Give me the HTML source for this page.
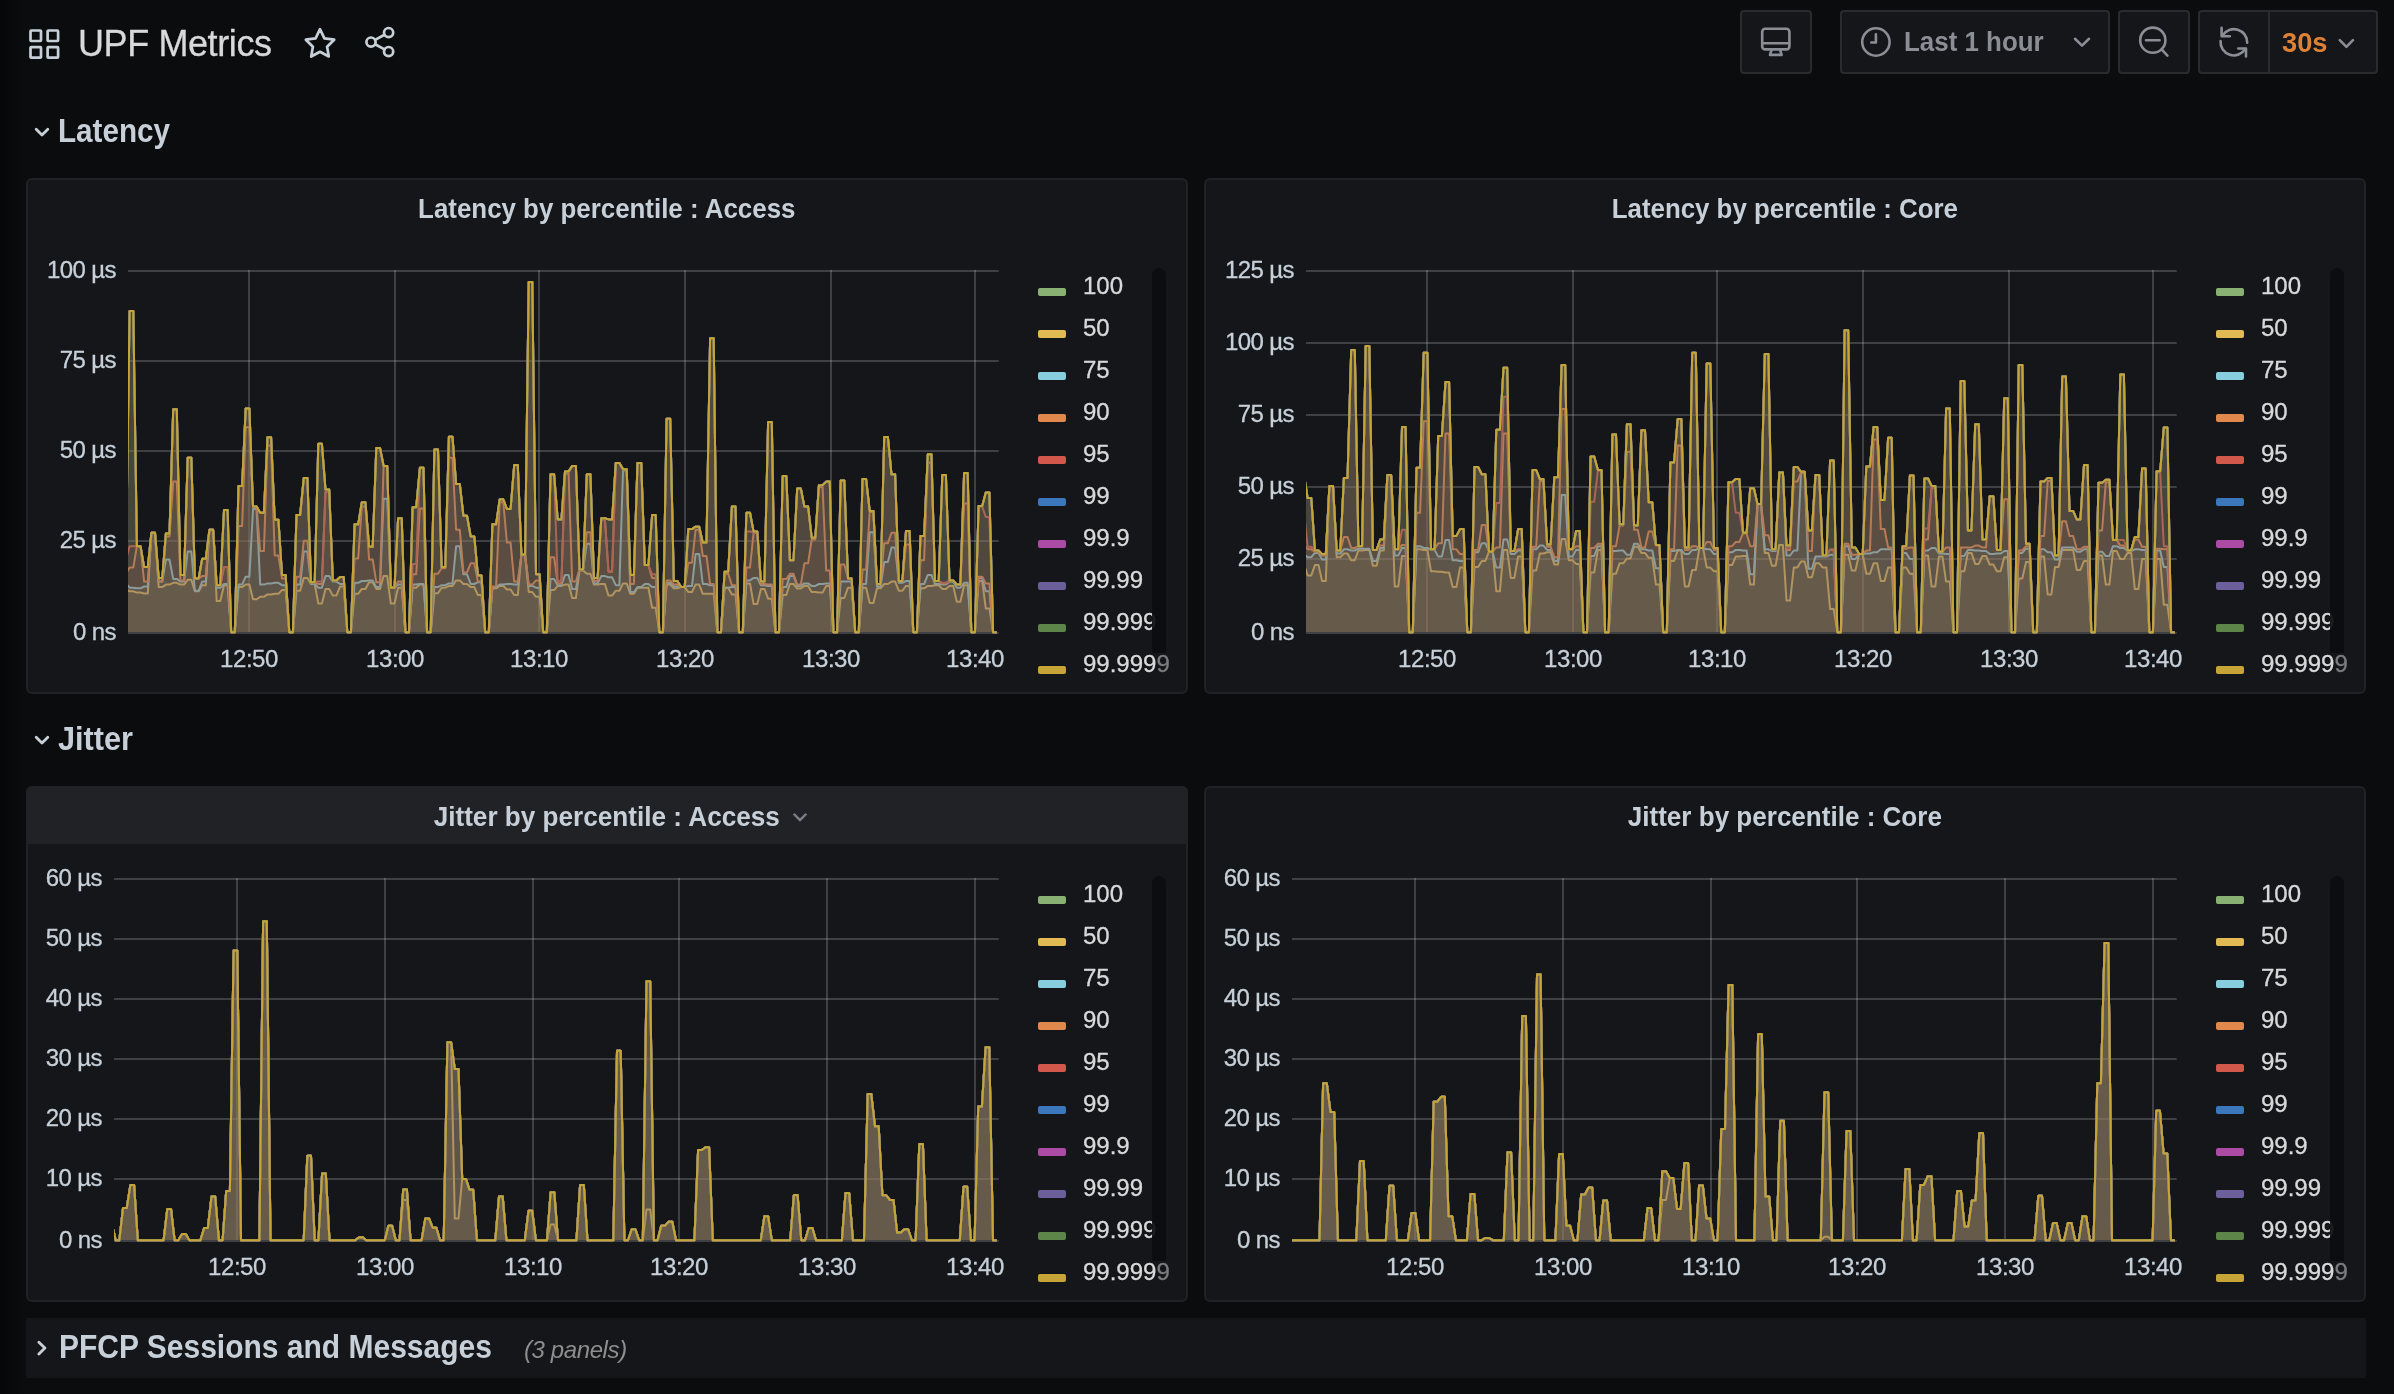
<!DOCTYPE html>
<html><head><meta charset="utf-8"><title>UPF Metrics</title><style>
*{box-sizing:border-box;margin:0;padding:0}
html,body{width:2394px;height:1394px;overflow:hidden;background:#0b0c0e}
body{font-family:"Liberation Sans",sans-serif;color:#c7d0d9;position:relative}
.txt{position:absolute;left:0;top:0;width:2394px;height:1394px;will-change:transform}
.shade{position:absolute;left:0;top:0;width:26px;height:1394px;background:linear-gradient(90deg,rgba(0,0,0,.45),rgba(0,0,0,0))}
.panel{position:absolute;width:1162px;height:516px;background:#141619;border:2px solid #202226;border-radius:6px}
.phead{position:absolute;width:1162px;height:58px;background:#202226;border-radius:6px 6px 0 0}
.ptitle{position:absolute;width:1162px;text-align:center;font-size:28.5px;font-weight:bold;line-height:40px;color:#c7d0d9;white-space:nowrap}
.ptitle .w{display:inline-block;position:relative}
.ptitle .s{display:inline-block;transform-origin:50% 50%}
.caret{position:absolute;left:100%;margin-left:-2.5px;top:17px}
.yl,.xl,.lt{-webkit-text-stroke:.3px currentColor}
.yl{position:absolute;width:100px;text-align:right;font-size:24px;line-height:30px;color:#c7d0d9;letter-spacing:-.6px;white-space:nowrap}
.xl{position:absolute;width:100px;text-align:center;font-size:24px;line-height:30px;color:#c7d0d9;letter-spacing:-.45px;white-space:nowrap}
.sw{position:absolute;width:28px;height:8px;border-radius:2px}
.lt{position:absolute;font-size:24px;line-height:30px;color:#d8d9da;white-space:nowrap}
.dim{color:#7b7c7e}
.sbar{position:absolute;width:14px;height:385px;background:#0c0d0f;border-radius:7px 7px 0 0;opacity:.92}
.row{position:absolute;left:26px;font-size:33px;font-weight:bold;line-height:40px;color:#c7d0d9;white-space:nowrap;transform-origin:0 50%}
.row svg{position:absolute;left:9px}
.row span.t{position:absolute;left:32px;top:0}
svg.main{position:absolute;left:0;top:0}
.title{position:absolute;left:78px;top:22px;font-size:36px;line-height:44px;color:#d8d9da;letter-spacing:-.4px;white-space:nowrap;-webkit-text-stroke:.3px #d8d9da}
.btn{position:absolute;top:10px;height:64px;background:#141619;border:2px solid #2a2b2f;border-radius:4px}
.btxt{position:absolute;font-size:28.5px;font-weight:bold;line-height:36px;white-space:nowrap;transform-origin:0 50%}
.crow{position:absolute;left:26px;top:1318px;width:2340px;height:60px;background:#141619;border-radius:0}
</style></head><body>
<div class="shade"></div>
<div class="txt">
<div class="title">UPF Metrics</div>
<div class="btn" style="left:1740px;width:72px"></div>
<div class="btn" style="left:1840px;width:270px"></div>
<div class="btn" style="left:2118px;width:72px"></div>
<div class="btn" style="left:2198px;width:180px"></div>
<div style="position:absolute;left:2268px;top:12px;width:2px;height:60px;background:#2a2b2f"></div>
<div class="btxt" style="left:1903.5px;top:23px;color:#8b8e95;transform:scaleX(.909)">Last 1 hour</div>
<div class="btxt" style="left:2282px;top:24px;color:#dc8136;transform:scaleX(.957)">30s</div>
<svg style="position:absolute;left:0;top:0" width="2394" height="90" viewBox="0 0 2394 90">
<g fill="none" stroke="#c7d0d9" stroke-width="2.7" stroke-linejoin="round" stroke-linecap="round">
<rect x="30.5" y="30.5" width="10.5" height="10.5" rx="0.8"/><rect x="47.6" y="30.5" width="10.5" height="10.5" rx="0.8"/>
<rect x="30.5" y="47.2" width="10.5" height="10.5" rx="0.8"/><rect x="47.6" y="47.2" width="10.5" height="10.5" rx="0.8"/>
<path d="M320 29.2 L324.4 38.3 L334.2 39.7 L327.1 46.7 L328.8 56.5 L320 51.8 L311.2 56.5 L312.9 46.7 L305.8 39.7 L315.6 38.3 Z"/>
<circle cx="388.6" cy="32.6" r="4.6"/><circle cx="371" cy="42.1" r="4.6"/><circle cx="388.6" cy="51.6" r="4.6"/>
<path d="M375.1 39.9 L384.5 34.8 M375.1 44.3 L384.5 49.4"/>
</g>
<g fill="none" stroke="#8b8e95" stroke-width="2.6" stroke-linejoin="round" stroke-linecap="round">
<!-- monitor -->
<rect x="1762.2" y="28.8" width="27.2" height="20.6" rx="3"/><path d="M1762.5 43.2 H1789.2"/><path d="M1771.5 50 L1770 54.9 H1781.6 L1780.1 50"/>
<!-- clock -->
<circle cx="1875.9" cy="42" r="13.7"/><path d="M1875.9 34.2 V42.5 H1871.3"/>
<!-- chevron -->
<path d="M2075 38.8 L2082 45.6 L2089 38.8"/>
<!-- zoom out -->
<circle cx="2152.8" cy="40.2" r="12.6"/><path d="M2146 40.2 H2159.6 M2161.6 49.4 L2167.4 55.6"/>
<!-- refresh -->
<path d="M2222.6 35.4 A13.3 13.3 0 0 1 2247.2 42.8"/><path d="M2220.6 41 A13.3 13.3 0 0 0 2245.3 48.9"/>
<path d="M2221.6 27.9 V36.2 H2229.8"/><path d="M2238.3 48.5 H2246 V56.4"/>
<!-- chevron 2 -->
<path d="M2339.8 40.2 L2346.4 46.8 L2353 40.2"/>
</g>
</svg>

<svg style="position:absolute;left:34px;top:127px" width="16" height="10" viewBox="0 0 16 10"><path d="M2.2 2.2 L8 8 L13.8 2.2" fill="none" stroke="#c7d0d9" stroke-width="2.8" stroke-linecap="round" stroke-linejoin="round"/></svg><div class="row" style="left:58px;top:111px;transform:scaleX(.898)">Latency</div>
<svg style="position:absolute;left:34px;top:735px" width="16" height="10" viewBox="0 0 16 10"><path d="M2.2 2.2 L8 8 L13.8 2.2" fill="none" stroke="#c7d0d9" stroke-width="2.8" stroke-linecap="round" stroke-linejoin="round"/></svg><div class="row" style="left:58px;top:719px;transform:scaleX(.93)">Jitter</div>
<div class="crow"></div>
<svg style="position:absolute;left:37px;top:1340px" width="10" height="16" viewBox="0 0 10 16"><path d="M1.9 2.2 L7.9 8.1 L1.9 14" fill="none" stroke="#c7d0d9" stroke-width="2.8" stroke-linecap="round" stroke-linejoin="round"/></svg><div class="row" style="left:59px;top:1327px;transform:scaleX(.909)">PFCP Sessions and Messages</div>
<div style="position:absolute;left:524px;top:1335px;font-size:24px;line-height:30px;font-style:italic;color:#8e8e8e;letter-spacing:-.4px">(3 panels)</div>
<div class="panel" style="left:26px;top:178px"></div>
<div class="panel" style="left:1204px;top:178px"></div>
<div class="panel" style="left:26px;top:786px"></div>
<div class="phead" style="left:26px;top:786px"></div>
<div class="panel" style="left:1204px;top:786px"></div>
<svg class="main" width="2394" height="1394" viewBox="0 0 2394 1394">
<rect x="128" y="270" width="870.7" height="2" fill="rgba(255,255,255,0.18)"/>
<rect x="128" y="360" width="870.7" height="2" fill="rgba(255,255,255,0.18)"/>
<rect x="128" y="450" width="870.7" height="2" fill="rgba(255,255,255,0.18)"/>
<rect x="128" y="540" width="870.7" height="2" fill="rgba(255,255,255,0.18)"/>
<rect x="128" y="632" width="870.7" height="2" fill="rgba(255,255,255,0.18)"/>
<rect x="248" y="270" width="2" height="362" fill="rgba(255,255,255,0.18)"/>
<rect x="394" y="270" width="2" height="362" fill="rgba(255,255,255,0.18)"/>
<rect x="538" y="270" width="2" height="362" fill="rgba(255,255,255,0.18)"/>
<rect x="684" y="270" width="2" height="362" fill="rgba(255,255,255,0.18)"/>
<rect x="830" y="270" width="2" height="362" fill="rgba(255,255,255,0.18)"/>
<rect x="974" y="270" width="2" height="362" fill="rgba(255,255,255,0.18)"/>
<clipPath id="c0"><rect x="128" y="265" width="870.7" height="369"/></clipPath>
<g clip-path="url(#c0)">
<path d="M126.0,560.0 L129.6,311.1 L133.3,311.1 L136.9,546.2 L140.5,546.2 L144.1,567.0 L147.8,567.0 L151.4,532.8 L155.0,532.8 L158.7,577.9 L162.3,577.9 L165.9,533.4 L169.5,533.4 L173.2,409.2 L176.8,409.2 L180.4,575.1 L184.1,575.1 L187.7,457.7 L191.3,457.7 L194.9,578.5 L198.6,578.5 L202.2,558.8 L205.8,558.8 L209.4,529.8 L213.1,529.8 L216.7,585.2 L220.3,585.2 L224.0,510.0 L227.6,510.0 L231.2,632.2 L234.8,632.2 L238.5,485.9 L242.1,485.9 L245.7,408.4 L249.4,408.4 L253.0,506.6 L256.6,506.6 L260.2,512.7 L263.9,512.7 L267.5,437.3 L271.1,437.3 L274.7,519.8 L278.4,519.8 L282.0,574.9 L285.6,574.9 L289.3,632.2 L292.9,632.2 L296.5,515.1 L300.1,515.1 L303.8,477.9 L307.4,477.9 L311.0,582.2 L314.7,582.2 L318.3,443.8 L321.9,443.8 L325.5,489.5 L329.2,489.5 L332.8,580.4 L336.4,580.4 L340.1,577.1 L343.7,577.1 L347.3,632.2 L350.9,632.2 L354.6,524.3 L358.2,524.3 L361.8,502.3 L365.4,502.3 L369.1,546.8 L372.7,546.8 L376.3,447.9 L380.0,447.9 L383.6,465.9 L387.2,465.9 L390.8,587.7 L394.5,587.7 L398.1,518.2 L401.7,518.2 L405.4,632.2 L409.0,632.2 L412.6,507.2 L416.2,507.2 L419.9,467.8 L423.5,467.8 L427.1,632.2 L430.7,632.2 L434.4,449.6 L438.0,449.6 L441.6,567.0 L445.3,567.0 L448.9,436.8 L452.5,436.8 L456.1,484.0 L459.8,484.0 L463.4,515.7 L467.0,515.7 L470.7,536.5 L474.3,536.5 L477.9,575.5 L481.5,575.5 L485.2,632.2 L488.8,632.2 L492.4,524.3 L496.1,524.3 L499.7,499.3 L503.3,499.3 L506.9,509.0 L510.6,509.0 L514.2,465.1 L517.8,465.1 L521.4,554.8 L525.1,554.8 L528.7,281.9 L532.3,281.9 L536.0,574.3 L539.6,574.3 L543.2,632.2 L546.8,632.2 L550.5,474.3 L554.1,474.3 L557.7,519.4 L561.4,519.4 L565.0,471.4 L568.6,471.4 L572.2,465.9 L575.9,465.9 L579.5,569.4 L583.1,569.4 L586.8,474.3 L590.4,474.3 L594.0,577.9 L597.6,577.9 L601.3,518.2 L604.9,518.2 L608.5,519.4 L612.1,519.4 L615.8,462.9 L619.4,462.9 L623.0,469.2 L626.7,469.2 L630.3,574.9 L633.9,574.9 L637.5,462.9 L641.2,462.9 L644.8,565.1 L648.4,565.1 L652.1,515.1 L655.7,515.1 L659.3,632.2 L662.9,632.2 L666.6,418.8 L670.2,418.8 L673.8,581.0 L677.4,581.0 L681.1,587.1 L684.7,587.1 L688.3,529.1 L692.0,529.1 L695.6,526.7 L699.2,526.7 L702.8,542.6 L706.5,542.6 L710.1,338.3 L713.7,338.3 L717.4,632.2 L721.0,632.2 L724.6,571.8 L728.2,571.8 L731.9,506.6 L735.5,506.6 L739.1,632.2 L742.8,632.2 L746.4,512.7 L750.0,512.7 L753.6,531.6 L757.3,531.6 L760.9,581.6 L764.5,581.6 L768.1,422.0 L771.8,422.0 L775.4,632.2 L779.0,632.2 L782.7,476.1 L786.3,476.1 L789.9,560.2 L793.5,560.2 L797.2,488.5 L800.8,488.5 L804.4,506.6 L808.1,506.6 L811.7,537.7 L815.3,537.7 L818.9,485.2 L822.6,485.2 L826.2,481.6 L829.8,481.6 L833.4,632.2 L837.1,632.2 L840.7,480.4 L844.3,480.4 L848.0,578.5 L851.6,578.5 L855.2,632.2 L858.8,632.2 L862.5,479.1 L866.1,479.1 L869.7,510.9 L873.4,510.9 L877.0,584.0 L880.6,584.0 L884.2,437.0 L887.9,437.0 L891.5,474.3 L895.1,474.3 L898.8,581.0 L902.4,581.0 L906.0,531.0 L909.6,531.0 L913.3,632.2 L916.9,632.2 L920.5,535.9 L924.1,535.9 L927.8,454.2 L931.4,454.2 L935.0,581.0 L938.7,581.0 L942.3,474.9 L945.9,474.9 L949.5,580.4 L953.2,580.4 L956.8,584.6 L960.4,584.6 L964.1,473.0 L967.7,473.0 L971.3,632.2 L974.9,632.2 L978.6,506.0 L982.2,506.0 L985.8,492.6 L989.4,492.6 L993.1,632.2 L996.7,632.2 L996.7,632 L126.0,632 Z" fill="#7EB26D" fill-opacity="0.1" stroke="none"/>
<path d="M126.0,560.0 L129.6,311.1 L133.3,311.1 L136.9,546.2 L140.5,546.2 L144.1,567.0 L147.8,567.0 L151.4,532.8 L155.0,532.8 L158.7,577.9 L162.3,577.9 L165.9,533.4 L169.5,533.4 L173.2,409.2 L176.8,409.2 L180.4,575.1 L184.1,575.1 L187.7,457.7 L191.3,457.7 L194.9,578.5 L198.6,578.5 L202.2,558.8 L205.8,558.8 L209.4,529.8 L213.1,529.8 L216.7,585.2 L220.3,585.2 L224.0,510.0 L227.6,510.0 L231.2,632.2 L234.8,632.2 L238.5,485.9 L242.1,485.9 L245.7,408.4 L249.4,408.4 L253.0,506.6 L256.6,506.6 L260.2,512.7 L263.9,512.7 L267.5,437.3 L271.1,437.3 L274.7,519.8 L278.4,519.8 L282.0,574.9 L285.6,574.9 L289.3,632.2 L292.9,632.2 L296.5,515.1 L300.1,515.1 L303.8,477.9 L307.4,477.9 L311.0,582.2 L314.7,582.2 L318.3,443.8 L321.9,443.8 L325.5,489.5 L329.2,489.5 L332.8,580.4 L336.4,580.4 L340.1,577.1 L343.7,577.1 L347.3,632.2 L350.9,632.2 L354.6,524.3 L358.2,524.3 L361.8,502.3 L365.4,502.3 L369.1,546.8 L372.7,546.8 L376.3,447.9 L380.0,447.9 L383.6,465.9 L387.2,465.9 L390.8,587.7 L394.5,587.7 L398.1,518.2 L401.7,518.2 L405.4,632.2 L409.0,632.2 L412.6,507.2 L416.2,507.2 L419.9,467.8 L423.5,467.8 L427.1,632.2 L430.7,632.2 L434.4,449.6 L438.0,449.6 L441.6,567.0 L445.3,567.0 L448.9,436.8 L452.5,436.8 L456.1,484.0 L459.8,484.0 L463.4,515.7 L467.0,515.7 L470.7,536.5 L474.3,536.5 L477.9,575.5 L481.5,575.5 L485.2,632.2 L488.8,632.2 L492.4,524.3 L496.1,524.3 L499.7,499.3 L503.3,499.3 L506.9,509.0 L510.6,509.0 L514.2,465.1 L517.8,465.1 L521.4,554.8 L525.1,554.8 L528.7,281.9 L532.3,281.9 L536.0,574.3 L539.6,574.3 L543.2,632.2 L546.8,632.2 L550.5,474.3 L554.1,474.3 L557.7,519.4 L561.4,519.4 L565.0,471.4 L568.6,471.4 L572.2,465.9 L575.9,465.9 L579.5,569.4 L583.1,569.4 L586.8,474.3 L590.4,474.3 L594.0,577.9 L597.6,577.9 L601.3,518.2 L604.9,518.2 L608.5,519.4 L612.1,519.4 L615.8,462.9 L619.4,462.9 L623.0,469.2 L626.7,469.2 L630.3,574.9 L633.9,574.9 L637.5,462.9 L641.2,462.9 L644.8,565.1 L648.4,565.1 L652.1,515.1 L655.7,515.1 L659.3,632.2 L662.9,632.2 L666.6,418.8 L670.2,418.8 L673.8,581.0 L677.4,581.0 L681.1,587.1 L684.7,587.1 L688.3,529.1 L692.0,529.1 L695.6,526.7 L699.2,526.7 L702.8,542.6 L706.5,542.6 L710.1,338.3 L713.7,338.3 L717.4,632.2 L721.0,632.2 L724.6,571.8 L728.2,571.8 L731.9,506.6 L735.5,506.6 L739.1,632.2 L742.8,632.2 L746.4,512.7 L750.0,512.7 L753.6,531.6 L757.3,531.6 L760.9,581.6 L764.5,581.6 L768.1,422.0 L771.8,422.0 L775.4,632.2 L779.0,632.2 L782.7,476.1 L786.3,476.1 L789.9,560.2 L793.5,560.2 L797.2,488.5 L800.8,488.5 L804.4,506.6 L808.1,506.6 L811.7,537.7 L815.3,537.7 L818.9,485.2 L822.6,485.2 L826.2,481.6 L829.8,481.6 L833.4,632.2 L837.1,632.2 L840.7,480.4 L844.3,480.4 L848.0,578.5 L851.6,578.5 L855.2,632.2 L858.8,632.2 L862.5,479.1 L866.1,479.1 L869.7,510.9 L873.4,510.9 L877.0,584.0 L880.6,584.0 L884.2,437.0 L887.9,437.0 L891.5,474.3 L895.1,474.3 L898.8,581.0 L902.4,581.0 L906.0,531.0 L909.6,531.0 L913.3,632.2 L916.9,632.2 L920.5,535.9 L924.1,535.9 L927.8,454.2 L931.4,454.2 L935.0,581.0 L938.7,581.0 L942.3,474.9 L945.9,474.9 L949.5,580.4 L953.2,580.4 L956.8,584.6 L960.4,584.6 L964.1,473.0 L967.7,473.0 L971.3,632.2 L974.9,632.2 L978.6,506.0 L982.2,506.0 L985.8,492.6 L989.4,492.6 L993.1,632.2 L996.7,632.2" fill="none" stroke="#89b174" stroke-width="2" stroke-linejoin="round"/>
<path d="M126.0,588.9 L129.6,591.3 L133.3,591.3 L136.9,592.6 L140.5,592.6 L144.1,593.4 L147.8,593.4 L151.4,532.8 L155.0,532.8 L158.7,587.1 L162.3,587.1 L165.9,584.6 L169.5,584.6 L173.2,582.8 L176.8,582.8 L180.4,584.6 L184.1,584.6 L187.7,579.8 L191.3,579.8 L194.9,591.3 L198.6,591.3 L202.2,585.2 L205.8,585.2 L209.4,529.8 L213.1,529.8 L216.7,601.1 L220.3,601.1 L224.0,585.2 L227.6,585.2 L231.2,632.2 L234.8,632.2 L238.5,587.1 L242.1,587.1 L245.7,584.6 L249.4,584.6 L253.0,599.3 L256.6,599.3 L260.2,596.8 L263.9,596.8 L267.5,594.4 L271.1,594.4 L274.7,593.8 L278.4,593.8 L282.0,590.1 L285.6,590.1 L289.3,632.2 L292.9,632.2 L296.5,590.7 L300.1,590.7 L303.8,577.9 L307.4,577.9 L311.0,584.0 L314.7,584.0 L318.3,603.5 L321.9,603.5 L325.5,588.9 L329.2,588.9 L332.8,595.6 L336.4,595.6 L340.1,586.5 L343.7,586.5 L347.3,632.2 L350.9,632.2 L354.6,593.8 L358.2,593.8 L361.8,588.9 L365.4,588.9 L369.1,582.2 L372.7,582.2 L376.3,588.9 L380.0,588.9 L383.6,576.1 L387.2,576.1 L390.8,603.5 L394.5,603.5 L398.1,587.7 L401.7,587.7 L405.4,632.2 L409.0,632.2 L412.6,587.7 L416.2,587.7 L419.9,584.6 L423.5,584.6 L427.1,632.2 L430.7,632.2 L434.4,593.2 L438.0,593.2 L441.6,587.7 L445.3,587.7 L448.9,585.9 L452.5,585.9 L456.1,580.4 L459.8,580.4 L463.4,584.0 L467.0,584.0 L470.7,587.1 L474.3,587.1 L477.9,595.0 L481.5,595.0 L485.2,632.2 L488.8,632.2 L492.4,588.3 L496.1,588.3 L499.7,585.9 L503.3,585.9 L506.9,589.5 L510.6,589.5 L514.2,595.0 L517.8,595.0 L521.4,554.8 L525.1,554.8 L528.7,592.0 L532.3,592.0 L536.0,596.8 L539.6,596.8 L543.2,632.2 L546.8,632.2 L550.5,590.1 L554.1,590.1 L557.7,585.9 L561.4,585.9 L565.0,584.6 L568.6,584.6 L572.2,598.0 L575.9,598.0 L579.5,570.6 L583.1,570.6 L586.8,573.7 L590.4,573.7 L594.0,584.6 L597.6,584.6 L601.3,584.0 L604.9,584.0 L608.5,595.6 L612.1,595.6 L615.8,590.7 L619.4,590.7 L623.0,583.4 L626.7,583.4 L630.3,593.8 L633.9,593.8 L637.5,587.7 L641.2,587.7 L644.8,587.7 L648.4,587.7 L652.1,607.8 L655.7,607.8 L659.3,632.2 L662.9,632.2 L666.6,584.6 L670.2,584.6 L673.8,588.3 L677.4,588.3 L681.1,587.1 L684.7,587.1 L688.3,592.0 L692.0,592.0 L695.6,584.6 L699.2,584.6 L702.8,593.8 L706.5,593.8 L710.1,593.8 L713.7,593.8 L717.4,632.2 L721.0,632.2 L724.6,587.7 L728.2,587.7 L731.9,594.4 L735.5,594.4 L739.1,632.2 L742.8,632.2 L746.4,583.4 L750.0,583.4 L753.6,604.1 L757.3,604.1 L760.9,588.9 L764.5,588.9 L768.1,598.7 L771.8,598.7 L775.4,632.2 L779.0,632.2 L782.7,595.0 L786.3,595.0 L789.9,584.0 L793.5,584.0 L797.2,588.5 L800.8,588.5 L804.4,585.9 L808.1,585.9 L811.7,592.0 L815.3,592.0 L818.9,592.6 L822.6,592.6 L826.2,585.9 L829.8,585.9 L833.4,632.2 L837.1,632.2 L840.7,598.0 L844.3,598.0 L848.0,587.7 L851.6,587.7 L855.2,632.2 L858.8,632.2 L862.5,587.7 L866.1,587.7 L869.7,602.9 L873.4,602.9 L877.0,588.3 L880.6,588.3 L884.2,584.0 L887.9,584.0 L891.5,581.6 L895.1,581.6 L898.8,590.7 L902.4,590.7 L906.0,585.9 L909.6,585.9 L913.3,632.2 L916.9,632.2 L920.5,588.3 L924.1,588.3 L927.8,585.9 L931.4,585.9 L935.0,585.2 L938.7,585.2 L942.3,588.9 L945.9,588.9 L949.5,585.9 L953.2,585.9 L956.8,601.7 L960.4,601.7 L964.1,585.2 L967.7,585.2 L971.3,632.2 L974.9,632.2 L978.6,581.0 L982.2,581.0 L985.8,608.4 L989.4,608.4 L993.1,632.2 L996.7,632.2 L996.7,632 L126.0,632 Z" fill="#EAB839" fill-opacity="0.1" stroke="none"/>
<path d="M126.0,588.9 L129.6,591.3 L133.3,591.3 L136.9,592.6 L140.5,592.6 L144.1,593.4 L147.8,593.4 L151.4,532.8 L155.0,532.8 L158.7,587.1 L162.3,587.1 L165.9,584.6 L169.5,584.6 L173.2,582.8 L176.8,582.8 L180.4,584.6 L184.1,584.6 L187.7,579.8 L191.3,579.8 L194.9,591.3 L198.6,591.3 L202.2,585.2 L205.8,585.2 L209.4,529.8 L213.1,529.8 L216.7,601.1 L220.3,601.1 L224.0,585.2 L227.6,585.2 L231.2,632.2 L234.8,632.2 L238.5,587.1 L242.1,587.1 L245.7,584.6 L249.4,584.6 L253.0,599.3 L256.6,599.3 L260.2,596.8 L263.9,596.8 L267.5,594.4 L271.1,594.4 L274.7,593.8 L278.4,593.8 L282.0,590.1 L285.6,590.1 L289.3,632.2 L292.9,632.2 L296.5,590.7 L300.1,590.7 L303.8,577.9 L307.4,577.9 L311.0,584.0 L314.7,584.0 L318.3,603.5 L321.9,603.5 L325.5,588.9 L329.2,588.9 L332.8,595.6 L336.4,595.6 L340.1,586.5 L343.7,586.5 L347.3,632.2 L350.9,632.2 L354.6,593.8 L358.2,593.8 L361.8,588.9 L365.4,588.9 L369.1,582.2 L372.7,582.2 L376.3,588.9 L380.0,588.9 L383.6,576.1 L387.2,576.1 L390.8,603.5 L394.5,603.5 L398.1,587.7 L401.7,587.7 L405.4,632.2 L409.0,632.2 L412.6,587.7 L416.2,587.7 L419.9,584.6 L423.5,584.6 L427.1,632.2 L430.7,632.2 L434.4,593.2 L438.0,593.2 L441.6,587.7 L445.3,587.7 L448.9,585.9 L452.5,585.9 L456.1,580.4 L459.8,580.4 L463.4,584.0 L467.0,584.0 L470.7,587.1 L474.3,587.1 L477.9,595.0 L481.5,595.0 L485.2,632.2 L488.8,632.2 L492.4,588.3 L496.1,588.3 L499.7,585.9 L503.3,585.9 L506.9,589.5 L510.6,589.5 L514.2,595.0 L517.8,595.0 L521.4,554.8 L525.1,554.8 L528.7,592.0 L532.3,592.0 L536.0,596.8 L539.6,596.8 L543.2,632.2 L546.8,632.2 L550.5,590.1 L554.1,590.1 L557.7,585.9 L561.4,585.9 L565.0,584.6 L568.6,584.6 L572.2,598.0 L575.9,598.0 L579.5,570.6 L583.1,570.6 L586.8,573.7 L590.4,573.7 L594.0,584.6 L597.6,584.6 L601.3,584.0 L604.9,584.0 L608.5,595.6 L612.1,595.6 L615.8,590.7 L619.4,590.7 L623.0,583.4 L626.7,583.4 L630.3,593.8 L633.9,593.8 L637.5,587.7 L641.2,587.7 L644.8,587.7 L648.4,587.7 L652.1,607.8 L655.7,607.8 L659.3,632.2 L662.9,632.2 L666.6,584.6 L670.2,584.6 L673.8,588.3 L677.4,588.3 L681.1,587.1 L684.7,587.1 L688.3,592.0 L692.0,592.0 L695.6,584.6 L699.2,584.6 L702.8,593.8 L706.5,593.8 L710.1,593.8 L713.7,593.8 L717.4,632.2 L721.0,632.2 L724.6,587.7 L728.2,587.7 L731.9,594.4 L735.5,594.4 L739.1,632.2 L742.8,632.2 L746.4,583.4 L750.0,583.4 L753.6,604.1 L757.3,604.1 L760.9,588.9 L764.5,588.9 L768.1,598.7 L771.8,598.7 L775.4,632.2 L779.0,632.2 L782.7,595.0 L786.3,595.0 L789.9,584.0 L793.5,584.0 L797.2,588.5 L800.8,588.5 L804.4,585.9 L808.1,585.9 L811.7,592.0 L815.3,592.0 L818.9,592.6 L822.6,592.6 L826.2,585.9 L829.8,585.9 L833.4,632.2 L837.1,632.2 L840.7,598.0 L844.3,598.0 L848.0,587.7 L851.6,587.7 L855.2,632.2 L858.8,632.2 L862.5,587.7 L866.1,587.7 L869.7,602.9 L873.4,602.9 L877.0,588.3 L880.6,588.3 L884.2,584.0 L887.9,584.0 L891.5,581.6 L895.1,581.6 L898.8,590.7 L902.4,590.7 L906.0,585.9 L909.6,585.9 L913.3,632.2 L916.9,632.2 L920.5,588.3 L924.1,588.3 L927.8,585.9 L931.4,585.9 L935.0,585.2 L938.7,585.2 L942.3,588.9 L945.9,588.9 L949.5,585.9 L953.2,585.9 L956.8,601.7 L960.4,601.7 L964.1,585.2 L967.7,585.2 L971.3,632.2 L974.9,632.2 L978.6,581.0 L982.2,581.0 L985.8,608.4 L989.4,608.4 L993.1,632.2 L996.7,632.2" fill="none" stroke="#e2ba53" stroke-width="2" stroke-linejoin="round"/>
<path d="M126.0,583.4 L129.6,587.7 L133.3,587.7 L136.9,588.3 L140.5,588.3 L144.1,586.5 L147.8,586.5 L151.4,532.8 L155.0,532.8 L158.7,581.6 L162.3,581.6 L165.9,559.6 L169.5,559.6 L173.2,578.9 L176.8,578.9 L180.4,581.6 L184.1,581.6 L187.7,551.5 L191.3,551.5 L194.9,590.7 L198.6,590.7 L202.2,581.6 L205.8,581.6 L209.4,529.8 L213.1,529.8 L216.7,587.7 L220.3,587.7 L224.0,584.0 L227.6,584.0 L231.2,632.2 L234.8,632.2 L238.5,584.6 L242.1,584.6 L245.7,576.7 L249.4,576.7 L253.0,509.0 L256.6,509.0 L260.2,584.6 L263.9,584.6 L267.5,583.4 L271.1,583.4 L274.7,582.8 L278.4,582.8 L282.0,585.2 L285.6,585.2 L289.3,632.2 L292.9,632.2 L296.5,584.6 L300.1,584.6 L303.8,551.5 L307.4,551.5 L311.0,584.0 L314.7,584.0 L318.3,587.7 L321.9,587.7 L325.5,576.1 L329.2,576.1 L332.8,581.6 L336.4,581.6 L340.1,584.0 L343.7,584.0 L347.3,632.2 L350.9,632.2 L354.6,582.8 L358.2,582.8 L361.8,581.0 L365.4,581.0 L369.1,580.4 L372.7,580.4 L376.3,587.1 L380.0,587.1 L383.6,498.7 L387.2,498.7 L390.8,587.7 L394.5,587.7 L398.1,584.6 L401.7,584.6 L405.4,632.2 L409.0,632.2 L412.6,584.6 L416.2,584.6 L419.9,584.0 L423.5,584.0 L427.1,632.2 L430.7,632.2 L434.4,587.1 L438.0,587.1 L441.6,585.2 L445.3,585.2 L448.9,583.4 L452.5,583.4 L456.1,546.2 L459.8,546.2 L463.4,574.3 L467.0,574.3 L470.7,584.0 L474.3,584.0 L477.9,582.2 L481.5,582.2 L485.2,632.2 L488.8,632.2 L492.4,587.1 L496.1,587.1 L499.7,584.6 L503.3,584.6 L506.9,584.0 L510.6,584.0 L514.2,584.6 L517.8,584.6 L521.4,554.8 L525.1,554.8 L528.7,585.9 L532.3,585.9 L536.0,587.7 L539.6,587.7 L543.2,632.2 L546.8,632.2 L550.5,579.1 L554.1,579.1 L557.7,585.2 L561.4,585.2 L565.0,574.9 L568.6,574.9 L572.2,588.9 L575.9,588.9 L579.5,569.4 L583.1,569.4 L586.8,543.8 L590.4,543.8 L594.0,583.4 L597.6,583.4 L601.3,576.1 L604.9,576.1 L608.5,577.3 L612.1,577.3 L615.8,585.2 L619.4,585.2 L623.0,470.6 L626.7,470.6 L630.3,592.0 L633.9,592.0 L637.5,587.1 L641.2,587.1 L644.8,584.0 L648.4,584.0 L652.1,587.1 L655.7,587.1 L659.3,632.2 L662.9,632.2 L666.6,582.8 L670.2,582.8 L673.8,586.5 L677.4,586.5 L681.1,587.1 L684.7,587.1 L688.3,585.9 L692.0,585.9 L695.6,554.1 L699.2,554.1 L702.8,584.0 L706.5,584.0 L710.1,585.2 L713.7,585.2 L717.4,632.2 L721.0,632.2 L724.6,587.7 L728.2,587.7 L731.9,587.1 L735.5,587.1 L739.1,632.2 L742.8,632.2 L746.4,580.4 L750.0,580.4 L753.6,577.9 L757.3,577.9 L760.9,585.2 L764.5,585.2 L768.1,585.9 L771.8,585.9 L775.4,632.2 L779.0,632.2 L782.7,587.1 L786.3,587.1 L789.9,575.9 L793.5,575.9 L797.2,585.9 L800.8,585.9 L804.4,583.4 L808.1,583.4 L811.7,585.9 L815.3,585.9 L818.9,584.0 L822.6,584.0 L826.2,583.4 L829.8,583.4 L833.4,632.2 L837.1,632.2 L840.7,581.6 L844.3,581.6 L848.0,581.6 L851.6,581.6 L855.2,632.2 L858.8,632.2 L862.5,584.0 L866.1,584.0 L869.7,532.2 L873.4,532.2 L877.0,586.5 L880.6,586.5 L884.2,562.1 L887.9,562.1 L891.5,547.4 L895.1,547.4 L898.8,582.8 L902.4,582.8 L906.0,581.0 L909.6,581.0 L913.3,632.2 L916.9,632.2 L920.5,584.0 L924.1,584.0 L927.8,574.9 L931.4,574.9 L935.0,584.0 L938.7,584.0 L942.3,584.6 L945.9,584.6 L949.5,581.6 L953.2,581.6 L956.8,587.7 L960.4,587.7 L964.1,582.8 L967.7,582.8 L971.3,632.2 L974.9,632.2 L978.6,577.9 L982.2,577.9 L985.8,591.3 L989.4,591.3 L993.1,632.2 L996.7,632.2 L996.7,632 L126.0,632 Z" fill="#6ED0E0" fill-opacity="0.1" stroke="none"/>
<path d="M126.0,583.4 L129.6,587.7 L133.3,587.7 L136.9,588.3 L140.5,588.3 L144.1,586.5 L147.8,586.5 L151.4,532.8 L155.0,532.8 L158.7,581.6 L162.3,581.6 L165.9,559.6 L169.5,559.6 L173.2,578.9 L176.8,578.9 L180.4,581.6 L184.1,581.6 L187.7,551.5 L191.3,551.5 L194.9,590.7 L198.6,590.7 L202.2,581.6 L205.8,581.6 L209.4,529.8 L213.1,529.8 L216.7,587.7 L220.3,587.7 L224.0,584.0 L227.6,584.0 L231.2,632.2 L234.8,632.2 L238.5,584.6 L242.1,584.6 L245.7,576.7 L249.4,576.7 L253.0,509.0 L256.6,509.0 L260.2,584.6 L263.9,584.6 L267.5,583.4 L271.1,583.4 L274.7,582.8 L278.4,582.8 L282.0,585.2 L285.6,585.2 L289.3,632.2 L292.9,632.2 L296.5,584.6 L300.1,584.6 L303.8,551.5 L307.4,551.5 L311.0,584.0 L314.7,584.0 L318.3,587.7 L321.9,587.7 L325.5,576.1 L329.2,576.1 L332.8,581.6 L336.4,581.6 L340.1,584.0 L343.7,584.0 L347.3,632.2 L350.9,632.2 L354.6,582.8 L358.2,582.8 L361.8,581.0 L365.4,581.0 L369.1,580.4 L372.7,580.4 L376.3,587.1 L380.0,587.1 L383.6,498.7 L387.2,498.7 L390.8,587.7 L394.5,587.7 L398.1,584.6 L401.7,584.6 L405.4,632.2 L409.0,632.2 L412.6,584.6 L416.2,584.6 L419.9,584.0 L423.5,584.0 L427.1,632.2 L430.7,632.2 L434.4,587.1 L438.0,587.1 L441.6,585.2 L445.3,585.2 L448.9,583.4 L452.5,583.4 L456.1,546.2 L459.8,546.2 L463.4,574.3 L467.0,574.3 L470.7,584.0 L474.3,584.0 L477.9,582.2 L481.5,582.2 L485.2,632.2 L488.8,632.2 L492.4,587.1 L496.1,587.1 L499.7,584.6 L503.3,584.6 L506.9,584.0 L510.6,584.0 L514.2,584.6 L517.8,584.6 L521.4,554.8 L525.1,554.8 L528.7,585.9 L532.3,585.9 L536.0,587.7 L539.6,587.7 L543.2,632.2 L546.8,632.2 L550.5,579.1 L554.1,579.1 L557.7,585.2 L561.4,585.2 L565.0,574.9 L568.6,574.9 L572.2,588.9 L575.9,588.9 L579.5,569.4 L583.1,569.4 L586.8,543.8 L590.4,543.8 L594.0,583.4 L597.6,583.4 L601.3,576.1 L604.9,576.1 L608.5,577.3 L612.1,577.3 L615.8,585.2 L619.4,585.2 L623.0,470.6 L626.7,470.6 L630.3,592.0 L633.9,592.0 L637.5,587.1 L641.2,587.1 L644.8,584.0 L648.4,584.0 L652.1,587.1 L655.7,587.1 L659.3,632.2 L662.9,632.2 L666.6,582.8 L670.2,582.8 L673.8,586.5 L677.4,586.5 L681.1,587.1 L684.7,587.1 L688.3,585.9 L692.0,585.9 L695.6,554.1 L699.2,554.1 L702.8,584.0 L706.5,584.0 L710.1,585.2 L713.7,585.2 L717.4,632.2 L721.0,632.2 L724.6,587.7 L728.2,587.7 L731.9,587.1 L735.5,587.1 L739.1,632.2 L742.8,632.2 L746.4,580.4 L750.0,580.4 L753.6,577.9 L757.3,577.9 L760.9,585.2 L764.5,585.2 L768.1,585.9 L771.8,585.9 L775.4,632.2 L779.0,632.2 L782.7,587.1 L786.3,587.1 L789.9,575.9 L793.5,575.9 L797.2,585.9 L800.8,585.9 L804.4,583.4 L808.1,583.4 L811.7,585.9 L815.3,585.9 L818.9,584.0 L822.6,584.0 L826.2,583.4 L829.8,583.4 L833.4,632.2 L837.1,632.2 L840.7,581.6 L844.3,581.6 L848.0,581.6 L851.6,581.6 L855.2,632.2 L858.8,632.2 L862.5,584.0 L866.1,584.0 L869.7,532.2 L873.4,532.2 L877.0,586.5 L880.6,586.5 L884.2,562.1 L887.9,562.1 L891.5,547.4 L895.1,547.4 L898.8,582.8 L902.4,582.8 L906.0,581.0 L909.6,581.0 L913.3,632.2 L916.9,632.2 L920.5,584.0 L924.1,584.0 L927.8,574.9 L931.4,574.9 L935.0,584.0 L938.7,584.0 L942.3,584.6 L945.9,584.6 L949.5,581.6 L953.2,581.6 L956.8,587.7 L960.4,587.7 L964.1,582.8 L967.7,582.8 L971.3,632.2 L974.9,632.2 L978.6,577.9 L982.2,577.9 L985.8,591.3 L989.4,591.3 L993.1,632.2 L996.7,632.2" fill="none" stroke="#86cede" stroke-width="2" stroke-linejoin="round"/>
<path d="M126.0,573.7 L129.6,567.6 L133.3,567.6 L136.9,546.2 L140.5,546.2 L144.1,581.6 L147.8,581.6 L151.4,532.8 L155.0,532.8 L158.7,581.6 L162.3,581.6 L165.9,536.5 L169.5,536.5 L173.2,481.6 L176.8,481.6 L180.4,580.4 L184.1,580.4 L187.7,457.7 L191.3,457.7 L194.9,578.5 L198.6,578.5 L202.2,576.1 L205.8,576.1 L209.4,529.8 L213.1,529.8 L216.7,585.2 L220.3,585.2 L224.0,567.0 L227.6,567.0 L231.2,632.2 L234.8,632.2 L238.5,526.1 L242.1,526.1 L245.7,427.3 L249.4,427.3 L253.0,506.6 L256.6,506.6 L260.2,551.1 L263.9,551.1 L267.5,445.6 L271.1,445.6 L274.7,555.4 L278.4,555.4 L282.0,578.5 L285.6,578.5 L289.3,632.2 L292.9,632.2 L296.5,576.7 L300.1,576.7 L303.8,540.7 L307.4,540.7 L311.0,582.2 L314.7,582.2 L318.3,584.0 L321.9,584.0 L325.5,492.0 L329.2,492.0 L332.8,580.4 L336.4,580.4 L340.1,577.1 L343.7,577.1 L347.3,632.2 L350.9,632.2 L354.6,558.4 L358.2,558.4 L361.8,506.6 L365.4,506.6 L369.1,559.6 L372.7,559.6 L376.3,582.2 L380.0,582.2 L383.6,465.9 L387.2,465.9 L390.8,587.7 L394.5,587.7 L398.1,581.6 L401.7,581.6 L405.4,632.2 L409.0,632.2 L412.6,574.3 L416.2,574.3 L419.9,508.4 L423.5,508.4 L427.1,632.2 L430.7,632.2 L434.4,573.7 L438.0,573.7 L441.6,568.2 L445.3,568.2 L448.9,457.8 L452.5,457.8 L456.1,529.8 L459.8,529.8 L463.4,572.4 L467.0,572.4 L470.7,563.3 L474.3,563.3 L477.9,581.6 L481.5,581.6 L485.2,632.2 L488.8,632.2 L492.4,586.5 L496.1,586.5 L499.7,502.3 L503.3,502.3 L506.9,542.6 L510.6,542.6 L514.2,581.6 L517.8,581.6 L521.4,554.8 L525.1,554.8 L528.7,584.6 L532.3,584.6 L536.0,580.4 L539.6,580.4 L543.2,632.2 L546.8,632.2 L550.5,557.2 L554.1,557.2 L557.7,583.4 L561.4,583.4 L565.0,473.7 L568.6,473.7 L572.2,581.6 L575.9,581.6 L579.5,569.4 L583.1,569.4 L586.8,532.2 L590.4,532.2 L594.0,581.0 L597.6,581.0 L601.3,519.4 L604.9,519.4 L608.5,571.8 L612.1,571.8 L615.8,462.9 L619.4,462.9 L623.0,469.2 L626.7,469.2 L630.3,584.0 L633.9,584.0 L637.5,462.9 L641.2,462.9 L644.8,565.1 L648.4,565.1 L652.1,577.9 L655.7,577.9 L659.3,632.2 L662.9,632.2 L666.6,580.4 L670.2,580.4 L673.8,584.6 L677.4,584.6 L681.1,587.1 L684.7,587.1 L688.3,562.7 L692.0,562.7 L695.6,529.8 L699.2,529.8 L702.8,556.0 L706.5,556.0 L710.1,584.0 L713.7,584.0 L717.4,632.2 L721.0,632.2 L724.6,573.7 L728.2,573.7 L731.9,585.2 L735.5,585.2 L739.1,632.2 L742.8,632.2 L746.4,567.6 L750.0,567.6 L753.6,532.8 L757.3,532.8 L760.9,584.0 L764.5,584.0 L768.1,584.6 L771.8,584.6 L775.4,632.2 L779.0,632.2 L782.7,579.1 L786.3,579.1 L789.9,573.7 L793.5,573.7 L797.2,584.6 L800.8,584.6 L804.4,563.3 L808.1,563.3 L811.7,539.5 L815.3,539.5 L818.9,487.1 L822.6,487.1 L826.2,570.6 L829.8,570.6 L833.4,632.2 L837.1,632.2 L840.7,564.5 L844.3,564.5 L848.0,578.5 L851.6,578.5 L855.2,632.2 L858.8,632.2 L862.5,569.4 L866.1,569.4 L869.7,512.1 L873.4,512.1 L877.0,584.0 L880.6,584.0 L884.2,543.2 L887.9,543.2 L891.5,532.8 L895.1,532.8 L898.8,581.0 L902.4,581.0 L906.0,544.4 L909.6,544.4 L913.3,632.2 L916.9,632.2 L920.5,560.2 L924.1,560.2 L927.8,462.7 L931.4,462.7 L935.0,581.0 L938.7,581.0 L942.3,583.4 L945.9,583.4 L949.5,580.4 L953.2,580.4 L956.8,584.6 L960.4,584.6 L964.1,503.5 L967.7,503.5 L971.3,632.2 L974.9,632.2 L978.6,576.7 L982.2,576.7 L985.8,583.4 L989.4,583.4 L993.1,632.2 L996.7,632.2 L996.7,632 L126.0,632 Z" fill="#EF843C" fill-opacity="0.1" stroke="none"/>
<path d="M126.0,573.7 L129.6,567.6 L133.3,567.6 L136.9,546.2 L140.5,546.2 L144.1,581.6 L147.8,581.6 L151.4,532.8 L155.0,532.8 L158.7,581.6 L162.3,581.6 L165.9,536.5 L169.5,536.5 L173.2,481.6 L176.8,481.6 L180.4,580.4 L184.1,580.4 L187.7,457.7 L191.3,457.7 L194.9,578.5 L198.6,578.5 L202.2,576.1 L205.8,576.1 L209.4,529.8 L213.1,529.8 L216.7,585.2 L220.3,585.2 L224.0,567.0 L227.6,567.0 L231.2,632.2 L234.8,632.2 L238.5,526.1 L242.1,526.1 L245.7,427.3 L249.4,427.3 L253.0,506.6 L256.6,506.6 L260.2,551.1 L263.9,551.1 L267.5,445.6 L271.1,445.6 L274.7,555.4 L278.4,555.4 L282.0,578.5 L285.6,578.5 L289.3,632.2 L292.9,632.2 L296.5,576.7 L300.1,576.7 L303.8,540.7 L307.4,540.7 L311.0,582.2 L314.7,582.2 L318.3,584.0 L321.9,584.0 L325.5,492.0 L329.2,492.0 L332.8,580.4 L336.4,580.4 L340.1,577.1 L343.7,577.1 L347.3,632.2 L350.9,632.2 L354.6,558.4 L358.2,558.4 L361.8,506.6 L365.4,506.6 L369.1,559.6 L372.7,559.6 L376.3,582.2 L380.0,582.2 L383.6,465.9 L387.2,465.9 L390.8,587.7 L394.5,587.7 L398.1,581.6 L401.7,581.6 L405.4,632.2 L409.0,632.2 L412.6,574.3 L416.2,574.3 L419.9,508.4 L423.5,508.4 L427.1,632.2 L430.7,632.2 L434.4,573.7 L438.0,573.7 L441.6,568.2 L445.3,568.2 L448.9,457.8 L452.5,457.8 L456.1,529.8 L459.8,529.8 L463.4,572.4 L467.0,572.4 L470.7,563.3 L474.3,563.3 L477.9,581.6 L481.5,581.6 L485.2,632.2 L488.8,632.2 L492.4,586.5 L496.1,586.5 L499.7,502.3 L503.3,502.3 L506.9,542.6 L510.6,542.6 L514.2,581.6 L517.8,581.6 L521.4,554.8 L525.1,554.8 L528.7,584.6 L532.3,584.6 L536.0,580.4 L539.6,580.4 L543.2,632.2 L546.8,632.2 L550.5,557.2 L554.1,557.2 L557.7,583.4 L561.4,583.4 L565.0,473.7 L568.6,473.7 L572.2,581.6 L575.9,581.6 L579.5,569.4 L583.1,569.4 L586.8,532.2 L590.4,532.2 L594.0,581.0 L597.6,581.0 L601.3,519.4 L604.9,519.4 L608.5,571.8 L612.1,571.8 L615.8,462.9 L619.4,462.9 L623.0,469.2 L626.7,469.2 L630.3,584.0 L633.9,584.0 L637.5,462.9 L641.2,462.9 L644.8,565.1 L648.4,565.1 L652.1,577.9 L655.7,577.9 L659.3,632.2 L662.9,632.2 L666.6,580.4 L670.2,580.4 L673.8,584.6 L677.4,584.6 L681.1,587.1 L684.7,587.1 L688.3,562.7 L692.0,562.7 L695.6,529.8 L699.2,529.8 L702.8,556.0 L706.5,556.0 L710.1,584.0 L713.7,584.0 L717.4,632.2 L721.0,632.2 L724.6,573.7 L728.2,573.7 L731.9,585.2 L735.5,585.2 L739.1,632.2 L742.8,632.2 L746.4,567.6 L750.0,567.6 L753.6,532.8 L757.3,532.8 L760.9,584.0 L764.5,584.0 L768.1,584.6 L771.8,584.6 L775.4,632.2 L779.0,632.2 L782.7,579.1 L786.3,579.1 L789.9,573.7 L793.5,573.7 L797.2,584.6 L800.8,584.6 L804.4,563.3 L808.1,563.3 L811.7,539.5 L815.3,539.5 L818.9,487.1 L822.6,487.1 L826.2,570.6 L829.8,570.6 L833.4,632.2 L837.1,632.2 L840.7,564.5 L844.3,564.5 L848.0,578.5 L851.6,578.5 L855.2,632.2 L858.8,632.2 L862.5,569.4 L866.1,569.4 L869.7,512.1 L873.4,512.1 L877.0,584.0 L880.6,584.0 L884.2,543.2 L887.9,543.2 L891.5,532.8 L895.1,532.8 L898.8,581.0 L902.4,581.0 L906.0,544.4 L909.6,544.4 L913.3,632.2 L916.9,632.2 L920.5,560.2 L924.1,560.2 L927.8,462.7 L931.4,462.7 L935.0,581.0 L938.7,581.0 L942.3,583.4 L945.9,583.4 L949.5,580.4 L953.2,580.4 L956.8,584.6 L960.4,584.6 L964.1,503.5 L967.7,503.5 L971.3,632.2 L974.9,632.2 L978.6,576.7 L982.2,576.7 L985.8,583.4 L989.4,583.4 L993.1,632.2 L996.7,632.2" fill="none" stroke="#e1894c" stroke-width="2" stroke-linejoin="round"/>
<path d="M126.0,560.0 L129.6,546.2 L133.3,546.2 L136.9,546.2 L140.5,546.2 L144.1,567.0 L147.8,567.0 L151.4,532.8 L155.0,532.8 L158.7,577.9 L162.3,577.9 L165.9,533.4 L169.5,533.4 L173.2,409.2 L176.8,409.2 L180.4,575.1 L184.1,575.1 L187.7,457.7 L191.3,457.7 L194.9,578.5 L198.6,578.5 L202.2,558.8 L205.8,558.8 L209.4,529.8 L213.1,529.8 L216.7,585.2 L220.3,585.2 L224.0,567.0 L227.6,567.0 L231.2,632.2 L234.8,632.2 L238.5,485.9 L242.1,485.9 L245.7,408.4 L249.4,408.4 L253.0,506.6 L256.6,506.6 L260.2,512.7 L263.9,512.7 L267.5,437.3 L271.1,437.3 L274.7,519.8 L278.4,519.8 L282.0,574.9 L285.6,574.9 L289.3,632.2 L292.9,632.2 L296.5,515.1 L300.1,515.1 L303.8,477.9 L307.4,477.9 L311.0,582.2 L314.7,582.2 L318.3,581.6 L321.9,581.6 L325.5,492.0 L329.2,492.0 L332.8,580.4 L336.4,580.4 L340.1,577.1 L343.7,577.1 L347.3,632.2 L350.9,632.2 L354.6,524.3 L358.2,524.3 L361.8,502.3 L365.4,502.3 L369.1,546.8 L372.7,546.8 L376.3,447.9 L380.0,447.9 L383.6,465.9 L387.2,465.9 L390.8,587.7 L394.5,587.7 L398.1,518.2 L401.7,518.2 L405.4,632.2 L409.0,632.2 L412.6,563.9 L416.2,563.9 L419.9,467.8 L423.5,467.8 L427.1,632.2 L430.7,632.2 L434.4,449.6 L438.0,449.6 L441.6,567.0 L445.3,567.0 L448.9,436.8 L452.5,436.8 L456.1,484.0 L459.8,484.0 L463.4,515.7 L467.0,515.7 L470.7,536.5 L474.3,536.5 L477.9,575.5 L481.5,575.5 L485.2,632.2 L488.8,632.2 L492.4,524.3 L496.1,524.3 L499.7,499.3 L503.3,499.3 L506.9,509.0 L510.6,509.0 L514.2,465.1 L517.8,465.1 L521.4,554.8 L525.1,554.8 L528.7,281.9 L532.3,281.9 L536.0,574.3 L539.6,574.3 L543.2,632.2 L546.8,632.2 L550.5,474.9 L554.1,474.9 L557.7,581.0 L561.4,581.0 L565.0,472.4 L568.6,472.4 L572.2,465.9 L575.9,465.9 L579.5,569.4 L583.1,569.4 L586.8,474.3 L590.4,474.3 L594.0,577.9 L597.6,577.9 L601.3,519.4 L604.9,519.4 L608.5,571.2 L612.1,571.2 L615.8,462.9 L619.4,462.9 L623.0,469.2 L626.7,469.2 L630.3,574.9 L633.9,574.9 L637.5,462.9 L641.2,462.9 L644.8,565.1 L648.4,565.1 L652.1,574.3 L655.7,574.3 L659.3,632.2 L662.9,632.2 L666.6,418.8 L670.2,418.8 L673.8,581.0 L677.4,581.0 L681.1,587.1 L684.7,587.1 L688.3,529.1 L692.0,529.1 L695.6,526.7 L699.2,526.7 L702.8,542.6 L706.5,542.6 L710.1,338.3 L713.7,338.3 L717.4,632.2 L721.0,632.2 L724.6,571.8 L728.2,571.8 L731.9,506.6 L735.5,506.6 L739.1,632.2 L742.8,632.2 L746.4,531.6 L750.0,531.6 L753.6,532.2 L757.3,532.2 L760.9,581.6 L764.5,581.6 L768.1,422.0 L771.8,422.0 L775.4,632.2 L779.0,632.2 L782.7,476.1 L786.3,476.1 L789.9,560.2 L793.5,560.2 L797.2,488.5 L800.8,488.5 L804.4,506.6 L808.1,506.6 L811.7,537.7 L815.3,537.7 L818.9,485.2 L822.6,485.2 L826.2,481.6 L829.8,481.6 L833.4,632.2 L837.1,632.2 L840.7,480.4 L844.3,480.4 L848.0,578.5 L851.6,578.5 L855.2,632.2 L858.8,632.2 L862.5,479.1 L866.1,479.1 L869.7,510.9 L873.4,510.9 L877.0,584.0 L880.6,584.0 L884.2,437.0 L887.9,437.0 L891.5,474.3 L895.1,474.3 L898.8,581.0 L902.4,581.0 L906.0,531.0 L909.6,531.0 L913.3,632.2 L916.9,632.2 L920.5,535.9 L924.1,535.9 L927.8,454.2 L931.4,454.2 L935.0,581.0 L938.7,581.0 L942.3,582.8 L945.9,582.8 L949.5,580.4 L953.2,580.4 L956.8,584.6 L960.4,584.6 L964.1,473.0 L967.7,473.0 L971.3,632.2 L974.9,632.2 L978.6,506.6 L982.2,506.6 L985.8,517.0 L989.4,517.0 L993.1,632.2 L996.7,632.2 L996.7,632 L126.0,632 Z" fill="#E24D42" fill-opacity="0.1" stroke="none"/>
<path d="M126.0,560.0 L129.6,546.2 L133.3,546.2 L136.9,546.2 L140.5,546.2 L144.1,567.0 L147.8,567.0 L151.4,532.8 L155.0,532.8 L158.7,577.9 L162.3,577.9 L165.9,533.4 L169.5,533.4 L173.2,409.2 L176.8,409.2 L180.4,575.1 L184.1,575.1 L187.7,457.7 L191.3,457.7 L194.9,578.5 L198.6,578.5 L202.2,558.8 L205.8,558.8 L209.4,529.8 L213.1,529.8 L216.7,585.2 L220.3,585.2 L224.0,567.0 L227.6,567.0 L231.2,632.2 L234.8,632.2 L238.5,485.9 L242.1,485.9 L245.7,408.4 L249.4,408.4 L253.0,506.6 L256.6,506.6 L260.2,512.7 L263.9,512.7 L267.5,437.3 L271.1,437.3 L274.7,519.8 L278.4,519.8 L282.0,574.9 L285.6,574.9 L289.3,632.2 L292.9,632.2 L296.5,515.1 L300.1,515.1 L303.8,477.9 L307.4,477.9 L311.0,582.2 L314.7,582.2 L318.3,581.6 L321.9,581.6 L325.5,492.0 L329.2,492.0 L332.8,580.4 L336.4,580.4 L340.1,577.1 L343.7,577.1 L347.3,632.2 L350.9,632.2 L354.6,524.3 L358.2,524.3 L361.8,502.3 L365.4,502.3 L369.1,546.8 L372.7,546.8 L376.3,447.9 L380.0,447.9 L383.6,465.9 L387.2,465.9 L390.8,587.7 L394.5,587.7 L398.1,518.2 L401.7,518.2 L405.4,632.2 L409.0,632.2 L412.6,563.9 L416.2,563.9 L419.9,467.8 L423.5,467.8 L427.1,632.2 L430.7,632.2 L434.4,449.6 L438.0,449.6 L441.6,567.0 L445.3,567.0 L448.9,436.8 L452.5,436.8 L456.1,484.0 L459.8,484.0 L463.4,515.7 L467.0,515.7 L470.7,536.5 L474.3,536.5 L477.9,575.5 L481.5,575.5 L485.2,632.2 L488.8,632.2 L492.4,524.3 L496.1,524.3 L499.7,499.3 L503.3,499.3 L506.9,509.0 L510.6,509.0 L514.2,465.1 L517.8,465.1 L521.4,554.8 L525.1,554.8 L528.7,281.9 L532.3,281.9 L536.0,574.3 L539.6,574.3 L543.2,632.2 L546.8,632.2 L550.5,474.9 L554.1,474.9 L557.7,581.0 L561.4,581.0 L565.0,472.4 L568.6,472.4 L572.2,465.9 L575.9,465.9 L579.5,569.4 L583.1,569.4 L586.8,474.3 L590.4,474.3 L594.0,577.9 L597.6,577.9 L601.3,519.4 L604.9,519.4 L608.5,571.2 L612.1,571.2 L615.8,462.9 L619.4,462.9 L623.0,469.2 L626.7,469.2 L630.3,574.9 L633.9,574.9 L637.5,462.9 L641.2,462.9 L644.8,565.1 L648.4,565.1 L652.1,574.3 L655.7,574.3 L659.3,632.2 L662.9,632.2 L666.6,418.8 L670.2,418.8 L673.8,581.0 L677.4,581.0 L681.1,587.1 L684.7,587.1 L688.3,529.1 L692.0,529.1 L695.6,526.7 L699.2,526.7 L702.8,542.6 L706.5,542.6 L710.1,338.3 L713.7,338.3 L717.4,632.2 L721.0,632.2 L724.6,571.8 L728.2,571.8 L731.9,506.6 L735.5,506.6 L739.1,632.2 L742.8,632.2 L746.4,531.6 L750.0,531.6 L753.6,532.2 L757.3,532.2 L760.9,581.6 L764.5,581.6 L768.1,422.0 L771.8,422.0 L775.4,632.2 L779.0,632.2 L782.7,476.1 L786.3,476.1 L789.9,560.2 L793.5,560.2 L797.2,488.5 L800.8,488.5 L804.4,506.6 L808.1,506.6 L811.7,537.7 L815.3,537.7 L818.9,485.2 L822.6,485.2 L826.2,481.6 L829.8,481.6 L833.4,632.2 L837.1,632.2 L840.7,480.4 L844.3,480.4 L848.0,578.5 L851.6,578.5 L855.2,632.2 L858.8,632.2 L862.5,479.1 L866.1,479.1 L869.7,510.9 L873.4,510.9 L877.0,584.0 L880.6,584.0 L884.2,437.0 L887.9,437.0 L891.5,474.3 L895.1,474.3 L898.8,581.0 L902.4,581.0 L906.0,531.0 L909.6,531.0 L913.3,632.2 L916.9,632.2 L920.5,535.9 L924.1,535.9 L927.8,454.2 L931.4,454.2 L935.0,581.0 L938.7,581.0 L942.3,582.8 L945.9,582.8 L949.5,580.4 L953.2,580.4 L956.8,584.6 L960.4,584.6 L964.1,473.0 L967.7,473.0 L971.3,632.2 L974.9,632.2 L978.6,506.6 L982.2,506.6 L985.8,517.0 L989.4,517.0 L993.1,632.2 L996.7,632.2" fill="none" stroke="#d1584a" stroke-width="2" stroke-linejoin="round"/>
<path d="M126.0,560.0 L129.6,311.1 L133.3,311.1 L136.9,546.2 L140.5,546.2 L144.1,567.0 L147.8,567.0 L151.4,532.8 L155.0,532.8 L158.7,577.9 L162.3,577.9 L165.9,533.4 L169.5,533.4 L173.2,409.2 L176.8,409.2 L180.4,575.1 L184.1,575.1 L187.7,457.7 L191.3,457.7 L194.9,578.5 L198.6,578.5 L202.2,558.8 L205.8,558.8 L209.4,529.8 L213.1,529.8 L216.7,585.2 L220.3,585.2 L224.0,510.0 L227.6,510.0 L231.2,632.2 L234.8,632.2 L238.5,485.9 L242.1,485.9 L245.7,408.4 L249.4,408.4 L253.0,506.6 L256.6,506.6 L260.2,512.7 L263.9,512.7 L267.5,437.3 L271.1,437.3 L274.7,519.8 L278.4,519.8 L282.0,574.9 L285.6,574.9 L289.3,632.2 L292.9,632.2 L296.5,515.1 L300.1,515.1 L303.8,477.9 L307.4,477.9 L311.0,582.2 L314.7,582.2 L318.3,443.8 L321.9,443.8 L325.5,489.5 L329.2,489.5 L332.8,580.4 L336.4,580.4 L340.1,577.1 L343.7,577.1 L347.3,632.2 L350.9,632.2 L354.6,524.3 L358.2,524.3 L361.8,502.3 L365.4,502.3 L369.1,546.8 L372.7,546.8 L376.3,447.9 L380.0,447.9 L383.6,465.9 L387.2,465.9 L390.8,587.7 L394.5,587.7 L398.1,518.2 L401.7,518.2 L405.4,632.2 L409.0,632.2 L412.6,507.2 L416.2,507.2 L419.9,467.8 L423.5,467.8 L427.1,632.2 L430.7,632.2 L434.4,449.6 L438.0,449.6 L441.6,567.0 L445.3,567.0 L448.9,436.8 L452.5,436.8 L456.1,484.0 L459.8,484.0 L463.4,515.7 L467.0,515.7 L470.7,536.5 L474.3,536.5 L477.9,575.5 L481.5,575.5 L485.2,632.2 L488.8,632.2 L492.4,524.3 L496.1,524.3 L499.7,499.3 L503.3,499.3 L506.9,509.0 L510.6,509.0 L514.2,465.1 L517.8,465.1 L521.4,554.8 L525.1,554.8 L528.7,281.9 L532.3,281.9 L536.0,574.3 L539.6,574.3 L543.2,632.2 L546.8,632.2 L550.5,474.3 L554.1,474.3 L557.7,519.4 L561.4,519.4 L565.0,471.4 L568.6,471.4 L572.2,465.9 L575.9,465.9 L579.5,569.4 L583.1,569.4 L586.8,474.3 L590.4,474.3 L594.0,577.9 L597.6,577.9 L601.3,518.2 L604.9,518.2 L608.5,519.4 L612.1,519.4 L615.8,462.9 L619.4,462.9 L623.0,469.2 L626.7,469.2 L630.3,574.9 L633.9,574.9 L637.5,462.9 L641.2,462.9 L644.8,565.1 L648.4,565.1 L652.1,515.1 L655.7,515.1 L659.3,632.2 L662.9,632.2 L666.6,418.8 L670.2,418.8 L673.8,581.0 L677.4,581.0 L681.1,587.1 L684.7,587.1 L688.3,529.1 L692.0,529.1 L695.6,526.7 L699.2,526.7 L702.8,542.6 L706.5,542.6 L710.1,338.3 L713.7,338.3 L717.4,632.2 L721.0,632.2 L724.6,571.8 L728.2,571.8 L731.9,506.6 L735.5,506.6 L739.1,632.2 L742.8,632.2 L746.4,512.7 L750.0,512.7 L753.6,531.6 L757.3,531.6 L760.9,581.6 L764.5,581.6 L768.1,422.0 L771.8,422.0 L775.4,632.2 L779.0,632.2 L782.7,476.1 L786.3,476.1 L789.9,560.2 L793.5,560.2 L797.2,488.5 L800.8,488.5 L804.4,506.6 L808.1,506.6 L811.7,537.7 L815.3,537.7 L818.9,485.2 L822.6,485.2 L826.2,481.6 L829.8,481.6 L833.4,632.2 L837.1,632.2 L840.7,480.4 L844.3,480.4 L848.0,578.5 L851.6,578.5 L855.2,632.2 L858.8,632.2 L862.5,479.1 L866.1,479.1 L869.7,510.9 L873.4,510.9 L877.0,584.0 L880.6,584.0 L884.2,437.0 L887.9,437.0 L891.5,474.3 L895.1,474.3 L898.8,581.0 L902.4,581.0 L906.0,531.0 L909.6,531.0 L913.3,632.2 L916.9,632.2 L920.5,535.9 L924.1,535.9 L927.8,454.2 L931.4,454.2 L935.0,581.0 L938.7,581.0 L942.3,474.9 L945.9,474.9 L949.5,580.4 L953.2,580.4 L956.8,584.6 L960.4,584.6 L964.1,473.0 L967.7,473.0 L971.3,632.2 L974.9,632.2 L978.6,506.0 L982.2,506.0 L985.8,492.6 L989.4,492.6 L993.1,632.2 L996.7,632.2 L996.7,632 L126.0,632 Z" fill="#1F78C1" fill-opacity="0.1" stroke="none"/>
<path d="M126.0,560.0 L129.6,311.1 L133.3,311.1 L136.9,546.2 L140.5,546.2 L144.1,567.0 L147.8,567.0 L151.4,532.8 L155.0,532.8 L158.7,577.9 L162.3,577.9 L165.9,533.4 L169.5,533.4 L173.2,409.2 L176.8,409.2 L180.4,575.1 L184.1,575.1 L187.7,457.7 L191.3,457.7 L194.9,578.5 L198.6,578.5 L202.2,558.8 L205.8,558.8 L209.4,529.8 L213.1,529.8 L216.7,585.2 L220.3,585.2 L224.0,510.0 L227.6,510.0 L231.2,632.2 L234.8,632.2 L238.5,485.9 L242.1,485.9 L245.7,408.4 L249.4,408.4 L253.0,506.6 L256.6,506.6 L260.2,512.7 L263.9,512.7 L267.5,437.3 L271.1,437.3 L274.7,519.8 L278.4,519.8 L282.0,574.9 L285.6,574.9 L289.3,632.2 L292.9,632.2 L296.5,515.1 L300.1,515.1 L303.8,477.9 L307.4,477.9 L311.0,582.2 L314.7,582.2 L318.3,443.8 L321.9,443.8 L325.5,489.5 L329.2,489.5 L332.8,580.4 L336.4,580.4 L340.1,577.1 L343.7,577.1 L347.3,632.2 L350.9,632.2 L354.6,524.3 L358.2,524.3 L361.8,502.3 L365.4,502.3 L369.1,546.8 L372.7,546.8 L376.3,447.9 L380.0,447.9 L383.6,465.9 L387.2,465.9 L390.8,587.7 L394.5,587.7 L398.1,518.2 L401.7,518.2 L405.4,632.2 L409.0,632.2 L412.6,507.2 L416.2,507.2 L419.9,467.8 L423.5,467.8 L427.1,632.2 L430.7,632.2 L434.4,449.6 L438.0,449.6 L441.6,567.0 L445.3,567.0 L448.9,436.8 L452.5,436.8 L456.1,484.0 L459.8,484.0 L463.4,515.7 L467.0,515.7 L470.7,536.5 L474.3,536.5 L477.9,575.5 L481.5,575.5 L485.2,632.2 L488.8,632.2 L492.4,524.3 L496.1,524.3 L499.7,499.3 L503.3,499.3 L506.9,509.0 L510.6,509.0 L514.2,465.1 L517.8,465.1 L521.4,554.8 L525.1,554.8 L528.7,281.9 L532.3,281.9 L536.0,574.3 L539.6,574.3 L543.2,632.2 L546.8,632.2 L550.5,474.3 L554.1,474.3 L557.7,519.4 L561.4,519.4 L565.0,471.4 L568.6,471.4 L572.2,465.9 L575.9,465.9 L579.5,569.4 L583.1,569.4 L586.8,474.3 L590.4,474.3 L594.0,577.9 L597.6,577.9 L601.3,518.2 L604.9,518.2 L608.5,519.4 L612.1,519.4 L615.8,462.9 L619.4,462.9 L623.0,469.2 L626.7,469.2 L630.3,574.9 L633.9,574.9 L637.5,462.9 L641.2,462.9 L644.8,565.1 L648.4,565.1 L652.1,515.1 L655.7,515.1 L659.3,632.2 L662.9,632.2 L666.6,418.8 L670.2,418.8 L673.8,581.0 L677.4,581.0 L681.1,587.1 L684.7,587.1 L688.3,529.1 L692.0,529.1 L695.6,526.7 L699.2,526.7 L702.8,542.6 L706.5,542.6 L710.1,338.3 L713.7,338.3 L717.4,632.2 L721.0,632.2 L724.6,571.8 L728.2,571.8 L731.9,506.6 L735.5,506.6 L739.1,632.2 L742.8,632.2 L746.4,512.7 L750.0,512.7 L753.6,531.6 L757.3,531.6 L760.9,581.6 L764.5,581.6 L768.1,422.0 L771.8,422.0 L775.4,632.2 L779.0,632.2 L782.7,476.1 L786.3,476.1 L789.9,560.2 L793.5,560.2 L797.2,488.5 L800.8,488.5 L804.4,506.6 L808.1,506.6 L811.7,537.7 L815.3,537.7 L818.9,485.2 L822.6,485.2 L826.2,481.6 L829.8,481.6 L833.4,632.2 L837.1,632.2 L840.7,480.4 L844.3,480.4 L848.0,578.5 L851.6,578.5 L855.2,632.2 L858.8,632.2 L862.5,479.1 L866.1,479.1 L869.7,510.9 L873.4,510.9 L877.0,584.0 L880.6,584.0 L884.2,437.0 L887.9,437.0 L891.5,474.3 L895.1,474.3 L898.8,581.0 L902.4,581.0 L906.0,531.0 L909.6,531.0 L913.3,632.2 L916.9,632.2 L920.5,535.9 L924.1,535.9 L927.8,454.2 L931.4,454.2 L935.0,581.0 L938.7,581.0 L942.3,474.9 L945.9,474.9 L949.5,580.4 L953.2,580.4 L956.8,584.6 L960.4,584.6 L964.1,473.0 L967.7,473.0 L971.3,632.2 L974.9,632.2 L978.6,506.0 L982.2,506.0 L985.8,492.6 L989.4,492.6 L993.1,632.2 L996.7,632.2" fill="none" stroke="#3c76bb" stroke-width="2" stroke-linejoin="round"/>
<path d="M126.0,560.0 L129.6,311.1 L133.3,311.1 L136.9,546.2 L140.5,546.2 L144.1,567.0 L147.8,567.0 L151.4,532.8 L155.0,532.8 L158.7,577.9 L162.3,577.9 L165.9,533.4 L169.5,533.4 L173.2,409.2 L176.8,409.2 L180.4,575.1 L184.1,575.1 L187.7,457.7 L191.3,457.7 L194.9,578.5 L198.6,578.5 L202.2,558.8 L205.8,558.8 L209.4,529.8 L213.1,529.8 L216.7,585.2 L220.3,585.2 L224.0,510.0 L227.6,510.0 L231.2,632.2 L234.8,632.2 L238.5,485.9 L242.1,485.9 L245.7,408.4 L249.4,408.4 L253.0,506.6 L256.6,506.6 L260.2,512.7 L263.9,512.7 L267.5,437.3 L271.1,437.3 L274.7,519.8 L278.4,519.8 L282.0,574.9 L285.6,574.9 L289.3,632.2 L292.9,632.2 L296.5,515.1 L300.1,515.1 L303.8,477.9 L307.4,477.9 L311.0,582.2 L314.7,582.2 L318.3,443.8 L321.9,443.8 L325.5,489.5 L329.2,489.5 L332.8,580.4 L336.4,580.4 L340.1,577.1 L343.7,577.1 L347.3,632.2 L350.9,632.2 L354.6,524.3 L358.2,524.3 L361.8,502.3 L365.4,502.3 L369.1,546.8 L372.7,546.8 L376.3,447.9 L380.0,447.9 L383.6,465.9 L387.2,465.9 L390.8,587.7 L394.5,587.7 L398.1,518.2 L401.7,518.2 L405.4,632.2 L409.0,632.2 L412.6,507.2 L416.2,507.2 L419.9,467.8 L423.5,467.8 L427.1,632.2 L430.7,632.2 L434.4,449.6 L438.0,449.6 L441.6,567.0 L445.3,567.0 L448.9,436.8 L452.5,436.8 L456.1,484.0 L459.8,484.0 L463.4,515.7 L467.0,515.7 L470.7,536.5 L474.3,536.5 L477.9,575.5 L481.5,575.5 L485.2,632.2 L488.8,632.2 L492.4,524.3 L496.1,524.3 L499.7,499.3 L503.3,499.3 L506.9,509.0 L510.6,509.0 L514.2,465.1 L517.8,465.1 L521.4,554.8 L525.1,554.8 L528.7,281.9 L532.3,281.9 L536.0,574.3 L539.6,574.3 L543.2,632.2 L546.8,632.2 L550.5,474.3 L554.1,474.3 L557.7,519.4 L561.4,519.4 L565.0,471.4 L568.6,471.4 L572.2,465.9 L575.9,465.9 L579.5,569.4 L583.1,569.4 L586.8,474.3 L590.4,474.3 L594.0,577.9 L597.6,577.9 L601.3,518.2 L604.9,518.2 L608.5,519.4 L612.1,519.4 L615.8,462.9 L619.4,462.9 L623.0,469.2 L626.7,469.2 L630.3,574.9 L633.9,574.9 L637.5,462.9 L641.2,462.9 L644.8,565.1 L648.4,565.1 L652.1,515.1 L655.7,515.1 L659.3,632.2 L662.9,632.2 L666.6,418.8 L670.2,418.8 L673.8,581.0 L677.4,581.0 L681.1,587.1 L684.7,587.1 L688.3,529.1 L692.0,529.1 L695.6,526.7 L699.2,526.7 L702.8,542.6 L706.5,542.6 L710.1,338.3 L713.7,338.3 L717.4,632.2 L721.0,632.2 L724.6,571.8 L728.2,571.8 L731.9,506.6 L735.5,506.6 L739.1,632.2 L742.8,632.2 L746.4,512.7 L750.0,512.7 L753.6,531.6 L757.3,531.6 L760.9,581.6 L764.5,581.6 L768.1,422.0 L771.8,422.0 L775.4,632.2 L779.0,632.2 L782.7,476.1 L786.3,476.1 L789.9,560.2 L793.5,560.2 L797.2,488.5 L800.8,488.5 L804.4,506.6 L808.1,506.6 L811.7,537.7 L815.3,537.7 L818.9,485.2 L822.6,485.2 L826.2,481.6 L829.8,481.6 L833.4,632.2 L837.1,632.2 L840.7,480.4 L844.3,480.4 L848.0,578.5 L851.6,578.5 L855.2,632.2 L858.8,632.2 L862.5,479.1 L866.1,479.1 L869.7,510.9 L873.4,510.9 L877.0,584.0 L880.6,584.0 L884.2,437.0 L887.9,437.0 L891.5,474.3 L895.1,474.3 L898.8,581.0 L902.4,581.0 L906.0,531.0 L909.6,531.0 L913.3,632.2 L916.9,632.2 L920.5,535.9 L924.1,535.9 L927.8,454.2 L931.4,454.2 L935.0,581.0 L938.7,581.0 L942.3,474.9 L945.9,474.9 L949.5,580.4 L953.2,580.4 L956.8,584.6 L960.4,584.6 L964.1,473.0 L967.7,473.0 L971.3,632.2 L974.9,632.2 L978.6,506.0 L982.2,506.0 L985.8,492.6 L989.4,492.6 L993.1,632.2 L996.7,632.2 L996.7,632 L126.0,632 Z" fill="#BA43A9" fill-opacity="0.1" stroke="none"/>
<path d="M126.0,560.0 L129.6,311.1 L133.3,311.1 L136.9,546.2 L140.5,546.2 L144.1,567.0 L147.8,567.0 L151.4,532.8 L155.0,532.8 L158.7,577.9 L162.3,577.9 L165.9,533.4 L169.5,533.4 L173.2,409.2 L176.8,409.2 L180.4,575.1 L184.1,575.1 L187.7,457.7 L191.3,457.7 L194.9,578.5 L198.6,578.5 L202.2,558.8 L205.8,558.8 L209.4,529.8 L213.1,529.8 L216.7,585.2 L220.3,585.2 L224.0,510.0 L227.6,510.0 L231.2,632.2 L234.8,632.2 L238.5,485.9 L242.1,485.9 L245.7,408.4 L249.4,408.4 L253.0,506.6 L256.6,506.6 L260.2,512.7 L263.9,512.7 L267.5,437.3 L271.1,437.3 L274.7,519.8 L278.4,519.8 L282.0,574.9 L285.6,574.9 L289.3,632.2 L292.9,632.2 L296.5,515.1 L300.1,515.1 L303.8,477.9 L307.4,477.9 L311.0,582.2 L314.7,582.2 L318.3,443.8 L321.9,443.8 L325.5,489.5 L329.2,489.5 L332.8,580.4 L336.4,580.4 L340.1,577.1 L343.7,577.1 L347.3,632.2 L350.9,632.2 L354.6,524.3 L358.2,524.3 L361.8,502.3 L365.4,502.3 L369.1,546.8 L372.7,546.8 L376.3,447.9 L380.0,447.9 L383.6,465.9 L387.2,465.9 L390.8,587.7 L394.5,587.7 L398.1,518.2 L401.7,518.2 L405.4,632.2 L409.0,632.2 L412.6,507.2 L416.2,507.2 L419.9,467.8 L423.5,467.8 L427.1,632.2 L430.7,632.2 L434.4,449.6 L438.0,449.6 L441.6,567.0 L445.3,567.0 L448.9,436.8 L452.5,436.8 L456.1,484.0 L459.8,484.0 L463.4,515.7 L467.0,515.7 L470.7,536.5 L474.3,536.5 L477.9,575.5 L481.5,575.5 L485.2,632.2 L488.8,632.2 L492.4,524.3 L496.1,524.3 L499.7,499.3 L503.3,499.3 L506.9,509.0 L510.6,509.0 L514.2,465.1 L517.8,465.1 L521.4,554.8 L525.1,554.8 L528.7,281.9 L532.3,281.9 L536.0,574.3 L539.6,574.3 L543.2,632.2 L546.8,632.2 L550.5,474.3 L554.1,474.3 L557.7,519.4 L561.4,519.4 L565.0,471.4 L568.6,471.4 L572.2,465.9 L575.9,465.9 L579.5,569.4 L583.1,569.4 L586.8,474.3 L590.4,474.3 L594.0,577.9 L597.6,577.9 L601.3,518.2 L604.9,518.2 L608.5,519.4 L612.1,519.4 L615.8,462.9 L619.4,462.9 L623.0,469.2 L626.7,469.2 L630.3,574.9 L633.9,574.9 L637.5,462.9 L641.2,462.9 L644.8,565.1 L648.4,565.1 L652.1,515.1 L655.7,515.1 L659.3,632.2 L662.9,632.2 L666.6,418.8 L670.2,418.8 L673.8,581.0 L677.4,581.0 L681.1,587.1 L684.7,587.1 L688.3,529.1 L692.0,529.1 L695.6,526.7 L699.2,526.7 L702.8,542.6 L706.5,542.6 L710.1,338.3 L713.7,338.3 L717.4,632.2 L721.0,632.2 L724.6,571.8 L728.2,571.8 L731.9,506.6 L735.5,506.6 L739.1,632.2 L742.8,632.2 L746.4,512.7 L750.0,512.7 L753.6,531.6 L757.3,531.6 L760.9,581.6 L764.5,581.6 L768.1,422.0 L771.8,422.0 L775.4,632.2 L779.0,632.2 L782.7,476.1 L786.3,476.1 L789.9,560.2 L793.5,560.2 L797.2,488.5 L800.8,488.5 L804.4,506.6 L808.1,506.6 L811.7,537.7 L815.3,537.7 L818.9,485.2 L822.6,485.2 L826.2,481.6 L829.8,481.6 L833.4,632.2 L837.1,632.2 L840.7,480.4 L844.3,480.4 L848.0,578.5 L851.6,578.5 L855.2,632.2 L858.8,632.2 L862.5,479.1 L866.1,479.1 L869.7,510.9 L873.4,510.9 L877.0,584.0 L880.6,584.0 L884.2,437.0 L887.9,437.0 L891.5,474.3 L895.1,474.3 L898.8,581.0 L902.4,581.0 L906.0,531.0 L909.6,531.0 L913.3,632.2 L916.9,632.2 L920.5,535.9 L924.1,535.9 L927.8,454.2 L931.4,454.2 L935.0,581.0 L938.7,581.0 L942.3,474.9 L945.9,474.9 L949.5,580.4 L953.2,580.4 L956.8,584.6 L960.4,584.6 L964.1,473.0 L967.7,473.0 L971.3,632.2 L974.9,632.2 L978.6,506.0 L982.2,506.0 L985.8,492.6 L989.4,492.6 L993.1,632.2 L996.7,632.2" fill="none" stroke="#ac4ba4" stroke-width="2" stroke-linejoin="round"/>
<path d="M126.0,560.0 L129.6,311.1 L133.3,311.1 L136.9,546.2 L140.5,546.2 L144.1,567.0 L147.8,567.0 L151.4,532.8 L155.0,532.8 L158.7,577.9 L162.3,577.9 L165.9,533.4 L169.5,533.4 L173.2,409.2 L176.8,409.2 L180.4,575.1 L184.1,575.1 L187.7,457.7 L191.3,457.7 L194.9,578.5 L198.6,578.5 L202.2,558.8 L205.8,558.8 L209.4,529.8 L213.1,529.8 L216.7,585.2 L220.3,585.2 L224.0,510.0 L227.6,510.0 L231.2,632.2 L234.8,632.2 L238.5,485.9 L242.1,485.9 L245.7,408.4 L249.4,408.4 L253.0,506.6 L256.6,506.6 L260.2,512.7 L263.9,512.7 L267.5,437.3 L271.1,437.3 L274.7,519.8 L278.4,519.8 L282.0,574.9 L285.6,574.9 L289.3,632.2 L292.9,632.2 L296.5,515.1 L300.1,515.1 L303.8,477.9 L307.4,477.9 L311.0,582.2 L314.7,582.2 L318.3,443.8 L321.9,443.8 L325.5,489.5 L329.2,489.5 L332.8,580.4 L336.4,580.4 L340.1,577.1 L343.7,577.1 L347.3,632.2 L350.9,632.2 L354.6,524.3 L358.2,524.3 L361.8,502.3 L365.4,502.3 L369.1,546.8 L372.7,546.8 L376.3,447.9 L380.0,447.9 L383.6,465.9 L387.2,465.9 L390.8,587.7 L394.5,587.7 L398.1,518.2 L401.7,518.2 L405.4,632.2 L409.0,632.2 L412.6,507.2 L416.2,507.2 L419.9,467.8 L423.5,467.8 L427.1,632.2 L430.7,632.2 L434.4,449.6 L438.0,449.6 L441.6,567.0 L445.3,567.0 L448.9,436.8 L452.5,436.8 L456.1,484.0 L459.8,484.0 L463.4,515.7 L467.0,515.7 L470.7,536.5 L474.3,536.5 L477.9,575.5 L481.5,575.5 L485.2,632.2 L488.8,632.2 L492.4,524.3 L496.1,524.3 L499.7,499.3 L503.3,499.3 L506.9,509.0 L510.6,509.0 L514.2,465.1 L517.8,465.1 L521.4,554.8 L525.1,554.8 L528.7,281.9 L532.3,281.9 L536.0,574.3 L539.6,574.3 L543.2,632.2 L546.8,632.2 L550.5,474.3 L554.1,474.3 L557.7,519.4 L561.4,519.4 L565.0,471.4 L568.6,471.4 L572.2,465.9 L575.9,465.9 L579.5,569.4 L583.1,569.4 L586.8,474.3 L590.4,474.3 L594.0,577.9 L597.6,577.9 L601.3,518.2 L604.9,518.2 L608.5,519.4 L612.1,519.4 L615.8,462.9 L619.4,462.9 L623.0,469.2 L626.7,469.2 L630.3,574.9 L633.9,574.9 L637.5,462.9 L641.2,462.9 L644.8,565.1 L648.4,565.1 L652.1,515.1 L655.7,515.1 L659.3,632.2 L662.9,632.2 L666.6,418.8 L670.2,418.8 L673.8,581.0 L677.4,581.0 L681.1,587.1 L684.7,587.1 L688.3,529.1 L692.0,529.1 L695.6,526.7 L699.2,526.7 L702.8,542.6 L706.5,542.6 L710.1,338.3 L713.7,338.3 L717.4,632.2 L721.0,632.2 L724.6,571.8 L728.2,571.8 L731.9,506.6 L735.5,506.6 L739.1,632.2 L742.8,632.2 L746.4,512.7 L750.0,512.7 L753.6,531.6 L757.3,531.6 L760.9,581.6 L764.5,581.6 L768.1,422.0 L771.8,422.0 L775.4,632.2 L779.0,632.2 L782.7,476.1 L786.3,476.1 L789.9,560.2 L793.5,560.2 L797.2,488.5 L800.8,488.5 L804.4,506.6 L808.1,506.6 L811.7,537.7 L815.3,537.7 L818.9,485.2 L822.6,485.2 L826.2,481.6 L829.8,481.6 L833.4,632.2 L837.1,632.2 L840.7,480.4 L844.3,480.4 L848.0,578.5 L851.6,578.5 L855.2,632.2 L858.8,632.2 L862.5,479.1 L866.1,479.1 L869.7,510.9 L873.4,510.9 L877.0,584.0 L880.6,584.0 L884.2,437.0 L887.9,437.0 L891.5,474.3 L895.1,474.3 L898.8,581.0 L902.4,581.0 L906.0,531.0 L909.6,531.0 L913.3,632.2 L916.9,632.2 L920.5,535.9 L924.1,535.9 L927.8,454.2 L931.4,454.2 L935.0,581.0 L938.7,581.0 L942.3,474.9 L945.9,474.9 L949.5,580.4 L953.2,580.4 L956.8,584.6 L960.4,584.6 L964.1,473.0 L967.7,473.0 L971.3,632.2 L974.9,632.2 L978.6,506.0 L982.2,506.0 L985.8,492.6 L989.4,492.6 L993.1,632.2 L996.7,632.2 L996.7,632 L126.0,632 Z" fill="#705DA0" fill-opacity="0.1" stroke="none"/>
<path d="M126.0,560.0 L129.6,311.1 L133.3,311.1 L136.9,546.2 L140.5,546.2 L144.1,567.0 L147.8,567.0 L151.4,532.8 L155.0,532.8 L158.7,577.9 L162.3,577.9 L165.9,533.4 L169.5,533.4 L173.2,409.2 L176.8,409.2 L180.4,575.1 L184.1,575.1 L187.7,457.7 L191.3,457.7 L194.9,578.5 L198.6,578.5 L202.2,558.8 L205.8,558.8 L209.4,529.8 L213.1,529.8 L216.7,585.2 L220.3,585.2 L224.0,510.0 L227.6,510.0 L231.2,632.2 L234.8,632.2 L238.5,485.9 L242.1,485.9 L245.7,408.4 L249.4,408.4 L253.0,506.6 L256.6,506.6 L260.2,512.7 L263.9,512.7 L267.5,437.3 L271.1,437.3 L274.7,519.8 L278.4,519.8 L282.0,574.9 L285.6,574.9 L289.3,632.2 L292.9,632.2 L296.5,515.1 L300.1,515.1 L303.8,477.9 L307.4,477.9 L311.0,582.2 L314.7,582.2 L318.3,443.8 L321.9,443.8 L325.5,489.5 L329.2,489.5 L332.8,580.4 L336.4,580.4 L340.1,577.1 L343.7,577.1 L347.3,632.2 L350.9,632.2 L354.6,524.3 L358.2,524.3 L361.8,502.3 L365.4,502.3 L369.1,546.8 L372.7,546.8 L376.3,447.9 L380.0,447.9 L383.6,465.9 L387.2,465.9 L390.8,587.7 L394.5,587.7 L398.1,518.2 L401.7,518.2 L405.4,632.2 L409.0,632.2 L412.6,507.2 L416.2,507.2 L419.9,467.8 L423.5,467.8 L427.1,632.2 L430.7,632.2 L434.4,449.6 L438.0,449.6 L441.6,567.0 L445.3,567.0 L448.9,436.8 L452.5,436.8 L456.1,484.0 L459.8,484.0 L463.4,515.7 L467.0,515.7 L470.7,536.5 L474.3,536.5 L477.9,575.5 L481.5,575.5 L485.2,632.2 L488.8,632.2 L492.4,524.3 L496.1,524.3 L499.7,499.3 L503.3,499.3 L506.9,509.0 L510.6,509.0 L514.2,465.1 L517.8,465.1 L521.4,554.8 L525.1,554.8 L528.7,281.9 L532.3,281.9 L536.0,574.3 L539.6,574.3 L543.2,632.2 L546.8,632.2 L550.5,474.3 L554.1,474.3 L557.7,519.4 L561.4,519.4 L565.0,471.4 L568.6,471.4 L572.2,465.9 L575.9,465.9 L579.5,569.4 L583.1,569.4 L586.8,474.3 L590.4,474.3 L594.0,577.9 L597.6,577.9 L601.3,518.2 L604.9,518.2 L608.5,519.4 L612.1,519.4 L615.8,462.9 L619.4,462.9 L623.0,469.2 L626.7,469.2 L630.3,574.9 L633.9,574.9 L637.5,462.9 L641.2,462.9 L644.8,565.1 L648.4,565.1 L652.1,515.1 L655.7,515.1 L659.3,632.2 L662.9,632.2 L666.6,418.8 L670.2,418.8 L673.8,581.0 L677.4,581.0 L681.1,587.1 L684.7,587.1 L688.3,529.1 L692.0,529.1 L695.6,526.7 L699.2,526.7 L702.8,542.6 L706.5,542.6 L710.1,338.3 L713.7,338.3 L717.4,632.2 L721.0,632.2 L724.6,571.8 L728.2,571.8 L731.9,506.6 L735.5,506.6 L739.1,632.2 L742.8,632.2 L746.4,512.7 L750.0,512.7 L753.6,531.6 L757.3,531.6 L760.9,581.6 L764.5,581.6 L768.1,422.0 L771.8,422.0 L775.4,632.2 L779.0,632.2 L782.7,476.1 L786.3,476.1 L789.9,560.2 L793.5,560.2 L797.2,488.5 L800.8,488.5 L804.4,506.6 L808.1,506.6 L811.7,537.7 L815.3,537.7 L818.9,485.2 L822.6,485.2 L826.2,481.6 L829.8,481.6 L833.4,632.2 L837.1,632.2 L840.7,480.4 L844.3,480.4 L848.0,578.5 L851.6,578.5 L855.2,632.2 L858.8,632.2 L862.5,479.1 L866.1,479.1 L869.7,510.9 L873.4,510.9 L877.0,584.0 L880.6,584.0 L884.2,437.0 L887.9,437.0 L891.5,474.3 L895.1,474.3 L898.8,581.0 L902.4,581.0 L906.0,531.0 L909.6,531.0 L913.3,632.2 L916.9,632.2 L920.5,535.9 L924.1,535.9 L927.8,454.2 L931.4,454.2 L935.0,581.0 L938.7,581.0 L942.3,474.9 L945.9,474.9 L949.5,580.4 L953.2,580.4 L956.8,584.6 L960.4,584.6 L964.1,473.0 L967.7,473.0 L971.3,632.2 L974.9,632.2 L978.6,506.0 L982.2,506.0 L985.8,492.6 L989.4,492.6 L993.1,632.2 L996.7,632.2" fill="none" stroke="#6d5e9c" stroke-width="2" stroke-linejoin="round"/>
<path d="M126.0,560.0 L129.6,311.1 L133.3,311.1 L136.9,546.2 L140.5,546.2 L144.1,567.0 L147.8,567.0 L151.4,532.8 L155.0,532.8 L158.7,577.9 L162.3,577.9 L165.9,533.4 L169.5,533.4 L173.2,409.2 L176.8,409.2 L180.4,575.1 L184.1,575.1 L187.7,457.7 L191.3,457.7 L194.9,578.5 L198.6,578.5 L202.2,558.8 L205.8,558.8 L209.4,529.8 L213.1,529.8 L216.7,585.2 L220.3,585.2 L224.0,510.0 L227.6,510.0 L231.2,632.2 L234.8,632.2 L238.5,485.9 L242.1,485.9 L245.7,408.4 L249.4,408.4 L253.0,506.6 L256.6,506.6 L260.2,512.7 L263.9,512.7 L267.5,437.3 L271.1,437.3 L274.7,519.8 L278.4,519.8 L282.0,574.9 L285.6,574.9 L289.3,632.2 L292.9,632.2 L296.5,515.1 L300.1,515.1 L303.8,477.9 L307.4,477.9 L311.0,582.2 L314.7,582.2 L318.3,443.8 L321.9,443.8 L325.5,489.5 L329.2,489.5 L332.8,580.4 L336.4,580.4 L340.1,577.1 L343.7,577.1 L347.3,632.2 L350.9,632.2 L354.6,524.3 L358.2,524.3 L361.8,502.3 L365.4,502.3 L369.1,546.8 L372.7,546.8 L376.3,447.9 L380.0,447.9 L383.6,465.9 L387.2,465.9 L390.8,587.7 L394.5,587.7 L398.1,518.2 L401.7,518.2 L405.4,632.2 L409.0,632.2 L412.6,507.2 L416.2,507.2 L419.9,467.8 L423.5,467.8 L427.1,632.2 L430.7,632.2 L434.4,449.6 L438.0,449.6 L441.6,567.0 L445.3,567.0 L448.9,436.8 L452.5,436.8 L456.1,484.0 L459.8,484.0 L463.4,515.7 L467.0,515.7 L470.7,536.5 L474.3,536.5 L477.9,575.5 L481.5,575.5 L485.2,632.2 L488.8,632.2 L492.4,524.3 L496.1,524.3 L499.7,499.3 L503.3,499.3 L506.9,509.0 L510.6,509.0 L514.2,465.1 L517.8,465.1 L521.4,554.8 L525.1,554.8 L528.7,281.9 L532.3,281.9 L536.0,574.3 L539.6,574.3 L543.2,632.2 L546.8,632.2 L550.5,474.3 L554.1,474.3 L557.7,519.4 L561.4,519.4 L565.0,471.4 L568.6,471.4 L572.2,465.9 L575.9,465.9 L579.5,569.4 L583.1,569.4 L586.8,474.3 L590.4,474.3 L594.0,577.9 L597.6,577.9 L601.3,518.2 L604.9,518.2 L608.5,519.4 L612.1,519.4 L615.8,462.9 L619.4,462.9 L623.0,469.2 L626.7,469.2 L630.3,574.9 L633.9,574.9 L637.5,462.9 L641.2,462.9 L644.8,565.1 L648.4,565.1 L652.1,515.1 L655.7,515.1 L659.3,632.2 L662.9,632.2 L666.6,418.8 L670.2,418.8 L673.8,581.0 L677.4,581.0 L681.1,587.1 L684.7,587.1 L688.3,529.1 L692.0,529.1 L695.6,526.7 L699.2,526.7 L702.8,542.6 L706.5,542.6 L710.1,338.3 L713.7,338.3 L717.4,632.2 L721.0,632.2 L724.6,571.8 L728.2,571.8 L731.9,506.6 L735.5,506.6 L739.1,632.2 L742.8,632.2 L746.4,512.7 L750.0,512.7 L753.6,531.6 L757.3,531.6 L760.9,581.6 L764.5,581.6 L768.1,422.0 L771.8,422.0 L775.4,632.2 L779.0,632.2 L782.7,476.1 L786.3,476.1 L789.9,560.2 L793.5,560.2 L797.2,488.5 L800.8,488.5 L804.4,506.6 L808.1,506.6 L811.7,537.7 L815.3,537.7 L818.9,485.2 L822.6,485.2 L826.2,481.6 L829.8,481.6 L833.4,632.2 L837.1,632.2 L840.7,480.4 L844.3,480.4 L848.0,578.5 L851.6,578.5 L855.2,632.2 L858.8,632.2 L862.5,479.1 L866.1,479.1 L869.7,510.9 L873.4,510.9 L877.0,584.0 L880.6,584.0 L884.2,437.0 L887.9,437.0 L891.5,474.3 L895.1,474.3 L898.8,581.0 L902.4,581.0 L906.0,531.0 L909.6,531.0 L913.3,632.2 L916.9,632.2 L920.5,535.9 L924.1,535.9 L927.8,454.2 L931.4,454.2 L935.0,581.0 L938.7,581.0 L942.3,474.9 L945.9,474.9 L949.5,580.4 L953.2,580.4 L956.8,584.6 L960.4,584.6 L964.1,473.0 L967.7,473.0 L971.3,632.2 L974.9,632.2 L978.6,506.0 L982.2,506.0 L985.8,492.6 L989.4,492.6 L993.1,632.2 L996.7,632.2 L996.7,632 L126.0,632 Z" fill="#508642" fill-opacity="0.1" stroke="none"/>
<path d="M126.0,560.0 L129.6,311.1 L133.3,311.1 L136.9,546.2 L140.5,546.2 L144.1,567.0 L147.8,567.0 L151.4,532.8 L155.0,532.8 L158.7,577.9 L162.3,577.9 L165.9,533.4 L169.5,533.4 L173.2,409.2 L176.8,409.2 L180.4,575.1 L184.1,575.1 L187.7,457.7 L191.3,457.7 L194.9,578.5 L198.6,578.5 L202.2,558.8 L205.8,558.8 L209.4,529.8 L213.1,529.8 L216.7,585.2 L220.3,585.2 L224.0,510.0 L227.6,510.0 L231.2,632.2 L234.8,632.2 L238.5,485.9 L242.1,485.9 L245.7,408.4 L249.4,408.4 L253.0,506.6 L256.6,506.6 L260.2,512.7 L263.9,512.7 L267.5,437.3 L271.1,437.3 L274.7,519.8 L278.4,519.8 L282.0,574.9 L285.6,574.9 L289.3,632.2 L292.9,632.2 L296.5,515.1 L300.1,515.1 L303.8,477.9 L307.4,477.9 L311.0,582.2 L314.7,582.2 L318.3,443.8 L321.9,443.8 L325.5,489.5 L329.2,489.5 L332.8,580.4 L336.4,580.4 L340.1,577.1 L343.7,577.1 L347.3,632.2 L350.9,632.2 L354.6,524.3 L358.2,524.3 L361.8,502.3 L365.4,502.3 L369.1,546.8 L372.7,546.8 L376.3,447.9 L380.0,447.9 L383.6,465.9 L387.2,465.9 L390.8,587.7 L394.5,587.7 L398.1,518.2 L401.7,518.2 L405.4,632.2 L409.0,632.2 L412.6,507.2 L416.2,507.2 L419.9,467.8 L423.5,467.8 L427.1,632.2 L430.7,632.2 L434.4,449.6 L438.0,449.6 L441.6,567.0 L445.3,567.0 L448.9,436.8 L452.5,436.8 L456.1,484.0 L459.8,484.0 L463.4,515.7 L467.0,515.7 L470.7,536.5 L474.3,536.5 L477.9,575.5 L481.5,575.5 L485.2,632.2 L488.8,632.2 L492.4,524.3 L496.1,524.3 L499.7,499.3 L503.3,499.3 L506.9,509.0 L510.6,509.0 L514.2,465.1 L517.8,465.1 L521.4,554.8 L525.1,554.8 L528.7,281.9 L532.3,281.9 L536.0,574.3 L539.6,574.3 L543.2,632.2 L546.8,632.2 L550.5,474.3 L554.1,474.3 L557.7,519.4 L561.4,519.4 L565.0,471.4 L568.6,471.4 L572.2,465.9 L575.9,465.9 L579.5,569.4 L583.1,569.4 L586.8,474.3 L590.4,474.3 L594.0,577.9 L597.6,577.9 L601.3,518.2 L604.9,518.2 L608.5,519.4 L612.1,519.4 L615.8,462.9 L619.4,462.9 L623.0,469.2 L626.7,469.2 L630.3,574.9 L633.9,574.9 L637.5,462.9 L641.2,462.9 L644.8,565.1 L648.4,565.1 L652.1,515.1 L655.7,515.1 L659.3,632.2 L662.9,632.2 L666.6,418.8 L670.2,418.8 L673.8,581.0 L677.4,581.0 L681.1,587.1 L684.7,587.1 L688.3,529.1 L692.0,529.1 L695.6,526.7 L699.2,526.7 L702.8,542.6 L706.5,542.6 L710.1,338.3 L713.7,338.3 L717.4,632.2 L721.0,632.2 L724.6,571.8 L728.2,571.8 L731.9,506.6 L735.5,506.6 L739.1,632.2 L742.8,632.2 L746.4,512.7 L750.0,512.7 L753.6,531.6 L757.3,531.6 L760.9,581.6 L764.5,581.6 L768.1,422.0 L771.8,422.0 L775.4,632.2 L779.0,632.2 L782.7,476.1 L786.3,476.1 L789.9,560.2 L793.5,560.2 L797.2,488.5 L800.8,488.5 L804.4,506.6 L808.1,506.6 L811.7,537.7 L815.3,537.7 L818.9,485.2 L822.6,485.2 L826.2,481.6 L829.8,481.6 L833.4,632.2 L837.1,632.2 L840.7,480.4 L844.3,480.4 L848.0,578.5 L851.6,578.5 L855.2,632.2 L858.8,632.2 L862.5,479.1 L866.1,479.1 L869.7,510.9 L873.4,510.9 L877.0,584.0 L880.6,584.0 L884.2,437.0 L887.9,437.0 L891.5,474.3 L895.1,474.3 L898.8,581.0 L902.4,581.0 L906.0,531.0 L909.6,531.0 L913.3,632.2 L916.9,632.2 L920.5,535.9 L924.1,535.9 L927.8,454.2 L931.4,454.2 L935.0,581.0 L938.7,581.0 L942.3,474.9 L945.9,474.9 L949.5,580.4 L953.2,580.4 L956.8,584.6 L960.4,584.6 L964.1,473.0 L967.7,473.0 L971.3,632.2 L974.9,632.2 L978.6,506.0 L982.2,506.0 L985.8,492.6 L989.4,492.6 L993.1,632.2 L996.7,632.2" fill="none" stroke="#5d854a" stroke-width="2" stroke-linejoin="round"/>
<path d="M126.0,560.0 L129.6,311.1 L133.3,311.1 L136.9,546.2 L140.5,546.2 L144.1,567.0 L147.8,567.0 L151.4,532.8 L155.0,532.8 L158.7,577.9 L162.3,577.9 L165.9,533.4 L169.5,533.4 L173.2,409.2 L176.8,409.2 L180.4,575.1 L184.1,575.1 L187.7,457.7 L191.3,457.7 L194.9,578.5 L198.6,578.5 L202.2,558.8 L205.8,558.8 L209.4,529.8 L213.1,529.8 L216.7,585.2 L220.3,585.2 L224.0,510.0 L227.6,510.0 L231.2,632.2 L234.8,632.2 L238.5,485.9 L242.1,485.9 L245.7,408.4 L249.4,408.4 L253.0,506.6 L256.6,506.6 L260.2,512.7 L263.9,512.7 L267.5,437.3 L271.1,437.3 L274.7,519.8 L278.4,519.8 L282.0,574.9 L285.6,574.9 L289.3,632.2 L292.9,632.2 L296.5,515.1 L300.1,515.1 L303.8,477.9 L307.4,477.9 L311.0,582.2 L314.7,582.2 L318.3,443.8 L321.9,443.8 L325.5,489.5 L329.2,489.5 L332.8,580.4 L336.4,580.4 L340.1,577.1 L343.7,577.1 L347.3,632.2 L350.9,632.2 L354.6,524.3 L358.2,524.3 L361.8,502.3 L365.4,502.3 L369.1,546.8 L372.7,546.8 L376.3,447.9 L380.0,447.9 L383.6,465.9 L387.2,465.9 L390.8,587.7 L394.5,587.7 L398.1,518.2 L401.7,518.2 L405.4,632.2 L409.0,632.2 L412.6,507.2 L416.2,507.2 L419.9,467.8 L423.5,467.8 L427.1,632.2 L430.7,632.2 L434.4,449.6 L438.0,449.6 L441.6,567.0 L445.3,567.0 L448.9,436.8 L452.5,436.8 L456.1,484.0 L459.8,484.0 L463.4,515.7 L467.0,515.7 L470.7,536.5 L474.3,536.5 L477.9,575.5 L481.5,575.5 L485.2,632.2 L488.8,632.2 L492.4,524.3 L496.1,524.3 L499.7,499.3 L503.3,499.3 L506.9,509.0 L510.6,509.0 L514.2,465.1 L517.8,465.1 L521.4,554.8 L525.1,554.8 L528.7,281.9 L532.3,281.9 L536.0,574.3 L539.6,574.3 L543.2,632.2 L546.8,632.2 L550.5,474.3 L554.1,474.3 L557.7,519.4 L561.4,519.4 L565.0,471.4 L568.6,471.4 L572.2,465.9 L575.9,465.9 L579.5,569.4 L583.1,569.4 L586.8,474.3 L590.4,474.3 L594.0,577.9 L597.6,577.9 L601.3,518.2 L604.9,518.2 L608.5,519.4 L612.1,519.4 L615.8,462.9 L619.4,462.9 L623.0,469.2 L626.7,469.2 L630.3,574.9 L633.9,574.9 L637.5,462.9 L641.2,462.9 L644.8,565.1 L648.4,565.1 L652.1,515.1 L655.7,515.1 L659.3,632.2 L662.9,632.2 L666.6,418.8 L670.2,418.8 L673.8,581.0 L677.4,581.0 L681.1,587.1 L684.7,587.1 L688.3,529.1 L692.0,529.1 L695.6,526.7 L699.2,526.7 L702.8,542.6 L706.5,542.6 L710.1,338.3 L713.7,338.3 L717.4,632.2 L721.0,632.2 L724.6,571.8 L728.2,571.8 L731.9,506.6 L735.5,506.6 L739.1,632.2 L742.8,632.2 L746.4,512.7 L750.0,512.7 L753.6,531.6 L757.3,531.6 L760.9,581.6 L764.5,581.6 L768.1,422.0 L771.8,422.0 L775.4,632.2 L779.0,632.2 L782.7,476.1 L786.3,476.1 L789.9,560.2 L793.5,560.2 L797.2,488.5 L800.8,488.5 L804.4,506.6 L808.1,506.6 L811.7,537.7 L815.3,537.7 L818.9,485.2 L822.6,485.2 L826.2,481.6 L829.8,481.6 L833.4,632.2 L837.1,632.2 L840.7,480.4 L844.3,480.4 L848.0,578.5 L851.6,578.5 L855.2,632.2 L858.8,632.2 L862.5,479.1 L866.1,479.1 L869.7,510.9 L873.4,510.9 L877.0,584.0 L880.6,584.0 L884.2,437.0 L887.9,437.0 L891.5,474.3 L895.1,474.3 L898.8,581.0 L902.4,581.0 L906.0,531.0 L909.6,531.0 L913.3,632.2 L916.9,632.2 L920.5,535.9 L924.1,535.9 L927.8,454.2 L931.4,454.2 L935.0,581.0 L938.7,581.0 L942.3,474.9 L945.9,474.9 L949.5,580.4 L953.2,580.4 L956.8,584.6 L960.4,584.6 L964.1,473.0 L967.7,473.0 L971.3,632.2 L974.9,632.2 L978.6,506.0 L982.2,506.0 L985.8,492.6 L989.4,492.6 L993.1,632.2 L996.7,632.2 L996.7,632 L126.0,632 Z" fill="#CCA300" fill-opacity="0.1" stroke="none"/>
<path d="M126.0,560.0 L129.6,311.1 L133.3,311.1 L136.9,546.2 L140.5,546.2 L144.1,567.0 L147.8,567.0 L151.4,532.8 L155.0,532.8 L158.7,577.9 L162.3,577.9 L165.9,533.4 L169.5,533.4 L173.2,409.2 L176.8,409.2 L180.4,575.1 L184.1,575.1 L187.7,457.7 L191.3,457.7 L194.9,578.5 L198.6,578.5 L202.2,558.8 L205.8,558.8 L209.4,529.8 L213.1,529.8 L216.7,585.2 L220.3,585.2 L224.0,510.0 L227.6,510.0 L231.2,632.2 L234.8,632.2 L238.5,485.9 L242.1,485.9 L245.7,408.4 L249.4,408.4 L253.0,506.6 L256.6,506.6 L260.2,512.7 L263.9,512.7 L267.5,437.3 L271.1,437.3 L274.7,519.8 L278.4,519.8 L282.0,574.9 L285.6,574.9 L289.3,632.2 L292.9,632.2 L296.5,515.1 L300.1,515.1 L303.8,477.9 L307.4,477.9 L311.0,582.2 L314.7,582.2 L318.3,443.8 L321.9,443.8 L325.5,489.5 L329.2,489.5 L332.8,580.4 L336.4,580.4 L340.1,577.1 L343.7,577.1 L347.3,632.2 L350.9,632.2 L354.6,524.3 L358.2,524.3 L361.8,502.3 L365.4,502.3 L369.1,546.8 L372.7,546.8 L376.3,447.9 L380.0,447.9 L383.6,465.9 L387.2,465.9 L390.8,587.7 L394.5,587.7 L398.1,518.2 L401.7,518.2 L405.4,632.2 L409.0,632.2 L412.6,507.2 L416.2,507.2 L419.9,467.8 L423.5,467.8 L427.1,632.2 L430.7,632.2 L434.4,449.6 L438.0,449.6 L441.6,567.0 L445.3,567.0 L448.9,436.8 L452.5,436.8 L456.1,484.0 L459.8,484.0 L463.4,515.7 L467.0,515.7 L470.7,536.5 L474.3,536.5 L477.9,575.5 L481.5,575.5 L485.2,632.2 L488.8,632.2 L492.4,524.3 L496.1,524.3 L499.7,499.3 L503.3,499.3 L506.9,509.0 L510.6,509.0 L514.2,465.1 L517.8,465.1 L521.4,554.8 L525.1,554.8 L528.7,281.9 L532.3,281.9 L536.0,574.3 L539.6,574.3 L543.2,632.2 L546.8,632.2 L550.5,474.3 L554.1,474.3 L557.7,519.4 L561.4,519.4 L565.0,471.4 L568.6,471.4 L572.2,465.9 L575.9,465.9 L579.5,569.4 L583.1,569.4 L586.8,474.3 L590.4,474.3 L594.0,577.9 L597.6,577.9 L601.3,518.2 L604.9,518.2 L608.5,519.4 L612.1,519.4 L615.8,462.9 L619.4,462.9 L623.0,469.2 L626.7,469.2 L630.3,574.9 L633.9,574.9 L637.5,462.9 L641.2,462.9 L644.8,565.1 L648.4,565.1 L652.1,515.1 L655.7,515.1 L659.3,632.2 L662.9,632.2 L666.6,418.8 L670.2,418.8 L673.8,581.0 L677.4,581.0 L681.1,587.1 L684.7,587.1 L688.3,529.1 L692.0,529.1 L695.6,526.7 L699.2,526.7 L702.8,542.6 L706.5,542.6 L710.1,338.3 L713.7,338.3 L717.4,632.2 L721.0,632.2 L724.6,571.8 L728.2,571.8 L731.9,506.6 L735.5,506.6 L739.1,632.2 L742.8,632.2 L746.4,512.7 L750.0,512.7 L753.6,531.6 L757.3,531.6 L760.9,581.6 L764.5,581.6 L768.1,422.0 L771.8,422.0 L775.4,632.2 L779.0,632.2 L782.7,476.1 L786.3,476.1 L789.9,560.2 L793.5,560.2 L797.2,488.5 L800.8,488.5 L804.4,506.6 L808.1,506.6 L811.7,537.7 L815.3,537.7 L818.9,485.2 L822.6,485.2 L826.2,481.6 L829.8,481.6 L833.4,632.2 L837.1,632.2 L840.7,480.4 L844.3,480.4 L848.0,578.5 L851.6,578.5 L855.2,632.2 L858.8,632.2 L862.5,479.1 L866.1,479.1 L869.7,510.9 L873.4,510.9 L877.0,584.0 L880.6,584.0 L884.2,437.0 L887.9,437.0 L891.5,474.3 L895.1,474.3 L898.8,581.0 L902.4,581.0 L906.0,531.0 L909.6,531.0 L913.3,632.2 L916.9,632.2 L920.5,535.9 L924.1,535.9 L927.8,454.2 L931.4,454.2 L935.0,581.0 L938.7,581.0 L942.3,474.9 L945.9,474.9 L949.5,580.4 L953.2,580.4 L956.8,584.6 L960.4,584.6 L964.1,473.0 L967.7,473.0 L971.3,632.2 L974.9,632.2 L978.6,506.0 L982.2,506.0 L985.8,492.6 L989.4,492.6 L993.1,632.2 L996.7,632.2" fill="none" stroke="#c6a536" stroke-width="2" stroke-linejoin="round"/>
</g>
<rect x="1306" y="270" width="870.6999999999998" height="2" fill="rgba(255,255,255,0.18)"/>
<rect x="1306" y="342" width="870.6999999999998" height="2" fill="rgba(255,255,255,0.18)"/>
<rect x="1306" y="414" width="870.6999999999998" height="2" fill="rgba(255,255,255,0.18)"/>
<rect x="1306" y="486" width="870.6999999999998" height="2" fill="rgba(255,255,255,0.18)"/>
<rect x="1306" y="558" width="870.6999999999998" height="2" fill="rgba(255,255,255,0.18)"/>
<rect x="1306" y="632" width="870.6999999999998" height="2" fill="rgba(255,255,255,0.18)"/>
<rect x="1426" y="270" width="2" height="362" fill="rgba(255,255,255,0.18)"/>
<rect x="1572" y="270" width="2" height="362" fill="rgba(255,255,255,0.18)"/>
<rect x="1716" y="270" width="2" height="362" fill="rgba(255,255,255,0.18)"/>
<rect x="1862" y="270" width="2" height="362" fill="rgba(255,255,255,0.18)"/>
<rect x="2008" y="270" width="2" height="362" fill="rgba(255,255,255,0.18)"/>
<rect x="2152" y="270" width="2" height="362" fill="rgba(255,255,255,0.18)"/>
<clipPath id="c1"><rect x="1306" y="265" width="870.6999999999998" height="369"/></clipPath>
<g clip-path="url(#c1)">
<path d="M1304.0,474.6 L1307.6,498.0 L1311.3,498.0 L1314.9,550.5 L1318.5,550.5 L1322.1,554.1 L1325.8,554.1 L1329.4,485.9 L1333.0,485.9 L1336.7,550.5 L1340.3,550.5 L1343.9,477.9 L1347.5,477.9 L1351.2,350.1 L1354.8,350.1 L1358.4,546.2 L1362.1,546.2 L1365.7,346.0 L1369.3,346.0 L1372.9,549.9 L1376.6,549.9 L1380.2,539.5 L1383.8,539.5 L1387.4,474.9 L1391.1,474.9 L1394.7,549.3 L1398.3,549.3 L1402.0,426.9 L1405.6,426.9 L1409.2,632.2 L1412.8,632.2 L1416.5,467.8 L1420.1,467.8 L1423.7,352.8 L1427.4,352.8 L1431.0,549.3 L1434.6,549.3 L1438.2,435.9 L1441.9,435.9 L1445.5,382.0 L1449.1,382.0 L1452.7,535.9 L1456.4,535.9 L1460.0,529.1 L1463.6,529.1 L1467.3,632.2 L1470.9,632.2 L1474.5,467.0 L1478.1,467.0 L1481.8,474.3 L1485.4,474.3 L1489.0,551.7 L1492.7,551.7 L1496.3,429.7 L1499.9,429.7 L1503.5,367.8 L1507.2,367.8 L1510.8,551.1 L1514.4,551.1 L1518.1,529.1 L1521.7,529.1 L1525.3,632.2 L1528.9,632.2 L1532.6,470.0 L1536.2,470.0 L1539.8,479.1 L1543.4,479.1 L1547.1,544.4 L1550.7,544.4 L1554.3,477.3 L1558.0,477.3 L1561.6,365.1 L1565.2,365.1 L1568.8,549.3 L1572.5,549.3 L1576.1,531.0 L1579.7,531.0 L1583.4,632.2 L1587.0,632.2 L1590.6,456.4 L1594.2,456.4 L1597.9,470.0 L1601.5,470.0 L1605.1,632.2 L1608.7,632.2 L1612.4,434.6 L1616.0,434.6 L1619.6,524.3 L1623.3,524.3 L1626.9,424.2 L1630.5,424.2 L1634.1,525.5 L1637.8,525.5 L1641.4,430.2 L1645.0,430.2 L1648.7,502.3 L1652.3,502.3 L1655.9,545.0 L1659.5,545.0 L1663.2,632.2 L1666.8,632.2 L1670.4,462.4 L1674.1,462.4 L1677.7,419.0 L1681.3,419.0 L1684.9,547.4 L1688.6,547.4 L1692.2,352.8 L1695.8,352.8 L1699.4,548.0 L1703.1,548.0 L1706.7,363.4 L1710.3,363.4 L1714.0,548.0 L1717.6,548.0 L1721.2,632.2 L1724.8,632.2 L1728.5,482.2 L1732.1,482.2 L1735.7,479.1 L1739.4,479.1 L1743.0,532.8 L1746.6,532.8 L1750.2,488.3 L1753.9,488.3 L1757.5,504.1 L1761.1,504.1 L1764.8,354.1 L1768.4,354.1 L1772.0,549.3 L1775.6,549.3 L1779.3,472.4 L1782.9,472.4 L1786.5,545.6 L1790.1,545.6 L1793.8,467.0 L1797.4,467.0 L1801.0,471.8 L1804.7,471.8 L1808.3,530.4 L1811.9,530.4 L1815.5,474.9 L1819.2,474.9 L1822.8,555.4 L1826.4,555.4 L1830.1,460.5 L1833.7,460.5 L1837.3,632.2 L1840.9,632.2 L1844.6,330.2 L1848.2,330.2 L1851.8,547.4 L1855.4,547.4 L1859.1,554.1 L1862.7,554.1 L1866.3,466.5 L1870.0,466.5 L1873.6,426.9 L1877.2,426.9 L1880.8,499.9 L1884.5,499.9 L1888.1,437.8 L1891.7,437.8 L1895.4,632.2 L1899.0,632.2 L1902.6,546.2 L1906.2,546.2 L1909.9,475.5 L1913.5,475.5 L1917.1,632.2 L1920.8,632.2 L1924.4,478.5 L1928.0,478.5 L1931.6,485.9 L1935.3,485.9 L1938.9,551.7 L1942.5,551.7 L1946.1,408.4 L1949.8,408.4 L1953.4,632.2 L1957.0,632.2 L1960.7,381.1 L1964.3,381.1 L1967.9,530.4 L1971.5,530.4 L1975.2,424.2 L1978.8,424.2 L1982.4,539.5 L1986.1,539.5 L1989.7,496.2 L1993.3,496.2 L1996.9,549.9 L2000.6,549.9 L2004.2,398.3 L2007.8,398.3 L2011.4,632.2 L2015.1,632.2 L2018.7,365.1 L2022.3,365.1 L2026.0,543.8 L2029.6,543.8 L2033.2,632.2 L2036.8,632.2 L2040.5,481.6 L2044.1,481.6 L2047.7,477.9 L2051.4,477.9 L2055.0,555.4 L2058.6,555.4 L2062.2,376.5 L2065.9,376.5 L2069.5,510.9 L2073.1,510.9 L2076.8,519.4 L2080.4,519.4 L2084.0,465.1 L2087.6,465.1 L2091.3,632.2 L2094.9,632.2 L2098.5,482.8 L2102.1,482.8 L2105.8,479.8 L2109.4,479.8 L2113.0,540.1 L2116.7,540.1 L2120.3,374.6 L2123.9,374.6 L2127.5,550.5 L2131.2,550.5 L2134.8,537.1 L2138.4,537.1 L2142.1,468.4 L2145.7,468.4 L2149.3,632.2 L2152.9,632.2 L2156.6,471.2 L2160.2,471.2 L2163.8,427.5 L2167.4,427.5 L2171.1,632.2 L2174.7,632.2 L2174.7,632 L1304.0,632 Z" fill="#7EB26D" fill-opacity="0.1" stroke="none"/>
<path d="M1304.0,474.6 L1307.6,498.0 L1311.3,498.0 L1314.9,550.5 L1318.5,550.5 L1322.1,554.1 L1325.8,554.1 L1329.4,485.9 L1333.0,485.9 L1336.7,550.5 L1340.3,550.5 L1343.9,477.9 L1347.5,477.9 L1351.2,350.1 L1354.8,350.1 L1358.4,546.2 L1362.1,546.2 L1365.7,346.0 L1369.3,346.0 L1372.9,549.9 L1376.6,549.9 L1380.2,539.5 L1383.8,539.5 L1387.4,474.9 L1391.1,474.9 L1394.7,549.3 L1398.3,549.3 L1402.0,426.9 L1405.6,426.9 L1409.2,632.2 L1412.8,632.2 L1416.5,467.8 L1420.1,467.8 L1423.7,352.8 L1427.4,352.8 L1431.0,549.3 L1434.6,549.3 L1438.2,435.9 L1441.9,435.9 L1445.5,382.0 L1449.1,382.0 L1452.7,535.9 L1456.4,535.9 L1460.0,529.1 L1463.6,529.1 L1467.3,632.2 L1470.9,632.2 L1474.5,467.0 L1478.1,467.0 L1481.8,474.3 L1485.4,474.3 L1489.0,551.7 L1492.7,551.7 L1496.3,429.7 L1499.9,429.7 L1503.5,367.8 L1507.2,367.8 L1510.8,551.1 L1514.4,551.1 L1518.1,529.1 L1521.7,529.1 L1525.3,632.2 L1528.9,632.2 L1532.6,470.0 L1536.2,470.0 L1539.8,479.1 L1543.4,479.1 L1547.1,544.4 L1550.7,544.4 L1554.3,477.3 L1558.0,477.3 L1561.6,365.1 L1565.2,365.1 L1568.8,549.3 L1572.5,549.3 L1576.1,531.0 L1579.7,531.0 L1583.4,632.2 L1587.0,632.2 L1590.6,456.4 L1594.2,456.4 L1597.9,470.0 L1601.5,470.0 L1605.1,632.2 L1608.7,632.2 L1612.4,434.6 L1616.0,434.6 L1619.6,524.3 L1623.3,524.3 L1626.9,424.2 L1630.5,424.2 L1634.1,525.5 L1637.8,525.5 L1641.4,430.2 L1645.0,430.2 L1648.7,502.3 L1652.3,502.3 L1655.9,545.0 L1659.5,545.0 L1663.2,632.2 L1666.8,632.2 L1670.4,462.4 L1674.1,462.4 L1677.7,419.0 L1681.3,419.0 L1684.9,547.4 L1688.6,547.4 L1692.2,352.8 L1695.8,352.8 L1699.4,548.0 L1703.1,548.0 L1706.7,363.4 L1710.3,363.4 L1714.0,548.0 L1717.6,548.0 L1721.2,632.2 L1724.8,632.2 L1728.5,482.2 L1732.1,482.2 L1735.7,479.1 L1739.4,479.1 L1743.0,532.8 L1746.6,532.8 L1750.2,488.3 L1753.9,488.3 L1757.5,504.1 L1761.1,504.1 L1764.8,354.1 L1768.4,354.1 L1772.0,549.3 L1775.6,549.3 L1779.3,472.4 L1782.9,472.4 L1786.5,545.6 L1790.1,545.6 L1793.8,467.0 L1797.4,467.0 L1801.0,471.8 L1804.7,471.8 L1808.3,530.4 L1811.9,530.4 L1815.5,474.9 L1819.2,474.9 L1822.8,555.4 L1826.4,555.4 L1830.1,460.5 L1833.7,460.5 L1837.3,632.2 L1840.9,632.2 L1844.6,330.2 L1848.2,330.2 L1851.8,547.4 L1855.4,547.4 L1859.1,554.1 L1862.7,554.1 L1866.3,466.5 L1870.0,466.5 L1873.6,426.9 L1877.2,426.9 L1880.8,499.9 L1884.5,499.9 L1888.1,437.8 L1891.7,437.8 L1895.4,632.2 L1899.0,632.2 L1902.6,546.2 L1906.2,546.2 L1909.9,475.5 L1913.5,475.5 L1917.1,632.2 L1920.8,632.2 L1924.4,478.5 L1928.0,478.5 L1931.6,485.9 L1935.3,485.9 L1938.9,551.7 L1942.5,551.7 L1946.1,408.4 L1949.8,408.4 L1953.4,632.2 L1957.0,632.2 L1960.7,381.1 L1964.3,381.1 L1967.9,530.4 L1971.5,530.4 L1975.2,424.2 L1978.8,424.2 L1982.4,539.5 L1986.1,539.5 L1989.7,496.2 L1993.3,496.2 L1996.9,549.9 L2000.6,549.9 L2004.2,398.3 L2007.8,398.3 L2011.4,632.2 L2015.1,632.2 L2018.7,365.1 L2022.3,365.1 L2026.0,543.8 L2029.6,543.8 L2033.2,632.2 L2036.8,632.2 L2040.5,481.6 L2044.1,481.6 L2047.7,477.9 L2051.4,477.9 L2055.0,555.4 L2058.6,555.4 L2062.2,376.5 L2065.9,376.5 L2069.5,510.9 L2073.1,510.9 L2076.8,519.4 L2080.4,519.4 L2084.0,465.1 L2087.6,465.1 L2091.3,632.2 L2094.9,632.2 L2098.5,482.8 L2102.1,482.8 L2105.8,479.8 L2109.4,479.8 L2113.0,540.1 L2116.7,540.1 L2120.3,374.6 L2123.9,374.6 L2127.5,550.5 L2131.2,550.5 L2134.8,537.1 L2138.4,537.1 L2142.1,468.4 L2145.7,468.4 L2149.3,632.2 L2152.9,632.2 L2156.6,471.2 L2160.2,471.2 L2163.8,427.5 L2167.4,427.5 L2171.1,632.2 L2174.7,632.2" fill="none" stroke="#89b174" stroke-width="2" stroke-linejoin="round"/>
<path d="M1304.0,563.9 L1307.6,575.5 L1311.3,575.5 L1314.9,565.1 L1318.5,565.1 L1322.1,581.0 L1325.8,581.0 L1329.4,485.9 L1333.0,485.9 L1336.7,557.2 L1340.3,557.2 L1343.9,553.5 L1347.5,553.5 L1351.2,560.2 L1354.8,560.2 L1358.4,550.5 L1362.1,550.5 L1365.7,549.9 L1369.3,549.9 L1372.9,565.7 L1376.6,565.7 L1380.2,550.5 L1383.8,550.5 L1387.4,474.9 L1391.1,474.9 L1394.7,586.5 L1398.3,586.5 L1402.0,556.0 L1405.6,556.0 L1409.2,632.2 L1412.8,632.2 L1416.5,549.3 L1420.1,549.3 L1423.7,549.9 L1427.4,549.9 L1431.0,571.2 L1434.6,571.2 L1438.2,571.8 L1441.9,571.8 L1445.5,572.4 L1449.1,572.4 L1452.7,587.1 L1456.4,587.1 L1460.0,567.6 L1463.6,567.6 L1467.3,632.2 L1470.9,632.2 L1474.5,567.0 L1478.1,567.0 L1481.8,560.9 L1485.4,560.9 L1489.0,551.7 L1492.7,551.7 L1496.3,591.3 L1499.9,591.3 L1503.5,549.9 L1507.2,549.9 L1510.8,577.9 L1514.4,577.9 L1518.1,556.6 L1521.7,556.6 L1525.3,632.2 L1528.9,632.2 L1532.6,570.6 L1536.2,570.6 L1539.8,553.5 L1543.4,553.5 L1547.1,552.3 L1550.7,552.3 L1554.3,564.5 L1558.0,564.5 L1561.6,538.9 L1565.2,538.9 L1568.8,560.2 L1572.5,560.2 L1576.1,563.9 L1579.7,563.9 L1583.4,632.2 L1587.0,632.2 L1590.6,572.4 L1594.2,572.4 L1597.9,549.9 L1601.5,549.9 L1605.1,632.2 L1608.7,632.2 L1612.4,573.7 L1616.0,573.7 L1619.6,563.3 L1623.3,563.3 L1626.9,558.4 L1630.5,558.4 L1634.1,546.8 L1637.8,546.8 L1641.4,552.9 L1645.0,552.9 L1648.7,557.8 L1652.3,557.8 L1655.9,584.6 L1659.5,584.6 L1663.2,632.2 L1666.8,632.2 L1670.4,560.9 L1674.1,560.9 L1677.7,550.5 L1681.3,550.5 L1684.9,586.5 L1688.6,586.5 L1692.2,570.0 L1695.8,570.0 L1699.4,548.0 L1703.1,548.0 L1706.7,567.6 L1710.3,567.6 L1714.0,571.2 L1717.6,571.2 L1721.2,632.2 L1724.8,632.2 L1728.5,565.1 L1732.1,565.1 L1735.7,556.6 L1739.4,556.6 L1743.0,556.0 L1746.6,556.0 L1750.2,584.6 L1753.9,584.6 L1757.5,504.1 L1761.1,504.1 L1764.8,552.9 L1768.4,552.9 L1772.0,565.7 L1775.6,565.7 L1779.3,545.0 L1782.9,545.0 L1786.5,600.5 L1790.1,600.5 L1793.8,567.6 L1797.4,567.6 L1801.0,561.5 L1804.7,561.5 L1808.3,577.3 L1811.9,577.3 L1815.5,563.3 L1819.2,563.3 L1822.8,567.6 L1826.4,567.6 L1830.1,609.0 L1833.7,609.0 L1837.3,632.2 L1840.9,632.2 L1844.6,554.8 L1848.2,554.8 L1851.8,570.6 L1855.4,570.6 L1859.1,554.1 L1862.7,554.1 L1866.3,573.7 L1870.0,573.7 L1873.6,563.3 L1877.2,563.3 L1880.8,581.0 L1884.5,581.0 L1888.1,567.6 L1891.7,567.6 L1895.4,632.2 L1899.0,632.2 L1902.6,567.6 L1906.2,567.6 L1909.9,573.7 L1913.5,573.7 L1917.1,632.2 L1920.8,632.2 L1924.4,555.4 L1928.0,555.4 L1931.6,586.5 L1935.3,586.5 L1938.9,556.6 L1942.5,556.6 L1946.1,581.6 L1949.8,581.6 L1953.4,632.2 L1957.0,632.2 L1960.7,571.2 L1964.3,571.2 L1967.9,552.9 L1971.5,552.9 L1975.2,563.9 L1978.8,563.9 L1982.4,556.0 L1986.1,556.0 L1989.7,564.5 L1993.3,564.5 L1996.9,571.2 L2000.6,571.2 L2004.2,557.2 L2007.8,557.2 L2011.4,632.2 L2015.1,632.2 L2018.7,578.5 L2022.3,578.5 L2026.0,562.1 L2029.6,562.1 L2033.2,632.2 L2036.8,632.2 L2040.5,556.6 L2044.1,556.6 L2047.7,594.4 L2051.4,594.4 L2055.0,567.0 L2058.6,567.0 L2062.2,549.9 L2065.9,549.9 L2069.5,549.9 L2073.1,549.9 L2076.8,570.0 L2080.4,570.0 L2084.0,560.9 L2087.6,560.9 L2091.3,632.2 L2094.9,632.2 L2098.5,555.4 L2102.1,555.4 L2105.8,584.6 L2109.4,584.6 L2113.0,551.1 L2116.7,551.1 L2120.3,559.0 L2123.9,559.0 L2127.5,552.9 L2131.2,552.9 L2134.8,588.9 L2138.4,588.9 L2142.1,559.0 L2145.7,559.0 L2149.3,632.2 L2152.9,632.2 L2156.6,559.0 L2160.2,559.0 L2163.8,604.8 L2167.4,604.8 L2171.1,632.2 L2174.7,632.2 L2174.7,632 L1304.0,632 Z" fill="#EAB839" fill-opacity="0.1" stroke="none"/>
<path d="M1304.0,563.9 L1307.6,575.5 L1311.3,575.5 L1314.9,565.1 L1318.5,565.1 L1322.1,581.0 L1325.8,581.0 L1329.4,485.9 L1333.0,485.9 L1336.7,557.2 L1340.3,557.2 L1343.9,553.5 L1347.5,553.5 L1351.2,560.2 L1354.8,560.2 L1358.4,550.5 L1362.1,550.5 L1365.7,549.9 L1369.3,549.9 L1372.9,565.7 L1376.6,565.7 L1380.2,550.5 L1383.8,550.5 L1387.4,474.9 L1391.1,474.9 L1394.7,586.5 L1398.3,586.5 L1402.0,556.0 L1405.6,556.0 L1409.2,632.2 L1412.8,632.2 L1416.5,549.3 L1420.1,549.3 L1423.7,549.9 L1427.4,549.9 L1431.0,571.2 L1434.6,571.2 L1438.2,571.8 L1441.9,571.8 L1445.5,572.4 L1449.1,572.4 L1452.7,587.1 L1456.4,587.1 L1460.0,567.6 L1463.6,567.6 L1467.3,632.2 L1470.9,632.2 L1474.5,567.0 L1478.1,567.0 L1481.8,560.9 L1485.4,560.9 L1489.0,551.7 L1492.7,551.7 L1496.3,591.3 L1499.9,591.3 L1503.5,549.9 L1507.2,549.9 L1510.8,577.9 L1514.4,577.9 L1518.1,556.6 L1521.7,556.6 L1525.3,632.2 L1528.9,632.2 L1532.6,570.6 L1536.2,570.6 L1539.8,553.5 L1543.4,553.5 L1547.1,552.3 L1550.7,552.3 L1554.3,564.5 L1558.0,564.5 L1561.6,538.9 L1565.2,538.9 L1568.8,560.2 L1572.5,560.2 L1576.1,563.9 L1579.7,563.9 L1583.4,632.2 L1587.0,632.2 L1590.6,572.4 L1594.2,572.4 L1597.9,549.9 L1601.5,549.9 L1605.1,632.2 L1608.7,632.2 L1612.4,573.7 L1616.0,573.7 L1619.6,563.3 L1623.3,563.3 L1626.9,558.4 L1630.5,558.4 L1634.1,546.8 L1637.8,546.8 L1641.4,552.9 L1645.0,552.9 L1648.7,557.8 L1652.3,557.8 L1655.9,584.6 L1659.5,584.6 L1663.2,632.2 L1666.8,632.2 L1670.4,560.9 L1674.1,560.9 L1677.7,550.5 L1681.3,550.5 L1684.9,586.5 L1688.6,586.5 L1692.2,570.0 L1695.8,570.0 L1699.4,548.0 L1703.1,548.0 L1706.7,567.6 L1710.3,567.6 L1714.0,571.2 L1717.6,571.2 L1721.2,632.2 L1724.8,632.2 L1728.5,565.1 L1732.1,565.1 L1735.7,556.6 L1739.4,556.6 L1743.0,556.0 L1746.6,556.0 L1750.2,584.6 L1753.9,584.6 L1757.5,504.1 L1761.1,504.1 L1764.8,552.9 L1768.4,552.9 L1772.0,565.7 L1775.6,565.7 L1779.3,545.0 L1782.9,545.0 L1786.5,600.5 L1790.1,600.5 L1793.8,567.6 L1797.4,567.6 L1801.0,561.5 L1804.7,561.5 L1808.3,577.3 L1811.9,577.3 L1815.5,563.3 L1819.2,563.3 L1822.8,567.6 L1826.4,567.6 L1830.1,609.0 L1833.7,609.0 L1837.3,632.2 L1840.9,632.2 L1844.6,554.8 L1848.2,554.8 L1851.8,570.6 L1855.4,570.6 L1859.1,554.1 L1862.7,554.1 L1866.3,573.7 L1870.0,573.7 L1873.6,563.3 L1877.2,563.3 L1880.8,581.0 L1884.5,581.0 L1888.1,567.6 L1891.7,567.6 L1895.4,632.2 L1899.0,632.2 L1902.6,567.6 L1906.2,567.6 L1909.9,573.7 L1913.5,573.7 L1917.1,632.2 L1920.8,632.2 L1924.4,555.4 L1928.0,555.4 L1931.6,586.5 L1935.3,586.5 L1938.9,556.6 L1942.5,556.6 L1946.1,581.6 L1949.8,581.6 L1953.4,632.2 L1957.0,632.2 L1960.7,571.2 L1964.3,571.2 L1967.9,552.9 L1971.5,552.9 L1975.2,563.9 L1978.8,563.9 L1982.4,556.0 L1986.1,556.0 L1989.7,564.5 L1993.3,564.5 L1996.9,571.2 L2000.6,571.2 L2004.2,557.2 L2007.8,557.2 L2011.4,632.2 L2015.1,632.2 L2018.7,578.5 L2022.3,578.5 L2026.0,562.1 L2029.6,562.1 L2033.2,632.2 L2036.8,632.2 L2040.5,556.6 L2044.1,556.6 L2047.7,594.4 L2051.4,594.4 L2055.0,567.0 L2058.6,567.0 L2062.2,549.9 L2065.9,549.9 L2069.5,549.9 L2073.1,549.9 L2076.8,570.0 L2080.4,570.0 L2084.0,560.9 L2087.6,560.9 L2091.3,632.2 L2094.9,632.2 L2098.5,555.4 L2102.1,555.4 L2105.8,584.6 L2109.4,584.6 L2113.0,551.1 L2116.7,551.1 L2120.3,559.0 L2123.9,559.0 L2127.5,552.9 L2131.2,552.9 L2134.8,588.9 L2138.4,588.9 L2142.1,559.0 L2145.7,559.0 L2149.3,632.2 L2152.9,632.2 L2156.6,559.0 L2160.2,559.0 L2163.8,604.8 L2167.4,604.8 L2171.1,632.2 L2174.7,632.2" fill="none" stroke="#e2ba53" stroke-width="2" stroke-linejoin="round"/>
<path d="M1304.0,554.1 L1307.6,557.2 L1311.3,557.2 L1314.9,552.9 L1318.5,552.9 L1322.1,559.6 L1325.8,559.6 L1329.4,485.9 L1333.0,485.9 L1336.7,553.5 L1340.3,553.5 L1343.9,549.3 L1347.5,549.3 L1351.2,550.5 L1354.8,550.5 L1358.4,548.7 L1362.1,548.7 L1365.7,548.7 L1369.3,548.7 L1372.9,560.9 L1376.6,560.9 L1380.2,548.0 L1383.8,548.0 L1387.4,474.9 L1391.1,474.9 L1394.7,555.4 L1398.3,555.4 L1402.0,548.0 L1405.6,548.0 L1409.2,632.2 L1412.8,632.2 L1416.5,546.2 L1420.1,546.2 L1423.7,548.0 L1427.4,548.0 L1431.0,549.9 L1434.6,549.9 L1438.2,556.6 L1441.9,556.6 L1445.5,540.1 L1449.1,540.1 L1452.7,560.2 L1456.4,560.2 L1460.0,560.9 L1463.6,560.9 L1467.3,632.2 L1470.9,632.2 L1474.5,552.3 L1478.1,552.3 L1481.8,543.2 L1485.4,543.2 L1489.0,551.7 L1492.7,551.7 L1496.3,567.6 L1499.9,567.6 L1503.5,539.5 L1507.2,539.5 L1510.8,554.1 L1514.4,554.1 L1518.1,550.5 L1521.7,550.5 L1525.3,632.2 L1528.9,632.2 L1532.6,549.3 L1536.2,549.3 L1539.8,545.6 L1543.4,545.6 L1547.1,549.9 L1550.7,549.9 L1554.3,560.9 L1558.0,560.9 L1561.6,495.0 L1565.2,495.0 L1568.8,556.6 L1572.5,556.6 L1576.1,549.9 L1579.7,549.9 L1583.4,632.2 L1587.0,632.2 L1590.6,556.0 L1594.2,556.0 L1597.9,546.2 L1601.5,546.2 L1605.1,632.2 L1608.7,632.2 L1612.4,551.1 L1616.0,551.1 L1619.6,550.5 L1623.3,550.5 L1626.9,554.8 L1630.5,554.8 L1634.1,543.8 L1637.8,543.8 L1641.4,549.3 L1645.0,549.3 L1648.7,550.5 L1652.3,550.5 L1655.9,568.2 L1659.5,568.2 L1663.2,632.2 L1666.8,632.2 L1670.4,551.1 L1674.1,551.1 L1677.7,549.9 L1681.3,549.9 L1684.9,554.1 L1688.6,554.1 L1692.2,549.9 L1695.8,549.9 L1699.4,548.0 L1703.1,548.0 L1706.7,549.3 L1710.3,549.3 L1714.0,554.1 L1717.6,554.1 L1721.2,632.2 L1724.8,632.2 L1728.5,552.3 L1732.1,552.3 L1735.7,549.9 L1739.4,549.9 L1743.0,550.5 L1746.6,550.5 L1750.2,574.3 L1753.9,574.3 L1757.5,504.1 L1761.1,504.1 L1764.8,549.3 L1768.4,549.3 L1772.0,551.1 L1775.6,551.1 L1779.3,472.4 L1782.9,472.4 L1786.5,555.4 L1790.1,555.4 L1793.8,550.5 L1797.4,550.5 L1801.0,473.0 L1804.7,473.0 L1808.3,568.8 L1811.9,568.8 L1815.5,556.6 L1819.2,556.6 L1822.8,556.6 L1826.4,556.6 L1830.1,554.8 L1833.7,554.8 L1837.3,632.2 L1840.9,632.2 L1844.6,546.2 L1848.2,546.2 L1851.8,559.0 L1855.4,559.0 L1859.1,554.1 L1862.7,554.1 L1866.3,553.5 L1870.0,553.5 L1873.6,552.3 L1877.2,552.3 L1880.8,549.3 L1884.5,549.3 L1888.1,549.3 L1891.7,549.3 L1895.4,632.2 L1899.0,632.2 L1902.6,552.9 L1906.2,552.9 L1909.9,559.0 L1913.5,559.0 L1917.1,632.2 L1920.8,632.2 L1924.4,550.5 L1928.0,550.5 L1931.6,548.0 L1935.3,548.0 L1938.9,553.5 L1942.5,553.5 L1946.1,554.1 L1949.8,554.1 L1953.4,632.2 L1957.0,632.2 L1960.7,556.0 L1964.3,556.0 L1967.9,549.9 L1971.5,549.9 L1975.2,550.5 L1978.8,550.5 L1982.4,551.1 L1986.1,551.1 L1989.7,554.1 L1993.3,554.1 L1996.9,553.5 L2000.6,553.5 L2004.2,551.1 L2007.8,551.1 L2011.4,632.2 L2015.1,632.2 L2018.7,552.9 L2022.3,552.9 L2026.0,548.7 L2029.6,548.7 L2033.2,632.2 L2036.8,632.2 L2040.5,549.3 L2044.1,549.3 L2047.7,552.3 L2051.4,552.3 L2055.0,559.6 L2058.6,559.6 L2062.2,547.4 L2065.9,547.4 L2069.5,547.4 L2073.1,547.4 L2076.8,551.7 L2080.4,551.7 L2084.0,549.3 L2087.6,549.3 L2091.3,632.2 L2094.9,632.2 L2098.5,551.7 L2102.1,551.7 L2105.8,556.0 L2109.4,556.0 L2113.0,546.2 L2116.7,546.2 L2120.3,548.0 L2123.9,548.0 L2127.5,551.1 L2131.2,551.1 L2134.8,549.3 L2138.4,549.3 L2142.1,549.9 L2145.7,549.9 L2149.3,632.2 L2152.9,632.2 L2156.6,550.5 L2160.2,550.5 L2163.8,567.0 L2167.4,567.0 L2171.1,632.2 L2174.7,632.2 L2174.7,632 L1304.0,632 Z" fill="#6ED0E0" fill-opacity="0.1" stroke="none"/>
<path d="M1304.0,554.1 L1307.6,557.2 L1311.3,557.2 L1314.9,552.9 L1318.5,552.9 L1322.1,559.6 L1325.8,559.6 L1329.4,485.9 L1333.0,485.9 L1336.7,553.5 L1340.3,553.5 L1343.9,549.3 L1347.5,549.3 L1351.2,550.5 L1354.8,550.5 L1358.4,548.7 L1362.1,548.7 L1365.7,548.7 L1369.3,548.7 L1372.9,560.9 L1376.6,560.9 L1380.2,548.0 L1383.8,548.0 L1387.4,474.9 L1391.1,474.9 L1394.7,555.4 L1398.3,555.4 L1402.0,548.0 L1405.6,548.0 L1409.2,632.2 L1412.8,632.2 L1416.5,546.2 L1420.1,546.2 L1423.7,548.0 L1427.4,548.0 L1431.0,549.9 L1434.6,549.9 L1438.2,556.6 L1441.9,556.6 L1445.5,540.1 L1449.1,540.1 L1452.7,560.2 L1456.4,560.2 L1460.0,560.9 L1463.6,560.9 L1467.3,632.2 L1470.9,632.2 L1474.5,552.3 L1478.1,552.3 L1481.8,543.2 L1485.4,543.2 L1489.0,551.7 L1492.7,551.7 L1496.3,567.6 L1499.9,567.6 L1503.5,539.5 L1507.2,539.5 L1510.8,554.1 L1514.4,554.1 L1518.1,550.5 L1521.7,550.5 L1525.3,632.2 L1528.9,632.2 L1532.6,549.3 L1536.2,549.3 L1539.8,545.6 L1543.4,545.6 L1547.1,549.9 L1550.7,549.9 L1554.3,560.9 L1558.0,560.9 L1561.6,495.0 L1565.2,495.0 L1568.8,556.6 L1572.5,556.6 L1576.1,549.9 L1579.7,549.9 L1583.4,632.2 L1587.0,632.2 L1590.6,556.0 L1594.2,556.0 L1597.9,546.2 L1601.5,546.2 L1605.1,632.2 L1608.7,632.2 L1612.4,551.1 L1616.0,551.1 L1619.6,550.5 L1623.3,550.5 L1626.9,554.8 L1630.5,554.8 L1634.1,543.8 L1637.8,543.8 L1641.4,549.3 L1645.0,549.3 L1648.7,550.5 L1652.3,550.5 L1655.9,568.2 L1659.5,568.2 L1663.2,632.2 L1666.8,632.2 L1670.4,551.1 L1674.1,551.1 L1677.7,549.9 L1681.3,549.9 L1684.9,554.1 L1688.6,554.1 L1692.2,549.9 L1695.8,549.9 L1699.4,548.0 L1703.1,548.0 L1706.7,549.3 L1710.3,549.3 L1714.0,554.1 L1717.6,554.1 L1721.2,632.2 L1724.8,632.2 L1728.5,552.3 L1732.1,552.3 L1735.7,549.9 L1739.4,549.9 L1743.0,550.5 L1746.6,550.5 L1750.2,574.3 L1753.9,574.3 L1757.5,504.1 L1761.1,504.1 L1764.8,549.3 L1768.4,549.3 L1772.0,551.1 L1775.6,551.1 L1779.3,472.4 L1782.9,472.4 L1786.5,555.4 L1790.1,555.4 L1793.8,550.5 L1797.4,550.5 L1801.0,473.0 L1804.7,473.0 L1808.3,568.8 L1811.9,568.8 L1815.5,556.6 L1819.2,556.6 L1822.8,556.6 L1826.4,556.6 L1830.1,554.8 L1833.7,554.8 L1837.3,632.2 L1840.9,632.2 L1844.6,546.2 L1848.2,546.2 L1851.8,559.0 L1855.4,559.0 L1859.1,554.1 L1862.7,554.1 L1866.3,553.5 L1870.0,553.5 L1873.6,552.3 L1877.2,552.3 L1880.8,549.3 L1884.5,549.3 L1888.1,549.3 L1891.7,549.3 L1895.4,632.2 L1899.0,632.2 L1902.6,552.9 L1906.2,552.9 L1909.9,559.0 L1913.5,559.0 L1917.1,632.2 L1920.8,632.2 L1924.4,550.5 L1928.0,550.5 L1931.6,548.0 L1935.3,548.0 L1938.9,553.5 L1942.5,553.5 L1946.1,554.1 L1949.8,554.1 L1953.4,632.2 L1957.0,632.2 L1960.7,556.0 L1964.3,556.0 L1967.9,549.9 L1971.5,549.9 L1975.2,550.5 L1978.8,550.5 L1982.4,551.1 L1986.1,551.1 L1989.7,554.1 L1993.3,554.1 L1996.9,553.5 L2000.6,553.5 L2004.2,551.1 L2007.8,551.1 L2011.4,632.2 L2015.1,632.2 L2018.7,552.9 L2022.3,552.9 L2026.0,548.7 L2029.6,548.7 L2033.2,632.2 L2036.8,632.2 L2040.5,549.3 L2044.1,549.3 L2047.7,552.3 L2051.4,552.3 L2055.0,559.6 L2058.6,559.6 L2062.2,547.4 L2065.9,547.4 L2069.5,547.4 L2073.1,547.4 L2076.8,551.7 L2080.4,551.7 L2084.0,549.3 L2087.6,549.3 L2091.3,632.2 L2094.9,632.2 L2098.5,551.7 L2102.1,551.7 L2105.8,556.0 L2109.4,556.0 L2113.0,546.2 L2116.7,546.2 L2120.3,548.0 L2123.9,548.0 L2127.5,551.1 L2131.2,551.1 L2134.8,549.3 L2138.4,549.3 L2142.1,549.9 L2145.7,549.9 L2149.3,632.2 L2152.9,632.2 L2156.6,550.5 L2160.2,550.5 L2163.8,567.0 L2167.4,567.0 L2171.1,632.2 L2174.7,632.2" fill="none" stroke="#86cede" stroke-width="2" stroke-linejoin="round"/>
<path d="M1304.0,543.8 L1307.6,549.3 L1311.3,549.3 L1314.9,551.7 L1318.5,551.7 L1322.1,555.4 L1325.8,555.4 L1329.4,485.9 L1333.0,485.9 L1336.7,550.5 L1340.3,550.5 L1343.9,537.1 L1347.5,537.1 L1351.2,548.0 L1354.8,548.0 L1358.4,546.2 L1362.1,546.2 L1365.7,346.0 L1369.3,346.0 L1372.9,549.9 L1376.6,549.9 L1380.2,545.6 L1383.8,545.6 L1387.4,474.9 L1391.1,474.9 L1394.7,549.3 L1398.3,549.3 L1402.0,545.0 L1405.6,545.0 L1409.2,632.2 L1412.8,632.2 L1416.5,512.7 L1420.1,512.7 L1423.7,421.2 L1427.4,421.2 L1431.0,549.3 L1434.6,549.3 L1438.2,543.2 L1441.9,543.2 L1445.5,433.4 L1449.1,433.4 L1452.7,549.3 L1456.4,549.3 L1460.0,554.1 L1463.6,554.1 L1467.3,632.2 L1470.9,632.2 L1474.5,549.9 L1478.1,549.9 L1481.8,524.9 L1485.4,524.9 L1489.0,551.7 L1492.7,551.7 L1496.3,547.4 L1499.9,547.4 L1503.5,433.4 L1507.2,433.4 L1510.8,551.1 L1514.4,551.1 L1518.1,549.3 L1521.7,549.3 L1525.3,632.2 L1528.9,632.2 L1532.6,546.8 L1536.2,546.8 L1539.8,481.0 L1543.4,481.0 L1547.1,546.8 L1550.7,546.8 L1554.3,557.2 L1558.0,557.2 L1561.6,409.0 L1565.2,409.0 L1568.8,549.3 L1572.5,549.3 L1576.1,546.2 L1579.7,546.2 L1583.4,632.2 L1587.0,632.2 L1590.6,548.0 L1594.2,548.0 L1597.9,543.8 L1601.5,543.8 L1605.1,632.2 L1608.7,632.2 L1612.4,546.2 L1616.0,546.2 L1619.6,525.5 L1623.3,525.5 L1626.9,451.7 L1630.5,451.7 L1634.1,529.8 L1637.8,529.8 L1641.4,547.4 L1645.0,547.4 L1648.7,531.6 L1652.3,531.6 L1655.9,545.6 L1659.5,545.6 L1663.2,632.2 L1666.8,632.2 L1670.4,549.3 L1674.1,549.3 L1677.7,445.6 L1681.3,445.6 L1684.9,549.9 L1688.6,549.9 L1692.2,546.2 L1695.8,546.2 L1699.4,548.0 L1703.1,548.0 L1706.7,542.0 L1710.3,542.0 L1714.0,549.9 L1717.6,549.9 L1721.2,632.2 L1724.8,632.2 L1728.5,546.2 L1732.1,546.2 L1735.7,542.0 L1739.4,542.0 L1743.0,533.4 L1746.6,533.4 L1750.2,546.2 L1753.9,546.2 L1757.5,504.1 L1761.1,504.1 L1764.8,535.2 L1768.4,535.2 L1772.0,549.3 L1775.6,549.3 L1779.3,472.4 L1782.9,472.4 L1786.5,549.9 L1790.1,549.9 L1793.8,481.6 L1797.4,481.6 L1801.0,472.4 L1804.7,472.4 L1808.3,551.1 L1811.9,551.1 L1815.5,474.9 L1819.2,474.9 L1822.8,555.4 L1826.4,555.4 L1830.1,549.9 L1833.7,549.9 L1837.3,632.2 L1840.9,632.2 L1844.6,543.8 L1848.2,543.8 L1851.8,554.8 L1855.4,554.8 L1859.1,554.1 L1862.7,554.1 L1866.3,550.5 L1870.0,550.5 L1873.6,439.5 L1877.2,439.5 L1880.8,529.1 L1884.5,529.1 L1888.1,547.4 L1891.7,547.4 L1895.4,632.2 L1899.0,632.2 L1902.6,548.7 L1906.2,548.7 L1909.9,547.4 L1913.5,547.4 L1917.1,632.2 L1920.8,632.2 L1924.4,539.5 L1928.0,539.5 L1931.6,487.7 L1935.3,487.7 L1938.9,551.7 L1942.5,551.7 L1946.1,547.4 L1949.8,547.4 L1953.4,632.2 L1957.0,632.2 L1960.7,547.4 L1964.3,547.4 L1967.9,547.4 L1971.5,547.4 L1975.2,545.6 L1978.8,545.6 L1982.4,547.4 L1986.1,547.4 L1989.7,496.2 L1993.3,496.2 L1996.9,549.9 L2000.6,549.9 L2004.2,499.3 L2007.8,499.3 L2011.4,632.2 L2015.1,632.2 L2018.7,550.5 L2022.3,550.5 L2026.0,546.2 L2029.6,546.2 L2033.2,632.2 L2036.8,632.2 L2040.5,535.9 L2044.1,535.9 L2047.7,481.0 L2051.4,481.0 L2055.0,555.4 L2058.6,555.4 L2062.2,521.2 L2065.9,521.2 L2069.5,535.9 L2073.1,535.9 L2076.8,549.3 L2080.4,549.3 L2084.0,546.8 L2087.6,546.8 L2091.3,632.2 L2094.9,632.2 L2098.5,530.4 L2102.1,530.4 L2105.8,482.2 L2109.4,482.2 L2113.0,540.1 L2116.7,540.1 L2120.3,545.6 L2123.9,545.6 L2127.5,550.5 L2131.2,550.5 L2134.8,539.5 L2138.4,539.5 L2142.1,546.8 L2145.7,546.8 L2149.3,632.2 L2152.9,632.2 L2156.6,548.7 L2160.2,548.7 L2163.8,549.3 L2167.4,549.3 L2171.1,632.2 L2174.7,632.2 L2174.7,632 L1304.0,632 Z" fill="#EF843C" fill-opacity="0.1" stroke="none"/>
<path d="M1304.0,543.8 L1307.6,549.3 L1311.3,549.3 L1314.9,551.7 L1318.5,551.7 L1322.1,555.4 L1325.8,555.4 L1329.4,485.9 L1333.0,485.9 L1336.7,550.5 L1340.3,550.5 L1343.9,537.1 L1347.5,537.1 L1351.2,548.0 L1354.8,548.0 L1358.4,546.2 L1362.1,546.2 L1365.7,346.0 L1369.3,346.0 L1372.9,549.9 L1376.6,549.9 L1380.2,545.6 L1383.8,545.6 L1387.4,474.9 L1391.1,474.9 L1394.7,549.3 L1398.3,549.3 L1402.0,545.0 L1405.6,545.0 L1409.2,632.2 L1412.8,632.2 L1416.5,512.7 L1420.1,512.7 L1423.7,421.2 L1427.4,421.2 L1431.0,549.3 L1434.6,549.3 L1438.2,543.2 L1441.9,543.2 L1445.5,433.4 L1449.1,433.4 L1452.7,549.3 L1456.4,549.3 L1460.0,554.1 L1463.6,554.1 L1467.3,632.2 L1470.9,632.2 L1474.5,549.9 L1478.1,549.9 L1481.8,524.9 L1485.4,524.9 L1489.0,551.7 L1492.7,551.7 L1496.3,547.4 L1499.9,547.4 L1503.5,433.4 L1507.2,433.4 L1510.8,551.1 L1514.4,551.1 L1518.1,549.3 L1521.7,549.3 L1525.3,632.2 L1528.9,632.2 L1532.6,546.8 L1536.2,546.8 L1539.8,481.0 L1543.4,481.0 L1547.1,546.8 L1550.7,546.8 L1554.3,557.2 L1558.0,557.2 L1561.6,409.0 L1565.2,409.0 L1568.8,549.3 L1572.5,549.3 L1576.1,546.2 L1579.7,546.2 L1583.4,632.2 L1587.0,632.2 L1590.6,548.0 L1594.2,548.0 L1597.9,543.8 L1601.5,543.8 L1605.1,632.2 L1608.7,632.2 L1612.4,546.2 L1616.0,546.2 L1619.6,525.5 L1623.3,525.5 L1626.9,451.7 L1630.5,451.7 L1634.1,529.8 L1637.8,529.8 L1641.4,547.4 L1645.0,547.4 L1648.7,531.6 L1652.3,531.6 L1655.9,545.6 L1659.5,545.6 L1663.2,632.2 L1666.8,632.2 L1670.4,549.3 L1674.1,549.3 L1677.7,445.6 L1681.3,445.6 L1684.9,549.9 L1688.6,549.9 L1692.2,546.2 L1695.8,546.2 L1699.4,548.0 L1703.1,548.0 L1706.7,542.0 L1710.3,542.0 L1714.0,549.9 L1717.6,549.9 L1721.2,632.2 L1724.8,632.2 L1728.5,546.2 L1732.1,546.2 L1735.7,542.0 L1739.4,542.0 L1743.0,533.4 L1746.6,533.4 L1750.2,546.2 L1753.9,546.2 L1757.5,504.1 L1761.1,504.1 L1764.8,535.2 L1768.4,535.2 L1772.0,549.3 L1775.6,549.3 L1779.3,472.4 L1782.9,472.4 L1786.5,549.9 L1790.1,549.9 L1793.8,481.6 L1797.4,481.6 L1801.0,472.4 L1804.7,472.4 L1808.3,551.1 L1811.9,551.1 L1815.5,474.9 L1819.2,474.9 L1822.8,555.4 L1826.4,555.4 L1830.1,549.9 L1833.7,549.9 L1837.3,632.2 L1840.9,632.2 L1844.6,543.8 L1848.2,543.8 L1851.8,554.8 L1855.4,554.8 L1859.1,554.1 L1862.7,554.1 L1866.3,550.5 L1870.0,550.5 L1873.6,439.5 L1877.2,439.5 L1880.8,529.1 L1884.5,529.1 L1888.1,547.4 L1891.7,547.4 L1895.4,632.2 L1899.0,632.2 L1902.6,548.7 L1906.2,548.7 L1909.9,547.4 L1913.5,547.4 L1917.1,632.2 L1920.8,632.2 L1924.4,539.5 L1928.0,539.5 L1931.6,487.7 L1935.3,487.7 L1938.9,551.7 L1942.5,551.7 L1946.1,547.4 L1949.8,547.4 L1953.4,632.2 L1957.0,632.2 L1960.7,547.4 L1964.3,547.4 L1967.9,547.4 L1971.5,547.4 L1975.2,545.6 L1978.8,545.6 L1982.4,547.4 L1986.1,547.4 L1989.7,496.2 L1993.3,496.2 L1996.9,549.9 L2000.6,549.9 L2004.2,499.3 L2007.8,499.3 L2011.4,632.2 L2015.1,632.2 L2018.7,550.5 L2022.3,550.5 L2026.0,546.2 L2029.6,546.2 L2033.2,632.2 L2036.8,632.2 L2040.5,535.9 L2044.1,535.9 L2047.7,481.0 L2051.4,481.0 L2055.0,555.4 L2058.6,555.4 L2062.2,521.2 L2065.9,521.2 L2069.5,535.9 L2073.1,535.9 L2076.8,549.3 L2080.4,549.3 L2084.0,546.8 L2087.6,546.8 L2091.3,632.2 L2094.9,632.2 L2098.5,530.4 L2102.1,530.4 L2105.8,482.2 L2109.4,482.2 L2113.0,540.1 L2116.7,540.1 L2120.3,545.6 L2123.9,545.6 L2127.5,550.5 L2131.2,550.5 L2134.8,539.5 L2138.4,539.5 L2142.1,546.8 L2145.7,546.8 L2149.3,632.2 L2152.9,632.2 L2156.6,548.7 L2160.2,548.7 L2163.8,549.3 L2167.4,549.3 L2171.1,632.2 L2174.7,632.2" fill="none" stroke="#e1894c" stroke-width="2" stroke-linejoin="round"/>
<path d="M1304.0,512.1 L1307.6,546.8 L1311.3,546.8 L1314.9,550.5 L1318.5,550.5 L1322.1,554.1 L1325.8,554.1 L1329.4,485.9 L1333.0,485.9 L1336.7,550.5 L1340.3,550.5 L1343.9,477.9 L1347.5,477.9 L1351.2,350.1 L1354.8,350.1 L1358.4,546.2 L1362.1,546.2 L1365.7,346.0 L1369.3,346.0 L1372.9,549.9 L1376.6,549.9 L1380.2,539.5 L1383.8,539.5 L1387.4,474.9 L1391.1,474.9 L1394.7,549.3 L1398.3,549.3 L1402.0,529.8 L1405.6,529.8 L1409.2,632.2 L1412.8,632.2 L1416.5,467.8 L1420.1,467.8 L1423.7,352.8 L1427.4,352.8 L1431.0,549.3 L1434.6,549.3 L1438.2,435.9 L1441.9,435.9 L1445.5,382.0 L1449.1,382.0 L1452.7,535.9 L1456.4,535.9 L1460.0,529.1 L1463.6,529.1 L1467.3,632.2 L1470.9,632.2 L1474.5,467.0 L1478.1,467.0 L1481.8,474.3 L1485.4,474.3 L1489.0,551.7 L1492.7,551.7 L1496.3,502.9 L1499.9,502.9 L1503.5,396.8 L1507.2,396.8 L1510.8,551.1 L1514.4,551.1 L1518.1,529.1 L1521.7,529.1 L1525.3,632.2 L1528.9,632.2 L1532.6,470.0 L1536.2,470.0 L1539.8,479.1 L1543.4,479.1 L1547.1,544.4 L1550.7,544.4 L1554.3,477.3 L1558.0,477.3 L1561.6,365.1 L1565.2,365.1 L1568.8,549.3 L1572.5,549.3 L1576.1,531.0 L1579.7,531.0 L1583.4,632.2 L1587.0,632.2 L1590.6,501.7 L1594.2,501.7 L1597.9,470.6 L1601.5,470.6 L1605.1,632.2 L1608.7,632.2 L1612.4,434.6 L1616.0,434.6 L1619.6,524.3 L1623.3,524.3 L1626.9,424.2 L1630.5,424.2 L1634.1,525.5 L1637.8,525.5 L1641.4,430.2 L1645.0,430.2 L1648.7,502.3 L1652.3,502.3 L1655.9,545.0 L1659.5,545.0 L1663.2,632.2 L1666.8,632.2 L1670.4,462.4 L1674.1,462.4 L1677.7,419.0 L1681.3,419.0 L1684.9,547.4 L1688.6,547.4 L1692.2,352.8 L1695.8,352.8 L1699.4,548.0 L1703.1,548.0 L1706.7,363.4 L1710.3,363.4 L1714.0,548.0 L1717.6,548.0 L1721.2,632.2 L1724.8,632.2 L1728.5,482.8 L1732.1,482.8 L1735.7,512.7 L1739.4,512.7 L1743.0,532.8 L1746.6,532.8 L1750.2,488.3 L1753.9,488.3 L1757.5,504.1 L1761.1,504.1 L1764.8,354.1 L1768.4,354.1 L1772.0,549.3 L1775.6,549.3 L1779.3,472.4 L1782.9,472.4 L1786.5,547.4 L1790.1,547.4 L1793.8,467.0 L1797.4,467.0 L1801.0,471.8 L1804.7,471.8 L1808.3,530.4 L1811.9,530.4 L1815.5,474.9 L1819.2,474.9 L1822.8,555.4 L1826.4,555.4 L1830.1,549.3 L1833.7,549.3 L1837.3,632.2 L1840.9,632.2 L1844.6,330.2 L1848.2,330.2 L1851.8,547.4 L1855.4,547.4 L1859.1,554.1 L1862.7,554.1 L1866.3,466.5 L1870.0,466.5 L1873.6,426.9 L1877.2,426.9 L1880.8,499.9 L1884.5,499.9 L1888.1,437.8 L1891.7,437.8 L1895.4,632.2 L1899.0,632.2 L1902.6,546.2 L1906.2,546.2 L1909.9,475.5 L1913.5,475.5 L1917.1,632.2 L1920.8,632.2 L1924.4,528.5 L1928.0,528.5 L1931.6,487.7 L1935.3,487.7 L1938.9,551.7 L1942.5,551.7 L1946.1,408.4 L1949.8,408.4 L1953.4,632.2 L1957.0,632.2 L1960.7,381.1 L1964.3,381.1 L1967.9,530.4 L1971.5,530.4 L1975.2,424.2 L1978.8,424.2 L1982.4,539.5 L1986.1,539.5 L1989.7,496.2 L1993.3,496.2 L1996.9,549.9 L2000.6,549.9 L2004.2,398.3 L2007.8,398.3 L2011.4,632.2 L2015.1,632.2 L2018.7,365.1 L2022.3,365.1 L2026.0,543.8 L2029.6,543.8 L2033.2,632.2 L2036.8,632.2 L2040.5,481.6 L2044.1,481.6 L2047.7,477.9 L2051.4,477.9 L2055.0,555.4 L2058.6,555.4 L2062.2,376.5 L2065.9,376.5 L2069.5,510.9 L2073.1,510.9 L2076.8,519.4 L2080.4,519.4 L2084.0,465.1 L2087.6,465.1 L2091.3,632.2 L2094.9,632.2 L2098.5,482.8 L2102.1,482.8 L2105.8,479.8 L2109.4,479.8 L2113.0,540.1 L2116.7,540.1 L2120.3,540.1 L2123.9,540.1 L2127.5,550.5 L2131.2,550.5 L2134.8,537.1 L2138.4,537.1 L2142.1,468.4 L2145.7,468.4 L2149.3,632.2 L2152.9,632.2 L2156.6,472.4 L2160.2,472.4 L2163.8,546.2 L2167.4,546.2 L2171.1,632.2 L2174.7,632.2 L2174.7,632 L1304.0,632 Z" fill="#E24D42" fill-opacity="0.1" stroke="none"/>
<path d="M1304.0,512.1 L1307.6,546.8 L1311.3,546.8 L1314.9,550.5 L1318.5,550.5 L1322.1,554.1 L1325.8,554.1 L1329.4,485.9 L1333.0,485.9 L1336.7,550.5 L1340.3,550.5 L1343.9,477.9 L1347.5,477.9 L1351.2,350.1 L1354.8,350.1 L1358.4,546.2 L1362.1,546.2 L1365.7,346.0 L1369.3,346.0 L1372.9,549.9 L1376.6,549.9 L1380.2,539.5 L1383.8,539.5 L1387.4,474.9 L1391.1,474.9 L1394.7,549.3 L1398.3,549.3 L1402.0,529.8 L1405.6,529.8 L1409.2,632.2 L1412.8,632.2 L1416.5,467.8 L1420.1,467.8 L1423.7,352.8 L1427.4,352.8 L1431.0,549.3 L1434.6,549.3 L1438.2,435.9 L1441.9,435.9 L1445.5,382.0 L1449.1,382.0 L1452.7,535.9 L1456.4,535.9 L1460.0,529.1 L1463.6,529.1 L1467.3,632.2 L1470.9,632.2 L1474.5,467.0 L1478.1,467.0 L1481.8,474.3 L1485.4,474.3 L1489.0,551.7 L1492.7,551.7 L1496.3,502.9 L1499.9,502.9 L1503.5,396.8 L1507.2,396.8 L1510.8,551.1 L1514.4,551.1 L1518.1,529.1 L1521.7,529.1 L1525.3,632.2 L1528.9,632.2 L1532.6,470.0 L1536.2,470.0 L1539.8,479.1 L1543.4,479.1 L1547.1,544.4 L1550.7,544.4 L1554.3,477.3 L1558.0,477.3 L1561.6,365.1 L1565.2,365.1 L1568.8,549.3 L1572.5,549.3 L1576.1,531.0 L1579.7,531.0 L1583.4,632.2 L1587.0,632.2 L1590.6,501.7 L1594.2,501.7 L1597.9,470.6 L1601.5,470.6 L1605.1,632.2 L1608.7,632.2 L1612.4,434.6 L1616.0,434.6 L1619.6,524.3 L1623.3,524.3 L1626.9,424.2 L1630.5,424.2 L1634.1,525.5 L1637.8,525.5 L1641.4,430.2 L1645.0,430.2 L1648.7,502.3 L1652.3,502.3 L1655.9,545.0 L1659.5,545.0 L1663.2,632.2 L1666.8,632.2 L1670.4,462.4 L1674.1,462.4 L1677.7,419.0 L1681.3,419.0 L1684.9,547.4 L1688.6,547.4 L1692.2,352.8 L1695.8,352.8 L1699.4,548.0 L1703.1,548.0 L1706.7,363.4 L1710.3,363.4 L1714.0,548.0 L1717.6,548.0 L1721.2,632.2 L1724.8,632.2 L1728.5,482.8 L1732.1,482.8 L1735.7,512.7 L1739.4,512.7 L1743.0,532.8 L1746.6,532.8 L1750.2,488.3 L1753.9,488.3 L1757.5,504.1 L1761.1,504.1 L1764.8,354.1 L1768.4,354.1 L1772.0,549.3 L1775.6,549.3 L1779.3,472.4 L1782.9,472.4 L1786.5,547.4 L1790.1,547.4 L1793.8,467.0 L1797.4,467.0 L1801.0,471.8 L1804.7,471.8 L1808.3,530.4 L1811.9,530.4 L1815.5,474.9 L1819.2,474.9 L1822.8,555.4 L1826.4,555.4 L1830.1,549.3 L1833.7,549.3 L1837.3,632.2 L1840.9,632.2 L1844.6,330.2 L1848.2,330.2 L1851.8,547.4 L1855.4,547.4 L1859.1,554.1 L1862.7,554.1 L1866.3,466.5 L1870.0,466.5 L1873.6,426.9 L1877.2,426.9 L1880.8,499.9 L1884.5,499.9 L1888.1,437.8 L1891.7,437.8 L1895.4,632.2 L1899.0,632.2 L1902.6,546.2 L1906.2,546.2 L1909.9,475.5 L1913.5,475.5 L1917.1,632.2 L1920.8,632.2 L1924.4,528.5 L1928.0,528.5 L1931.6,487.7 L1935.3,487.7 L1938.9,551.7 L1942.5,551.7 L1946.1,408.4 L1949.8,408.4 L1953.4,632.2 L1957.0,632.2 L1960.7,381.1 L1964.3,381.1 L1967.9,530.4 L1971.5,530.4 L1975.2,424.2 L1978.8,424.2 L1982.4,539.5 L1986.1,539.5 L1989.7,496.2 L1993.3,496.2 L1996.9,549.9 L2000.6,549.9 L2004.2,398.3 L2007.8,398.3 L2011.4,632.2 L2015.1,632.2 L2018.7,365.1 L2022.3,365.1 L2026.0,543.8 L2029.6,543.8 L2033.2,632.2 L2036.8,632.2 L2040.5,481.6 L2044.1,481.6 L2047.7,477.9 L2051.4,477.9 L2055.0,555.4 L2058.6,555.4 L2062.2,376.5 L2065.9,376.5 L2069.5,510.9 L2073.1,510.9 L2076.8,519.4 L2080.4,519.4 L2084.0,465.1 L2087.6,465.1 L2091.3,632.2 L2094.9,632.2 L2098.5,482.8 L2102.1,482.8 L2105.8,479.8 L2109.4,479.8 L2113.0,540.1 L2116.7,540.1 L2120.3,540.1 L2123.9,540.1 L2127.5,550.5 L2131.2,550.5 L2134.8,537.1 L2138.4,537.1 L2142.1,468.4 L2145.7,468.4 L2149.3,632.2 L2152.9,632.2 L2156.6,472.4 L2160.2,472.4 L2163.8,546.2 L2167.4,546.2 L2171.1,632.2 L2174.7,632.2" fill="none" stroke="#d1584a" stroke-width="2" stroke-linejoin="round"/>
<path d="M1304.0,474.6 L1307.6,498.0 L1311.3,498.0 L1314.9,550.5 L1318.5,550.5 L1322.1,554.1 L1325.8,554.1 L1329.4,485.9 L1333.0,485.9 L1336.7,550.5 L1340.3,550.5 L1343.9,477.9 L1347.5,477.9 L1351.2,350.1 L1354.8,350.1 L1358.4,546.2 L1362.1,546.2 L1365.7,346.0 L1369.3,346.0 L1372.9,549.9 L1376.6,549.9 L1380.2,539.5 L1383.8,539.5 L1387.4,474.9 L1391.1,474.9 L1394.7,549.3 L1398.3,549.3 L1402.0,426.9 L1405.6,426.9 L1409.2,632.2 L1412.8,632.2 L1416.5,467.8 L1420.1,467.8 L1423.7,352.8 L1427.4,352.8 L1431.0,549.3 L1434.6,549.3 L1438.2,435.9 L1441.9,435.9 L1445.5,382.0 L1449.1,382.0 L1452.7,535.9 L1456.4,535.9 L1460.0,529.1 L1463.6,529.1 L1467.3,632.2 L1470.9,632.2 L1474.5,467.0 L1478.1,467.0 L1481.8,474.3 L1485.4,474.3 L1489.0,551.7 L1492.7,551.7 L1496.3,429.7 L1499.9,429.7 L1503.5,367.8 L1507.2,367.8 L1510.8,551.1 L1514.4,551.1 L1518.1,529.1 L1521.7,529.1 L1525.3,632.2 L1528.9,632.2 L1532.6,470.0 L1536.2,470.0 L1539.8,479.1 L1543.4,479.1 L1547.1,544.4 L1550.7,544.4 L1554.3,477.3 L1558.0,477.3 L1561.6,365.1 L1565.2,365.1 L1568.8,549.3 L1572.5,549.3 L1576.1,531.0 L1579.7,531.0 L1583.4,632.2 L1587.0,632.2 L1590.6,456.4 L1594.2,456.4 L1597.9,470.0 L1601.5,470.0 L1605.1,632.2 L1608.7,632.2 L1612.4,434.6 L1616.0,434.6 L1619.6,524.3 L1623.3,524.3 L1626.9,424.2 L1630.5,424.2 L1634.1,525.5 L1637.8,525.5 L1641.4,430.2 L1645.0,430.2 L1648.7,502.3 L1652.3,502.3 L1655.9,545.0 L1659.5,545.0 L1663.2,632.2 L1666.8,632.2 L1670.4,462.4 L1674.1,462.4 L1677.7,419.0 L1681.3,419.0 L1684.9,547.4 L1688.6,547.4 L1692.2,352.8 L1695.8,352.8 L1699.4,548.0 L1703.1,548.0 L1706.7,363.4 L1710.3,363.4 L1714.0,548.0 L1717.6,548.0 L1721.2,632.2 L1724.8,632.2 L1728.5,482.2 L1732.1,482.2 L1735.7,479.1 L1739.4,479.1 L1743.0,532.8 L1746.6,532.8 L1750.2,488.3 L1753.9,488.3 L1757.5,504.1 L1761.1,504.1 L1764.8,354.1 L1768.4,354.1 L1772.0,549.3 L1775.6,549.3 L1779.3,472.4 L1782.9,472.4 L1786.5,545.6 L1790.1,545.6 L1793.8,467.0 L1797.4,467.0 L1801.0,471.8 L1804.7,471.8 L1808.3,530.4 L1811.9,530.4 L1815.5,474.9 L1819.2,474.9 L1822.8,555.4 L1826.4,555.4 L1830.1,460.5 L1833.7,460.5 L1837.3,632.2 L1840.9,632.2 L1844.6,330.2 L1848.2,330.2 L1851.8,547.4 L1855.4,547.4 L1859.1,554.1 L1862.7,554.1 L1866.3,466.5 L1870.0,466.5 L1873.6,426.9 L1877.2,426.9 L1880.8,499.9 L1884.5,499.9 L1888.1,437.8 L1891.7,437.8 L1895.4,632.2 L1899.0,632.2 L1902.6,546.2 L1906.2,546.2 L1909.9,475.5 L1913.5,475.5 L1917.1,632.2 L1920.8,632.2 L1924.4,478.5 L1928.0,478.5 L1931.6,485.9 L1935.3,485.9 L1938.9,551.7 L1942.5,551.7 L1946.1,408.4 L1949.8,408.4 L1953.4,632.2 L1957.0,632.2 L1960.7,381.1 L1964.3,381.1 L1967.9,530.4 L1971.5,530.4 L1975.2,424.2 L1978.8,424.2 L1982.4,539.5 L1986.1,539.5 L1989.7,496.2 L1993.3,496.2 L1996.9,549.9 L2000.6,549.9 L2004.2,398.3 L2007.8,398.3 L2011.4,632.2 L2015.1,632.2 L2018.7,365.1 L2022.3,365.1 L2026.0,543.8 L2029.6,543.8 L2033.2,632.2 L2036.8,632.2 L2040.5,481.6 L2044.1,481.6 L2047.7,477.9 L2051.4,477.9 L2055.0,555.4 L2058.6,555.4 L2062.2,376.5 L2065.9,376.5 L2069.5,510.9 L2073.1,510.9 L2076.8,519.4 L2080.4,519.4 L2084.0,465.1 L2087.6,465.1 L2091.3,632.2 L2094.9,632.2 L2098.5,482.8 L2102.1,482.8 L2105.8,479.8 L2109.4,479.8 L2113.0,540.1 L2116.7,540.1 L2120.3,374.6 L2123.9,374.6 L2127.5,550.5 L2131.2,550.5 L2134.8,537.1 L2138.4,537.1 L2142.1,468.4 L2145.7,468.4 L2149.3,632.2 L2152.9,632.2 L2156.6,471.2 L2160.2,471.2 L2163.8,427.5 L2167.4,427.5 L2171.1,632.2 L2174.7,632.2 L2174.7,632 L1304.0,632 Z" fill="#1F78C1" fill-opacity="0.1" stroke="none"/>
<path d="M1304.0,474.6 L1307.6,498.0 L1311.3,498.0 L1314.9,550.5 L1318.5,550.5 L1322.1,554.1 L1325.8,554.1 L1329.4,485.9 L1333.0,485.9 L1336.7,550.5 L1340.3,550.5 L1343.9,477.9 L1347.5,477.9 L1351.2,350.1 L1354.8,350.1 L1358.4,546.2 L1362.1,546.2 L1365.7,346.0 L1369.3,346.0 L1372.9,549.9 L1376.6,549.9 L1380.2,539.5 L1383.8,539.5 L1387.4,474.9 L1391.1,474.9 L1394.7,549.3 L1398.3,549.3 L1402.0,426.9 L1405.6,426.9 L1409.2,632.2 L1412.8,632.2 L1416.5,467.8 L1420.1,467.8 L1423.7,352.8 L1427.4,352.8 L1431.0,549.3 L1434.6,549.3 L1438.2,435.9 L1441.9,435.9 L1445.5,382.0 L1449.1,382.0 L1452.7,535.9 L1456.4,535.9 L1460.0,529.1 L1463.6,529.1 L1467.3,632.2 L1470.9,632.2 L1474.5,467.0 L1478.1,467.0 L1481.8,474.3 L1485.4,474.3 L1489.0,551.7 L1492.7,551.7 L1496.3,429.7 L1499.9,429.7 L1503.5,367.8 L1507.2,367.8 L1510.8,551.1 L1514.4,551.1 L1518.1,529.1 L1521.7,529.1 L1525.3,632.2 L1528.9,632.2 L1532.6,470.0 L1536.2,470.0 L1539.8,479.1 L1543.4,479.1 L1547.1,544.4 L1550.7,544.4 L1554.3,477.3 L1558.0,477.3 L1561.6,365.1 L1565.2,365.1 L1568.8,549.3 L1572.5,549.3 L1576.1,531.0 L1579.7,531.0 L1583.4,632.2 L1587.0,632.2 L1590.6,456.4 L1594.2,456.4 L1597.9,470.0 L1601.5,470.0 L1605.1,632.2 L1608.7,632.2 L1612.4,434.6 L1616.0,434.6 L1619.6,524.3 L1623.3,524.3 L1626.9,424.2 L1630.5,424.2 L1634.1,525.5 L1637.8,525.5 L1641.4,430.2 L1645.0,430.2 L1648.7,502.3 L1652.3,502.3 L1655.9,545.0 L1659.5,545.0 L1663.2,632.2 L1666.8,632.2 L1670.4,462.4 L1674.1,462.4 L1677.7,419.0 L1681.3,419.0 L1684.9,547.4 L1688.6,547.4 L1692.2,352.8 L1695.8,352.8 L1699.4,548.0 L1703.1,548.0 L1706.7,363.4 L1710.3,363.4 L1714.0,548.0 L1717.6,548.0 L1721.2,632.2 L1724.8,632.2 L1728.5,482.2 L1732.1,482.2 L1735.7,479.1 L1739.4,479.1 L1743.0,532.8 L1746.6,532.8 L1750.2,488.3 L1753.9,488.3 L1757.5,504.1 L1761.1,504.1 L1764.8,354.1 L1768.4,354.1 L1772.0,549.3 L1775.6,549.3 L1779.3,472.4 L1782.9,472.4 L1786.5,545.6 L1790.1,545.6 L1793.8,467.0 L1797.4,467.0 L1801.0,471.8 L1804.7,471.8 L1808.3,530.4 L1811.9,530.4 L1815.5,474.9 L1819.2,474.9 L1822.8,555.4 L1826.4,555.4 L1830.1,460.5 L1833.7,460.5 L1837.3,632.2 L1840.9,632.2 L1844.6,330.2 L1848.2,330.2 L1851.8,547.4 L1855.4,547.4 L1859.1,554.1 L1862.7,554.1 L1866.3,466.5 L1870.0,466.5 L1873.6,426.9 L1877.2,426.9 L1880.8,499.9 L1884.5,499.9 L1888.1,437.8 L1891.7,437.8 L1895.4,632.2 L1899.0,632.2 L1902.6,546.2 L1906.2,546.2 L1909.9,475.5 L1913.5,475.5 L1917.1,632.2 L1920.8,632.2 L1924.4,478.5 L1928.0,478.5 L1931.6,485.9 L1935.3,485.9 L1938.9,551.7 L1942.5,551.7 L1946.1,408.4 L1949.8,408.4 L1953.4,632.2 L1957.0,632.2 L1960.7,381.1 L1964.3,381.1 L1967.9,530.4 L1971.5,530.4 L1975.2,424.2 L1978.8,424.2 L1982.4,539.5 L1986.1,539.5 L1989.7,496.2 L1993.3,496.2 L1996.9,549.9 L2000.6,549.9 L2004.2,398.3 L2007.8,398.3 L2011.4,632.2 L2015.1,632.2 L2018.7,365.1 L2022.3,365.1 L2026.0,543.8 L2029.6,543.8 L2033.2,632.2 L2036.8,632.2 L2040.5,481.6 L2044.1,481.6 L2047.7,477.9 L2051.4,477.9 L2055.0,555.4 L2058.6,555.4 L2062.2,376.5 L2065.9,376.5 L2069.5,510.9 L2073.1,510.9 L2076.8,519.4 L2080.4,519.4 L2084.0,465.1 L2087.6,465.1 L2091.3,632.2 L2094.9,632.2 L2098.5,482.8 L2102.1,482.8 L2105.8,479.8 L2109.4,479.8 L2113.0,540.1 L2116.7,540.1 L2120.3,374.6 L2123.9,374.6 L2127.5,550.5 L2131.2,550.5 L2134.8,537.1 L2138.4,537.1 L2142.1,468.4 L2145.7,468.4 L2149.3,632.2 L2152.9,632.2 L2156.6,471.2 L2160.2,471.2 L2163.8,427.5 L2167.4,427.5 L2171.1,632.2 L2174.7,632.2" fill="none" stroke="#3c76bb" stroke-width="2" stroke-linejoin="round"/>
<path d="M1304.0,474.6 L1307.6,498.0 L1311.3,498.0 L1314.9,550.5 L1318.5,550.5 L1322.1,554.1 L1325.8,554.1 L1329.4,485.9 L1333.0,485.9 L1336.7,550.5 L1340.3,550.5 L1343.9,477.9 L1347.5,477.9 L1351.2,350.1 L1354.8,350.1 L1358.4,546.2 L1362.1,546.2 L1365.7,346.0 L1369.3,346.0 L1372.9,549.9 L1376.6,549.9 L1380.2,539.5 L1383.8,539.5 L1387.4,474.9 L1391.1,474.9 L1394.7,549.3 L1398.3,549.3 L1402.0,426.9 L1405.6,426.9 L1409.2,632.2 L1412.8,632.2 L1416.5,467.8 L1420.1,467.8 L1423.7,352.8 L1427.4,352.8 L1431.0,549.3 L1434.6,549.3 L1438.2,435.9 L1441.9,435.9 L1445.5,382.0 L1449.1,382.0 L1452.7,535.9 L1456.4,535.9 L1460.0,529.1 L1463.6,529.1 L1467.3,632.2 L1470.9,632.2 L1474.5,467.0 L1478.1,467.0 L1481.8,474.3 L1485.4,474.3 L1489.0,551.7 L1492.7,551.7 L1496.3,429.7 L1499.9,429.7 L1503.5,367.8 L1507.2,367.8 L1510.8,551.1 L1514.4,551.1 L1518.1,529.1 L1521.7,529.1 L1525.3,632.2 L1528.9,632.2 L1532.6,470.0 L1536.2,470.0 L1539.8,479.1 L1543.4,479.1 L1547.1,544.4 L1550.7,544.4 L1554.3,477.3 L1558.0,477.3 L1561.6,365.1 L1565.2,365.1 L1568.8,549.3 L1572.5,549.3 L1576.1,531.0 L1579.7,531.0 L1583.4,632.2 L1587.0,632.2 L1590.6,456.4 L1594.2,456.4 L1597.9,470.0 L1601.5,470.0 L1605.1,632.2 L1608.7,632.2 L1612.4,434.6 L1616.0,434.6 L1619.6,524.3 L1623.3,524.3 L1626.9,424.2 L1630.5,424.2 L1634.1,525.5 L1637.8,525.5 L1641.4,430.2 L1645.0,430.2 L1648.7,502.3 L1652.3,502.3 L1655.9,545.0 L1659.5,545.0 L1663.2,632.2 L1666.8,632.2 L1670.4,462.4 L1674.1,462.4 L1677.7,419.0 L1681.3,419.0 L1684.9,547.4 L1688.6,547.4 L1692.2,352.8 L1695.8,352.8 L1699.4,548.0 L1703.1,548.0 L1706.7,363.4 L1710.3,363.4 L1714.0,548.0 L1717.6,548.0 L1721.2,632.2 L1724.8,632.2 L1728.5,482.2 L1732.1,482.2 L1735.7,479.1 L1739.4,479.1 L1743.0,532.8 L1746.6,532.8 L1750.2,488.3 L1753.9,488.3 L1757.5,504.1 L1761.1,504.1 L1764.8,354.1 L1768.4,354.1 L1772.0,549.3 L1775.6,549.3 L1779.3,472.4 L1782.9,472.4 L1786.5,545.6 L1790.1,545.6 L1793.8,467.0 L1797.4,467.0 L1801.0,471.8 L1804.7,471.8 L1808.3,530.4 L1811.9,530.4 L1815.5,474.9 L1819.2,474.9 L1822.8,555.4 L1826.4,555.4 L1830.1,460.5 L1833.7,460.5 L1837.3,632.2 L1840.9,632.2 L1844.6,330.2 L1848.2,330.2 L1851.8,547.4 L1855.4,547.4 L1859.1,554.1 L1862.7,554.1 L1866.3,466.5 L1870.0,466.5 L1873.6,426.9 L1877.2,426.9 L1880.8,499.9 L1884.5,499.9 L1888.1,437.8 L1891.7,437.8 L1895.4,632.2 L1899.0,632.2 L1902.6,546.2 L1906.2,546.2 L1909.9,475.5 L1913.5,475.5 L1917.1,632.2 L1920.8,632.2 L1924.4,478.5 L1928.0,478.5 L1931.6,485.9 L1935.3,485.9 L1938.9,551.7 L1942.5,551.7 L1946.1,408.4 L1949.8,408.4 L1953.4,632.2 L1957.0,632.2 L1960.7,381.1 L1964.3,381.1 L1967.9,530.4 L1971.5,530.4 L1975.2,424.2 L1978.8,424.2 L1982.4,539.5 L1986.1,539.5 L1989.7,496.2 L1993.3,496.2 L1996.9,549.9 L2000.6,549.9 L2004.2,398.3 L2007.8,398.3 L2011.4,632.2 L2015.1,632.2 L2018.7,365.1 L2022.3,365.1 L2026.0,543.8 L2029.6,543.8 L2033.2,632.2 L2036.8,632.2 L2040.5,481.6 L2044.1,481.6 L2047.7,477.9 L2051.4,477.9 L2055.0,555.4 L2058.6,555.4 L2062.2,376.5 L2065.9,376.5 L2069.5,510.9 L2073.1,510.9 L2076.8,519.4 L2080.4,519.4 L2084.0,465.1 L2087.6,465.1 L2091.3,632.2 L2094.9,632.2 L2098.5,482.8 L2102.1,482.8 L2105.8,479.8 L2109.4,479.8 L2113.0,540.1 L2116.7,540.1 L2120.3,374.6 L2123.9,374.6 L2127.5,550.5 L2131.2,550.5 L2134.8,537.1 L2138.4,537.1 L2142.1,468.4 L2145.7,468.4 L2149.3,632.2 L2152.9,632.2 L2156.6,471.2 L2160.2,471.2 L2163.8,427.5 L2167.4,427.5 L2171.1,632.2 L2174.7,632.2 L2174.7,632 L1304.0,632 Z" fill="#BA43A9" fill-opacity="0.1" stroke="none"/>
<path d="M1304.0,474.6 L1307.6,498.0 L1311.3,498.0 L1314.9,550.5 L1318.5,550.5 L1322.1,554.1 L1325.8,554.1 L1329.4,485.9 L1333.0,485.9 L1336.7,550.5 L1340.3,550.5 L1343.9,477.9 L1347.5,477.9 L1351.2,350.1 L1354.8,350.1 L1358.4,546.2 L1362.1,546.2 L1365.7,346.0 L1369.3,346.0 L1372.9,549.9 L1376.6,549.9 L1380.2,539.5 L1383.8,539.5 L1387.4,474.9 L1391.1,474.9 L1394.7,549.3 L1398.3,549.3 L1402.0,426.9 L1405.6,426.9 L1409.2,632.2 L1412.8,632.2 L1416.5,467.8 L1420.1,467.8 L1423.7,352.8 L1427.4,352.8 L1431.0,549.3 L1434.6,549.3 L1438.2,435.9 L1441.9,435.9 L1445.5,382.0 L1449.1,382.0 L1452.7,535.9 L1456.4,535.9 L1460.0,529.1 L1463.6,529.1 L1467.3,632.2 L1470.9,632.2 L1474.5,467.0 L1478.1,467.0 L1481.8,474.3 L1485.4,474.3 L1489.0,551.7 L1492.7,551.7 L1496.3,429.7 L1499.9,429.7 L1503.5,367.8 L1507.2,367.8 L1510.8,551.1 L1514.4,551.1 L1518.1,529.1 L1521.7,529.1 L1525.3,632.2 L1528.9,632.2 L1532.6,470.0 L1536.2,470.0 L1539.8,479.1 L1543.4,479.1 L1547.1,544.4 L1550.7,544.4 L1554.3,477.3 L1558.0,477.3 L1561.6,365.1 L1565.2,365.1 L1568.8,549.3 L1572.5,549.3 L1576.1,531.0 L1579.7,531.0 L1583.4,632.2 L1587.0,632.2 L1590.6,456.4 L1594.2,456.4 L1597.9,470.0 L1601.5,470.0 L1605.1,632.2 L1608.7,632.2 L1612.4,434.6 L1616.0,434.6 L1619.6,524.3 L1623.3,524.3 L1626.9,424.2 L1630.5,424.2 L1634.1,525.5 L1637.8,525.5 L1641.4,430.2 L1645.0,430.2 L1648.7,502.3 L1652.3,502.3 L1655.9,545.0 L1659.5,545.0 L1663.2,632.2 L1666.8,632.2 L1670.4,462.4 L1674.1,462.4 L1677.7,419.0 L1681.3,419.0 L1684.9,547.4 L1688.6,547.4 L1692.2,352.8 L1695.8,352.8 L1699.4,548.0 L1703.1,548.0 L1706.7,363.4 L1710.3,363.4 L1714.0,548.0 L1717.6,548.0 L1721.2,632.2 L1724.8,632.2 L1728.5,482.2 L1732.1,482.2 L1735.7,479.1 L1739.4,479.1 L1743.0,532.8 L1746.6,532.8 L1750.2,488.3 L1753.9,488.3 L1757.5,504.1 L1761.1,504.1 L1764.8,354.1 L1768.4,354.1 L1772.0,549.3 L1775.6,549.3 L1779.3,472.4 L1782.9,472.4 L1786.5,545.6 L1790.1,545.6 L1793.8,467.0 L1797.4,467.0 L1801.0,471.8 L1804.7,471.8 L1808.3,530.4 L1811.9,530.4 L1815.5,474.9 L1819.2,474.9 L1822.8,555.4 L1826.4,555.4 L1830.1,460.5 L1833.7,460.5 L1837.3,632.2 L1840.9,632.2 L1844.6,330.2 L1848.2,330.2 L1851.8,547.4 L1855.4,547.4 L1859.1,554.1 L1862.7,554.1 L1866.3,466.5 L1870.0,466.5 L1873.6,426.9 L1877.2,426.9 L1880.8,499.9 L1884.5,499.9 L1888.1,437.8 L1891.7,437.8 L1895.4,632.2 L1899.0,632.2 L1902.6,546.2 L1906.2,546.2 L1909.9,475.5 L1913.5,475.5 L1917.1,632.2 L1920.8,632.2 L1924.4,478.5 L1928.0,478.5 L1931.6,485.9 L1935.3,485.9 L1938.9,551.7 L1942.5,551.7 L1946.1,408.4 L1949.8,408.4 L1953.4,632.2 L1957.0,632.2 L1960.7,381.1 L1964.3,381.1 L1967.9,530.4 L1971.5,530.4 L1975.2,424.2 L1978.8,424.2 L1982.4,539.5 L1986.1,539.5 L1989.7,496.2 L1993.3,496.2 L1996.9,549.9 L2000.6,549.9 L2004.2,398.3 L2007.8,398.3 L2011.4,632.2 L2015.1,632.2 L2018.7,365.1 L2022.3,365.1 L2026.0,543.8 L2029.6,543.8 L2033.2,632.2 L2036.8,632.2 L2040.5,481.6 L2044.1,481.6 L2047.7,477.9 L2051.4,477.9 L2055.0,555.4 L2058.6,555.4 L2062.2,376.5 L2065.9,376.5 L2069.5,510.9 L2073.1,510.9 L2076.8,519.4 L2080.4,519.4 L2084.0,465.1 L2087.6,465.1 L2091.3,632.2 L2094.9,632.2 L2098.5,482.8 L2102.1,482.8 L2105.8,479.8 L2109.4,479.8 L2113.0,540.1 L2116.7,540.1 L2120.3,374.6 L2123.9,374.6 L2127.5,550.5 L2131.2,550.5 L2134.8,537.1 L2138.4,537.1 L2142.1,468.4 L2145.7,468.4 L2149.3,632.2 L2152.9,632.2 L2156.6,471.2 L2160.2,471.2 L2163.8,427.5 L2167.4,427.5 L2171.1,632.2 L2174.7,632.2" fill="none" stroke="#ac4ba4" stroke-width="2" stroke-linejoin="round"/>
<path d="M1304.0,474.6 L1307.6,498.0 L1311.3,498.0 L1314.9,550.5 L1318.5,550.5 L1322.1,554.1 L1325.8,554.1 L1329.4,485.9 L1333.0,485.9 L1336.7,550.5 L1340.3,550.5 L1343.9,477.9 L1347.5,477.9 L1351.2,350.1 L1354.8,350.1 L1358.4,546.2 L1362.1,546.2 L1365.7,346.0 L1369.3,346.0 L1372.9,549.9 L1376.6,549.9 L1380.2,539.5 L1383.8,539.5 L1387.4,474.9 L1391.1,474.9 L1394.7,549.3 L1398.3,549.3 L1402.0,426.9 L1405.6,426.9 L1409.2,632.2 L1412.8,632.2 L1416.5,467.8 L1420.1,467.8 L1423.7,352.8 L1427.4,352.8 L1431.0,549.3 L1434.6,549.3 L1438.2,435.9 L1441.9,435.9 L1445.5,382.0 L1449.1,382.0 L1452.7,535.9 L1456.4,535.9 L1460.0,529.1 L1463.6,529.1 L1467.3,632.2 L1470.9,632.2 L1474.5,467.0 L1478.1,467.0 L1481.8,474.3 L1485.4,474.3 L1489.0,551.7 L1492.7,551.7 L1496.3,429.7 L1499.9,429.7 L1503.5,367.8 L1507.2,367.8 L1510.8,551.1 L1514.4,551.1 L1518.1,529.1 L1521.7,529.1 L1525.3,632.2 L1528.9,632.2 L1532.6,470.0 L1536.2,470.0 L1539.8,479.1 L1543.4,479.1 L1547.1,544.4 L1550.7,544.4 L1554.3,477.3 L1558.0,477.3 L1561.6,365.1 L1565.2,365.1 L1568.8,549.3 L1572.5,549.3 L1576.1,531.0 L1579.7,531.0 L1583.4,632.2 L1587.0,632.2 L1590.6,456.4 L1594.2,456.4 L1597.9,470.0 L1601.5,470.0 L1605.1,632.2 L1608.7,632.2 L1612.4,434.6 L1616.0,434.6 L1619.6,524.3 L1623.3,524.3 L1626.9,424.2 L1630.5,424.2 L1634.1,525.5 L1637.8,525.5 L1641.4,430.2 L1645.0,430.2 L1648.7,502.3 L1652.3,502.3 L1655.9,545.0 L1659.5,545.0 L1663.2,632.2 L1666.8,632.2 L1670.4,462.4 L1674.1,462.4 L1677.7,419.0 L1681.3,419.0 L1684.9,547.4 L1688.6,547.4 L1692.2,352.8 L1695.8,352.8 L1699.4,548.0 L1703.1,548.0 L1706.7,363.4 L1710.3,363.4 L1714.0,548.0 L1717.6,548.0 L1721.2,632.2 L1724.8,632.2 L1728.5,482.2 L1732.1,482.2 L1735.7,479.1 L1739.4,479.1 L1743.0,532.8 L1746.6,532.8 L1750.2,488.3 L1753.9,488.3 L1757.5,504.1 L1761.1,504.1 L1764.8,354.1 L1768.4,354.1 L1772.0,549.3 L1775.6,549.3 L1779.3,472.4 L1782.9,472.4 L1786.5,545.6 L1790.1,545.6 L1793.8,467.0 L1797.4,467.0 L1801.0,471.8 L1804.7,471.8 L1808.3,530.4 L1811.9,530.4 L1815.5,474.9 L1819.2,474.9 L1822.8,555.4 L1826.4,555.4 L1830.1,460.5 L1833.7,460.5 L1837.3,632.2 L1840.9,632.2 L1844.6,330.2 L1848.2,330.2 L1851.8,547.4 L1855.4,547.4 L1859.1,554.1 L1862.7,554.1 L1866.3,466.5 L1870.0,466.5 L1873.6,426.9 L1877.2,426.9 L1880.8,499.9 L1884.5,499.9 L1888.1,437.8 L1891.7,437.8 L1895.4,632.2 L1899.0,632.2 L1902.6,546.2 L1906.2,546.2 L1909.9,475.5 L1913.5,475.5 L1917.1,632.2 L1920.8,632.2 L1924.4,478.5 L1928.0,478.5 L1931.6,485.9 L1935.3,485.9 L1938.9,551.7 L1942.5,551.7 L1946.1,408.4 L1949.8,408.4 L1953.4,632.2 L1957.0,632.2 L1960.7,381.1 L1964.3,381.1 L1967.9,530.4 L1971.5,530.4 L1975.2,424.2 L1978.8,424.2 L1982.4,539.5 L1986.1,539.5 L1989.7,496.2 L1993.3,496.2 L1996.9,549.9 L2000.6,549.9 L2004.2,398.3 L2007.8,398.3 L2011.4,632.2 L2015.1,632.2 L2018.7,365.1 L2022.3,365.1 L2026.0,543.8 L2029.6,543.8 L2033.2,632.2 L2036.8,632.2 L2040.5,481.6 L2044.1,481.6 L2047.7,477.9 L2051.4,477.9 L2055.0,555.4 L2058.6,555.4 L2062.2,376.5 L2065.9,376.5 L2069.5,510.9 L2073.1,510.9 L2076.8,519.4 L2080.4,519.4 L2084.0,465.1 L2087.6,465.1 L2091.3,632.2 L2094.9,632.2 L2098.5,482.8 L2102.1,482.8 L2105.8,479.8 L2109.4,479.8 L2113.0,540.1 L2116.7,540.1 L2120.3,374.6 L2123.9,374.6 L2127.5,550.5 L2131.2,550.5 L2134.8,537.1 L2138.4,537.1 L2142.1,468.4 L2145.7,468.4 L2149.3,632.2 L2152.9,632.2 L2156.6,471.2 L2160.2,471.2 L2163.8,427.5 L2167.4,427.5 L2171.1,632.2 L2174.7,632.2 L2174.7,632 L1304.0,632 Z" fill="#705DA0" fill-opacity="0.1" stroke="none"/>
<path d="M1304.0,474.6 L1307.6,498.0 L1311.3,498.0 L1314.9,550.5 L1318.5,550.5 L1322.1,554.1 L1325.8,554.1 L1329.4,485.9 L1333.0,485.9 L1336.7,550.5 L1340.3,550.5 L1343.9,477.9 L1347.5,477.9 L1351.2,350.1 L1354.8,350.1 L1358.4,546.2 L1362.1,546.2 L1365.7,346.0 L1369.3,346.0 L1372.9,549.9 L1376.6,549.9 L1380.2,539.5 L1383.8,539.5 L1387.4,474.9 L1391.1,474.9 L1394.7,549.3 L1398.3,549.3 L1402.0,426.9 L1405.6,426.9 L1409.2,632.2 L1412.8,632.2 L1416.5,467.8 L1420.1,467.8 L1423.7,352.8 L1427.4,352.8 L1431.0,549.3 L1434.6,549.3 L1438.2,435.9 L1441.9,435.9 L1445.5,382.0 L1449.1,382.0 L1452.7,535.9 L1456.4,535.9 L1460.0,529.1 L1463.6,529.1 L1467.3,632.2 L1470.9,632.2 L1474.5,467.0 L1478.1,467.0 L1481.8,474.3 L1485.4,474.3 L1489.0,551.7 L1492.7,551.7 L1496.3,429.7 L1499.9,429.7 L1503.5,367.8 L1507.2,367.8 L1510.8,551.1 L1514.4,551.1 L1518.1,529.1 L1521.7,529.1 L1525.3,632.2 L1528.9,632.2 L1532.6,470.0 L1536.2,470.0 L1539.8,479.1 L1543.4,479.1 L1547.1,544.4 L1550.7,544.4 L1554.3,477.3 L1558.0,477.3 L1561.6,365.1 L1565.2,365.1 L1568.8,549.3 L1572.5,549.3 L1576.1,531.0 L1579.7,531.0 L1583.4,632.2 L1587.0,632.2 L1590.6,456.4 L1594.2,456.4 L1597.9,470.0 L1601.5,470.0 L1605.1,632.2 L1608.7,632.2 L1612.4,434.6 L1616.0,434.6 L1619.6,524.3 L1623.3,524.3 L1626.9,424.2 L1630.5,424.2 L1634.1,525.5 L1637.8,525.5 L1641.4,430.2 L1645.0,430.2 L1648.7,502.3 L1652.3,502.3 L1655.9,545.0 L1659.5,545.0 L1663.2,632.2 L1666.8,632.2 L1670.4,462.4 L1674.1,462.4 L1677.7,419.0 L1681.3,419.0 L1684.9,547.4 L1688.6,547.4 L1692.2,352.8 L1695.8,352.8 L1699.4,548.0 L1703.1,548.0 L1706.7,363.4 L1710.3,363.4 L1714.0,548.0 L1717.6,548.0 L1721.2,632.2 L1724.8,632.2 L1728.5,482.2 L1732.1,482.2 L1735.7,479.1 L1739.4,479.1 L1743.0,532.8 L1746.6,532.8 L1750.2,488.3 L1753.9,488.3 L1757.5,504.1 L1761.1,504.1 L1764.8,354.1 L1768.4,354.1 L1772.0,549.3 L1775.6,549.3 L1779.3,472.4 L1782.9,472.4 L1786.5,545.6 L1790.1,545.6 L1793.8,467.0 L1797.4,467.0 L1801.0,471.8 L1804.7,471.8 L1808.3,530.4 L1811.9,530.4 L1815.5,474.9 L1819.2,474.9 L1822.8,555.4 L1826.4,555.4 L1830.1,460.5 L1833.7,460.5 L1837.3,632.2 L1840.9,632.2 L1844.6,330.2 L1848.2,330.2 L1851.8,547.4 L1855.4,547.4 L1859.1,554.1 L1862.7,554.1 L1866.3,466.5 L1870.0,466.5 L1873.6,426.9 L1877.2,426.9 L1880.8,499.9 L1884.5,499.9 L1888.1,437.8 L1891.7,437.8 L1895.4,632.2 L1899.0,632.2 L1902.6,546.2 L1906.2,546.2 L1909.9,475.5 L1913.5,475.5 L1917.1,632.2 L1920.8,632.2 L1924.4,478.5 L1928.0,478.5 L1931.6,485.9 L1935.3,485.9 L1938.9,551.7 L1942.5,551.7 L1946.1,408.4 L1949.8,408.4 L1953.4,632.2 L1957.0,632.2 L1960.7,381.1 L1964.3,381.1 L1967.9,530.4 L1971.5,530.4 L1975.2,424.2 L1978.8,424.2 L1982.4,539.5 L1986.1,539.5 L1989.7,496.2 L1993.3,496.2 L1996.9,549.9 L2000.6,549.9 L2004.2,398.3 L2007.8,398.3 L2011.4,632.2 L2015.1,632.2 L2018.7,365.1 L2022.3,365.1 L2026.0,543.8 L2029.6,543.8 L2033.2,632.2 L2036.8,632.2 L2040.5,481.6 L2044.1,481.6 L2047.7,477.9 L2051.4,477.9 L2055.0,555.4 L2058.6,555.4 L2062.2,376.5 L2065.9,376.5 L2069.5,510.9 L2073.1,510.9 L2076.8,519.4 L2080.4,519.4 L2084.0,465.1 L2087.6,465.1 L2091.3,632.2 L2094.9,632.2 L2098.5,482.8 L2102.1,482.8 L2105.8,479.8 L2109.4,479.8 L2113.0,540.1 L2116.7,540.1 L2120.3,374.6 L2123.9,374.6 L2127.5,550.5 L2131.2,550.5 L2134.8,537.1 L2138.4,537.1 L2142.1,468.4 L2145.7,468.4 L2149.3,632.2 L2152.9,632.2 L2156.6,471.2 L2160.2,471.2 L2163.8,427.5 L2167.4,427.5 L2171.1,632.2 L2174.7,632.2" fill="none" stroke="#6d5e9c" stroke-width="2" stroke-linejoin="round"/>
<path d="M1304.0,474.6 L1307.6,498.0 L1311.3,498.0 L1314.9,550.5 L1318.5,550.5 L1322.1,554.1 L1325.8,554.1 L1329.4,485.9 L1333.0,485.9 L1336.7,550.5 L1340.3,550.5 L1343.9,477.9 L1347.5,477.9 L1351.2,350.1 L1354.8,350.1 L1358.4,546.2 L1362.1,546.2 L1365.7,346.0 L1369.3,346.0 L1372.9,549.9 L1376.6,549.9 L1380.2,539.5 L1383.8,539.5 L1387.4,474.9 L1391.1,474.9 L1394.7,549.3 L1398.3,549.3 L1402.0,426.9 L1405.6,426.9 L1409.2,632.2 L1412.8,632.2 L1416.5,467.8 L1420.1,467.8 L1423.7,352.8 L1427.4,352.8 L1431.0,549.3 L1434.6,549.3 L1438.2,435.9 L1441.9,435.9 L1445.5,382.0 L1449.1,382.0 L1452.7,535.9 L1456.4,535.9 L1460.0,529.1 L1463.6,529.1 L1467.3,632.2 L1470.9,632.2 L1474.5,467.0 L1478.1,467.0 L1481.8,474.3 L1485.4,474.3 L1489.0,551.7 L1492.7,551.7 L1496.3,429.7 L1499.9,429.7 L1503.5,367.8 L1507.2,367.8 L1510.8,551.1 L1514.4,551.1 L1518.1,529.1 L1521.7,529.1 L1525.3,632.2 L1528.9,632.2 L1532.6,470.0 L1536.2,470.0 L1539.8,479.1 L1543.4,479.1 L1547.1,544.4 L1550.7,544.4 L1554.3,477.3 L1558.0,477.3 L1561.6,365.1 L1565.2,365.1 L1568.8,549.3 L1572.5,549.3 L1576.1,531.0 L1579.7,531.0 L1583.4,632.2 L1587.0,632.2 L1590.6,456.4 L1594.2,456.4 L1597.9,470.0 L1601.5,470.0 L1605.1,632.2 L1608.7,632.2 L1612.4,434.6 L1616.0,434.6 L1619.6,524.3 L1623.3,524.3 L1626.9,424.2 L1630.5,424.2 L1634.1,525.5 L1637.8,525.5 L1641.4,430.2 L1645.0,430.2 L1648.7,502.3 L1652.3,502.3 L1655.9,545.0 L1659.5,545.0 L1663.2,632.2 L1666.8,632.2 L1670.4,462.4 L1674.1,462.4 L1677.7,419.0 L1681.3,419.0 L1684.9,547.4 L1688.6,547.4 L1692.2,352.8 L1695.8,352.8 L1699.4,548.0 L1703.1,548.0 L1706.7,363.4 L1710.3,363.4 L1714.0,548.0 L1717.6,548.0 L1721.2,632.2 L1724.8,632.2 L1728.5,482.2 L1732.1,482.2 L1735.7,479.1 L1739.4,479.1 L1743.0,532.8 L1746.6,532.8 L1750.2,488.3 L1753.9,488.3 L1757.5,504.1 L1761.1,504.1 L1764.8,354.1 L1768.4,354.1 L1772.0,549.3 L1775.6,549.3 L1779.3,472.4 L1782.9,472.4 L1786.5,545.6 L1790.1,545.6 L1793.8,467.0 L1797.4,467.0 L1801.0,471.8 L1804.7,471.8 L1808.3,530.4 L1811.9,530.4 L1815.5,474.9 L1819.2,474.9 L1822.8,555.4 L1826.4,555.4 L1830.1,460.5 L1833.7,460.5 L1837.3,632.2 L1840.9,632.2 L1844.6,330.2 L1848.2,330.2 L1851.8,547.4 L1855.4,547.4 L1859.1,554.1 L1862.7,554.1 L1866.3,466.5 L1870.0,466.5 L1873.6,426.9 L1877.2,426.9 L1880.8,499.9 L1884.5,499.9 L1888.1,437.8 L1891.7,437.8 L1895.4,632.2 L1899.0,632.2 L1902.6,546.2 L1906.2,546.2 L1909.9,475.5 L1913.5,475.5 L1917.1,632.2 L1920.8,632.2 L1924.4,478.5 L1928.0,478.5 L1931.6,485.9 L1935.3,485.9 L1938.9,551.7 L1942.5,551.7 L1946.1,408.4 L1949.8,408.4 L1953.4,632.2 L1957.0,632.2 L1960.7,381.1 L1964.3,381.1 L1967.9,530.4 L1971.5,530.4 L1975.2,424.2 L1978.8,424.2 L1982.4,539.5 L1986.1,539.5 L1989.7,496.2 L1993.3,496.2 L1996.9,549.9 L2000.6,549.9 L2004.2,398.3 L2007.8,398.3 L2011.4,632.2 L2015.1,632.2 L2018.7,365.1 L2022.3,365.1 L2026.0,543.8 L2029.6,543.8 L2033.2,632.2 L2036.8,632.2 L2040.5,481.6 L2044.1,481.6 L2047.7,477.9 L2051.4,477.9 L2055.0,555.4 L2058.6,555.4 L2062.2,376.5 L2065.9,376.5 L2069.5,510.9 L2073.1,510.9 L2076.8,519.4 L2080.4,519.4 L2084.0,465.1 L2087.6,465.1 L2091.3,632.2 L2094.9,632.2 L2098.5,482.8 L2102.1,482.8 L2105.8,479.8 L2109.4,479.8 L2113.0,540.1 L2116.7,540.1 L2120.3,374.6 L2123.9,374.6 L2127.5,550.5 L2131.2,550.5 L2134.8,537.1 L2138.4,537.1 L2142.1,468.4 L2145.7,468.4 L2149.3,632.2 L2152.9,632.2 L2156.6,471.2 L2160.2,471.2 L2163.8,427.5 L2167.4,427.5 L2171.1,632.2 L2174.7,632.2 L2174.7,632 L1304.0,632 Z" fill="#508642" fill-opacity="0.1" stroke="none"/>
<path d="M1304.0,474.6 L1307.6,498.0 L1311.3,498.0 L1314.9,550.5 L1318.5,550.5 L1322.1,554.1 L1325.8,554.1 L1329.4,485.9 L1333.0,485.9 L1336.7,550.5 L1340.3,550.5 L1343.9,477.9 L1347.5,477.9 L1351.2,350.1 L1354.8,350.1 L1358.4,546.2 L1362.1,546.2 L1365.7,346.0 L1369.3,346.0 L1372.9,549.9 L1376.6,549.9 L1380.2,539.5 L1383.8,539.5 L1387.4,474.9 L1391.1,474.9 L1394.7,549.3 L1398.3,549.3 L1402.0,426.9 L1405.6,426.9 L1409.2,632.2 L1412.8,632.2 L1416.5,467.8 L1420.1,467.8 L1423.7,352.8 L1427.4,352.8 L1431.0,549.3 L1434.6,549.3 L1438.2,435.9 L1441.9,435.9 L1445.5,382.0 L1449.1,382.0 L1452.7,535.9 L1456.4,535.9 L1460.0,529.1 L1463.6,529.1 L1467.3,632.2 L1470.9,632.2 L1474.5,467.0 L1478.1,467.0 L1481.8,474.3 L1485.4,474.3 L1489.0,551.7 L1492.7,551.7 L1496.3,429.7 L1499.9,429.7 L1503.5,367.8 L1507.2,367.8 L1510.8,551.1 L1514.4,551.1 L1518.1,529.1 L1521.7,529.1 L1525.3,632.2 L1528.9,632.2 L1532.6,470.0 L1536.2,470.0 L1539.8,479.1 L1543.4,479.1 L1547.1,544.4 L1550.7,544.4 L1554.3,477.3 L1558.0,477.3 L1561.6,365.1 L1565.2,365.1 L1568.8,549.3 L1572.5,549.3 L1576.1,531.0 L1579.7,531.0 L1583.4,632.2 L1587.0,632.2 L1590.6,456.4 L1594.2,456.4 L1597.9,470.0 L1601.5,470.0 L1605.1,632.2 L1608.7,632.2 L1612.4,434.6 L1616.0,434.6 L1619.6,524.3 L1623.3,524.3 L1626.9,424.2 L1630.5,424.2 L1634.1,525.5 L1637.8,525.5 L1641.4,430.2 L1645.0,430.2 L1648.7,502.3 L1652.3,502.3 L1655.9,545.0 L1659.5,545.0 L1663.2,632.2 L1666.8,632.2 L1670.4,462.4 L1674.1,462.4 L1677.7,419.0 L1681.3,419.0 L1684.9,547.4 L1688.6,547.4 L1692.2,352.8 L1695.8,352.8 L1699.4,548.0 L1703.1,548.0 L1706.7,363.4 L1710.3,363.4 L1714.0,548.0 L1717.6,548.0 L1721.2,632.2 L1724.8,632.2 L1728.5,482.2 L1732.1,482.2 L1735.7,479.1 L1739.4,479.1 L1743.0,532.8 L1746.6,532.8 L1750.2,488.3 L1753.9,488.3 L1757.5,504.1 L1761.1,504.1 L1764.8,354.1 L1768.4,354.1 L1772.0,549.3 L1775.6,549.3 L1779.3,472.4 L1782.9,472.4 L1786.5,545.6 L1790.1,545.6 L1793.8,467.0 L1797.4,467.0 L1801.0,471.8 L1804.7,471.8 L1808.3,530.4 L1811.9,530.4 L1815.5,474.9 L1819.2,474.9 L1822.8,555.4 L1826.4,555.4 L1830.1,460.5 L1833.7,460.5 L1837.3,632.2 L1840.9,632.2 L1844.6,330.2 L1848.2,330.2 L1851.8,547.4 L1855.4,547.4 L1859.1,554.1 L1862.7,554.1 L1866.3,466.5 L1870.0,466.5 L1873.6,426.9 L1877.2,426.9 L1880.8,499.9 L1884.5,499.9 L1888.1,437.8 L1891.7,437.8 L1895.4,632.2 L1899.0,632.2 L1902.6,546.2 L1906.2,546.2 L1909.9,475.5 L1913.5,475.5 L1917.1,632.2 L1920.8,632.2 L1924.4,478.5 L1928.0,478.5 L1931.6,485.9 L1935.3,485.9 L1938.9,551.7 L1942.5,551.7 L1946.1,408.4 L1949.8,408.4 L1953.4,632.2 L1957.0,632.2 L1960.7,381.1 L1964.3,381.1 L1967.9,530.4 L1971.5,530.4 L1975.2,424.2 L1978.8,424.2 L1982.4,539.5 L1986.1,539.5 L1989.7,496.2 L1993.3,496.2 L1996.9,549.9 L2000.6,549.9 L2004.2,398.3 L2007.8,398.3 L2011.4,632.2 L2015.1,632.2 L2018.7,365.1 L2022.3,365.1 L2026.0,543.8 L2029.6,543.8 L2033.2,632.2 L2036.8,632.2 L2040.5,481.6 L2044.1,481.6 L2047.7,477.9 L2051.4,477.9 L2055.0,555.4 L2058.6,555.4 L2062.2,376.5 L2065.9,376.5 L2069.5,510.9 L2073.1,510.9 L2076.8,519.4 L2080.4,519.4 L2084.0,465.1 L2087.6,465.1 L2091.3,632.2 L2094.9,632.2 L2098.5,482.8 L2102.1,482.8 L2105.8,479.8 L2109.4,479.8 L2113.0,540.1 L2116.7,540.1 L2120.3,374.6 L2123.9,374.6 L2127.5,550.5 L2131.2,550.5 L2134.8,537.1 L2138.4,537.1 L2142.1,468.4 L2145.7,468.4 L2149.3,632.2 L2152.9,632.2 L2156.6,471.2 L2160.2,471.2 L2163.8,427.5 L2167.4,427.5 L2171.1,632.2 L2174.7,632.2" fill="none" stroke="#5d854a" stroke-width="2" stroke-linejoin="round"/>
<path d="M1304.0,474.6 L1307.6,498.0 L1311.3,498.0 L1314.9,550.5 L1318.5,550.5 L1322.1,554.1 L1325.8,554.1 L1329.4,485.9 L1333.0,485.9 L1336.7,550.5 L1340.3,550.5 L1343.9,477.9 L1347.5,477.9 L1351.2,350.1 L1354.8,350.1 L1358.4,546.2 L1362.1,546.2 L1365.7,346.0 L1369.3,346.0 L1372.9,549.9 L1376.6,549.9 L1380.2,539.5 L1383.8,539.5 L1387.4,474.9 L1391.1,474.9 L1394.7,549.3 L1398.3,549.3 L1402.0,426.9 L1405.6,426.9 L1409.2,632.2 L1412.8,632.2 L1416.5,467.8 L1420.1,467.8 L1423.7,352.8 L1427.4,352.8 L1431.0,549.3 L1434.6,549.3 L1438.2,435.9 L1441.9,435.9 L1445.5,382.0 L1449.1,382.0 L1452.7,535.9 L1456.4,535.9 L1460.0,529.1 L1463.6,529.1 L1467.3,632.2 L1470.9,632.2 L1474.5,467.0 L1478.1,467.0 L1481.8,474.3 L1485.4,474.3 L1489.0,551.7 L1492.7,551.7 L1496.3,429.7 L1499.9,429.7 L1503.5,367.8 L1507.2,367.8 L1510.8,551.1 L1514.4,551.1 L1518.1,529.1 L1521.7,529.1 L1525.3,632.2 L1528.9,632.2 L1532.6,470.0 L1536.2,470.0 L1539.8,479.1 L1543.4,479.1 L1547.1,544.4 L1550.7,544.4 L1554.3,477.3 L1558.0,477.3 L1561.6,365.1 L1565.2,365.1 L1568.8,549.3 L1572.5,549.3 L1576.1,531.0 L1579.7,531.0 L1583.4,632.2 L1587.0,632.2 L1590.6,456.4 L1594.2,456.4 L1597.9,470.0 L1601.5,470.0 L1605.1,632.2 L1608.7,632.2 L1612.4,434.6 L1616.0,434.6 L1619.6,524.3 L1623.3,524.3 L1626.9,424.2 L1630.5,424.2 L1634.1,525.5 L1637.8,525.5 L1641.4,430.2 L1645.0,430.2 L1648.7,502.3 L1652.3,502.3 L1655.9,545.0 L1659.5,545.0 L1663.2,632.2 L1666.8,632.2 L1670.4,462.4 L1674.1,462.4 L1677.7,419.0 L1681.3,419.0 L1684.9,547.4 L1688.6,547.4 L1692.2,352.8 L1695.8,352.8 L1699.4,548.0 L1703.1,548.0 L1706.7,363.4 L1710.3,363.4 L1714.0,548.0 L1717.6,548.0 L1721.2,632.2 L1724.8,632.2 L1728.5,482.2 L1732.1,482.2 L1735.7,479.1 L1739.4,479.1 L1743.0,532.8 L1746.6,532.8 L1750.2,488.3 L1753.9,488.3 L1757.5,504.1 L1761.1,504.1 L1764.8,354.1 L1768.4,354.1 L1772.0,549.3 L1775.6,549.3 L1779.3,472.4 L1782.9,472.4 L1786.5,545.6 L1790.1,545.6 L1793.8,467.0 L1797.4,467.0 L1801.0,471.8 L1804.7,471.8 L1808.3,530.4 L1811.9,530.4 L1815.5,474.9 L1819.2,474.9 L1822.8,555.4 L1826.4,555.4 L1830.1,460.5 L1833.7,460.5 L1837.3,632.2 L1840.9,632.2 L1844.6,330.2 L1848.2,330.2 L1851.8,547.4 L1855.4,547.4 L1859.1,554.1 L1862.7,554.1 L1866.3,466.5 L1870.0,466.5 L1873.6,426.9 L1877.2,426.9 L1880.8,499.9 L1884.5,499.9 L1888.1,437.8 L1891.7,437.8 L1895.4,632.2 L1899.0,632.2 L1902.6,546.2 L1906.2,546.2 L1909.9,475.5 L1913.5,475.5 L1917.1,632.2 L1920.8,632.2 L1924.4,478.5 L1928.0,478.5 L1931.6,485.9 L1935.3,485.9 L1938.9,551.7 L1942.5,551.7 L1946.1,408.4 L1949.8,408.4 L1953.4,632.2 L1957.0,632.2 L1960.7,381.1 L1964.3,381.1 L1967.9,530.4 L1971.5,530.4 L1975.2,424.2 L1978.8,424.2 L1982.4,539.5 L1986.1,539.5 L1989.7,496.2 L1993.3,496.2 L1996.9,549.9 L2000.6,549.9 L2004.2,398.3 L2007.8,398.3 L2011.4,632.2 L2015.1,632.2 L2018.7,365.1 L2022.3,365.1 L2026.0,543.8 L2029.6,543.8 L2033.2,632.2 L2036.8,632.2 L2040.5,481.6 L2044.1,481.6 L2047.7,477.9 L2051.4,477.9 L2055.0,555.4 L2058.6,555.4 L2062.2,376.5 L2065.9,376.5 L2069.5,510.9 L2073.1,510.9 L2076.8,519.4 L2080.4,519.4 L2084.0,465.1 L2087.6,465.1 L2091.3,632.2 L2094.9,632.2 L2098.5,482.8 L2102.1,482.8 L2105.8,479.8 L2109.4,479.8 L2113.0,540.1 L2116.7,540.1 L2120.3,374.6 L2123.9,374.6 L2127.5,550.5 L2131.2,550.5 L2134.8,537.1 L2138.4,537.1 L2142.1,468.4 L2145.7,468.4 L2149.3,632.2 L2152.9,632.2 L2156.6,471.2 L2160.2,471.2 L2163.8,427.5 L2167.4,427.5 L2171.1,632.2 L2174.7,632.2 L2174.7,632 L1304.0,632 Z" fill="#CCA300" fill-opacity="0.1" stroke="none"/>
<path d="M1304.0,474.6 L1307.6,498.0 L1311.3,498.0 L1314.9,550.5 L1318.5,550.5 L1322.1,554.1 L1325.8,554.1 L1329.4,485.9 L1333.0,485.9 L1336.7,550.5 L1340.3,550.5 L1343.9,477.9 L1347.5,477.9 L1351.2,350.1 L1354.8,350.1 L1358.4,546.2 L1362.1,546.2 L1365.7,346.0 L1369.3,346.0 L1372.9,549.9 L1376.6,549.9 L1380.2,539.5 L1383.8,539.5 L1387.4,474.9 L1391.1,474.9 L1394.7,549.3 L1398.3,549.3 L1402.0,426.9 L1405.6,426.9 L1409.2,632.2 L1412.8,632.2 L1416.5,467.8 L1420.1,467.8 L1423.7,352.8 L1427.4,352.8 L1431.0,549.3 L1434.6,549.3 L1438.2,435.9 L1441.9,435.9 L1445.5,382.0 L1449.1,382.0 L1452.7,535.9 L1456.4,535.9 L1460.0,529.1 L1463.6,529.1 L1467.3,632.2 L1470.9,632.2 L1474.5,467.0 L1478.1,467.0 L1481.8,474.3 L1485.4,474.3 L1489.0,551.7 L1492.7,551.7 L1496.3,429.7 L1499.9,429.7 L1503.5,367.8 L1507.2,367.8 L1510.8,551.1 L1514.4,551.1 L1518.1,529.1 L1521.7,529.1 L1525.3,632.2 L1528.9,632.2 L1532.6,470.0 L1536.2,470.0 L1539.8,479.1 L1543.4,479.1 L1547.1,544.4 L1550.7,544.4 L1554.3,477.3 L1558.0,477.3 L1561.6,365.1 L1565.2,365.1 L1568.8,549.3 L1572.5,549.3 L1576.1,531.0 L1579.7,531.0 L1583.4,632.2 L1587.0,632.2 L1590.6,456.4 L1594.2,456.4 L1597.9,470.0 L1601.5,470.0 L1605.1,632.2 L1608.7,632.2 L1612.4,434.6 L1616.0,434.6 L1619.6,524.3 L1623.3,524.3 L1626.9,424.2 L1630.5,424.2 L1634.1,525.5 L1637.8,525.5 L1641.4,430.2 L1645.0,430.2 L1648.7,502.3 L1652.3,502.3 L1655.9,545.0 L1659.5,545.0 L1663.2,632.2 L1666.8,632.2 L1670.4,462.4 L1674.1,462.4 L1677.7,419.0 L1681.3,419.0 L1684.9,547.4 L1688.6,547.4 L1692.2,352.8 L1695.8,352.8 L1699.4,548.0 L1703.1,548.0 L1706.7,363.4 L1710.3,363.4 L1714.0,548.0 L1717.6,548.0 L1721.2,632.2 L1724.8,632.2 L1728.5,482.2 L1732.1,482.2 L1735.7,479.1 L1739.4,479.1 L1743.0,532.8 L1746.6,532.8 L1750.2,488.3 L1753.9,488.3 L1757.5,504.1 L1761.1,504.1 L1764.8,354.1 L1768.4,354.1 L1772.0,549.3 L1775.6,549.3 L1779.3,472.4 L1782.9,472.4 L1786.5,545.6 L1790.1,545.6 L1793.8,467.0 L1797.4,467.0 L1801.0,471.8 L1804.7,471.8 L1808.3,530.4 L1811.9,530.4 L1815.5,474.9 L1819.2,474.9 L1822.8,555.4 L1826.4,555.4 L1830.1,460.5 L1833.7,460.5 L1837.3,632.2 L1840.9,632.2 L1844.6,330.2 L1848.2,330.2 L1851.8,547.4 L1855.4,547.4 L1859.1,554.1 L1862.7,554.1 L1866.3,466.5 L1870.0,466.5 L1873.6,426.9 L1877.2,426.9 L1880.8,499.9 L1884.5,499.9 L1888.1,437.8 L1891.7,437.8 L1895.4,632.2 L1899.0,632.2 L1902.6,546.2 L1906.2,546.2 L1909.9,475.5 L1913.5,475.5 L1917.1,632.2 L1920.8,632.2 L1924.4,478.5 L1928.0,478.5 L1931.6,485.9 L1935.3,485.9 L1938.9,551.7 L1942.5,551.7 L1946.1,408.4 L1949.8,408.4 L1953.4,632.2 L1957.0,632.2 L1960.7,381.1 L1964.3,381.1 L1967.9,530.4 L1971.5,530.4 L1975.2,424.2 L1978.8,424.2 L1982.4,539.5 L1986.1,539.5 L1989.7,496.2 L1993.3,496.2 L1996.9,549.9 L2000.6,549.9 L2004.2,398.3 L2007.8,398.3 L2011.4,632.2 L2015.1,632.2 L2018.7,365.1 L2022.3,365.1 L2026.0,543.8 L2029.6,543.8 L2033.2,632.2 L2036.8,632.2 L2040.5,481.6 L2044.1,481.6 L2047.7,477.9 L2051.4,477.9 L2055.0,555.4 L2058.6,555.4 L2062.2,376.5 L2065.9,376.5 L2069.5,510.9 L2073.1,510.9 L2076.8,519.4 L2080.4,519.4 L2084.0,465.1 L2087.6,465.1 L2091.3,632.2 L2094.9,632.2 L2098.5,482.8 L2102.1,482.8 L2105.8,479.8 L2109.4,479.8 L2113.0,540.1 L2116.7,540.1 L2120.3,374.6 L2123.9,374.6 L2127.5,550.5 L2131.2,550.5 L2134.8,537.1 L2138.4,537.1 L2142.1,468.4 L2145.7,468.4 L2149.3,632.2 L2152.9,632.2 L2156.6,471.2 L2160.2,471.2 L2163.8,427.5 L2167.4,427.5 L2171.1,632.2 L2174.7,632.2" fill="none" stroke="#c6a536" stroke-width="2" stroke-linejoin="round"/>
</g>
<rect x="114" y="878" width="884.7" height="2" fill="rgba(255,255,255,0.18)"/>
<rect x="114" y="938" width="884.7" height="2" fill="rgba(255,255,255,0.18)"/>
<rect x="114" y="998" width="884.7" height="2" fill="rgba(255,255,255,0.18)"/>
<rect x="114" y="1058" width="884.7" height="2" fill="rgba(255,255,255,0.18)"/>
<rect x="114" y="1118" width="884.7" height="2" fill="rgba(255,255,255,0.18)"/>
<rect x="114" y="1178" width="884.7" height="2" fill="rgba(255,255,255,0.18)"/>
<rect x="114" y="1240" width="884.7" height="2" fill="rgba(255,255,255,0.18)"/>
<rect x="236" y="878" width="2" height="362" fill="rgba(255,255,255,0.18)"/>
<rect x="384" y="878" width="2" height="362" fill="rgba(255,255,255,0.18)"/>
<rect x="532" y="878" width="2" height="362" fill="rgba(255,255,255,0.18)"/>
<rect x="678" y="878" width="2" height="362" fill="rgba(255,255,255,0.18)"/>
<rect x="826" y="878" width="2" height="362" fill="rgba(255,255,255,0.18)"/>
<rect x="974" y="878" width="2" height="362" fill="rgba(255,255,255,0.18)"/>
<clipPath id="c2"><rect x="114" y="873" width="884.7" height="369"/></clipPath>
<g clip-path="url(#c2)">
<path d="M112.0,1224.4 L115.7,1240.2 L119.3,1240.2 L123.0,1208.1 L126.7,1208.1 L130.4,1184.9 L134.1,1184.9 L137.8,1240.2 L141.5,1240.2 L145.1,1240.2 L148.8,1240.2 L152.5,1240.2 L156.2,1240.2 L159.9,1240.2 L163.6,1240.2 L167.3,1208.9 L171.0,1208.9 L174.6,1240.2 L178.3,1240.2 L182.0,1234.0 L185.7,1234.0 L189.4,1240.2 L193.1,1240.2 L196.8,1240.2 L200.4,1240.2 L204.1,1228.0 L207.8,1228.0 L211.5,1196.6 L215.2,1196.6 L218.9,1240.2 L222.6,1240.2 L226.2,1190.9 L229.9,1190.9 L233.6,950.4 L237.3,950.4 L241.0,1240.2 L244.7,1240.2 L248.4,1240.2 L252.1,1240.2 L255.7,1240.2 L259.4,1240.2 L263.1,921.3 L266.8,921.3 L270.5,1240.2 L274.2,1240.2 L277.9,1240.2 L281.5,1240.2 L285.2,1240.2 L288.9,1240.2 L292.6,1240.2 L296.3,1240.2 L300.0,1240.2 L303.7,1240.2 L307.3,1155.7 L311.0,1155.7 L314.7,1240.2 L318.4,1240.2 L322.1,1173.4 L325.8,1173.4 L329.5,1240.2 L333.1,1240.2 L336.8,1240.2 L340.5,1240.2 L344.2,1240.2 L347.9,1240.2 L351.6,1240.2 L355.3,1240.2 L359.0,1237.2 L362.6,1237.2 L366.3,1240.2 L370.0,1240.2 L373.7,1240.2 L377.4,1240.2 L381.1,1240.2 L384.8,1240.2 L388.4,1225.8 L392.1,1225.8 L395.8,1240.2 L399.5,1240.2 L403.2,1189.5 L406.9,1189.5 L410.6,1240.2 L414.2,1240.2 L417.9,1240.2 L421.6,1240.2 L425.3,1218.4 L429.0,1218.4 L432.7,1227.7 L436.4,1227.7 L440.0,1240.2 L443.7,1240.2 L447.4,1042.3 L451.1,1042.3 L454.8,1069.0 L458.5,1069.0 L462.2,1178.9 L465.9,1178.9 L469.5,1189.8 L473.2,1189.8 L476.9,1240.2 L480.6,1240.2 L484.3,1240.2 L488.0,1240.2 L491.7,1240.2 L495.3,1240.2 L499.0,1196.6 L502.7,1196.6 L506.4,1240.2 L510.1,1240.2 L513.8,1240.2 L517.5,1240.2 L521.1,1240.2 L524.8,1240.2 L528.5,1210.8 L532.2,1210.8 L535.9,1240.2 L539.6,1240.2 L543.3,1240.2 L547.0,1240.2 L550.6,1192.2 L554.3,1192.2 L558.0,1240.2 L561.7,1240.2 L565.4,1240.2 L569.1,1240.2 L572.8,1240.2 L576.4,1240.2 L580.1,1184.9 L583.8,1184.9 L587.5,1240.2 L591.2,1240.2 L594.9,1240.2 L598.6,1240.2 L602.2,1240.2 L605.9,1240.2 L609.6,1240.2 L613.3,1240.2 L617.0,1050.8 L620.7,1050.8 L624.4,1240.2 L628.0,1240.2 L631.7,1229.3 L635.4,1229.3 L639.1,1240.2 L642.8,1240.2 L646.5,981.2 L650.2,981.2 L653.9,1240.2 L657.5,1240.2 L661.2,1225.8 L664.9,1225.8 L668.6,1221.7 L672.3,1221.7 L676.0,1240.2 L679.7,1240.2 L683.3,1240.2 L687.0,1240.2 L690.7,1240.2 L694.4,1240.2 L698.1,1150.0 L701.8,1150.0 L705.5,1147.3 L709.1,1147.3 L712.8,1240.2 L716.5,1240.2 L720.2,1240.2 L723.9,1240.2 L727.6,1240.2 L731.3,1240.2 L734.9,1240.2 L738.6,1240.2 L742.3,1240.2 L746.0,1240.2 L749.7,1240.2 L753.4,1240.2 L757.1,1240.2 L760.8,1240.2 L764.4,1216.2 L768.1,1216.2 L771.8,1240.2 L775.5,1240.2 L779.2,1240.2 L782.9,1240.2 L786.6,1240.2 L790.2,1240.2 L793.9,1195.0 L797.6,1195.0 L801.3,1240.2 L805.0,1240.2 L808.7,1228.0 L812.4,1228.0 L816.0,1240.2 L819.7,1240.2 L823.4,1240.2 L827.1,1240.2 L830.8,1240.2 L834.5,1240.2 L838.2,1240.2 L841.9,1240.2 L845.5,1193.1 L849.2,1193.1 L852.9,1240.2 L856.6,1240.2 L860.3,1240.2 L864.0,1240.2 L867.7,1094.1 L871.3,1094.1 L875.0,1126.3 L878.7,1126.3 L882.4,1195.2 L886.1,1195.2 L889.8,1199.9 L893.5,1199.9 L897.1,1232.6 L900.8,1232.6 L904.5,1229.3 L908.2,1229.3 L911.9,1240.2 L915.6,1240.2 L919.3,1144.0 L922.9,1144.0 L926.6,1240.2 L930.3,1240.2 L934.0,1240.2 L937.7,1240.2 L941.4,1240.2 L945.1,1240.2 L948.8,1240.2 L952.4,1240.2 L956.1,1240.2 L959.8,1240.2 L963.5,1186.8 L967.2,1186.8 L970.9,1240.2 L974.6,1240.2 L978.2,1106.6 L981.9,1106.6 L985.6,1047.2 L989.3,1047.2 L993.0,1240.2 L996.7,1240.2 L996.7,1240 L112.0,1240 Z" fill="#7EB26D" fill-opacity="0.1" stroke="none"/>
<path d="M112.0,1224.4 L115.7,1240.2 L119.3,1240.2 L123.0,1208.1 L126.7,1208.1 L130.4,1184.9 L134.1,1184.9 L137.8,1240.2 L141.5,1240.2 L145.1,1240.2 L148.8,1240.2 L152.5,1240.2 L156.2,1240.2 L159.9,1240.2 L163.6,1240.2 L167.3,1208.9 L171.0,1208.9 L174.6,1240.2 L178.3,1240.2 L182.0,1234.0 L185.7,1234.0 L189.4,1240.2 L193.1,1240.2 L196.8,1240.2 L200.4,1240.2 L204.1,1228.0 L207.8,1228.0 L211.5,1196.6 L215.2,1196.6 L218.9,1240.2 L222.6,1240.2 L226.2,1190.9 L229.9,1190.9 L233.6,950.4 L237.3,950.4 L241.0,1240.2 L244.7,1240.2 L248.4,1240.2 L252.1,1240.2 L255.7,1240.2 L259.4,1240.2 L263.1,921.3 L266.8,921.3 L270.5,1240.2 L274.2,1240.2 L277.9,1240.2 L281.5,1240.2 L285.2,1240.2 L288.9,1240.2 L292.6,1240.2 L296.3,1240.2 L300.0,1240.2 L303.7,1240.2 L307.3,1155.7 L311.0,1155.7 L314.7,1240.2 L318.4,1240.2 L322.1,1173.4 L325.8,1173.4 L329.5,1240.2 L333.1,1240.2 L336.8,1240.2 L340.5,1240.2 L344.2,1240.2 L347.9,1240.2 L351.6,1240.2 L355.3,1240.2 L359.0,1237.2 L362.6,1237.2 L366.3,1240.2 L370.0,1240.2 L373.7,1240.2 L377.4,1240.2 L381.1,1240.2 L384.8,1240.2 L388.4,1225.8 L392.1,1225.8 L395.8,1240.2 L399.5,1240.2 L403.2,1189.5 L406.9,1189.5 L410.6,1240.2 L414.2,1240.2 L417.9,1240.2 L421.6,1240.2 L425.3,1218.4 L429.0,1218.4 L432.7,1227.7 L436.4,1227.7 L440.0,1240.2 L443.7,1240.2 L447.4,1042.3 L451.1,1042.3 L454.8,1069.0 L458.5,1069.0 L462.2,1178.9 L465.9,1178.9 L469.5,1189.8 L473.2,1189.8 L476.9,1240.2 L480.6,1240.2 L484.3,1240.2 L488.0,1240.2 L491.7,1240.2 L495.3,1240.2 L499.0,1196.6 L502.7,1196.6 L506.4,1240.2 L510.1,1240.2 L513.8,1240.2 L517.5,1240.2 L521.1,1240.2 L524.8,1240.2 L528.5,1210.8 L532.2,1210.8 L535.9,1240.2 L539.6,1240.2 L543.3,1240.2 L547.0,1240.2 L550.6,1192.2 L554.3,1192.2 L558.0,1240.2 L561.7,1240.2 L565.4,1240.2 L569.1,1240.2 L572.8,1240.2 L576.4,1240.2 L580.1,1184.9 L583.8,1184.9 L587.5,1240.2 L591.2,1240.2 L594.9,1240.2 L598.6,1240.2 L602.2,1240.2 L605.9,1240.2 L609.6,1240.2 L613.3,1240.2 L617.0,1050.8 L620.7,1050.8 L624.4,1240.2 L628.0,1240.2 L631.7,1229.3 L635.4,1229.3 L639.1,1240.2 L642.8,1240.2 L646.5,981.2 L650.2,981.2 L653.9,1240.2 L657.5,1240.2 L661.2,1225.8 L664.9,1225.8 L668.6,1221.7 L672.3,1221.7 L676.0,1240.2 L679.7,1240.2 L683.3,1240.2 L687.0,1240.2 L690.7,1240.2 L694.4,1240.2 L698.1,1150.0 L701.8,1150.0 L705.5,1147.3 L709.1,1147.3 L712.8,1240.2 L716.5,1240.2 L720.2,1240.2 L723.9,1240.2 L727.6,1240.2 L731.3,1240.2 L734.9,1240.2 L738.6,1240.2 L742.3,1240.2 L746.0,1240.2 L749.7,1240.2 L753.4,1240.2 L757.1,1240.2 L760.8,1240.2 L764.4,1216.2 L768.1,1216.2 L771.8,1240.2 L775.5,1240.2 L779.2,1240.2 L782.9,1240.2 L786.6,1240.2 L790.2,1240.2 L793.9,1195.0 L797.6,1195.0 L801.3,1240.2 L805.0,1240.2 L808.7,1228.0 L812.4,1228.0 L816.0,1240.2 L819.7,1240.2 L823.4,1240.2 L827.1,1240.2 L830.8,1240.2 L834.5,1240.2 L838.2,1240.2 L841.9,1240.2 L845.5,1193.1 L849.2,1193.1 L852.9,1240.2 L856.6,1240.2 L860.3,1240.2 L864.0,1240.2 L867.7,1094.1 L871.3,1094.1 L875.0,1126.3 L878.7,1126.3 L882.4,1195.2 L886.1,1195.2 L889.8,1199.9 L893.5,1199.9 L897.1,1232.6 L900.8,1232.6 L904.5,1229.3 L908.2,1229.3 L911.9,1240.2 L915.6,1240.2 L919.3,1144.0 L922.9,1144.0 L926.6,1240.2 L930.3,1240.2 L934.0,1240.2 L937.7,1240.2 L941.4,1240.2 L945.1,1240.2 L948.8,1240.2 L952.4,1240.2 L956.1,1240.2 L959.8,1240.2 L963.5,1186.8 L967.2,1186.8 L970.9,1240.2 L974.6,1240.2 L978.2,1106.6 L981.9,1106.6 L985.6,1047.2 L989.3,1047.2 L993.0,1240.2 L996.7,1240.2" fill="none" stroke="#89b174" stroke-width="2" stroke-linejoin="round"/>
<path d="M112.0,1224.4 L115.7,1240.2 L119.3,1240.2 L123.0,1208.1 L126.7,1208.1 L130.4,1184.9 L134.1,1184.9 L137.8,1240.2 L141.5,1240.2 L145.1,1240.2 L148.8,1240.2 L152.5,1240.2 L156.2,1240.2 L159.9,1240.2 L163.6,1240.2 L167.3,1208.9 L171.0,1208.9 L174.6,1240.2 L178.3,1240.2 L182.0,1234.0 L185.7,1234.0 L189.4,1240.2 L193.1,1240.2 L196.8,1240.2 L200.4,1240.2 L204.1,1228.0 L207.8,1228.0 L211.5,1196.6 L215.2,1196.6 L218.9,1240.2 L222.6,1240.2 L226.2,1190.9 L229.9,1190.9 L233.6,950.4 L237.3,950.4 L241.0,1240.2 L244.7,1240.2 L248.4,1240.2 L252.1,1240.2 L255.7,1240.2 L259.4,1240.2 L263.1,921.3 L266.8,921.3 L270.5,1240.2 L274.2,1240.2 L277.9,1240.2 L281.5,1240.2 L285.2,1240.2 L288.9,1240.2 L292.6,1240.2 L296.3,1240.2 L300.0,1240.2 L303.7,1240.2 L307.3,1155.7 L311.0,1155.7 L314.7,1240.2 L318.4,1240.2 L322.1,1173.4 L325.8,1173.4 L329.5,1240.2 L333.1,1240.2 L336.8,1240.2 L340.5,1240.2 L344.2,1240.2 L347.9,1240.2 L351.6,1240.2 L355.3,1240.2 L359.0,1237.2 L362.6,1237.2 L366.3,1240.2 L370.0,1240.2 L373.7,1240.2 L377.4,1240.2 L381.1,1240.2 L384.8,1240.2 L388.4,1225.8 L392.1,1225.8 L395.8,1240.2 L399.5,1240.2 L403.2,1199.9 L406.9,1199.9 L410.6,1240.2 L414.2,1240.2 L417.9,1240.2 L421.6,1240.2 L425.3,1218.4 L429.0,1218.4 L432.7,1227.7 L436.4,1227.7 L440.0,1240.2 L443.7,1240.2 L447.4,1042.3 L451.1,1042.3 L454.8,1218.4 L458.5,1218.4 L462.2,1178.9 L465.9,1178.9 L469.5,1189.8 L473.2,1189.8 L476.9,1240.2 L480.6,1240.2 L484.3,1240.2 L488.0,1240.2 L491.7,1240.2 L495.3,1240.2 L499.0,1196.6 L502.7,1196.6 L506.4,1240.2 L510.1,1240.2 L513.8,1240.2 L517.5,1240.2 L521.1,1240.2 L524.8,1240.2 L528.5,1210.8 L532.2,1210.8 L535.9,1240.2 L539.6,1240.2 L543.3,1240.2 L547.0,1240.2 L550.6,1224.4 L554.3,1224.4 L558.0,1240.2 L561.7,1240.2 L565.4,1240.2 L569.1,1240.2 L572.8,1240.2 L576.4,1240.2 L580.1,1184.9 L583.8,1184.9 L587.5,1240.2 L591.2,1240.2 L594.9,1240.2 L598.6,1240.2 L602.2,1240.2 L605.9,1240.2 L609.6,1240.2 L613.3,1240.2 L617.0,1050.8 L620.7,1050.8 L624.4,1240.2 L628.0,1240.2 L631.7,1229.3 L635.4,1229.3 L639.1,1240.2 L642.8,1240.2 L646.5,1209.4 L650.2,1209.4 L653.9,1240.2 L657.5,1240.2 L661.2,1225.8 L664.9,1225.8 L668.6,1221.7 L672.3,1221.7 L676.0,1240.2 L679.7,1240.2 L683.3,1240.2 L687.0,1240.2 L690.7,1240.2 L694.4,1240.2 L698.1,1150.0 L701.8,1150.0 L705.5,1147.3 L709.1,1147.3 L712.8,1240.2 L716.5,1240.2 L720.2,1240.2 L723.9,1240.2 L727.6,1240.2 L731.3,1240.2 L734.9,1240.2 L738.6,1240.2 L742.3,1240.2 L746.0,1240.2 L749.7,1240.2 L753.4,1240.2 L757.1,1240.2 L760.8,1240.2 L764.4,1216.2 L768.1,1216.2 L771.8,1240.2 L775.5,1240.2 L779.2,1240.2 L782.9,1240.2 L786.6,1240.2 L790.2,1240.2 L793.9,1195.0 L797.6,1195.0 L801.3,1240.2 L805.0,1240.2 L808.7,1228.0 L812.4,1228.0 L816.0,1240.2 L819.7,1240.2 L823.4,1240.2 L827.1,1240.2 L830.8,1240.2 L834.5,1240.2 L838.2,1240.2 L841.9,1240.2 L845.5,1193.1 L849.2,1193.1 L852.9,1240.2 L856.6,1240.2 L860.3,1240.2 L864.0,1240.2 L867.7,1094.1 L871.3,1094.1 L875.0,1126.3 L878.7,1126.3 L882.4,1195.2 L886.1,1195.2 L889.8,1199.9 L893.5,1199.9 L897.1,1232.6 L900.8,1232.6 L904.5,1229.3 L908.2,1229.3 L911.9,1240.2 L915.6,1240.2 L919.3,1144.0 L922.9,1144.0 L926.6,1240.2 L930.3,1240.2 L934.0,1240.2 L937.7,1240.2 L941.4,1240.2 L945.1,1240.2 L948.8,1240.2 L952.4,1240.2 L956.1,1240.2 L959.8,1240.2 L963.5,1186.8 L967.2,1186.8 L970.9,1240.2 L974.6,1240.2 L978.2,1106.6 L981.9,1106.6 L985.6,1047.2 L989.3,1047.2 L993.0,1240.2 L996.7,1240.2 L996.7,1240 L112.0,1240 Z" fill="#EAB839" fill-opacity="0.1" stroke="none"/>
<path d="M112.0,1224.4 L115.7,1240.2 L119.3,1240.2 L123.0,1208.1 L126.7,1208.1 L130.4,1184.9 L134.1,1184.9 L137.8,1240.2 L141.5,1240.2 L145.1,1240.2 L148.8,1240.2 L152.5,1240.2 L156.2,1240.2 L159.9,1240.2 L163.6,1240.2 L167.3,1208.9 L171.0,1208.9 L174.6,1240.2 L178.3,1240.2 L182.0,1234.0 L185.7,1234.0 L189.4,1240.2 L193.1,1240.2 L196.8,1240.2 L200.4,1240.2 L204.1,1228.0 L207.8,1228.0 L211.5,1196.6 L215.2,1196.6 L218.9,1240.2 L222.6,1240.2 L226.2,1190.9 L229.9,1190.9 L233.6,950.4 L237.3,950.4 L241.0,1240.2 L244.7,1240.2 L248.4,1240.2 L252.1,1240.2 L255.7,1240.2 L259.4,1240.2 L263.1,921.3 L266.8,921.3 L270.5,1240.2 L274.2,1240.2 L277.9,1240.2 L281.5,1240.2 L285.2,1240.2 L288.9,1240.2 L292.6,1240.2 L296.3,1240.2 L300.0,1240.2 L303.7,1240.2 L307.3,1155.7 L311.0,1155.7 L314.7,1240.2 L318.4,1240.2 L322.1,1173.4 L325.8,1173.4 L329.5,1240.2 L333.1,1240.2 L336.8,1240.2 L340.5,1240.2 L344.2,1240.2 L347.9,1240.2 L351.6,1240.2 L355.3,1240.2 L359.0,1237.2 L362.6,1237.2 L366.3,1240.2 L370.0,1240.2 L373.7,1240.2 L377.4,1240.2 L381.1,1240.2 L384.8,1240.2 L388.4,1225.8 L392.1,1225.8 L395.8,1240.2 L399.5,1240.2 L403.2,1199.9 L406.9,1199.9 L410.6,1240.2 L414.2,1240.2 L417.9,1240.2 L421.6,1240.2 L425.3,1218.4 L429.0,1218.4 L432.7,1227.7 L436.4,1227.7 L440.0,1240.2 L443.7,1240.2 L447.4,1042.3 L451.1,1042.3 L454.8,1218.4 L458.5,1218.4 L462.2,1178.9 L465.9,1178.9 L469.5,1189.8 L473.2,1189.8 L476.9,1240.2 L480.6,1240.2 L484.3,1240.2 L488.0,1240.2 L491.7,1240.2 L495.3,1240.2 L499.0,1196.6 L502.7,1196.6 L506.4,1240.2 L510.1,1240.2 L513.8,1240.2 L517.5,1240.2 L521.1,1240.2 L524.8,1240.2 L528.5,1210.8 L532.2,1210.8 L535.9,1240.2 L539.6,1240.2 L543.3,1240.2 L547.0,1240.2 L550.6,1224.4 L554.3,1224.4 L558.0,1240.2 L561.7,1240.2 L565.4,1240.2 L569.1,1240.2 L572.8,1240.2 L576.4,1240.2 L580.1,1184.9 L583.8,1184.9 L587.5,1240.2 L591.2,1240.2 L594.9,1240.2 L598.6,1240.2 L602.2,1240.2 L605.9,1240.2 L609.6,1240.2 L613.3,1240.2 L617.0,1050.8 L620.7,1050.8 L624.4,1240.2 L628.0,1240.2 L631.7,1229.3 L635.4,1229.3 L639.1,1240.2 L642.8,1240.2 L646.5,1209.4 L650.2,1209.4 L653.9,1240.2 L657.5,1240.2 L661.2,1225.8 L664.9,1225.8 L668.6,1221.7 L672.3,1221.7 L676.0,1240.2 L679.7,1240.2 L683.3,1240.2 L687.0,1240.2 L690.7,1240.2 L694.4,1240.2 L698.1,1150.0 L701.8,1150.0 L705.5,1147.3 L709.1,1147.3 L712.8,1240.2 L716.5,1240.2 L720.2,1240.2 L723.9,1240.2 L727.6,1240.2 L731.3,1240.2 L734.9,1240.2 L738.6,1240.2 L742.3,1240.2 L746.0,1240.2 L749.7,1240.2 L753.4,1240.2 L757.1,1240.2 L760.8,1240.2 L764.4,1216.2 L768.1,1216.2 L771.8,1240.2 L775.5,1240.2 L779.2,1240.2 L782.9,1240.2 L786.6,1240.2 L790.2,1240.2 L793.9,1195.0 L797.6,1195.0 L801.3,1240.2 L805.0,1240.2 L808.7,1228.0 L812.4,1228.0 L816.0,1240.2 L819.7,1240.2 L823.4,1240.2 L827.1,1240.2 L830.8,1240.2 L834.5,1240.2 L838.2,1240.2 L841.9,1240.2 L845.5,1193.1 L849.2,1193.1 L852.9,1240.2 L856.6,1240.2 L860.3,1240.2 L864.0,1240.2 L867.7,1094.1 L871.3,1094.1 L875.0,1126.3 L878.7,1126.3 L882.4,1195.2 L886.1,1195.2 L889.8,1199.9 L893.5,1199.9 L897.1,1232.6 L900.8,1232.6 L904.5,1229.3 L908.2,1229.3 L911.9,1240.2 L915.6,1240.2 L919.3,1144.0 L922.9,1144.0 L926.6,1240.2 L930.3,1240.2 L934.0,1240.2 L937.7,1240.2 L941.4,1240.2 L945.1,1240.2 L948.8,1240.2 L952.4,1240.2 L956.1,1240.2 L959.8,1240.2 L963.5,1186.8 L967.2,1186.8 L970.9,1240.2 L974.6,1240.2 L978.2,1106.6 L981.9,1106.6 L985.6,1047.2 L989.3,1047.2 L993.0,1240.2 L996.7,1240.2" fill="none" stroke="#e2ba53" stroke-width="2" stroke-linejoin="round"/>
<path d="M112.0,1224.4 L115.7,1240.2 L119.3,1240.2 L123.0,1208.1 L126.7,1208.1 L130.4,1184.9 L134.1,1184.9 L137.8,1240.2 L141.5,1240.2 L145.1,1240.2 L148.8,1240.2 L152.5,1240.2 L156.2,1240.2 L159.9,1240.2 L163.6,1240.2 L167.3,1208.9 L171.0,1208.9 L174.6,1240.2 L178.3,1240.2 L182.0,1234.0 L185.7,1234.0 L189.4,1240.2 L193.1,1240.2 L196.8,1240.2 L200.4,1240.2 L204.1,1228.0 L207.8,1228.0 L211.5,1196.6 L215.2,1196.6 L218.9,1240.2 L222.6,1240.2 L226.2,1190.9 L229.9,1190.9 L233.6,950.4 L237.3,950.4 L241.0,1240.2 L244.7,1240.2 L248.4,1240.2 L252.1,1240.2 L255.7,1240.2 L259.4,1240.2 L263.1,921.3 L266.8,921.3 L270.5,1240.2 L274.2,1240.2 L277.9,1240.2 L281.5,1240.2 L285.2,1240.2 L288.9,1240.2 L292.6,1240.2 L296.3,1240.2 L300.0,1240.2 L303.7,1240.2 L307.3,1155.7 L311.0,1155.7 L314.7,1240.2 L318.4,1240.2 L322.1,1173.4 L325.8,1173.4 L329.5,1240.2 L333.1,1240.2 L336.8,1240.2 L340.5,1240.2 L344.2,1240.2 L347.9,1240.2 L351.6,1240.2 L355.3,1240.2 L359.0,1237.2 L362.6,1237.2 L366.3,1240.2 L370.0,1240.2 L373.7,1240.2 L377.4,1240.2 L381.1,1240.2 L384.8,1240.2 L388.4,1225.8 L392.1,1225.8 L395.8,1240.2 L399.5,1240.2 L403.2,1189.5 L406.9,1189.5 L410.6,1240.2 L414.2,1240.2 L417.9,1240.2 L421.6,1240.2 L425.3,1218.4 L429.0,1218.4 L432.7,1227.7 L436.4,1227.7 L440.0,1240.2 L443.7,1240.2 L447.4,1042.3 L451.1,1042.3 L454.8,1069.0 L458.5,1069.0 L462.2,1178.9 L465.9,1178.9 L469.5,1189.8 L473.2,1189.8 L476.9,1240.2 L480.6,1240.2 L484.3,1240.2 L488.0,1240.2 L491.7,1240.2 L495.3,1240.2 L499.0,1196.6 L502.7,1196.6 L506.4,1240.2 L510.1,1240.2 L513.8,1240.2 L517.5,1240.2 L521.1,1240.2 L524.8,1240.2 L528.5,1210.8 L532.2,1210.8 L535.9,1240.2 L539.6,1240.2 L543.3,1240.2 L547.0,1240.2 L550.6,1192.2 L554.3,1192.2 L558.0,1240.2 L561.7,1240.2 L565.4,1240.2 L569.1,1240.2 L572.8,1240.2 L576.4,1240.2 L580.1,1184.9 L583.8,1184.9 L587.5,1240.2 L591.2,1240.2 L594.9,1240.2 L598.6,1240.2 L602.2,1240.2 L605.9,1240.2 L609.6,1240.2 L613.3,1240.2 L617.0,1050.8 L620.7,1050.8 L624.4,1240.2 L628.0,1240.2 L631.7,1229.3 L635.4,1229.3 L639.1,1240.2 L642.8,1240.2 L646.5,981.2 L650.2,981.2 L653.9,1240.2 L657.5,1240.2 L661.2,1225.8 L664.9,1225.8 L668.6,1221.7 L672.3,1221.7 L676.0,1240.2 L679.7,1240.2 L683.3,1240.2 L687.0,1240.2 L690.7,1240.2 L694.4,1240.2 L698.1,1150.0 L701.8,1150.0 L705.5,1147.3 L709.1,1147.3 L712.8,1240.2 L716.5,1240.2 L720.2,1240.2 L723.9,1240.2 L727.6,1240.2 L731.3,1240.2 L734.9,1240.2 L738.6,1240.2 L742.3,1240.2 L746.0,1240.2 L749.7,1240.2 L753.4,1240.2 L757.1,1240.2 L760.8,1240.2 L764.4,1216.2 L768.1,1216.2 L771.8,1240.2 L775.5,1240.2 L779.2,1240.2 L782.9,1240.2 L786.6,1240.2 L790.2,1240.2 L793.9,1195.0 L797.6,1195.0 L801.3,1240.2 L805.0,1240.2 L808.7,1228.0 L812.4,1228.0 L816.0,1240.2 L819.7,1240.2 L823.4,1240.2 L827.1,1240.2 L830.8,1240.2 L834.5,1240.2 L838.2,1240.2 L841.9,1240.2 L845.5,1193.1 L849.2,1193.1 L852.9,1240.2 L856.6,1240.2 L860.3,1240.2 L864.0,1240.2 L867.7,1094.1 L871.3,1094.1 L875.0,1126.3 L878.7,1126.3 L882.4,1195.2 L886.1,1195.2 L889.8,1199.9 L893.5,1199.9 L897.1,1232.6 L900.8,1232.6 L904.5,1229.3 L908.2,1229.3 L911.9,1240.2 L915.6,1240.2 L919.3,1144.0 L922.9,1144.0 L926.6,1240.2 L930.3,1240.2 L934.0,1240.2 L937.7,1240.2 L941.4,1240.2 L945.1,1240.2 L948.8,1240.2 L952.4,1240.2 L956.1,1240.2 L959.8,1240.2 L963.5,1186.8 L967.2,1186.8 L970.9,1240.2 L974.6,1240.2 L978.2,1106.6 L981.9,1106.6 L985.6,1047.2 L989.3,1047.2 L993.0,1240.2 L996.7,1240.2 L996.7,1240 L112.0,1240 Z" fill="#6ED0E0" fill-opacity="0.1" stroke="none"/>
<path d="M112.0,1224.4 L115.7,1240.2 L119.3,1240.2 L123.0,1208.1 L126.7,1208.1 L130.4,1184.9 L134.1,1184.9 L137.8,1240.2 L141.5,1240.2 L145.1,1240.2 L148.8,1240.2 L152.5,1240.2 L156.2,1240.2 L159.9,1240.2 L163.6,1240.2 L167.3,1208.9 L171.0,1208.9 L174.6,1240.2 L178.3,1240.2 L182.0,1234.0 L185.7,1234.0 L189.4,1240.2 L193.1,1240.2 L196.8,1240.2 L200.4,1240.2 L204.1,1228.0 L207.8,1228.0 L211.5,1196.6 L215.2,1196.6 L218.9,1240.2 L222.6,1240.2 L226.2,1190.9 L229.9,1190.9 L233.6,950.4 L237.3,950.4 L241.0,1240.2 L244.7,1240.2 L248.4,1240.2 L252.1,1240.2 L255.7,1240.2 L259.4,1240.2 L263.1,921.3 L266.8,921.3 L270.5,1240.2 L274.2,1240.2 L277.9,1240.2 L281.5,1240.2 L285.2,1240.2 L288.9,1240.2 L292.6,1240.2 L296.3,1240.2 L300.0,1240.2 L303.7,1240.2 L307.3,1155.7 L311.0,1155.7 L314.7,1240.2 L318.4,1240.2 L322.1,1173.4 L325.8,1173.4 L329.5,1240.2 L333.1,1240.2 L336.8,1240.2 L340.5,1240.2 L344.2,1240.2 L347.9,1240.2 L351.6,1240.2 L355.3,1240.2 L359.0,1237.2 L362.6,1237.2 L366.3,1240.2 L370.0,1240.2 L373.7,1240.2 L377.4,1240.2 L381.1,1240.2 L384.8,1240.2 L388.4,1225.8 L392.1,1225.8 L395.8,1240.2 L399.5,1240.2 L403.2,1189.5 L406.9,1189.5 L410.6,1240.2 L414.2,1240.2 L417.9,1240.2 L421.6,1240.2 L425.3,1218.4 L429.0,1218.4 L432.7,1227.7 L436.4,1227.7 L440.0,1240.2 L443.7,1240.2 L447.4,1042.3 L451.1,1042.3 L454.8,1069.0 L458.5,1069.0 L462.2,1178.9 L465.9,1178.9 L469.5,1189.8 L473.2,1189.8 L476.9,1240.2 L480.6,1240.2 L484.3,1240.2 L488.0,1240.2 L491.7,1240.2 L495.3,1240.2 L499.0,1196.6 L502.7,1196.6 L506.4,1240.2 L510.1,1240.2 L513.8,1240.2 L517.5,1240.2 L521.1,1240.2 L524.8,1240.2 L528.5,1210.8 L532.2,1210.8 L535.9,1240.2 L539.6,1240.2 L543.3,1240.2 L547.0,1240.2 L550.6,1192.2 L554.3,1192.2 L558.0,1240.2 L561.7,1240.2 L565.4,1240.2 L569.1,1240.2 L572.8,1240.2 L576.4,1240.2 L580.1,1184.9 L583.8,1184.9 L587.5,1240.2 L591.2,1240.2 L594.9,1240.2 L598.6,1240.2 L602.2,1240.2 L605.9,1240.2 L609.6,1240.2 L613.3,1240.2 L617.0,1050.8 L620.7,1050.8 L624.4,1240.2 L628.0,1240.2 L631.7,1229.3 L635.4,1229.3 L639.1,1240.2 L642.8,1240.2 L646.5,981.2 L650.2,981.2 L653.9,1240.2 L657.5,1240.2 L661.2,1225.8 L664.9,1225.8 L668.6,1221.7 L672.3,1221.7 L676.0,1240.2 L679.7,1240.2 L683.3,1240.2 L687.0,1240.2 L690.7,1240.2 L694.4,1240.2 L698.1,1150.0 L701.8,1150.0 L705.5,1147.3 L709.1,1147.3 L712.8,1240.2 L716.5,1240.2 L720.2,1240.2 L723.9,1240.2 L727.6,1240.2 L731.3,1240.2 L734.9,1240.2 L738.6,1240.2 L742.3,1240.2 L746.0,1240.2 L749.7,1240.2 L753.4,1240.2 L757.1,1240.2 L760.8,1240.2 L764.4,1216.2 L768.1,1216.2 L771.8,1240.2 L775.5,1240.2 L779.2,1240.2 L782.9,1240.2 L786.6,1240.2 L790.2,1240.2 L793.9,1195.0 L797.6,1195.0 L801.3,1240.2 L805.0,1240.2 L808.7,1228.0 L812.4,1228.0 L816.0,1240.2 L819.7,1240.2 L823.4,1240.2 L827.1,1240.2 L830.8,1240.2 L834.5,1240.2 L838.2,1240.2 L841.9,1240.2 L845.5,1193.1 L849.2,1193.1 L852.9,1240.2 L856.6,1240.2 L860.3,1240.2 L864.0,1240.2 L867.7,1094.1 L871.3,1094.1 L875.0,1126.3 L878.7,1126.3 L882.4,1195.2 L886.1,1195.2 L889.8,1199.9 L893.5,1199.9 L897.1,1232.6 L900.8,1232.6 L904.5,1229.3 L908.2,1229.3 L911.9,1240.2 L915.6,1240.2 L919.3,1144.0 L922.9,1144.0 L926.6,1240.2 L930.3,1240.2 L934.0,1240.2 L937.7,1240.2 L941.4,1240.2 L945.1,1240.2 L948.8,1240.2 L952.4,1240.2 L956.1,1240.2 L959.8,1240.2 L963.5,1186.8 L967.2,1186.8 L970.9,1240.2 L974.6,1240.2 L978.2,1106.6 L981.9,1106.6 L985.6,1047.2 L989.3,1047.2 L993.0,1240.2 L996.7,1240.2" fill="none" stroke="#86cede" stroke-width="2" stroke-linejoin="round"/>
<path d="M112.0,1224.4 L115.7,1240.2 L119.3,1240.2 L123.0,1208.1 L126.7,1208.1 L130.4,1184.9 L134.1,1184.9 L137.8,1240.2 L141.5,1240.2 L145.1,1240.2 L148.8,1240.2 L152.5,1240.2 L156.2,1240.2 L159.9,1240.2 L163.6,1240.2 L167.3,1208.9 L171.0,1208.9 L174.6,1240.2 L178.3,1240.2 L182.0,1234.0 L185.7,1234.0 L189.4,1240.2 L193.1,1240.2 L196.8,1240.2 L200.4,1240.2 L204.1,1228.0 L207.8,1228.0 L211.5,1196.6 L215.2,1196.6 L218.9,1240.2 L222.6,1240.2 L226.2,1190.9 L229.9,1190.9 L233.6,950.4 L237.3,950.4 L241.0,1240.2 L244.7,1240.2 L248.4,1240.2 L252.1,1240.2 L255.7,1240.2 L259.4,1240.2 L263.1,921.3 L266.8,921.3 L270.5,1240.2 L274.2,1240.2 L277.9,1240.2 L281.5,1240.2 L285.2,1240.2 L288.9,1240.2 L292.6,1240.2 L296.3,1240.2 L300.0,1240.2 L303.7,1240.2 L307.3,1155.7 L311.0,1155.7 L314.7,1240.2 L318.4,1240.2 L322.1,1173.4 L325.8,1173.4 L329.5,1240.2 L333.1,1240.2 L336.8,1240.2 L340.5,1240.2 L344.2,1240.2 L347.9,1240.2 L351.6,1240.2 L355.3,1240.2 L359.0,1237.2 L362.6,1237.2 L366.3,1240.2 L370.0,1240.2 L373.7,1240.2 L377.4,1240.2 L381.1,1240.2 L384.8,1240.2 L388.4,1225.8 L392.1,1225.8 L395.8,1240.2 L399.5,1240.2 L403.2,1189.5 L406.9,1189.5 L410.6,1240.2 L414.2,1240.2 L417.9,1240.2 L421.6,1240.2 L425.3,1218.4 L429.0,1218.4 L432.7,1227.7 L436.4,1227.7 L440.0,1240.2 L443.7,1240.2 L447.4,1042.3 L451.1,1042.3 L454.8,1069.0 L458.5,1069.0 L462.2,1178.9 L465.9,1178.9 L469.5,1189.8 L473.2,1189.8 L476.9,1240.2 L480.6,1240.2 L484.3,1240.2 L488.0,1240.2 L491.7,1240.2 L495.3,1240.2 L499.0,1196.6 L502.7,1196.6 L506.4,1240.2 L510.1,1240.2 L513.8,1240.2 L517.5,1240.2 L521.1,1240.2 L524.8,1240.2 L528.5,1210.8 L532.2,1210.8 L535.9,1240.2 L539.6,1240.2 L543.3,1240.2 L547.0,1240.2 L550.6,1192.2 L554.3,1192.2 L558.0,1240.2 L561.7,1240.2 L565.4,1240.2 L569.1,1240.2 L572.8,1240.2 L576.4,1240.2 L580.1,1184.9 L583.8,1184.9 L587.5,1240.2 L591.2,1240.2 L594.9,1240.2 L598.6,1240.2 L602.2,1240.2 L605.9,1240.2 L609.6,1240.2 L613.3,1240.2 L617.0,1050.8 L620.7,1050.8 L624.4,1240.2 L628.0,1240.2 L631.7,1229.3 L635.4,1229.3 L639.1,1240.2 L642.8,1240.2 L646.5,981.2 L650.2,981.2 L653.9,1240.2 L657.5,1240.2 L661.2,1225.8 L664.9,1225.8 L668.6,1221.7 L672.3,1221.7 L676.0,1240.2 L679.7,1240.2 L683.3,1240.2 L687.0,1240.2 L690.7,1240.2 L694.4,1240.2 L698.1,1150.0 L701.8,1150.0 L705.5,1147.3 L709.1,1147.3 L712.8,1240.2 L716.5,1240.2 L720.2,1240.2 L723.9,1240.2 L727.6,1240.2 L731.3,1240.2 L734.9,1240.2 L738.6,1240.2 L742.3,1240.2 L746.0,1240.2 L749.7,1240.2 L753.4,1240.2 L757.1,1240.2 L760.8,1240.2 L764.4,1216.2 L768.1,1216.2 L771.8,1240.2 L775.5,1240.2 L779.2,1240.2 L782.9,1240.2 L786.6,1240.2 L790.2,1240.2 L793.9,1195.0 L797.6,1195.0 L801.3,1240.2 L805.0,1240.2 L808.7,1228.0 L812.4,1228.0 L816.0,1240.2 L819.7,1240.2 L823.4,1240.2 L827.1,1240.2 L830.8,1240.2 L834.5,1240.2 L838.2,1240.2 L841.9,1240.2 L845.5,1193.1 L849.2,1193.1 L852.9,1240.2 L856.6,1240.2 L860.3,1240.2 L864.0,1240.2 L867.7,1094.1 L871.3,1094.1 L875.0,1126.3 L878.7,1126.3 L882.4,1195.2 L886.1,1195.2 L889.8,1199.9 L893.5,1199.9 L897.1,1232.6 L900.8,1232.6 L904.5,1229.3 L908.2,1229.3 L911.9,1240.2 L915.6,1240.2 L919.3,1144.0 L922.9,1144.0 L926.6,1240.2 L930.3,1240.2 L934.0,1240.2 L937.7,1240.2 L941.4,1240.2 L945.1,1240.2 L948.8,1240.2 L952.4,1240.2 L956.1,1240.2 L959.8,1240.2 L963.5,1186.8 L967.2,1186.8 L970.9,1240.2 L974.6,1240.2 L978.2,1106.6 L981.9,1106.6 L985.6,1047.2 L989.3,1047.2 L993.0,1240.2 L996.7,1240.2 L996.7,1240 L112.0,1240 Z" fill="#EF843C" fill-opacity="0.1" stroke="none"/>
<path d="M112.0,1224.4 L115.7,1240.2 L119.3,1240.2 L123.0,1208.1 L126.7,1208.1 L130.4,1184.9 L134.1,1184.9 L137.8,1240.2 L141.5,1240.2 L145.1,1240.2 L148.8,1240.2 L152.5,1240.2 L156.2,1240.2 L159.9,1240.2 L163.6,1240.2 L167.3,1208.9 L171.0,1208.9 L174.6,1240.2 L178.3,1240.2 L182.0,1234.0 L185.7,1234.0 L189.4,1240.2 L193.1,1240.2 L196.8,1240.2 L200.4,1240.2 L204.1,1228.0 L207.8,1228.0 L211.5,1196.6 L215.2,1196.6 L218.9,1240.2 L222.6,1240.2 L226.2,1190.9 L229.9,1190.9 L233.6,950.4 L237.3,950.4 L241.0,1240.2 L244.7,1240.2 L248.4,1240.2 L252.1,1240.2 L255.7,1240.2 L259.4,1240.2 L263.1,921.3 L266.8,921.3 L270.5,1240.2 L274.2,1240.2 L277.9,1240.2 L281.5,1240.2 L285.2,1240.2 L288.9,1240.2 L292.6,1240.2 L296.3,1240.2 L300.0,1240.2 L303.7,1240.2 L307.3,1155.7 L311.0,1155.7 L314.7,1240.2 L318.4,1240.2 L322.1,1173.4 L325.8,1173.4 L329.5,1240.2 L333.1,1240.2 L336.8,1240.2 L340.5,1240.2 L344.2,1240.2 L347.9,1240.2 L351.6,1240.2 L355.3,1240.2 L359.0,1237.2 L362.6,1237.2 L366.3,1240.2 L370.0,1240.2 L373.7,1240.2 L377.4,1240.2 L381.1,1240.2 L384.8,1240.2 L388.4,1225.8 L392.1,1225.8 L395.8,1240.2 L399.5,1240.2 L403.2,1189.5 L406.9,1189.5 L410.6,1240.2 L414.2,1240.2 L417.9,1240.2 L421.6,1240.2 L425.3,1218.4 L429.0,1218.4 L432.7,1227.7 L436.4,1227.7 L440.0,1240.2 L443.7,1240.2 L447.4,1042.3 L451.1,1042.3 L454.8,1069.0 L458.5,1069.0 L462.2,1178.9 L465.9,1178.9 L469.5,1189.8 L473.2,1189.8 L476.9,1240.2 L480.6,1240.2 L484.3,1240.2 L488.0,1240.2 L491.7,1240.2 L495.3,1240.2 L499.0,1196.6 L502.7,1196.6 L506.4,1240.2 L510.1,1240.2 L513.8,1240.2 L517.5,1240.2 L521.1,1240.2 L524.8,1240.2 L528.5,1210.8 L532.2,1210.8 L535.9,1240.2 L539.6,1240.2 L543.3,1240.2 L547.0,1240.2 L550.6,1192.2 L554.3,1192.2 L558.0,1240.2 L561.7,1240.2 L565.4,1240.2 L569.1,1240.2 L572.8,1240.2 L576.4,1240.2 L580.1,1184.9 L583.8,1184.9 L587.5,1240.2 L591.2,1240.2 L594.9,1240.2 L598.6,1240.2 L602.2,1240.2 L605.9,1240.2 L609.6,1240.2 L613.3,1240.2 L617.0,1050.8 L620.7,1050.8 L624.4,1240.2 L628.0,1240.2 L631.7,1229.3 L635.4,1229.3 L639.1,1240.2 L642.8,1240.2 L646.5,981.2 L650.2,981.2 L653.9,1240.2 L657.5,1240.2 L661.2,1225.8 L664.9,1225.8 L668.6,1221.7 L672.3,1221.7 L676.0,1240.2 L679.7,1240.2 L683.3,1240.2 L687.0,1240.2 L690.7,1240.2 L694.4,1240.2 L698.1,1150.0 L701.8,1150.0 L705.5,1147.3 L709.1,1147.3 L712.8,1240.2 L716.5,1240.2 L720.2,1240.2 L723.9,1240.2 L727.6,1240.2 L731.3,1240.2 L734.9,1240.2 L738.6,1240.2 L742.3,1240.2 L746.0,1240.2 L749.7,1240.2 L753.4,1240.2 L757.1,1240.2 L760.8,1240.2 L764.4,1216.2 L768.1,1216.2 L771.8,1240.2 L775.5,1240.2 L779.2,1240.2 L782.9,1240.2 L786.6,1240.2 L790.2,1240.2 L793.9,1195.0 L797.6,1195.0 L801.3,1240.2 L805.0,1240.2 L808.7,1228.0 L812.4,1228.0 L816.0,1240.2 L819.7,1240.2 L823.4,1240.2 L827.1,1240.2 L830.8,1240.2 L834.5,1240.2 L838.2,1240.2 L841.9,1240.2 L845.5,1193.1 L849.2,1193.1 L852.9,1240.2 L856.6,1240.2 L860.3,1240.2 L864.0,1240.2 L867.7,1094.1 L871.3,1094.1 L875.0,1126.3 L878.7,1126.3 L882.4,1195.2 L886.1,1195.2 L889.8,1199.9 L893.5,1199.9 L897.1,1232.6 L900.8,1232.6 L904.5,1229.3 L908.2,1229.3 L911.9,1240.2 L915.6,1240.2 L919.3,1144.0 L922.9,1144.0 L926.6,1240.2 L930.3,1240.2 L934.0,1240.2 L937.7,1240.2 L941.4,1240.2 L945.1,1240.2 L948.8,1240.2 L952.4,1240.2 L956.1,1240.2 L959.8,1240.2 L963.5,1186.8 L967.2,1186.8 L970.9,1240.2 L974.6,1240.2 L978.2,1106.6 L981.9,1106.6 L985.6,1047.2 L989.3,1047.2 L993.0,1240.2 L996.7,1240.2" fill="none" stroke="#e1894c" stroke-width="2" stroke-linejoin="round"/>
<path d="M112.0,1224.4 L115.7,1240.2 L119.3,1240.2 L123.0,1208.1 L126.7,1208.1 L130.4,1184.9 L134.1,1184.9 L137.8,1240.2 L141.5,1240.2 L145.1,1240.2 L148.8,1240.2 L152.5,1240.2 L156.2,1240.2 L159.9,1240.2 L163.6,1240.2 L167.3,1208.9 L171.0,1208.9 L174.6,1240.2 L178.3,1240.2 L182.0,1234.0 L185.7,1234.0 L189.4,1240.2 L193.1,1240.2 L196.8,1240.2 L200.4,1240.2 L204.1,1228.0 L207.8,1228.0 L211.5,1196.6 L215.2,1196.6 L218.9,1240.2 L222.6,1240.2 L226.2,1190.9 L229.9,1190.9 L233.6,950.4 L237.3,950.4 L241.0,1240.2 L244.7,1240.2 L248.4,1240.2 L252.1,1240.2 L255.7,1240.2 L259.4,1240.2 L263.1,921.3 L266.8,921.3 L270.5,1240.2 L274.2,1240.2 L277.9,1240.2 L281.5,1240.2 L285.2,1240.2 L288.9,1240.2 L292.6,1240.2 L296.3,1240.2 L300.0,1240.2 L303.7,1240.2 L307.3,1155.7 L311.0,1155.7 L314.7,1240.2 L318.4,1240.2 L322.1,1173.4 L325.8,1173.4 L329.5,1240.2 L333.1,1240.2 L336.8,1240.2 L340.5,1240.2 L344.2,1240.2 L347.9,1240.2 L351.6,1240.2 L355.3,1240.2 L359.0,1237.2 L362.6,1237.2 L366.3,1240.2 L370.0,1240.2 L373.7,1240.2 L377.4,1240.2 L381.1,1240.2 L384.8,1240.2 L388.4,1225.8 L392.1,1225.8 L395.8,1240.2 L399.5,1240.2 L403.2,1189.5 L406.9,1189.5 L410.6,1240.2 L414.2,1240.2 L417.9,1240.2 L421.6,1240.2 L425.3,1218.4 L429.0,1218.4 L432.7,1227.7 L436.4,1227.7 L440.0,1240.2 L443.7,1240.2 L447.4,1042.3 L451.1,1042.3 L454.8,1069.0 L458.5,1069.0 L462.2,1178.9 L465.9,1178.9 L469.5,1189.8 L473.2,1189.8 L476.9,1240.2 L480.6,1240.2 L484.3,1240.2 L488.0,1240.2 L491.7,1240.2 L495.3,1240.2 L499.0,1196.6 L502.7,1196.6 L506.4,1240.2 L510.1,1240.2 L513.8,1240.2 L517.5,1240.2 L521.1,1240.2 L524.8,1240.2 L528.5,1210.8 L532.2,1210.8 L535.9,1240.2 L539.6,1240.2 L543.3,1240.2 L547.0,1240.2 L550.6,1192.2 L554.3,1192.2 L558.0,1240.2 L561.7,1240.2 L565.4,1240.2 L569.1,1240.2 L572.8,1240.2 L576.4,1240.2 L580.1,1184.9 L583.8,1184.9 L587.5,1240.2 L591.2,1240.2 L594.9,1240.2 L598.6,1240.2 L602.2,1240.2 L605.9,1240.2 L609.6,1240.2 L613.3,1240.2 L617.0,1050.8 L620.7,1050.8 L624.4,1240.2 L628.0,1240.2 L631.7,1229.3 L635.4,1229.3 L639.1,1240.2 L642.8,1240.2 L646.5,981.2 L650.2,981.2 L653.9,1240.2 L657.5,1240.2 L661.2,1225.8 L664.9,1225.8 L668.6,1221.7 L672.3,1221.7 L676.0,1240.2 L679.7,1240.2 L683.3,1240.2 L687.0,1240.2 L690.7,1240.2 L694.4,1240.2 L698.1,1150.0 L701.8,1150.0 L705.5,1147.3 L709.1,1147.3 L712.8,1240.2 L716.5,1240.2 L720.2,1240.2 L723.9,1240.2 L727.6,1240.2 L731.3,1240.2 L734.9,1240.2 L738.6,1240.2 L742.3,1240.2 L746.0,1240.2 L749.7,1240.2 L753.4,1240.2 L757.1,1240.2 L760.8,1240.2 L764.4,1216.2 L768.1,1216.2 L771.8,1240.2 L775.5,1240.2 L779.2,1240.2 L782.9,1240.2 L786.6,1240.2 L790.2,1240.2 L793.9,1195.0 L797.6,1195.0 L801.3,1240.2 L805.0,1240.2 L808.7,1228.0 L812.4,1228.0 L816.0,1240.2 L819.7,1240.2 L823.4,1240.2 L827.1,1240.2 L830.8,1240.2 L834.5,1240.2 L838.2,1240.2 L841.9,1240.2 L845.5,1193.1 L849.2,1193.1 L852.9,1240.2 L856.6,1240.2 L860.3,1240.2 L864.0,1240.2 L867.7,1094.1 L871.3,1094.1 L875.0,1126.3 L878.7,1126.3 L882.4,1195.2 L886.1,1195.2 L889.8,1199.9 L893.5,1199.9 L897.1,1232.6 L900.8,1232.6 L904.5,1229.3 L908.2,1229.3 L911.9,1240.2 L915.6,1240.2 L919.3,1144.0 L922.9,1144.0 L926.6,1240.2 L930.3,1240.2 L934.0,1240.2 L937.7,1240.2 L941.4,1240.2 L945.1,1240.2 L948.8,1240.2 L952.4,1240.2 L956.1,1240.2 L959.8,1240.2 L963.5,1186.8 L967.2,1186.8 L970.9,1240.2 L974.6,1240.2 L978.2,1106.6 L981.9,1106.6 L985.6,1047.2 L989.3,1047.2 L993.0,1240.2 L996.7,1240.2 L996.7,1240 L112.0,1240 Z" fill="#E24D42" fill-opacity="0.1" stroke="none"/>
<path d="M112.0,1224.4 L115.7,1240.2 L119.3,1240.2 L123.0,1208.1 L126.7,1208.1 L130.4,1184.9 L134.1,1184.9 L137.8,1240.2 L141.5,1240.2 L145.1,1240.2 L148.8,1240.2 L152.5,1240.2 L156.2,1240.2 L159.9,1240.2 L163.6,1240.2 L167.3,1208.9 L171.0,1208.9 L174.6,1240.2 L178.3,1240.2 L182.0,1234.0 L185.7,1234.0 L189.4,1240.2 L193.1,1240.2 L196.8,1240.2 L200.4,1240.2 L204.1,1228.0 L207.8,1228.0 L211.5,1196.6 L215.2,1196.6 L218.9,1240.2 L222.6,1240.2 L226.2,1190.9 L229.9,1190.9 L233.6,950.4 L237.3,950.4 L241.0,1240.2 L244.7,1240.2 L248.4,1240.2 L252.1,1240.2 L255.7,1240.2 L259.4,1240.2 L263.1,921.3 L266.8,921.3 L270.5,1240.2 L274.2,1240.2 L277.9,1240.2 L281.5,1240.2 L285.2,1240.2 L288.9,1240.2 L292.6,1240.2 L296.3,1240.2 L300.0,1240.2 L303.7,1240.2 L307.3,1155.7 L311.0,1155.7 L314.7,1240.2 L318.4,1240.2 L322.1,1173.4 L325.8,1173.4 L329.5,1240.2 L333.1,1240.2 L336.8,1240.2 L340.5,1240.2 L344.2,1240.2 L347.9,1240.2 L351.6,1240.2 L355.3,1240.2 L359.0,1237.2 L362.6,1237.2 L366.3,1240.2 L370.0,1240.2 L373.7,1240.2 L377.4,1240.2 L381.1,1240.2 L384.8,1240.2 L388.4,1225.8 L392.1,1225.8 L395.8,1240.2 L399.5,1240.2 L403.2,1189.5 L406.9,1189.5 L410.6,1240.2 L414.2,1240.2 L417.9,1240.2 L421.6,1240.2 L425.3,1218.4 L429.0,1218.4 L432.7,1227.7 L436.4,1227.7 L440.0,1240.2 L443.7,1240.2 L447.4,1042.3 L451.1,1042.3 L454.8,1069.0 L458.5,1069.0 L462.2,1178.9 L465.9,1178.9 L469.5,1189.8 L473.2,1189.8 L476.9,1240.2 L480.6,1240.2 L484.3,1240.2 L488.0,1240.2 L491.7,1240.2 L495.3,1240.2 L499.0,1196.6 L502.7,1196.6 L506.4,1240.2 L510.1,1240.2 L513.8,1240.2 L517.5,1240.2 L521.1,1240.2 L524.8,1240.2 L528.5,1210.8 L532.2,1210.8 L535.9,1240.2 L539.6,1240.2 L543.3,1240.2 L547.0,1240.2 L550.6,1192.2 L554.3,1192.2 L558.0,1240.2 L561.7,1240.2 L565.4,1240.2 L569.1,1240.2 L572.8,1240.2 L576.4,1240.2 L580.1,1184.9 L583.8,1184.9 L587.5,1240.2 L591.2,1240.2 L594.9,1240.2 L598.6,1240.2 L602.2,1240.2 L605.9,1240.2 L609.6,1240.2 L613.3,1240.2 L617.0,1050.8 L620.7,1050.8 L624.4,1240.2 L628.0,1240.2 L631.7,1229.3 L635.4,1229.3 L639.1,1240.2 L642.8,1240.2 L646.5,981.2 L650.2,981.2 L653.9,1240.2 L657.5,1240.2 L661.2,1225.8 L664.9,1225.8 L668.6,1221.7 L672.3,1221.7 L676.0,1240.2 L679.7,1240.2 L683.3,1240.2 L687.0,1240.2 L690.7,1240.2 L694.4,1240.2 L698.1,1150.0 L701.8,1150.0 L705.5,1147.3 L709.1,1147.3 L712.8,1240.2 L716.5,1240.2 L720.2,1240.2 L723.9,1240.2 L727.6,1240.2 L731.3,1240.2 L734.9,1240.2 L738.6,1240.2 L742.3,1240.2 L746.0,1240.2 L749.7,1240.2 L753.4,1240.2 L757.1,1240.2 L760.8,1240.2 L764.4,1216.2 L768.1,1216.2 L771.8,1240.2 L775.5,1240.2 L779.2,1240.2 L782.9,1240.2 L786.6,1240.2 L790.2,1240.2 L793.9,1195.0 L797.6,1195.0 L801.3,1240.2 L805.0,1240.2 L808.7,1228.0 L812.4,1228.0 L816.0,1240.2 L819.7,1240.2 L823.4,1240.2 L827.1,1240.2 L830.8,1240.2 L834.5,1240.2 L838.2,1240.2 L841.9,1240.2 L845.5,1193.1 L849.2,1193.1 L852.9,1240.2 L856.6,1240.2 L860.3,1240.2 L864.0,1240.2 L867.7,1094.1 L871.3,1094.1 L875.0,1126.3 L878.7,1126.3 L882.4,1195.2 L886.1,1195.2 L889.8,1199.9 L893.5,1199.9 L897.1,1232.6 L900.8,1232.6 L904.5,1229.3 L908.2,1229.3 L911.9,1240.2 L915.6,1240.2 L919.3,1144.0 L922.9,1144.0 L926.6,1240.2 L930.3,1240.2 L934.0,1240.2 L937.7,1240.2 L941.4,1240.2 L945.1,1240.2 L948.8,1240.2 L952.4,1240.2 L956.1,1240.2 L959.8,1240.2 L963.5,1186.8 L967.2,1186.8 L970.9,1240.2 L974.6,1240.2 L978.2,1106.6 L981.9,1106.6 L985.6,1047.2 L989.3,1047.2 L993.0,1240.2 L996.7,1240.2" fill="none" stroke="#d1584a" stroke-width="2" stroke-linejoin="round"/>
<path d="M112.0,1224.4 L115.7,1240.2 L119.3,1240.2 L123.0,1208.1 L126.7,1208.1 L130.4,1184.9 L134.1,1184.9 L137.8,1240.2 L141.5,1240.2 L145.1,1240.2 L148.8,1240.2 L152.5,1240.2 L156.2,1240.2 L159.9,1240.2 L163.6,1240.2 L167.3,1208.9 L171.0,1208.9 L174.6,1240.2 L178.3,1240.2 L182.0,1234.0 L185.7,1234.0 L189.4,1240.2 L193.1,1240.2 L196.8,1240.2 L200.4,1240.2 L204.1,1228.0 L207.8,1228.0 L211.5,1196.6 L215.2,1196.6 L218.9,1240.2 L222.6,1240.2 L226.2,1190.9 L229.9,1190.9 L233.6,950.4 L237.3,950.4 L241.0,1240.2 L244.7,1240.2 L248.4,1240.2 L252.1,1240.2 L255.7,1240.2 L259.4,1240.2 L263.1,921.3 L266.8,921.3 L270.5,1240.2 L274.2,1240.2 L277.9,1240.2 L281.5,1240.2 L285.2,1240.2 L288.9,1240.2 L292.6,1240.2 L296.3,1240.2 L300.0,1240.2 L303.7,1240.2 L307.3,1155.7 L311.0,1155.7 L314.7,1240.2 L318.4,1240.2 L322.1,1173.4 L325.8,1173.4 L329.5,1240.2 L333.1,1240.2 L336.8,1240.2 L340.5,1240.2 L344.2,1240.2 L347.9,1240.2 L351.6,1240.2 L355.3,1240.2 L359.0,1237.2 L362.6,1237.2 L366.3,1240.2 L370.0,1240.2 L373.7,1240.2 L377.4,1240.2 L381.1,1240.2 L384.8,1240.2 L388.4,1225.8 L392.1,1225.8 L395.8,1240.2 L399.5,1240.2 L403.2,1189.5 L406.9,1189.5 L410.6,1240.2 L414.2,1240.2 L417.9,1240.2 L421.6,1240.2 L425.3,1218.4 L429.0,1218.4 L432.7,1227.7 L436.4,1227.7 L440.0,1240.2 L443.7,1240.2 L447.4,1042.3 L451.1,1042.3 L454.8,1069.0 L458.5,1069.0 L462.2,1178.9 L465.9,1178.9 L469.5,1189.8 L473.2,1189.8 L476.9,1240.2 L480.6,1240.2 L484.3,1240.2 L488.0,1240.2 L491.7,1240.2 L495.3,1240.2 L499.0,1196.6 L502.7,1196.6 L506.4,1240.2 L510.1,1240.2 L513.8,1240.2 L517.5,1240.2 L521.1,1240.2 L524.8,1240.2 L528.5,1210.8 L532.2,1210.8 L535.9,1240.2 L539.6,1240.2 L543.3,1240.2 L547.0,1240.2 L550.6,1192.2 L554.3,1192.2 L558.0,1240.2 L561.7,1240.2 L565.4,1240.2 L569.1,1240.2 L572.8,1240.2 L576.4,1240.2 L580.1,1184.9 L583.8,1184.9 L587.5,1240.2 L591.2,1240.2 L594.9,1240.2 L598.6,1240.2 L602.2,1240.2 L605.9,1240.2 L609.6,1240.2 L613.3,1240.2 L617.0,1050.8 L620.7,1050.8 L624.4,1240.2 L628.0,1240.2 L631.7,1229.3 L635.4,1229.3 L639.1,1240.2 L642.8,1240.2 L646.5,981.2 L650.2,981.2 L653.9,1240.2 L657.5,1240.2 L661.2,1225.8 L664.9,1225.8 L668.6,1221.7 L672.3,1221.7 L676.0,1240.2 L679.7,1240.2 L683.3,1240.2 L687.0,1240.2 L690.7,1240.2 L694.4,1240.2 L698.1,1150.0 L701.8,1150.0 L705.5,1147.3 L709.1,1147.3 L712.8,1240.2 L716.5,1240.2 L720.2,1240.2 L723.9,1240.2 L727.6,1240.2 L731.3,1240.2 L734.9,1240.2 L738.6,1240.2 L742.3,1240.2 L746.0,1240.2 L749.7,1240.2 L753.4,1240.2 L757.1,1240.2 L760.8,1240.2 L764.4,1216.2 L768.1,1216.2 L771.8,1240.2 L775.5,1240.2 L779.2,1240.2 L782.9,1240.2 L786.6,1240.2 L790.2,1240.2 L793.9,1195.0 L797.6,1195.0 L801.3,1240.2 L805.0,1240.2 L808.7,1228.0 L812.4,1228.0 L816.0,1240.2 L819.7,1240.2 L823.4,1240.2 L827.1,1240.2 L830.8,1240.2 L834.5,1240.2 L838.2,1240.2 L841.9,1240.2 L845.5,1193.1 L849.2,1193.1 L852.9,1240.2 L856.6,1240.2 L860.3,1240.2 L864.0,1240.2 L867.7,1094.1 L871.3,1094.1 L875.0,1126.3 L878.7,1126.3 L882.4,1195.2 L886.1,1195.2 L889.8,1199.9 L893.5,1199.9 L897.1,1232.6 L900.8,1232.6 L904.5,1229.3 L908.2,1229.3 L911.9,1240.2 L915.6,1240.2 L919.3,1144.0 L922.9,1144.0 L926.6,1240.2 L930.3,1240.2 L934.0,1240.2 L937.7,1240.2 L941.4,1240.2 L945.1,1240.2 L948.8,1240.2 L952.4,1240.2 L956.1,1240.2 L959.8,1240.2 L963.5,1186.8 L967.2,1186.8 L970.9,1240.2 L974.6,1240.2 L978.2,1106.6 L981.9,1106.6 L985.6,1047.2 L989.3,1047.2 L993.0,1240.2 L996.7,1240.2 L996.7,1240 L112.0,1240 Z" fill="#1F78C1" fill-opacity="0.1" stroke="none"/>
<path d="M112.0,1224.4 L115.7,1240.2 L119.3,1240.2 L123.0,1208.1 L126.7,1208.1 L130.4,1184.9 L134.1,1184.9 L137.8,1240.2 L141.5,1240.2 L145.1,1240.2 L148.8,1240.2 L152.5,1240.2 L156.2,1240.2 L159.9,1240.2 L163.6,1240.2 L167.3,1208.9 L171.0,1208.9 L174.6,1240.2 L178.3,1240.2 L182.0,1234.0 L185.7,1234.0 L189.4,1240.2 L193.1,1240.2 L196.8,1240.2 L200.4,1240.2 L204.1,1228.0 L207.8,1228.0 L211.5,1196.6 L215.2,1196.6 L218.9,1240.2 L222.6,1240.2 L226.2,1190.9 L229.9,1190.9 L233.6,950.4 L237.3,950.4 L241.0,1240.2 L244.7,1240.2 L248.4,1240.2 L252.1,1240.2 L255.7,1240.2 L259.4,1240.2 L263.1,921.3 L266.8,921.3 L270.5,1240.2 L274.2,1240.2 L277.9,1240.2 L281.5,1240.2 L285.2,1240.2 L288.9,1240.2 L292.6,1240.2 L296.3,1240.2 L300.0,1240.2 L303.7,1240.2 L307.3,1155.7 L311.0,1155.7 L314.7,1240.2 L318.4,1240.2 L322.1,1173.4 L325.8,1173.4 L329.5,1240.2 L333.1,1240.2 L336.8,1240.2 L340.5,1240.2 L344.2,1240.2 L347.9,1240.2 L351.6,1240.2 L355.3,1240.2 L359.0,1237.2 L362.6,1237.2 L366.3,1240.2 L370.0,1240.2 L373.7,1240.2 L377.4,1240.2 L381.1,1240.2 L384.8,1240.2 L388.4,1225.8 L392.1,1225.8 L395.8,1240.2 L399.5,1240.2 L403.2,1189.5 L406.9,1189.5 L410.6,1240.2 L414.2,1240.2 L417.9,1240.2 L421.6,1240.2 L425.3,1218.4 L429.0,1218.4 L432.7,1227.7 L436.4,1227.7 L440.0,1240.2 L443.7,1240.2 L447.4,1042.3 L451.1,1042.3 L454.8,1069.0 L458.5,1069.0 L462.2,1178.9 L465.9,1178.9 L469.5,1189.8 L473.2,1189.8 L476.9,1240.2 L480.6,1240.2 L484.3,1240.2 L488.0,1240.2 L491.7,1240.2 L495.3,1240.2 L499.0,1196.6 L502.7,1196.6 L506.4,1240.2 L510.1,1240.2 L513.8,1240.2 L517.5,1240.2 L521.1,1240.2 L524.8,1240.2 L528.5,1210.8 L532.2,1210.8 L535.9,1240.2 L539.6,1240.2 L543.3,1240.2 L547.0,1240.2 L550.6,1192.2 L554.3,1192.2 L558.0,1240.2 L561.7,1240.2 L565.4,1240.2 L569.1,1240.2 L572.8,1240.2 L576.4,1240.2 L580.1,1184.9 L583.8,1184.9 L587.5,1240.2 L591.2,1240.2 L594.9,1240.2 L598.6,1240.2 L602.2,1240.2 L605.9,1240.2 L609.6,1240.2 L613.3,1240.2 L617.0,1050.8 L620.7,1050.8 L624.4,1240.2 L628.0,1240.2 L631.7,1229.3 L635.4,1229.3 L639.1,1240.2 L642.8,1240.2 L646.5,981.2 L650.2,981.2 L653.9,1240.2 L657.5,1240.2 L661.2,1225.8 L664.9,1225.8 L668.6,1221.7 L672.3,1221.7 L676.0,1240.2 L679.7,1240.2 L683.3,1240.2 L687.0,1240.2 L690.7,1240.2 L694.4,1240.2 L698.1,1150.0 L701.8,1150.0 L705.5,1147.3 L709.1,1147.3 L712.8,1240.2 L716.5,1240.2 L720.2,1240.2 L723.9,1240.2 L727.6,1240.2 L731.3,1240.2 L734.9,1240.2 L738.6,1240.2 L742.3,1240.2 L746.0,1240.2 L749.7,1240.2 L753.4,1240.2 L757.1,1240.2 L760.8,1240.2 L764.4,1216.2 L768.1,1216.2 L771.8,1240.2 L775.5,1240.2 L779.2,1240.2 L782.9,1240.2 L786.6,1240.2 L790.2,1240.2 L793.9,1195.0 L797.6,1195.0 L801.3,1240.2 L805.0,1240.2 L808.7,1228.0 L812.4,1228.0 L816.0,1240.2 L819.7,1240.2 L823.4,1240.2 L827.1,1240.2 L830.8,1240.2 L834.5,1240.2 L838.2,1240.2 L841.9,1240.2 L845.5,1193.1 L849.2,1193.1 L852.9,1240.2 L856.6,1240.2 L860.3,1240.2 L864.0,1240.2 L867.7,1094.1 L871.3,1094.1 L875.0,1126.3 L878.7,1126.3 L882.4,1195.2 L886.1,1195.2 L889.8,1199.9 L893.5,1199.9 L897.1,1232.6 L900.8,1232.6 L904.5,1229.3 L908.2,1229.3 L911.9,1240.2 L915.6,1240.2 L919.3,1144.0 L922.9,1144.0 L926.6,1240.2 L930.3,1240.2 L934.0,1240.2 L937.7,1240.2 L941.4,1240.2 L945.1,1240.2 L948.8,1240.2 L952.4,1240.2 L956.1,1240.2 L959.8,1240.2 L963.5,1186.8 L967.2,1186.8 L970.9,1240.2 L974.6,1240.2 L978.2,1106.6 L981.9,1106.6 L985.6,1047.2 L989.3,1047.2 L993.0,1240.2 L996.7,1240.2" fill="none" stroke="#3c76bb" stroke-width="2" stroke-linejoin="round"/>
<path d="M112.0,1224.4 L115.7,1240.2 L119.3,1240.2 L123.0,1208.1 L126.7,1208.1 L130.4,1184.9 L134.1,1184.9 L137.8,1240.2 L141.5,1240.2 L145.1,1240.2 L148.8,1240.2 L152.5,1240.2 L156.2,1240.2 L159.9,1240.2 L163.6,1240.2 L167.3,1208.9 L171.0,1208.9 L174.6,1240.2 L178.3,1240.2 L182.0,1234.0 L185.7,1234.0 L189.4,1240.2 L193.1,1240.2 L196.8,1240.2 L200.4,1240.2 L204.1,1228.0 L207.8,1228.0 L211.5,1196.6 L215.2,1196.6 L218.9,1240.2 L222.6,1240.2 L226.2,1190.9 L229.9,1190.9 L233.6,950.4 L237.3,950.4 L241.0,1240.2 L244.7,1240.2 L248.4,1240.2 L252.1,1240.2 L255.7,1240.2 L259.4,1240.2 L263.1,921.3 L266.8,921.3 L270.5,1240.2 L274.2,1240.2 L277.9,1240.2 L281.5,1240.2 L285.2,1240.2 L288.9,1240.2 L292.6,1240.2 L296.3,1240.2 L300.0,1240.2 L303.7,1240.2 L307.3,1155.7 L311.0,1155.7 L314.7,1240.2 L318.4,1240.2 L322.1,1173.4 L325.8,1173.4 L329.5,1240.2 L333.1,1240.2 L336.8,1240.2 L340.5,1240.2 L344.2,1240.2 L347.9,1240.2 L351.6,1240.2 L355.3,1240.2 L359.0,1237.2 L362.6,1237.2 L366.3,1240.2 L370.0,1240.2 L373.7,1240.2 L377.4,1240.2 L381.1,1240.2 L384.8,1240.2 L388.4,1225.8 L392.1,1225.8 L395.8,1240.2 L399.5,1240.2 L403.2,1189.5 L406.9,1189.5 L410.6,1240.2 L414.2,1240.2 L417.9,1240.2 L421.6,1240.2 L425.3,1218.4 L429.0,1218.4 L432.7,1227.7 L436.4,1227.7 L440.0,1240.2 L443.7,1240.2 L447.4,1042.3 L451.1,1042.3 L454.8,1069.0 L458.5,1069.0 L462.2,1178.9 L465.9,1178.9 L469.5,1189.8 L473.2,1189.8 L476.9,1240.2 L480.6,1240.2 L484.3,1240.2 L488.0,1240.2 L491.7,1240.2 L495.3,1240.2 L499.0,1196.6 L502.7,1196.6 L506.4,1240.2 L510.1,1240.2 L513.8,1240.2 L517.5,1240.2 L521.1,1240.2 L524.8,1240.2 L528.5,1210.8 L532.2,1210.8 L535.9,1240.2 L539.6,1240.2 L543.3,1240.2 L547.0,1240.2 L550.6,1192.2 L554.3,1192.2 L558.0,1240.2 L561.7,1240.2 L565.4,1240.2 L569.1,1240.2 L572.8,1240.2 L576.4,1240.2 L580.1,1184.9 L583.8,1184.9 L587.5,1240.2 L591.2,1240.2 L594.9,1240.2 L598.6,1240.2 L602.2,1240.2 L605.9,1240.2 L609.6,1240.2 L613.3,1240.2 L617.0,1050.8 L620.7,1050.8 L624.4,1240.2 L628.0,1240.2 L631.7,1229.3 L635.4,1229.3 L639.1,1240.2 L642.8,1240.2 L646.5,981.2 L650.2,981.2 L653.9,1240.2 L657.5,1240.2 L661.2,1225.8 L664.9,1225.8 L668.6,1221.7 L672.3,1221.7 L676.0,1240.2 L679.7,1240.2 L683.3,1240.2 L687.0,1240.2 L690.7,1240.2 L694.4,1240.2 L698.1,1150.0 L701.8,1150.0 L705.5,1147.3 L709.1,1147.3 L712.8,1240.2 L716.5,1240.2 L720.2,1240.2 L723.9,1240.2 L727.6,1240.2 L731.3,1240.2 L734.9,1240.2 L738.6,1240.2 L742.3,1240.2 L746.0,1240.2 L749.7,1240.2 L753.4,1240.2 L757.1,1240.2 L760.8,1240.2 L764.4,1216.2 L768.1,1216.2 L771.8,1240.2 L775.5,1240.2 L779.2,1240.2 L782.9,1240.2 L786.6,1240.2 L790.2,1240.2 L793.9,1195.0 L797.6,1195.0 L801.3,1240.2 L805.0,1240.2 L808.7,1228.0 L812.4,1228.0 L816.0,1240.2 L819.7,1240.2 L823.4,1240.2 L827.1,1240.2 L830.8,1240.2 L834.5,1240.2 L838.2,1240.2 L841.9,1240.2 L845.5,1193.1 L849.2,1193.1 L852.9,1240.2 L856.6,1240.2 L860.3,1240.2 L864.0,1240.2 L867.7,1094.1 L871.3,1094.1 L875.0,1126.3 L878.7,1126.3 L882.4,1195.2 L886.1,1195.2 L889.8,1199.9 L893.5,1199.9 L897.1,1232.6 L900.8,1232.6 L904.5,1229.3 L908.2,1229.3 L911.9,1240.2 L915.6,1240.2 L919.3,1144.0 L922.9,1144.0 L926.6,1240.2 L930.3,1240.2 L934.0,1240.2 L937.7,1240.2 L941.4,1240.2 L945.1,1240.2 L948.8,1240.2 L952.4,1240.2 L956.1,1240.2 L959.8,1240.2 L963.5,1186.8 L967.2,1186.8 L970.9,1240.2 L974.6,1240.2 L978.2,1106.6 L981.9,1106.6 L985.6,1047.2 L989.3,1047.2 L993.0,1240.2 L996.7,1240.2 L996.7,1240 L112.0,1240 Z" fill="#BA43A9" fill-opacity="0.1" stroke="none"/>
<path d="M112.0,1224.4 L115.7,1240.2 L119.3,1240.2 L123.0,1208.1 L126.7,1208.1 L130.4,1184.9 L134.1,1184.9 L137.8,1240.2 L141.5,1240.2 L145.1,1240.2 L148.8,1240.2 L152.5,1240.2 L156.2,1240.2 L159.9,1240.2 L163.6,1240.2 L167.3,1208.9 L171.0,1208.9 L174.6,1240.2 L178.3,1240.2 L182.0,1234.0 L185.7,1234.0 L189.4,1240.2 L193.1,1240.2 L196.8,1240.2 L200.4,1240.2 L204.1,1228.0 L207.8,1228.0 L211.5,1196.6 L215.2,1196.6 L218.9,1240.2 L222.6,1240.2 L226.2,1190.9 L229.9,1190.9 L233.6,950.4 L237.3,950.4 L241.0,1240.2 L244.7,1240.2 L248.4,1240.2 L252.1,1240.2 L255.7,1240.2 L259.4,1240.2 L263.1,921.3 L266.8,921.3 L270.5,1240.2 L274.2,1240.2 L277.9,1240.2 L281.5,1240.2 L285.2,1240.2 L288.9,1240.2 L292.6,1240.2 L296.3,1240.2 L300.0,1240.2 L303.7,1240.2 L307.3,1155.7 L311.0,1155.7 L314.7,1240.2 L318.4,1240.2 L322.1,1173.4 L325.8,1173.4 L329.5,1240.2 L333.1,1240.2 L336.8,1240.2 L340.5,1240.2 L344.2,1240.2 L347.9,1240.2 L351.6,1240.2 L355.3,1240.2 L359.0,1237.2 L362.6,1237.2 L366.3,1240.2 L370.0,1240.2 L373.7,1240.2 L377.4,1240.2 L381.1,1240.2 L384.8,1240.2 L388.4,1225.8 L392.1,1225.8 L395.8,1240.2 L399.5,1240.2 L403.2,1189.5 L406.9,1189.5 L410.6,1240.2 L414.2,1240.2 L417.9,1240.2 L421.6,1240.2 L425.3,1218.4 L429.0,1218.4 L432.7,1227.7 L436.4,1227.7 L440.0,1240.2 L443.7,1240.2 L447.4,1042.3 L451.1,1042.3 L454.8,1069.0 L458.5,1069.0 L462.2,1178.9 L465.9,1178.9 L469.5,1189.8 L473.2,1189.8 L476.9,1240.2 L480.6,1240.2 L484.3,1240.2 L488.0,1240.2 L491.7,1240.2 L495.3,1240.2 L499.0,1196.6 L502.7,1196.6 L506.4,1240.2 L510.1,1240.2 L513.8,1240.2 L517.5,1240.2 L521.1,1240.2 L524.8,1240.2 L528.5,1210.8 L532.2,1210.8 L535.9,1240.2 L539.6,1240.2 L543.3,1240.2 L547.0,1240.2 L550.6,1192.2 L554.3,1192.2 L558.0,1240.2 L561.7,1240.2 L565.4,1240.2 L569.1,1240.2 L572.8,1240.2 L576.4,1240.2 L580.1,1184.9 L583.8,1184.9 L587.5,1240.2 L591.2,1240.2 L594.9,1240.2 L598.6,1240.2 L602.2,1240.2 L605.9,1240.2 L609.6,1240.2 L613.3,1240.2 L617.0,1050.8 L620.7,1050.8 L624.4,1240.2 L628.0,1240.2 L631.7,1229.3 L635.4,1229.3 L639.1,1240.2 L642.8,1240.2 L646.5,981.2 L650.2,981.2 L653.9,1240.2 L657.5,1240.2 L661.2,1225.8 L664.9,1225.8 L668.6,1221.7 L672.3,1221.7 L676.0,1240.2 L679.7,1240.2 L683.3,1240.2 L687.0,1240.2 L690.7,1240.2 L694.4,1240.2 L698.1,1150.0 L701.8,1150.0 L705.5,1147.3 L709.1,1147.3 L712.8,1240.2 L716.5,1240.2 L720.2,1240.2 L723.9,1240.2 L727.6,1240.2 L731.3,1240.2 L734.9,1240.2 L738.6,1240.2 L742.3,1240.2 L746.0,1240.2 L749.7,1240.2 L753.4,1240.2 L757.1,1240.2 L760.8,1240.2 L764.4,1216.2 L768.1,1216.2 L771.8,1240.2 L775.5,1240.2 L779.2,1240.2 L782.9,1240.2 L786.6,1240.2 L790.2,1240.2 L793.9,1195.0 L797.6,1195.0 L801.3,1240.2 L805.0,1240.2 L808.7,1228.0 L812.4,1228.0 L816.0,1240.2 L819.7,1240.2 L823.4,1240.2 L827.1,1240.2 L830.8,1240.2 L834.5,1240.2 L838.2,1240.2 L841.9,1240.2 L845.5,1193.1 L849.2,1193.1 L852.9,1240.2 L856.6,1240.2 L860.3,1240.2 L864.0,1240.2 L867.7,1094.1 L871.3,1094.1 L875.0,1126.3 L878.7,1126.3 L882.4,1195.2 L886.1,1195.2 L889.8,1199.9 L893.5,1199.9 L897.1,1232.6 L900.8,1232.6 L904.5,1229.3 L908.2,1229.3 L911.9,1240.2 L915.6,1240.2 L919.3,1144.0 L922.9,1144.0 L926.6,1240.2 L930.3,1240.2 L934.0,1240.2 L937.7,1240.2 L941.4,1240.2 L945.1,1240.2 L948.8,1240.2 L952.4,1240.2 L956.1,1240.2 L959.8,1240.2 L963.5,1186.8 L967.2,1186.8 L970.9,1240.2 L974.6,1240.2 L978.2,1106.6 L981.9,1106.6 L985.6,1047.2 L989.3,1047.2 L993.0,1240.2 L996.7,1240.2" fill="none" stroke="#ac4ba4" stroke-width="2" stroke-linejoin="round"/>
<path d="M112.0,1224.4 L115.7,1240.2 L119.3,1240.2 L123.0,1208.1 L126.7,1208.1 L130.4,1184.9 L134.1,1184.9 L137.8,1240.2 L141.5,1240.2 L145.1,1240.2 L148.8,1240.2 L152.5,1240.2 L156.2,1240.2 L159.9,1240.2 L163.6,1240.2 L167.3,1208.9 L171.0,1208.9 L174.6,1240.2 L178.3,1240.2 L182.0,1234.0 L185.7,1234.0 L189.4,1240.2 L193.1,1240.2 L196.8,1240.2 L200.4,1240.2 L204.1,1228.0 L207.8,1228.0 L211.5,1196.6 L215.2,1196.6 L218.9,1240.2 L222.6,1240.2 L226.2,1190.9 L229.9,1190.9 L233.6,950.4 L237.3,950.4 L241.0,1240.2 L244.7,1240.2 L248.4,1240.2 L252.1,1240.2 L255.7,1240.2 L259.4,1240.2 L263.1,921.3 L266.8,921.3 L270.5,1240.2 L274.2,1240.2 L277.9,1240.2 L281.5,1240.2 L285.2,1240.2 L288.9,1240.2 L292.6,1240.2 L296.3,1240.2 L300.0,1240.2 L303.7,1240.2 L307.3,1155.7 L311.0,1155.7 L314.7,1240.2 L318.4,1240.2 L322.1,1173.4 L325.8,1173.4 L329.5,1240.2 L333.1,1240.2 L336.8,1240.2 L340.5,1240.2 L344.2,1240.2 L347.9,1240.2 L351.6,1240.2 L355.3,1240.2 L359.0,1237.2 L362.6,1237.2 L366.3,1240.2 L370.0,1240.2 L373.7,1240.2 L377.4,1240.2 L381.1,1240.2 L384.8,1240.2 L388.4,1225.8 L392.1,1225.8 L395.8,1240.2 L399.5,1240.2 L403.2,1189.5 L406.9,1189.5 L410.6,1240.2 L414.2,1240.2 L417.9,1240.2 L421.6,1240.2 L425.3,1218.4 L429.0,1218.4 L432.7,1227.7 L436.4,1227.7 L440.0,1240.2 L443.7,1240.2 L447.4,1042.3 L451.1,1042.3 L454.8,1069.0 L458.5,1069.0 L462.2,1178.9 L465.9,1178.9 L469.5,1189.8 L473.2,1189.8 L476.9,1240.2 L480.6,1240.2 L484.3,1240.2 L488.0,1240.2 L491.7,1240.2 L495.3,1240.2 L499.0,1196.6 L502.7,1196.6 L506.4,1240.2 L510.1,1240.2 L513.8,1240.2 L517.5,1240.2 L521.1,1240.2 L524.8,1240.2 L528.5,1210.8 L532.2,1210.8 L535.9,1240.2 L539.6,1240.2 L543.3,1240.2 L547.0,1240.2 L550.6,1192.2 L554.3,1192.2 L558.0,1240.2 L561.7,1240.2 L565.4,1240.2 L569.1,1240.2 L572.8,1240.2 L576.4,1240.2 L580.1,1184.9 L583.8,1184.9 L587.5,1240.2 L591.2,1240.2 L594.9,1240.2 L598.6,1240.2 L602.2,1240.2 L605.9,1240.2 L609.6,1240.2 L613.3,1240.2 L617.0,1050.8 L620.7,1050.8 L624.4,1240.2 L628.0,1240.2 L631.7,1229.3 L635.4,1229.3 L639.1,1240.2 L642.8,1240.2 L646.5,981.2 L650.2,981.2 L653.9,1240.2 L657.5,1240.2 L661.2,1225.8 L664.9,1225.8 L668.6,1221.7 L672.3,1221.7 L676.0,1240.2 L679.7,1240.2 L683.3,1240.2 L687.0,1240.2 L690.7,1240.2 L694.4,1240.2 L698.1,1150.0 L701.8,1150.0 L705.5,1147.3 L709.1,1147.3 L712.8,1240.2 L716.5,1240.2 L720.2,1240.2 L723.9,1240.2 L727.6,1240.2 L731.3,1240.2 L734.9,1240.2 L738.6,1240.2 L742.3,1240.2 L746.0,1240.2 L749.7,1240.2 L753.4,1240.2 L757.1,1240.2 L760.8,1240.2 L764.4,1216.2 L768.1,1216.2 L771.8,1240.2 L775.5,1240.2 L779.2,1240.2 L782.9,1240.2 L786.6,1240.2 L790.2,1240.2 L793.9,1195.0 L797.6,1195.0 L801.3,1240.2 L805.0,1240.2 L808.7,1228.0 L812.4,1228.0 L816.0,1240.2 L819.7,1240.2 L823.4,1240.2 L827.1,1240.2 L830.8,1240.2 L834.5,1240.2 L838.2,1240.2 L841.9,1240.2 L845.5,1193.1 L849.2,1193.1 L852.9,1240.2 L856.6,1240.2 L860.3,1240.2 L864.0,1240.2 L867.7,1094.1 L871.3,1094.1 L875.0,1126.3 L878.7,1126.3 L882.4,1195.2 L886.1,1195.2 L889.8,1199.9 L893.5,1199.9 L897.1,1232.6 L900.8,1232.6 L904.5,1229.3 L908.2,1229.3 L911.9,1240.2 L915.6,1240.2 L919.3,1144.0 L922.9,1144.0 L926.6,1240.2 L930.3,1240.2 L934.0,1240.2 L937.7,1240.2 L941.4,1240.2 L945.1,1240.2 L948.8,1240.2 L952.4,1240.2 L956.1,1240.2 L959.8,1240.2 L963.5,1186.8 L967.2,1186.8 L970.9,1240.2 L974.6,1240.2 L978.2,1106.6 L981.9,1106.6 L985.6,1047.2 L989.3,1047.2 L993.0,1240.2 L996.7,1240.2 L996.7,1240 L112.0,1240 Z" fill="#705DA0" fill-opacity="0.1" stroke="none"/>
<path d="M112.0,1224.4 L115.7,1240.2 L119.3,1240.2 L123.0,1208.1 L126.7,1208.1 L130.4,1184.9 L134.1,1184.9 L137.8,1240.2 L141.5,1240.2 L145.1,1240.2 L148.8,1240.2 L152.5,1240.2 L156.2,1240.2 L159.9,1240.2 L163.6,1240.2 L167.3,1208.9 L171.0,1208.9 L174.6,1240.2 L178.3,1240.2 L182.0,1234.0 L185.7,1234.0 L189.4,1240.2 L193.1,1240.2 L196.8,1240.2 L200.4,1240.2 L204.1,1228.0 L207.8,1228.0 L211.5,1196.6 L215.2,1196.6 L218.9,1240.2 L222.6,1240.2 L226.2,1190.9 L229.9,1190.9 L233.6,950.4 L237.3,950.4 L241.0,1240.2 L244.7,1240.2 L248.4,1240.2 L252.1,1240.2 L255.7,1240.2 L259.4,1240.2 L263.1,921.3 L266.8,921.3 L270.5,1240.2 L274.2,1240.2 L277.9,1240.2 L281.5,1240.2 L285.2,1240.2 L288.9,1240.2 L292.6,1240.2 L296.3,1240.2 L300.0,1240.2 L303.7,1240.2 L307.3,1155.7 L311.0,1155.7 L314.7,1240.2 L318.4,1240.2 L322.1,1173.4 L325.8,1173.4 L329.5,1240.2 L333.1,1240.2 L336.8,1240.2 L340.5,1240.2 L344.2,1240.2 L347.9,1240.2 L351.6,1240.2 L355.3,1240.2 L359.0,1237.2 L362.6,1237.2 L366.3,1240.2 L370.0,1240.2 L373.7,1240.2 L377.4,1240.2 L381.1,1240.2 L384.8,1240.2 L388.4,1225.8 L392.1,1225.8 L395.8,1240.2 L399.5,1240.2 L403.2,1189.5 L406.9,1189.5 L410.6,1240.2 L414.2,1240.2 L417.9,1240.2 L421.6,1240.2 L425.3,1218.4 L429.0,1218.4 L432.7,1227.7 L436.4,1227.7 L440.0,1240.2 L443.7,1240.2 L447.4,1042.3 L451.1,1042.3 L454.8,1069.0 L458.5,1069.0 L462.2,1178.9 L465.9,1178.9 L469.5,1189.8 L473.2,1189.8 L476.9,1240.2 L480.6,1240.2 L484.3,1240.2 L488.0,1240.2 L491.7,1240.2 L495.3,1240.2 L499.0,1196.6 L502.7,1196.6 L506.4,1240.2 L510.1,1240.2 L513.8,1240.2 L517.5,1240.2 L521.1,1240.2 L524.8,1240.2 L528.5,1210.8 L532.2,1210.8 L535.9,1240.2 L539.6,1240.2 L543.3,1240.2 L547.0,1240.2 L550.6,1192.2 L554.3,1192.2 L558.0,1240.2 L561.7,1240.2 L565.4,1240.2 L569.1,1240.2 L572.8,1240.2 L576.4,1240.2 L580.1,1184.9 L583.8,1184.9 L587.5,1240.2 L591.2,1240.2 L594.9,1240.2 L598.6,1240.2 L602.2,1240.2 L605.9,1240.2 L609.6,1240.2 L613.3,1240.2 L617.0,1050.8 L620.7,1050.8 L624.4,1240.2 L628.0,1240.2 L631.7,1229.3 L635.4,1229.3 L639.1,1240.2 L642.8,1240.2 L646.5,981.2 L650.2,981.2 L653.9,1240.2 L657.5,1240.2 L661.2,1225.8 L664.9,1225.8 L668.6,1221.7 L672.3,1221.7 L676.0,1240.2 L679.7,1240.2 L683.3,1240.2 L687.0,1240.2 L690.7,1240.2 L694.4,1240.2 L698.1,1150.0 L701.8,1150.0 L705.5,1147.3 L709.1,1147.3 L712.8,1240.2 L716.5,1240.2 L720.2,1240.2 L723.9,1240.2 L727.6,1240.2 L731.3,1240.2 L734.9,1240.2 L738.6,1240.2 L742.3,1240.2 L746.0,1240.2 L749.7,1240.2 L753.4,1240.2 L757.1,1240.2 L760.8,1240.2 L764.4,1216.2 L768.1,1216.2 L771.8,1240.2 L775.5,1240.2 L779.2,1240.2 L782.9,1240.2 L786.6,1240.2 L790.2,1240.2 L793.9,1195.0 L797.6,1195.0 L801.3,1240.2 L805.0,1240.2 L808.7,1228.0 L812.4,1228.0 L816.0,1240.2 L819.7,1240.2 L823.4,1240.2 L827.1,1240.2 L830.8,1240.2 L834.5,1240.2 L838.2,1240.2 L841.9,1240.2 L845.5,1193.1 L849.2,1193.1 L852.9,1240.2 L856.6,1240.2 L860.3,1240.2 L864.0,1240.2 L867.7,1094.1 L871.3,1094.1 L875.0,1126.3 L878.7,1126.3 L882.4,1195.2 L886.1,1195.2 L889.8,1199.9 L893.5,1199.9 L897.1,1232.6 L900.8,1232.6 L904.5,1229.3 L908.2,1229.3 L911.9,1240.2 L915.6,1240.2 L919.3,1144.0 L922.9,1144.0 L926.6,1240.2 L930.3,1240.2 L934.0,1240.2 L937.7,1240.2 L941.4,1240.2 L945.1,1240.2 L948.8,1240.2 L952.4,1240.2 L956.1,1240.2 L959.8,1240.2 L963.5,1186.8 L967.2,1186.8 L970.9,1240.2 L974.6,1240.2 L978.2,1106.6 L981.9,1106.6 L985.6,1047.2 L989.3,1047.2 L993.0,1240.2 L996.7,1240.2" fill="none" stroke="#6d5e9c" stroke-width="2" stroke-linejoin="round"/>
<path d="M112.0,1224.4 L115.7,1240.2 L119.3,1240.2 L123.0,1208.1 L126.7,1208.1 L130.4,1184.9 L134.1,1184.9 L137.8,1240.2 L141.5,1240.2 L145.1,1240.2 L148.8,1240.2 L152.5,1240.2 L156.2,1240.2 L159.9,1240.2 L163.6,1240.2 L167.3,1208.9 L171.0,1208.9 L174.6,1240.2 L178.3,1240.2 L182.0,1234.0 L185.7,1234.0 L189.4,1240.2 L193.1,1240.2 L196.8,1240.2 L200.4,1240.2 L204.1,1228.0 L207.8,1228.0 L211.5,1196.6 L215.2,1196.6 L218.9,1240.2 L222.6,1240.2 L226.2,1190.9 L229.9,1190.9 L233.6,950.4 L237.3,950.4 L241.0,1240.2 L244.7,1240.2 L248.4,1240.2 L252.1,1240.2 L255.7,1240.2 L259.4,1240.2 L263.1,921.3 L266.8,921.3 L270.5,1240.2 L274.2,1240.2 L277.9,1240.2 L281.5,1240.2 L285.2,1240.2 L288.9,1240.2 L292.6,1240.2 L296.3,1240.2 L300.0,1240.2 L303.7,1240.2 L307.3,1155.7 L311.0,1155.7 L314.7,1240.2 L318.4,1240.2 L322.1,1173.4 L325.8,1173.4 L329.5,1240.2 L333.1,1240.2 L336.8,1240.2 L340.5,1240.2 L344.2,1240.2 L347.9,1240.2 L351.6,1240.2 L355.3,1240.2 L359.0,1237.2 L362.6,1237.2 L366.3,1240.2 L370.0,1240.2 L373.7,1240.2 L377.4,1240.2 L381.1,1240.2 L384.8,1240.2 L388.4,1225.8 L392.1,1225.8 L395.8,1240.2 L399.5,1240.2 L403.2,1189.5 L406.9,1189.5 L410.6,1240.2 L414.2,1240.2 L417.9,1240.2 L421.6,1240.2 L425.3,1218.4 L429.0,1218.4 L432.7,1227.7 L436.4,1227.7 L440.0,1240.2 L443.7,1240.2 L447.4,1042.3 L451.1,1042.3 L454.8,1069.0 L458.5,1069.0 L462.2,1178.9 L465.9,1178.9 L469.5,1189.8 L473.2,1189.8 L476.9,1240.2 L480.6,1240.2 L484.3,1240.2 L488.0,1240.2 L491.7,1240.2 L495.3,1240.2 L499.0,1196.6 L502.7,1196.6 L506.4,1240.2 L510.1,1240.2 L513.8,1240.2 L517.5,1240.2 L521.1,1240.2 L524.8,1240.2 L528.5,1210.8 L532.2,1210.8 L535.9,1240.2 L539.6,1240.2 L543.3,1240.2 L547.0,1240.2 L550.6,1192.2 L554.3,1192.2 L558.0,1240.2 L561.7,1240.2 L565.4,1240.2 L569.1,1240.2 L572.8,1240.2 L576.4,1240.2 L580.1,1184.9 L583.8,1184.9 L587.5,1240.2 L591.2,1240.2 L594.9,1240.2 L598.6,1240.2 L602.2,1240.2 L605.9,1240.2 L609.6,1240.2 L613.3,1240.2 L617.0,1050.8 L620.7,1050.8 L624.4,1240.2 L628.0,1240.2 L631.7,1229.3 L635.4,1229.3 L639.1,1240.2 L642.8,1240.2 L646.5,981.2 L650.2,981.2 L653.9,1240.2 L657.5,1240.2 L661.2,1225.8 L664.9,1225.8 L668.6,1221.7 L672.3,1221.7 L676.0,1240.2 L679.7,1240.2 L683.3,1240.2 L687.0,1240.2 L690.7,1240.2 L694.4,1240.2 L698.1,1150.0 L701.8,1150.0 L705.5,1147.3 L709.1,1147.3 L712.8,1240.2 L716.5,1240.2 L720.2,1240.2 L723.9,1240.2 L727.6,1240.2 L731.3,1240.2 L734.9,1240.2 L738.6,1240.2 L742.3,1240.2 L746.0,1240.2 L749.7,1240.2 L753.4,1240.2 L757.1,1240.2 L760.8,1240.2 L764.4,1216.2 L768.1,1216.2 L771.8,1240.2 L775.5,1240.2 L779.2,1240.2 L782.9,1240.2 L786.6,1240.2 L790.2,1240.2 L793.9,1195.0 L797.6,1195.0 L801.3,1240.2 L805.0,1240.2 L808.7,1228.0 L812.4,1228.0 L816.0,1240.2 L819.7,1240.2 L823.4,1240.2 L827.1,1240.2 L830.8,1240.2 L834.5,1240.2 L838.2,1240.2 L841.9,1240.2 L845.5,1193.1 L849.2,1193.1 L852.9,1240.2 L856.6,1240.2 L860.3,1240.2 L864.0,1240.2 L867.7,1094.1 L871.3,1094.1 L875.0,1126.3 L878.7,1126.3 L882.4,1195.2 L886.1,1195.2 L889.8,1199.9 L893.5,1199.9 L897.1,1232.6 L900.8,1232.6 L904.5,1229.3 L908.2,1229.3 L911.9,1240.2 L915.6,1240.2 L919.3,1144.0 L922.9,1144.0 L926.6,1240.2 L930.3,1240.2 L934.0,1240.2 L937.7,1240.2 L941.4,1240.2 L945.1,1240.2 L948.8,1240.2 L952.4,1240.2 L956.1,1240.2 L959.8,1240.2 L963.5,1186.8 L967.2,1186.8 L970.9,1240.2 L974.6,1240.2 L978.2,1106.6 L981.9,1106.6 L985.6,1047.2 L989.3,1047.2 L993.0,1240.2 L996.7,1240.2 L996.7,1240 L112.0,1240 Z" fill="#508642" fill-opacity="0.1" stroke="none"/>
<path d="M112.0,1224.4 L115.7,1240.2 L119.3,1240.2 L123.0,1208.1 L126.7,1208.1 L130.4,1184.9 L134.1,1184.9 L137.8,1240.2 L141.5,1240.2 L145.1,1240.2 L148.8,1240.2 L152.5,1240.2 L156.2,1240.2 L159.9,1240.2 L163.6,1240.2 L167.3,1208.9 L171.0,1208.9 L174.6,1240.2 L178.3,1240.2 L182.0,1234.0 L185.7,1234.0 L189.4,1240.2 L193.1,1240.2 L196.8,1240.2 L200.4,1240.2 L204.1,1228.0 L207.8,1228.0 L211.5,1196.6 L215.2,1196.6 L218.9,1240.2 L222.6,1240.2 L226.2,1190.9 L229.9,1190.9 L233.6,950.4 L237.3,950.4 L241.0,1240.2 L244.7,1240.2 L248.4,1240.2 L252.1,1240.2 L255.7,1240.2 L259.4,1240.2 L263.1,921.3 L266.8,921.3 L270.5,1240.2 L274.2,1240.2 L277.9,1240.2 L281.5,1240.2 L285.2,1240.2 L288.9,1240.2 L292.6,1240.2 L296.3,1240.2 L300.0,1240.2 L303.7,1240.2 L307.3,1155.7 L311.0,1155.7 L314.7,1240.2 L318.4,1240.2 L322.1,1173.4 L325.8,1173.4 L329.5,1240.2 L333.1,1240.2 L336.8,1240.2 L340.5,1240.2 L344.2,1240.2 L347.9,1240.2 L351.6,1240.2 L355.3,1240.2 L359.0,1237.2 L362.6,1237.2 L366.3,1240.2 L370.0,1240.2 L373.7,1240.2 L377.4,1240.2 L381.1,1240.2 L384.8,1240.2 L388.4,1225.8 L392.1,1225.8 L395.8,1240.2 L399.5,1240.2 L403.2,1189.5 L406.9,1189.5 L410.6,1240.2 L414.2,1240.2 L417.9,1240.2 L421.6,1240.2 L425.3,1218.4 L429.0,1218.4 L432.7,1227.7 L436.4,1227.7 L440.0,1240.2 L443.7,1240.2 L447.4,1042.3 L451.1,1042.3 L454.8,1069.0 L458.5,1069.0 L462.2,1178.9 L465.9,1178.9 L469.5,1189.8 L473.2,1189.8 L476.9,1240.2 L480.6,1240.2 L484.3,1240.2 L488.0,1240.2 L491.7,1240.2 L495.3,1240.2 L499.0,1196.6 L502.7,1196.6 L506.4,1240.2 L510.1,1240.2 L513.8,1240.2 L517.5,1240.2 L521.1,1240.2 L524.8,1240.2 L528.5,1210.8 L532.2,1210.8 L535.9,1240.2 L539.6,1240.2 L543.3,1240.2 L547.0,1240.2 L550.6,1192.2 L554.3,1192.2 L558.0,1240.2 L561.7,1240.2 L565.4,1240.2 L569.1,1240.2 L572.8,1240.2 L576.4,1240.2 L580.1,1184.9 L583.8,1184.9 L587.5,1240.2 L591.2,1240.2 L594.9,1240.2 L598.6,1240.2 L602.2,1240.2 L605.9,1240.2 L609.6,1240.2 L613.3,1240.2 L617.0,1050.8 L620.7,1050.8 L624.4,1240.2 L628.0,1240.2 L631.7,1229.3 L635.4,1229.3 L639.1,1240.2 L642.8,1240.2 L646.5,981.2 L650.2,981.2 L653.9,1240.2 L657.5,1240.2 L661.2,1225.8 L664.9,1225.8 L668.6,1221.7 L672.3,1221.7 L676.0,1240.2 L679.7,1240.2 L683.3,1240.2 L687.0,1240.2 L690.7,1240.2 L694.4,1240.2 L698.1,1150.0 L701.8,1150.0 L705.5,1147.3 L709.1,1147.3 L712.8,1240.2 L716.5,1240.2 L720.2,1240.2 L723.9,1240.2 L727.6,1240.2 L731.3,1240.2 L734.9,1240.2 L738.6,1240.2 L742.3,1240.2 L746.0,1240.2 L749.7,1240.2 L753.4,1240.2 L757.1,1240.2 L760.8,1240.2 L764.4,1216.2 L768.1,1216.2 L771.8,1240.2 L775.5,1240.2 L779.2,1240.2 L782.9,1240.2 L786.6,1240.2 L790.2,1240.2 L793.9,1195.0 L797.6,1195.0 L801.3,1240.2 L805.0,1240.2 L808.7,1228.0 L812.4,1228.0 L816.0,1240.2 L819.7,1240.2 L823.4,1240.2 L827.1,1240.2 L830.8,1240.2 L834.5,1240.2 L838.2,1240.2 L841.9,1240.2 L845.5,1193.1 L849.2,1193.1 L852.9,1240.2 L856.6,1240.2 L860.3,1240.2 L864.0,1240.2 L867.7,1094.1 L871.3,1094.1 L875.0,1126.3 L878.7,1126.3 L882.4,1195.2 L886.1,1195.2 L889.8,1199.9 L893.5,1199.9 L897.1,1232.6 L900.8,1232.6 L904.5,1229.3 L908.2,1229.3 L911.9,1240.2 L915.6,1240.2 L919.3,1144.0 L922.9,1144.0 L926.6,1240.2 L930.3,1240.2 L934.0,1240.2 L937.7,1240.2 L941.4,1240.2 L945.1,1240.2 L948.8,1240.2 L952.4,1240.2 L956.1,1240.2 L959.8,1240.2 L963.5,1186.8 L967.2,1186.8 L970.9,1240.2 L974.6,1240.2 L978.2,1106.6 L981.9,1106.6 L985.6,1047.2 L989.3,1047.2 L993.0,1240.2 L996.7,1240.2" fill="none" stroke="#5d854a" stroke-width="2" stroke-linejoin="round"/>
<path d="M112.0,1224.4 L115.7,1240.2 L119.3,1240.2 L123.0,1208.1 L126.7,1208.1 L130.4,1184.9 L134.1,1184.9 L137.8,1240.2 L141.5,1240.2 L145.1,1240.2 L148.8,1240.2 L152.5,1240.2 L156.2,1240.2 L159.9,1240.2 L163.6,1240.2 L167.3,1208.9 L171.0,1208.9 L174.6,1240.2 L178.3,1240.2 L182.0,1234.0 L185.7,1234.0 L189.4,1240.2 L193.1,1240.2 L196.8,1240.2 L200.4,1240.2 L204.1,1228.0 L207.8,1228.0 L211.5,1196.6 L215.2,1196.6 L218.9,1240.2 L222.6,1240.2 L226.2,1190.9 L229.9,1190.9 L233.6,950.4 L237.3,950.4 L241.0,1240.2 L244.7,1240.2 L248.4,1240.2 L252.1,1240.2 L255.7,1240.2 L259.4,1240.2 L263.1,921.3 L266.8,921.3 L270.5,1240.2 L274.2,1240.2 L277.9,1240.2 L281.5,1240.2 L285.2,1240.2 L288.9,1240.2 L292.6,1240.2 L296.3,1240.2 L300.0,1240.2 L303.7,1240.2 L307.3,1155.7 L311.0,1155.7 L314.7,1240.2 L318.4,1240.2 L322.1,1173.4 L325.8,1173.4 L329.5,1240.2 L333.1,1240.2 L336.8,1240.2 L340.5,1240.2 L344.2,1240.2 L347.9,1240.2 L351.6,1240.2 L355.3,1240.2 L359.0,1237.2 L362.6,1237.2 L366.3,1240.2 L370.0,1240.2 L373.7,1240.2 L377.4,1240.2 L381.1,1240.2 L384.8,1240.2 L388.4,1225.8 L392.1,1225.8 L395.8,1240.2 L399.5,1240.2 L403.2,1189.5 L406.9,1189.5 L410.6,1240.2 L414.2,1240.2 L417.9,1240.2 L421.6,1240.2 L425.3,1218.4 L429.0,1218.4 L432.7,1227.7 L436.4,1227.7 L440.0,1240.2 L443.7,1240.2 L447.4,1042.3 L451.1,1042.3 L454.8,1069.0 L458.5,1069.0 L462.2,1178.9 L465.9,1178.9 L469.5,1189.8 L473.2,1189.8 L476.9,1240.2 L480.6,1240.2 L484.3,1240.2 L488.0,1240.2 L491.7,1240.2 L495.3,1240.2 L499.0,1196.6 L502.7,1196.6 L506.4,1240.2 L510.1,1240.2 L513.8,1240.2 L517.5,1240.2 L521.1,1240.2 L524.8,1240.2 L528.5,1210.8 L532.2,1210.8 L535.9,1240.2 L539.6,1240.2 L543.3,1240.2 L547.0,1240.2 L550.6,1192.2 L554.3,1192.2 L558.0,1240.2 L561.7,1240.2 L565.4,1240.2 L569.1,1240.2 L572.8,1240.2 L576.4,1240.2 L580.1,1184.9 L583.8,1184.9 L587.5,1240.2 L591.2,1240.2 L594.9,1240.2 L598.6,1240.2 L602.2,1240.2 L605.9,1240.2 L609.6,1240.2 L613.3,1240.2 L617.0,1050.8 L620.7,1050.8 L624.4,1240.2 L628.0,1240.2 L631.7,1229.3 L635.4,1229.3 L639.1,1240.2 L642.8,1240.2 L646.5,981.2 L650.2,981.2 L653.9,1240.2 L657.5,1240.2 L661.2,1225.8 L664.9,1225.8 L668.6,1221.7 L672.3,1221.7 L676.0,1240.2 L679.7,1240.2 L683.3,1240.2 L687.0,1240.2 L690.7,1240.2 L694.4,1240.2 L698.1,1150.0 L701.8,1150.0 L705.5,1147.3 L709.1,1147.3 L712.8,1240.2 L716.5,1240.2 L720.2,1240.2 L723.9,1240.2 L727.6,1240.2 L731.3,1240.2 L734.9,1240.2 L738.6,1240.2 L742.3,1240.2 L746.0,1240.2 L749.7,1240.2 L753.4,1240.2 L757.1,1240.2 L760.8,1240.2 L764.4,1216.2 L768.1,1216.2 L771.8,1240.2 L775.5,1240.2 L779.2,1240.2 L782.9,1240.2 L786.6,1240.2 L790.2,1240.2 L793.9,1195.0 L797.6,1195.0 L801.3,1240.2 L805.0,1240.2 L808.7,1228.0 L812.4,1228.0 L816.0,1240.2 L819.7,1240.2 L823.4,1240.2 L827.1,1240.2 L830.8,1240.2 L834.5,1240.2 L838.2,1240.2 L841.9,1240.2 L845.5,1193.1 L849.2,1193.1 L852.9,1240.2 L856.6,1240.2 L860.3,1240.2 L864.0,1240.2 L867.7,1094.1 L871.3,1094.1 L875.0,1126.3 L878.7,1126.3 L882.4,1195.2 L886.1,1195.2 L889.8,1199.9 L893.5,1199.9 L897.1,1232.6 L900.8,1232.6 L904.5,1229.3 L908.2,1229.3 L911.9,1240.2 L915.6,1240.2 L919.3,1144.0 L922.9,1144.0 L926.6,1240.2 L930.3,1240.2 L934.0,1240.2 L937.7,1240.2 L941.4,1240.2 L945.1,1240.2 L948.8,1240.2 L952.4,1240.2 L956.1,1240.2 L959.8,1240.2 L963.5,1186.8 L967.2,1186.8 L970.9,1240.2 L974.6,1240.2 L978.2,1106.6 L981.9,1106.6 L985.6,1047.2 L989.3,1047.2 L993.0,1240.2 L996.7,1240.2 L996.7,1240 L112.0,1240 Z" fill="#CCA300" fill-opacity="0.1" stroke="none"/>
<path d="M112.0,1224.4 L115.7,1240.2 L119.3,1240.2 L123.0,1208.1 L126.7,1208.1 L130.4,1184.9 L134.1,1184.9 L137.8,1240.2 L141.5,1240.2 L145.1,1240.2 L148.8,1240.2 L152.5,1240.2 L156.2,1240.2 L159.9,1240.2 L163.6,1240.2 L167.3,1208.9 L171.0,1208.9 L174.6,1240.2 L178.3,1240.2 L182.0,1234.0 L185.7,1234.0 L189.4,1240.2 L193.1,1240.2 L196.8,1240.2 L200.4,1240.2 L204.1,1228.0 L207.8,1228.0 L211.5,1196.6 L215.2,1196.6 L218.9,1240.2 L222.6,1240.2 L226.2,1190.9 L229.9,1190.9 L233.6,950.4 L237.3,950.4 L241.0,1240.2 L244.7,1240.2 L248.4,1240.2 L252.1,1240.2 L255.7,1240.2 L259.4,1240.2 L263.1,921.3 L266.8,921.3 L270.5,1240.2 L274.2,1240.2 L277.9,1240.2 L281.5,1240.2 L285.2,1240.2 L288.9,1240.2 L292.6,1240.2 L296.3,1240.2 L300.0,1240.2 L303.7,1240.2 L307.3,1155.7 L311.0,1155.7 L314.7,1240.2 L318.4,1240.2 L322.1,1173.4 L325.8,1173.4 L329.5,1240.2 L333.1,1240.2 L336.8,1240.2 L340.5,1240.2 L344.2,1240.2 L347.9,1240.2 L351.6,1240.2 L355.3,1240.2 L359.0,1237.2 L362.6,1237.2 L366.3,1240.2 L370.0,1240.2 L373.7,1240.2 L377.4,1240.2 L381.1,1240.2 L384.8,1240.2 L388.4,1225.8 L392.1,1225.8 L395.8,1240.2 L399.5,1240.2 L403.2,1189.5 L406.9,1189.5 L410.6,1240.2 L414.2,1240.2 L417.9,1240.2 L421.6,1240.2 L425.3,1218.4 L429.0,1218.4 L432.7,1227.7 L436.4,1227.7 L440.0,1240.2 L443.7,1240.2 L447.4,1042.3 L451.1,1042.3 L454.8,1069.0 L458.5,1069.0 L462.2,1178.9 L465.9,1178.9 L469.5,1189.8 L473.2,1189.8 L476.9,1240.2 L480.6,1240.2 L484.3,1240.2 L488.0,1240.2 L491.7,1240.2 L495.3,1240.2 L499.0,1196.6 L502.7,1196.6 L506.4,1240.2 L510.1,1240.2 L513.8,1240.2 L517.5,1240.2 L521.1,1240.2 L524.8,1240.2 L528.5,1210.8 L532.2,1210.8 L535.9,1240.2 L539.6,1240.2 L543.3,1240.2 L547.0,1240.2 L550.6,1192.2 L554.3,1192.2 L558.0,1240.2 L561.7,1240.2 L565.4,1240.2 L569.1,1240.2 L572.8,1240.2 L576.4,1240.2 L580.1,1184.9 L583.8,1184.9 L587.5,1240.2 L591.2,1240.2 L594.9,1240.2 L598.6,1240.2 L602.2,1240.2 L605.9,1240.2 L609.6,1240.2 L613.3,1240.2 L617.0,1050.8 L620.7,1050.8 L624.4,1240.2 L628.0,1240.2 L631.7,1229.3 L635.4,1229.3 L639.1,1240.2 L642.8,1240.2 L646.5,981.2 L650.2,981.2 L653.9,1240.2 L657.5,1240.2 L661.2,1225.8 L664.9,1225.8 L668.6,1221.7 L672.3,1221.7 L676.0,1240.2 L679.7,1240.2 L683.3,1240.2 L687.0,1240.2 L690.7,1240.2 L694.4,1240.2 L698.1,1150.0 L701.8,1150.0 L705.5,1147.3 L709.1,1147.3 L712.8,1240.2 L716.5,1240.2 L720.2,1240.2 L723.9,1240.2 L727.6,1240.2 L731.3,1240.2 L734.9,1240.2 L738.6,1240.2 L742.3,1240.2 L746.0,1240.2 L749.7,1240.2 L753.4,1240.2 L757.1,1240.2 L760.8,1240.2 L764.4,1216.2 L768.1,1216.2 L771.8,1240.2 L775.5,1240.2 L779.2,1240.2 L782.9,1240.2 L786.6,1240.2 L790.2,1240.2 L793.9,1195.0 L797.6,1195.0 L801.3,1240.2 L805.0,1240.2 L808.7,1228.0 L812.4,1228.0 L816.0,1240.2 L819.7,1240.2 L823.4,1240.2 L827.1,1240.2 L830.8,1240.2 L834.5,1240.2 L838.2,1240.2 L841.9,1240.2 L845.5,1193.1 L849.2,1193.1 L852.9,1240.2 L856.6,1240.2 L860.3,1240.2 L864.0,1240.2 L867.7,1094.1 L871.3,1094.1 L875.0,1126.3 L878.7,1126.3 L882.4,1195.2 L886.1,1195.2 L889.8,1199.9 L893.5,1199.9 L897.1,1232.6 L900.8,1232.6 L904.5,1229.3 L908.2,1229.3 L911.9,1240.2 L915.6,1240.2 L919.3,1144.0 L922.9,1144.0 L926.6,1240.2 L930.3,1240.2 L934.0,1240.2 L937.7,1240.2 L941.4,1240.2 L945.1,1240.2 L948.8,1240.2 L952.4,1240.2 L956.1,1240.2 L959.8,1240.2 L963.5,1186.8 L967.2,1186.8 L970.9,1240.2 L974.6,1240.2 L978.2,1106.6 L981.9,1106.6 L985.6,1047.2 L989.3,1047.2 L993.0,1240.2 L996.7,1240.2" fill="none" stroke="#c6a536" stroke-width="2" stroke-linejoin="round"/>
</g>
<rect x="1292" y="878" width="884.6999999999998" height="2" fill="rgba(255,255,255,0.18)"/>
<rect x="1292" y="938" width="884.6999999999998" height="2" fill="rgba(255,255,255,0.18)"/>
<rect x="1292" y="998" width="884.6999999999998" height="2" fill="rgba(255,255,255,0.18)"/>
<rect x="1292" y="1058" width="884.6999999999998" height="2" fill="rgba(255,255,255,0.18)"/>
<rect x="1292" y="1118" width="884.6999999999998" height="2" fill="rgba(255,255,255,0.18)"/>
<rect x="1292" y="1178" width="884.6999999999998" height="2" fill="rgba(255,255,255,0.18)"/>
<rect x="1292" y="1240" width="884.6999999999998" height="2" fill="rgba(255,255,255,0.18)"/>
<rect x="1414" y="878" width="2" height="362" fill="rgba(255,255,255,0.18)"/>
<rect x="1562" y="878" width="2" height="362" fill="rgba(255,255,255,0.18)"/>
<rect x="1710" y="878" width="2" height="362" fill="rgba(255,255,255,0.18)"/>
<rect x="1856" y="878" width="2" height="362" fill="rgba(255,255,255,0.18)"/>
<rect x="2004" y="878" width="2" height="362" fill="rgba(255,255,255,0.18)"/>
<rect x="2152" y="878" width="2" height="362" fill="rgba(255,255,255,0.18)"/>
<clipPath id="c3"><rect x="1292" y="873" width="884.6999999999998" height="369"/></clipPath>
<g clip-path="url(#c3)">
<path d="M1290.0,1240.2 L1293.7,1240.2 L1297.3,1240.2 L1301.0,1240.2 L1304.7,1240.2 L1308.4,1240.2 L1312.1,1240.2 L1315.8,1240.2 L1319.5,1240.2 L1323.1,1083.2 L1326.8,1083.2 L1330.5,1112.1 L1334.2,1112.1 L1337.9,1240.2 L1341.6,1240.2 L1345.3,1240.2 L1349.0,1240.2 L1352.6,1240.2 L1356.3,1240.2 L1360.0,1160.9 L1363.7,1160.9 L1367.4,1240.2 L1371.1,1240.2 L1374.8,1240.2 L1378.4,1240.2 L1382.1,1240.2 L1385.8,1240.2 L1389.5,1185.7 L1393.2,1185.7 L1396.9,1240.2 L1400.6,1240.2 L1404.2,1240.2 L1407.9,1240.2 L1411.6,1213.0 L1415.3,1213.0 L1419.0,1240.2 L1422.7,1240.2 L1426.4,1240.2 L1430.1,1240.2 L1433.7,1101.7 L1437.4,1101.7 L1441.1,1096.8 L1444.8,1096.8 L1448.5,1216.2 L1452.2,1216.2 L1455.9,1240.2 L1459.5,1240.2 L1463.2,1240.2 L1466.9,1240.2 L1470.6,1193.9 L1474.3,1193.9 L1478.0,1240.2 L1481.7,1240.2 L1485.3,1238.0 L1489.0,1238.0 L1492.7,1240.2 L1496.4,1240.2 L1500.1,1240.2 L1503.8,1240.2 L1507.5,1152.2 L1511.1,1152.2 L1514.8,1240.2 L1518.5,1240.2 L1522.2,1015.9 L1525.9,1015.9 L1529.6,1240.2 L1533.3,1240.2 L1537.0,974.4 L1540.6,974.4 L1544.3,1240.2 L1548.0,1240.2 L1551.7,1240.2 L1555.4,1240.2 L1559.1,1154.1 L1562.8,1154.1 L1566.4,1225.8 L1570.1,1225.8 L1573.8,1240.2 L1577.5,1240.2 L1581.2,1194.4 L1584.9,1194.4 L1588.6,1187.6 L1592.2,1187.6 L1595.9,1240.2 L1599.6,1240.2 L1603.3,1200.4 L1607.0,1200.4 L1610.7,1240.2 L1614.4,1240.2 L1618.0,1240.2 L1621.7,1240.2 L1625.4,1240.2 L1629.1,1240.2 L1632.8,1240.2 L1636.5,1240.2 L1640.2,1240.2 L1643.9,1240.2 L1647.5,1208.1 L1651.2,1208.1 L1654.9,1240.2 L1658.6,1240.2 L1662.3,1171.3 L1666.0,1171.3 L1669.7,1178.1 L1673.3,1178.1 L1677.0,1208.9 L1680.7,1208.9 L1684.4,1163.1 L1688.1,1163.1 L1691.8,1240.2 L1695.5,1240.2 L1699.1,1185.4 L1702.8,1185.4 L1706.5,1218.4 L1710.2,1218.4 L1713.9,1240.2 L1717.6,1240.2 L1721.3,1129.0 L1725.0,1129.0 L1728.6,985.0 L1732.3,985.0 L1736.0,1240.2 L1739.7,1240.2 L1743.4,1240.2 L1747.1,1240.2 L1750.8,1240.2 L1754.4,1240.2 L1758.1,1034.1 L1761.8,1034.1 L1765.5,1196.6 L1769.2,1196.6 L1772.9,1240.2 L1776.6,1240.2 L1780.2,1120.8 L1783.9,1120.8 L1787.6,1240.2 L1791.3,1240.2 L1795.0,1240.2 L1798.7,1240.2 L1802.4,1240.2 L1806.0,1240.2 L1809.7,1240.2 L1813.4,1240.2 L1817.1,1240.2 L1820.8,1240.2 L1824.5,1092.2 L1828.2,1092.2 L1831.9,1240.2 L1835.5,1240.2 L1839.2,1240.2 L1842.9,1240.2 L1846.6,1130.9 L1850.3,1130.9 L1854.0,1240.2 L1857.7,1240.2 L1861.3,1240.2 L1865.0,1240.2 L1868.7,1240.2 L1872.4,1240.2 L1876.1,1240.2 L1879.8,1240.2 L1883.5,1240.2 L1887.1,1240.2 L1890.8,1240.2 L1894.5,1240.2 L1898.2,1240.2 L1901.9,1240.2 L1905.6,1169.1 L1909.3,1169.1 L1912.9,1240.2 L1916.6,1240.2 L1920.3,1184.9 L1924.0,1184.9 L1927.7,1176.2 L1931.4,1176.2 L1935.1,1240.2 L1938.8,1240.2 L1942.4,1240.2 L1946.1,1240.2 L1949.8,1240.2 L1953.5,1240.2 L1957.2,1190.9 L1960.9,1190.9 L1964.6,1226.6 L1968.2,1226.6 L1971.9,1200.4 L1975.6,1200.4 L1979.3,1133.1 L1983.0,1133.1 L1986.7,1240.2 L1990.4,1240.2 L1994.0,1240.2 L1997.7,1240.2 L2001.4,1240.2 L2005.1,1240.2 L2008.8,1240.2 L2012.5,1240.2 L2016.2,1240.2 L2019.9,1240.2 L2023.5,1240.2 L2027.2,1240.2 L2030.9,1240.2 L2034.6,1240.2 L2038.3,1195.8 L2042.0,1195.8 L2045.7,1240.2 L2049.3,1240.2 L2053.0,1223.1 L2056.7,1223.1 L2060.4,1240.2 L2064.1,1240.2 L2067.8,1223.1 L2071.5,1223.1 L2075.1,1240.2 L2078.8,1240.2 L2082.5,1216.2 L2086.2,1216.2 L2089.9,1240.2 L2093.6,1240.2 L2097.3,1083.2 L2100.9,1083.2 L2104.6,943.1 L2108.3,943.1 L2112.0,1240.2 L2115.7,1240.2 L2119.4,1240.2 L2123.1,1240.2 L2126.8,1240.2 L2130.4,1240.2 L2134.1,1240.2 L2137.8,1240.2 L2141.5,1240.2 L2145.2,1240.2 L2148.9,1240.2 L2152.6,1240.2 L2156.2,1110.7 L2159.9,1110.7 L2163.6,1153.5 L2167.3,1153.5 L2171.0,1240.2 L2174.7,1240.2 L2174.7,1240 L1290.0,1240 Z" fill="#7EB26D" fill-opacity="0.1" stroke="none"/>
<path d="M1290.0,1240.2 L1293.7,1240.2 L1297.3,1240.2 L1301.0,1240.2 L1304.7,1240.2 L1308.4,1240.2 L1312.1,1240.2 L1315.8,1240.2 L1319.5,1240.2 L1323.1,1083.2 L1326.8,1083.2 L1330.5,1112.1 L1334.2,1112.1 L1337.9,1240.2 L1341.6,1240.2 L1345.3,1240.2 L1349.0,1240.2 L1352.6,1240.2 L1356.3,1240.2 L1360.0,1160.9 L1363.7,1160.9 L1367.4,1240.2 L1371.1,1240.2 L1374.8,1240.2 L1378.4,1240.2 L1382.1,1240.2 L1385.8,1240.2 L1389.5,1185.7 L1393.2,1185.7 L1396.9,1240.2 L1400.6,1240.2 L1404.2,1240.2 L1407.9,1240.2 L1411.6,1213.0 L1415.3,1213.0 L1419.0,1240.2 L1422.7,1240.2 L1426.4,1240.2 L1430.1,1240.2 L1433.7,1101.7 L1437.4,1101.7 L1441.1,1096.8 L1444.8,1096.8 L1448.5,1216.2 L1452.2,1216.2 L1455.9,1240.2 L1459.5,1240.2 L1463.2,1240.2 L1466.9,1240.2 L1470.6,1193.9 L1474.3,1193.9 L1478.0,1240.2 L1481.7,1240.2 L1485.3,1238.0 L1489.0,1238.0 L1492.7,1240.2 L1496.4,1240.2 L1500.1,1240.2 L1503.8,1240.2 L1507.5,1152.2 L1511.1,1152.2 L1514.8,1240.2 L1518.5,1240.2 L1522.2,1015.9 L1525.9,1015.9 L1529.6,1240.2 L1533.3,1240.2 L1537.0,974.4 L1540.6,974.4 L1544.3,1240.2 L1548.0,1240.2 L1551.7,1240.2 L1555.4,1240.2 L1559.1,1154.1 L1562.8,1154.1 L1566.4,1225.8 L1570.1,1225.8 L1573.8,1240.2 L1577.5,1240.2 L1581.2,1194.4 L1584.9,1194.4 L1588.6,1187.6 L1592.2,1187.6 L1595.9,1240.2 L1599.6,1240.2 L1603.3,1200.4 L1607.0,1200.4 L1610.7,1240.2 L1614.4,1240.2 L1618.0,1240.2 L1621.7,1240.2 L1625.4,1240.2 L1629.1,1240.2 L1632.8,1240.2 L1636.5,1240.2 L1640.2,1240.2 L1643.9,1240.2 L1647.5,1208.1 L1651.2,1208.1 L1654.9,1240.2 L1658.6,1240.2 L1662.3,1171.3 L1666.0,1171.3 L1669.7,1178.1 L1673.3,1178.1 L1677.0,1208.9 L1680.7,1208.9 L1684.4,1163.1 L1688.1,1163.1 L1691.8,1240.2 L1695.5,1240.2 L1699.1,1185.4 L1702.8,1185.4 L1706.5,1218.4 L1710.2,1218.4 L1713.9,1240.2 L1717.6,1240.2 L1721.3,1129.0 L1725.0,1129.0 L1728.6,985.0 L1732.3,985.0 L1736.0,1240.2 L1739.7,1240.2 L1743.4,1240.2 L1747.1,1240.2 L1750.8,1240.2 L1754.4,1240.2 L1758.1,1034.1 L1761.8,1034.1 L1765.5,1196.6 L1769.2,1196.6 L1772.9,1240.2 L1776.6,1240.2 L1780.2,1120.8 L1783.9,1120.8 L1787.6,1240.2 L1791.3,1240.2 L1795.0,1240.2 L1798.7,1240.2 L1802.4,1240.2 L1806.0,1240.2 L1809.7,1240.2 L1813.4,1240.2 L1817.1,1240.2 L1820.8,1240.2 L1824.5,1092.2 L1828.2,1092.2 L1831.9,1240.2 L1835.5,1240.2 L1839.2,1240.2 L1842.9,1240.2 L1846.6,1130.9 L1850.3,1130.9 L1854.0,1240.2 L1857.7,1240.2 L1861.3,1240.2 L1865.0,1240.2 L1868.7,1240.2 L1872.4,1240.2 L1876.1,1240.2 L1879.8,1240.2 L1883.5,1240.2 L1887.1,1240.2 L1890.8,1240.2 L1894.5,1240.2 L1898.2,1240.2 L1901.9,1240.2 L1905.6,1169.1 L1909.3,1169.1 L1912.9,1240.2 L1916.6,1240.2 L1920.3,1184.9 L1924.0,1184.9 L1927.7,1176.2 L1931.4,1176.2 L1935.1,1240.2 L1938.8,1240.2 L1942.4,1240.2 L1946.1,1240.2 L1949.8,1240.2 L1953.5,1240.2 L1957.2,1190.9 L1960.9,1190.9 L1964.6,1226.6 L1968.2,1226.6 L1971.9,1200.4 L1975.6,1200.4 L1979.3,1133.1 L1983.0,1133.1 L1986.7,1240.2 L1990.4,1240.2 L1994.0,1240.2 L1997.7,1240.2 L2001.4,1240.2 L2005.1,1240.2 L2008.8,1240.2 L2012.5,1240.2 L2016.2,1240.2 L2019.9,1240.2 L2023.5,1240.2 L2027.2,1240.2 L2030.9,1240.2 L2034.6,1240.2 L2038.3,1195.8 L2042.0,1195.8 L2045.7,1240.2 L2049.3,1240.2 L2053.0,1223.1 L2056.7,1223.1 L2060.4,1240.2 L2064.1,1240.2 L2067.8,1223.1 L2071.5,1223.1 L2075.1,1240.2 L2078.8,1240.2 L2082.5,1216.2 L2086.2,1216.2 L2089.9,1240.2 L2093.6,1240.2 L2097.3,1083.2 L2100.9,1083.2 L2104.6,943.1 L2108.3,943.1 L2112.0,1240.2 L2115.7,1240.2 L2119.4,1240.2 L2123.1,1240.2 L2126.8,1240.2 L2130.4,1240.2 L2134.1,1240.2 L2137.8,1240.2 L2141.5,1240.2 L2145.2,1240.2 L2148.9,1240.2 L2152.6,1240.2 L2156.2,1110.7 L2159.9,1110.7 L2163.6,1153.5 L2167.3,1153.5 L2171.0,1240.2 L2174.7,1240.2" fill="none" stroke="#89b174" stroke-width="2" stroke-linejoin="round"/>
<path d="M1290.0,1240.2 L1293.7,1240.2 L1297.3,1240.2 L1301.0,1240.2 L1304.7,1240.2 L1308.4,1240.2 L1312.1,1240.2 L1315.8,1240.2 L1319.5,1240.2 L1323.1,1083.2 L1326.8,1083.2 L1330.5,1112.1 L1334.2,1112.1 L1337.9,1240.2 L1341.6,1240.2 L1345.3,1240.2 L1349.0,1240.2 L1352.6,1240.2 L1356.3,1240.2 L1360.0,1160.9 L1363.7,1160.9 L1367.4,1240.2 L1371.1,1240.2 L1374.8,1240.2 L1378.4,1240.2 L1382.1,1240.2 L1385.8,1240.2 L1389.5,1185.7 L1393.2,1185.7 L1396.9,1240.2 L1400.6,1240.2 L1404.2,1240.2 L1407.9,1240.2 L1411.6,1213.0 L1415.3,1213.0 L1419.0,1240.2 L1422.7,1240.2 L1426.4,1240.2 L1430.1,1240.2 L1433.7,1101.7 L1437.4,1101.7 L1441.1,1096.8 L1444.8,1096.8 L1448.5,1216.2 L1452.2,1216.2 L1455.9,1240.2 L1459.5,1240.2 L1463.2,1240.2 L1466.9,1240.2 L1470.6,1193.9 L1474.3,1193.9 L1478.0,1240.2 L1481.7,1240.2 L1485.3,1238.0 L1489.0,1238.0 L1492.7,1240.2 L1496.4,1240.2 L1500.1,1240.2 L1503.8,1240.2 L1507.5,1152.2 L1511.1,1152.2 L1514.8,1240.2 L1518.5,1240.2 L1522.2,1015.9 L1525.9,1015.9 L1529.6,1240.2 L1533.3,1240.2 L1537.0,974.4 L1540.6,974.4 L1544.3,1240.2 L1548.0,1240.2 L1551.7,1240.2 L1555.4,1240.2 L1559.1,1154.1 L1562.8,1154.1 L1566.4,1225.8 L1570.1,1225.8 L1573.8,1240.2 L1577.5,1240.2 L1581.2,1194.4 L1584.9,1194.4 L1588.6,1187.6 L1592.2,1187.6 L1595.9,1240.2 L1599.6,1240.2 L1603.3,1200.4 L1607.0,1200.4 L1610.7,1240.2 L1614.4,1240.2 L1618.0,1240.2 L1621.7,1240.2 L1625.4,1240.2 L1629.1,1240.2 L1632.8,1240.2 L1636.5,1240.2 L1640.2,1240.2 L1643.9,1240.2 L1647.5,1208.1 L1651.2,1208.1 L1654.9,1240.2 L1658.6,1240.2 L1662.3,1199.9 L1666.0,1199.9 L1669.7,1178.1 L1673.3,1178.1 L1677.0,1208.9 L1680.7,1208.9 L1684.4,1163.1 L1688.1,1163.1 L1691.8,1240.2 L1695.5,1240.2 L1699.1,1185.4 L1702.8,1185.4 L1706.5,1218.4 L1710.2,1218.4 L1713.9,1240.2 L1717.6,1240.2 L1721.3,1129.0 L1725.0,1129.0 L1728.6,985.0 L1732.3,985.0 L1736.0,1240.2 L1739.7,1240.2 L1743.4,1240.2 L1747.1,1240.2 L1750.8,1240.2 L1754.4,1240.2 L1758.1,1034.1 L1761.8,1034.1 L1765.5,1196.6 L1769.2,1196.6 L1772.9,1240.2 L1776.6,1240.2 L1780.2,1120.8 L1783.9,1120.8 L1787.6,1240.2 L1791.3,1240.2 L1795.0,1240.2 L1798.7,1240.2 L1802.4,1240.2 L1806.0,1240.2 L1809.7,1240.2 L1813.4,1240.2 L1817.1,1240.2 L1820.8,1240.2 L1824.5,1236.7 L1828.2,1236.7 L1831.9,1240.2 L1835.5,1240.2 L1839.2,1240.2 L1842.9,1240.2 L1846.6,1130.9 L1850.3,1130.9 L1854.0,1240.2 L1857.7,1240.2 L1861.3,1240.2 L1865.0,1240.2 L1868.7,1240.2 L1872.4,1240.2 L1876.1,1240.2 L1879.8,1240.2 L1883.5,1240.2 L1887.1,1240.2 L1890.8,1240.2 L1894.5,1240.2 L1898.2,1240.2 L1901.9,1240.2 L1905.6,1169.1 L1909.3,1169.1 L1912.9,1240.2 L1916.6,1240.2 L1920.3,1184.9 L1924.0,1184.9 L1927.7,1176.2 L1931.4,1176.2 L1935.1,1240.2 L1938.8,1240.2 L1942.4,1240.2 L1946.1,1240.2 L1949.8,1240.2 L1953.5,1240.2 L1957.2,1190.9 L1960.9,1190.9 L1964.6,1226.6 L1968.2,1226.6 L1971.9,1200.4 L1975.6,1200.4 L1979.3,1133.1 L1983.0,1133.1 L1986.7,1240.2 L1990.4,1240.2 L1994.0,1240.2 L1997.7,1240.2 L2001.4,1240.2 L2005.1,1240.2 L2008.8,1240.2 L2012.5,1240.2 L2016.2,1240.2 L2019.9,1240.2 L2023.5,1240.2 L2027.2,1240.2 L2030.9,1240.2 L2034.6,1240.2 L2038.3,1195.8 L2042.0,1195.8 L2045.7,1240.2 L2049.3,1240.2 L2053.0,1223.1 L2056.7,1223.1 L2060.4,1240.2 L2064.1,1240.2 L2067.8,1223.1 L2071.5,1223.1 L2075.1,1240.2 L2078.8,1240.2 L2082.5,1216.2 L2086.2,1216.2 L2089.9,1240.2 L2093.6,1240.2 L2097.3,1083.2 L2100.9,1083.2 L2104.6,943.1 L2108.3,943.1 L2112.0,1240.2 L2115.7,1240.2 L2119.4,1240.2 L2123.1,1240.2 L2126.8,1240.2 L2130.4,1240.2 L2134.1,1240.2 L2137.8,1240.2 L2141.5,1240.2 L2145.2,1240.2 L2148.9,1240.2 L2152.6,1240.2 L2156.2,1110.7 L2159.9,1110.7 L2163.6,1153.5 L2167.3,1153.5 L2171.0,1240.2 L2174.7,1240.2 L2174.7,1240 L1290.0,1240 Z" fill="#EAB839" fill-opacity="0.1" stroke="none"/>
<path d="M1290.0,1240.2 L1293.7,1240.2 L1297.3,1240.2 L1301.0,1240.2 L1304.7,1240.2 L1308.4,1240.2 L1312.1,1240.2 L1315.8,1240.2 L1319.5,1240.2 L1323.1,1083.2 L1326.8,1083.2 L1330.5,1112.1 L1334.2,1112.1 L1337.9,1240.2 L1341.6,1240.2 L1345.3,1240.2 L1349.0,1240.2 L1352.6,1240.2 L1356.3,1240.2 L1360.0,1160.9 L1363.7,1160.9 L1367.4,1240.2 L1371.1,1240.2 L1374.8,1240.2 L1378.4,1240.2 L1382.1,1240.2 L1385.8,1240.2 L1389.5,1185.7 L1393.2,1185.7 L1396.9,1240.2 L1400.6,1240.2 L1404.2,1240.2 L1407.9,1240.2 L1411.6,1213.0 L1415.3,1213.0 L1419.0,1240.2 L1422.7,1240.2 L1426.4,1240.2 L1430.1,1240.2 L1433.7,1101.7 L1437.4,1101.7 L1441.1,1096.8 L1444.8,1096.8 L1448.5,1216.2 L1452.2,1216.2 L1455.9,1240.2 L1459.5,1240.2 L1463.2,1240.2 L1466.9,1240.2 L1470.6,1193.9 L1474.3,1193.9 L1478.0,1240.2 L1481.7,1240.2 L1485.3,1238.0 L1489.0,1238.0 L1492.7,1240.2 L1496.4,1240.2 L1500.1,1240.2 L1503.8,1240.2 L1507.5,1152.2 L1511.1,1152.2 L1514.8,1240.2 L1518.5,1240.2 L1522.2,1015.9 L1525.9,1015.9 L1529.6,1240.2 L1533.3,1240.2 L1537.0,974.4 L1540.6,974.4 L1544.3,1240.2 L1548.0,1240.2 L1551.7,1240.2 L1555.4,1240.2 L1559.1,1154.1 L1562.8,1154.1 L1566.4,1225.8 L1570.1,1225.8 L1573.8,1240.2 L1577.5,1240.2 L1581.2,1194.4 L1584.9,1194.4 L1588.6,1187.6 L1592.2,1187.6 L1595.9,1240.2 L1599.6,1240.2 L1603.3,1200.4 L1607.0,1200.4 L1610.7,1240.2 L1614.4,1240.2 L1618.0,1240.2 L1621.7,1240.2 L1625.4,1240.2 L1629.1,1240.2 L1632.8,1240.2 L1636.5,1240.2 L1640.2,1240.2 L1643.9,1240.2 L1647.5,1208.1 L1651.2,1208.1 L1654.9,1240.2 L1658.6,1240.2 L1662.3,1199.9 L1666.0,1199.9 L1669.7,1178.1 L1673.3,1178.1 L1677.0,1208.9 L1680.7,1208.9 L1684.4,1163.1 L1688.1,1163.1 L1691.8,1240.2 L1695.5,1240.2 L1699.1,1185.4 L1702.8,1185.4 L1706.5,1218.4 L1710.2,1218.4 L1713.9,1240.2 L1717.6,1240.2 L1721.3,1129.0 L1725.0,1129.0 L1728.6,985.0 L1732.3,985.0 L1736.0,1240.2 L1739.7,1240.2 L1743.4,1240.2 L1747.1,1240.2 L1750.8,1240.2 L1754.4,1240.2 L1758.1,1034.1 L1761.8,1034.1 L1765.5,1196.6 L1769.2,1196.6 L1772.9,1240.2 L1776.6,1240.2 L1780.2,1120.8 L1783.9,1120.8 L1787.6,1240.2 L1791.3,1240.2 L1795.0,1240.2 L1798.7,1240.2 L1802.4,1240.2 L1806.0,1240.2 L1809.7,1240.2 L1813.4,1240.2 L1817.1,1240.2 L1820.8,1240.2 L1824.5,1236.7 L1828.2,1236.7 L1831.9,1240.2 L1835.5,1240.2 L1839.2,1240.2 L1842.9,1240.2 L1846.6,1130.9 L1850.3,1130.9 L1854.0,1240.2 L1857.7,1240.2 L1861.3,1240.2 L1865.0,1240.2 L1868.7,1240.2 L1872.4,1240.2 L1876.1,1240.2 L1879.8,1240.2 L1883.5,1240.2 L1887.1,1240.2 L1890.8,1240.2 L1894.5,1240.2 L1898.2,1240.2 L1901.9,1240.2 L1905.6,1169.1 L1909.3,1169.1 L1912.9,1240.2 L1916.6,1240.2 L1920.3,1184.9 L1924.0,1184.9 L1927.7,1176.2 L1931.4,1176.2 L1935.1,1240.2 L1938.8,1240.2 L1942.4,1240.2 L1946.1,1240.2 L1949.8,1240.2 L1953.5,1240.2 L1957.2,1190.9 L1960.9,1190.9 L1964.6,1226.6 L1968.2,1226.6 L1971.9,1200.4 L1975.6,1200.4 L1979.3,1133.1 L1983.0,1133.1 L1986.7,1240.2 L1990.4,1240.2 L1994.0,1240.2 L1997.7,1240.2 L2001.4,1240.2 L2005.1,1240.2 L2008.8,1240.2 L2012.5,1240.2 L2016.2,1240.2 L2019.9,1240.2 L2023.5,1240.2 L2027.2,1240.2 L2030.9,1240.2 L2034.6,1240.2 L2038.3,1195.8 L2042.0,1195.8 L2045.7,1240.2 L2049.3,1240.2 L2053.0,1223.1 L2056.7,1223.1 L2060.4,1240.2 L2064.1,1240.2 L2067.8,1223.1 L2071.5,1223.1 L2075.1,1240.2 L2078.8,1240.2 L2082.5,1216.2 L2086.2,1216.2 L2089.9,1240.2 L2093.6,1240.2 L2097.3,1083.2 L2100.9,1083.2 L2104.6,943.1 L2108.3,943.1 L2112.0,1240.2 L2115.7,1240.2 L2119.4,1240.2 L2123.1,1240.2 L2126.8,1240.2 L2130.4,1240.2 L2134.1,1240.2 L2137.8,1240.2 L2141.5,1240.2 L2145.2,1240.2 L2148.9,1240.2 L2152.6,1240.2 L2156.2,1110.7 L2159.9,1110.7 L2163.6,1153.5 L2167.3,1153.5 L2171.0,1240.2 L2174.7,1240.2" fill="none" stroke="#e2ba53" stroke-width="2" stroke-linejoin="round"/>
<path d="M1290.0,1240.2 L1293.7,1240.2 L1297.3,1240.2 L1301.0,1240.2 L1304.7,1240.2 L1308.4,1240.2 L1312.1,1240.2 L1315.8,1240.2 L1319.5,1240.2 L1323.1,1083.2 L1326.8,1083.2 L1330.5,1112.1 L1334.2,1112.1 L1337.9,1240.2 L1341.6,1240.2 L1345.3,1240.2 L1349.0,1240.2 L1352.6,1240.2 L1356.3,1240.2 L1360.0,1160.9 L1363.7,1160.9 L1367.4,1240.2 L1371.1,1240.2 L1374.8,1240.2 L1378.4,1240.2 L1382.1,1240.2 L1385.8,1240.2 L1389.5,1185.7 L1393.2,1185.7 L1396.9,1240.2 L1400.6,1240.2 L1404.2,1240.2 L1407.9,1240.2 L1411.6,1213.0 L1415.3,1213.0 L1419.0,1240.2 L1422.7,1240.2 L1426.4,1240.2 L1430.1,1240.2 L1433.7,1101.7 L1437.4,1101.7 L1441.1,1096.8 L1444.8,1096.8 L1448.5,1216.2 L1452.2,1216.2 L1455.9,1240.2 L1459.5,1240.2 L1463.2,1240.2 L1466.9,1240.2 L1470.6,1193.9 L1474.3,1193.9 L1478.0,1240.2 L1481.7,1240.2 L1485.3,1238.0 L1489.0,1238.0 L1492.7,1240.2 L1496.4,1240.2 L1500.1,1240.2 L1503.8,1240.2 L1507.5,1152.2 L1511.1,1152.2 L1514.8,1240.2 L1518.5,1240.2 L1522.2,1015.9 L1525.9,1015.9 L1529.6,1240.2 L1533.3,1240.2 L1537.0,974.4 L1540.6,974.4 L1544.3,1240.2 L1548.0,1240.2 L1551.7,1240.2 L1555.4,1240.2 L1559.1,1154.1 L1562.8,1154.1 L1566.4,1225.8 L1570.1,1225.8 L1573.8,1240.2 L1577.5,1240.2 L1581.2,1194.4 L1584.9,1194.4 L1588.6,1187.6 L1592.2,1187.6 L1595.9,1240.2 L1599.6,1240.2 L1603.3,1200.4 L1607.0,1200.4 L1610.7,1240.2 L1614.4,1240.2 L1618.0,1240.2 L1621.7,1240.2 L1625.4,1240.2 L1629.1,1240.2 L1632.8,1240.2 L1636.5,1240.2 L1640.2,1240.2 L1643.9,1240.2 L1647.5,1208.1 L1651.2,1208.1 L1654.9,1240.2 L1658.6,1240.2 L1662.3,1171.3 L1666.0,1171.3 L1669.7,1178.1 L1673.3,1178.1 L1677.0,1208.9 L1680.7,1208.9 L1684.4,1163.1 L1688.1,1163.1 L1691.8,1240.2 L1695.5,1240.2 L1699.1,1185.4 L1702.8,1185.4 L1706.5,1218.4 L1710.2,1218.4 L1713.9,1240.2 L1717.6,1240.2 L1721.3,1129.0 L1725.0,1129.0 L1728.6,985.0 L1732.3,985.0 L1736.0,1240.2 L1739.7,1240.2 L1743.4,1240.2 L1747.1,1240.2 L1750.8,1240.2 L1754.4,1240.2 L1758.1,1034.1 L1761.8,1034.1 L1765.5,1196.6 L1769.2,1196.6 L1772.9,1240.2 L1776.6,1240.2 L1780.2,1120.8 L1783.9,1120.8 L1787.6,1240.2 L1791.3,1240.2 L1795.0,1240.2 L1798.7,1240.2 L1802.4,1240.2 L1806.0,1240.2 L1809.7,1240.2 L1813.4,1240.2 L1817.1,1240.2 L1820.8,1240.2 L1824.5,1092.2 L1828.2,1092.2 L1831.9,1240.2 L1835.5,1240.2 L1839.2,1240.2 L1842.9,1240.2 L1846.6,1130.9 L1850.3,1130.9 L1854.0,1240.2 L1857.7,1240.2 L1861.3,1240.2 L1865.0,1240.2 L1868.7,1240.2 L1872.4,1240.2 L1876.1,1240.2 L1879.8,1240.2 L1883.5,1240.2 L1887.1,1240.2 L1890.8,1240.2 L1894.5,1240.2 L1898.2,1240.2 L1901.9,1240.2 L1905.6,1169.1 L1909.3,1169.1 L1912.9,1240.2 L1916.6,1240.2 L1920.3,1184.9 L1924.0,1184.9 L1927.7,1176.2 L1931.4,1176.2 L1935.1,1240.2 L1938.8,1240.2 L1942.4,1240.2 L1946.1,1240.2 L1949.8,1240.2 L1953.5,1240.2 L1957.2,1190.9 L1960.9,1190.9 L1964.6,1226.6 L1968.2,1226.6 L1971.9,1200.4 L1975.6,1200.4 L1979.3,1133.1 L1983.0,1133.1 L1986.7,1240.2 L1990.4,1240.2 L1994.0,1240.2 L1997.7,1240.2 L2001.4,1240.2 L2005.1,1240.2 L2008.8,1240.2 L2012.5,1240.2 L2016.2,1240.2 L2019.9,1240.2 L2023.5,1240.2 L2027.2,1240.2 L2030.9,1240.2 L2034.6,1240.2 L2038.3,1195.8 L2042.0,1195.8 L2045.7,1240.2 L2049.3,1240.2 L2053.0,1223.1 L2056.7,1223.1 L2060.4,1240.2 L2064.1,1240.2 L2067.8,1223.1 L2071.5,1223.1 L2075.1,1240.2 L2078.8,1240.2 L2082.5,1216.2 L2086.2,1216.2 L2089.9,1240.2 L2093.6,1240.2 L2097.3,1083.2 L2100.9,1083.2 L2104.6,943.1 L2108.3,943.1 L2112.0,1240.2 L2115.7,1240.2 L2119.4,1240.2 L2123.1,1240.2 L2126.8,1240.2 L2130.4,1240.2 L2134.1,1240.2 L2137.8,1240.2 L2141.5,1240.2 L2145.2,1240.2 L2148.9,1240.2 L2152.6,1240.2 L2156.2,1110.7 L2159.9,1110.7 L2163.6,1153.5 L2167.3,1153.5 L2171.0,1240.2 L2174.7,1240.2 L2174.7,1240 L1290.0,1240 Z" fill="#6ED0E0" fill-opacity="0.1" stroke="none"/>
<path d="M1290.0,1240.2 L1293.7,1240.2 L1297.3,1240.2 L1301.0,1240.2 L1304.7,1240.2 L1308.4,1240.2 L1312.1,1240.2 L1315.8,1240.2 L1319.5,1240.2 L1323.1,1083.2 L1326.8,1083.2 L1330.5,1112.1 L1334.2,1112.1 L1337.9,1240.2 L1341.6,1240.2 L1345.3,1240.2 L1349.0,1240.2 L1352.6,1240.2 L1356.3,1240.2 L1360.0,1160.9 L1363.7,1160.9 L1367.4,1240.2 L1371.1,1240.2 L1374.8,1240.2 L1378.4,1240.2 L1382.1,1240.2 L1385.8,1240.2 L1389.5,1185.7 L1393.2,1185.7 L1396.9,1240.2 L1400.6,1240.2 L1404.2,1240.2 L1407.9,1240.2 L1411.6,1213.0 L1415.3,1213.0 L1419.0,1240.2 L1422.7,1240.2 L1426.4,1240.2 L1430.1,1240.2 L1433.7,1101.7 L1437.4,1101.7 L1441.1,1096.8 L1444.8,1096.8 L1448.5,1216.2 L1452.2,1216.2 L1455.9,1240.2 L1459.5,1240.2 L1463.2,1240.2 L1466.9,1240.2 L1470.6,1193.9 L1474.3,1193.9 L1478.0,1240.2 L1481.7,1240.2 L1485.3,1238.0 L1489.0,1238.0 L1492.7,1240.2 L1496.4,1240.2 L1500.1,1240.2 L1503.8,1240.2 L1507.5,1152.2 L1511.1,1152.2 L1514.8,1240.2 L1518.5,1240.2 L1522.2,1015.9 L1525.9,1015.9 L1529.6,1240.2 L1533.3,1240.2 L1537.0,974.4 L1540.6,974.4 L1544.3,1240.2 L1548.0,1240.2 L1551.7,1240.2 L1555.4,1240.2 L1559.1,1154.1 L1562.8,1154.1 L1566.4,1225.8 L1570.1,1225.8 L1573.8,1240.2 L1577.5,1240.2 L1581.2,1194.4 L1584.9,1194.4 L1588.6,1187.6 L1592.2,1187.6 L1595.9,1240.2 L1599.6,1240.2 L1603.3,1200.4 L1607.0,1200.4 L1610.7,1240.2 L1614.4,1240.2 L1618.0,1240.2 L1621.7,1240.2 L1625.4,1240.2 L1629.1,1240.2 L1632.8,1240.2 L1636.5,1240.2 L1640.2,1240.2 L1643.9,1240.2 L1647.5,1208.1 L1651.2,1208.1 L1654.9,1240.2 L1658.6,1240.2 L1662.3,1171.3 L1666.0,1171.3 L1669.7,1178.1 L1673.3,1178.1 L1677.0,1208.9 L1680.7,1208.9 L1684.4,1163.1 L1688.1,1163.1 L1691.8,1240.2 L1695.5,1240.2 L1699.1,1185.4 L1702.8,1185.4 L1706.5,1218.4 L1710.2,1218.4 L1713.9,1240.2 L1717.6,1240.2 L1721.3,1129.0 L1725.0,1129.0 L1728.6,985.0 L1732.3,985.0 L1736.0,1240.2 L1739.7,1240.2 L1743.4,1240.2 L1747.1,1240.2 L1750.8,1240.2 L1754.4,1240.2 L1758.1,1034.1 L1761.8,1034.1 L1765.5,1196.6 L1769.2,1196.6 L1772.9,1240.2 L1776.6,1240.2 L1780.2,1120.8 L1783.9,1120.8 L1787.6,1240.2 L1791.3,1240.2 L1795.0,1240.2 L1798.7,1240.2 L1802.4,1240.2 L1806.0,1240.2 L1809.7,1240.2 L1813.4,1240.2 L1817.1,1240.2 L1820.8,1240.2 L1824.5,1092.2 L1828.2,1092.2 L1831.9,1240.2 L1835.5,1240.2 L1839.2,1240.2 L1842.9,1240.2 L1846.6,1130.9 L1850.3,1130.9 L1854.0,1240.2 L1857.7,1240.2 L1861.3,1240.2 L1865.0,1240.2 L1868.7,1240.2 L1872.4,1240.2 L1876.1,1240.2 L1879.8,1240.2 L1883.5,1240.2 L1887.1,1240.2 L1890.8,1240.2 L1894.5,1240.2 L1898.2,1240.2 L1901.9,1240.2 L1905.6,1169.1 L1909.3,1169.1 L1912.9,1240.2 L1916.6,1240.2 L1920.3,1184.9 L1924.0,1184.9 L1927.7,1176.2 L1931.4,1176.2 L1935.1,1240.2 L1938.8,1240.2 L1942.4,1240.2 L1946.1,1240.2 L1949.8,1240.2 L1953.5,1240.2 L1957.2,1190.9 L1960.9,1190.9 L1964.6,1226.6 L1968.2,1226.6 L1971.9,1200.4 L1975.6,1200.4 L1979.3,1133.1 L1983.0,1133.1 L1986.7,1240.2 L1990.4,1240.2 L1994.0,1240.2 L1997.7,1240.2 L2001.4,1240.2 L2005.1,1240.2 L2008.8,1240.2 L2012.5,1240.2 L2016.2,1240.2 L2019.9,1240.2 L2023.5,1240.2 L2027.2,1240.2 L2030.9,1240.2 L2034.6,1240.2 L2038.3,1195.8 L2042.0,1195.8 L2045.7,1240.2 L2049.3,1240.2 L2053.0,1223.1 L2056.7,1223.1 L2060.4,1240.2 L2064.1,1240.2 L2067.8,1223.1 L2071.5,1223.1 L2075.1,1240.2 L2078.8,1240.2 L2082.5,1216.2 L2086.2,1216.2 L2089.9,1240.2 L2093.6,1240.2 L2097.3,1083.2 L2100.9,1083.2 L2104.6,943.1 L2108.3,943.1 L2112.0,1240.2 L2115.7,1240.2 L2119.4,1240.2 L2123.1,1240.2 L2126.8,1240.2 L2130.4,1240.2 L2134.1,1240.2 L2137.8,1240.2 L2141.5,1240.2 L2145.2,1240.2 L2148.9,1240.2 L2152.6,1240.2 L2156.2,1110.7 L2159.9,1110.7 L2163.6,1153.5 L2167.3,1153.5 L2171.0,1240.2 L2174.7,1240.2" fill="none" stroke="#86cede" stroke-width="2" stroke-linejoin="round"/>
<path d="M1290.0,1240.2 L1293.7,1240.2 L1297.3,1240.2 L1301.0,1240.2 L1304.7,1240.2 L1308.4,1240.2 L1312.1,1240.2 L1315.8,1240.2 L1319.5,1240.2 L1323.1,1083.2 L1326.8,1083.2 L1330.5,1112.1 L1334.2,1112.1 L1337.9,1240.2 L1341.6,1240.2 L1345.3,1240.2 L1349.0,1240.2 L1352.6,1240.2 L1356.3,1240.2 L1360.0,1160.9 L1363.7,1160.9 L1367.4,1240.2 L1371.1,1240.2 L1374.8,1240.2 L1378.4,1240.2 L1382.1,1240.2 L1385.8,1240.2 L1389.5,1185.7 L1393.2,1185.7 L1396.9,1240.2 L1400.6,1240.2 L1404.2,1240.2 L1407.9,1240.2 L1411.6,1213.0 L1415.3,1213.0 L1419.0,1240.2 L1422.7,1240.2 L1426.4,1240.2 L1430.1,1240.2 L1433.7,1101.7 L1437.4,1101.7 L1441.1,1096.8 L1444.8,1096.8 L1448.5,1216.2 L1452.2,1216.2 L1455.9,1240.2 L1459.5,1240.2 L1463.2,1240.2 L1466.9,1240.2 L1470.6,1193.9 L1474.3,1193.9 L1478.0,1240.2 L1481.7,1240.2 L1485.3,1238.0 L1489.0,1238.0 L1492.7,1240.2 L1496.4,1240.2 L1500.1,1240.2 L1503.8,1240.2 L1507.5,1152.2 L1511.1,1152.2 L1514.8,1240.2 L1518.5,1240.2 L1522.2,1015.9 L1525.9,1015.9 L1529.6,1240.2 L1533.3,1240.2 L1537.0,974.4 L1540.6,974.4 L1544.3,1240.2 L1548.0,1240.2 L1551.7,1240.2 L1555.4,1240.2 L1559.1,1154.1 L1562.8,1154.1 L1566.4,1225.8 L1570.1,1225.8 L1573.8,1240.2 L1577.5,1240.2 L1581.2,1194.4 L1584.9,1194.4 L1588.6,1187.6 L1592.2,1187.6 L1595.9,1240.2 L1599.6,1240.2 L1603.3,1200.4 L1607.0,1200.4 L1610.7,1240.2 L1614.4,1240.2 L1618.0,1240.2 L1621.7,1240.2 L1625.4,1240.2 L1629.1,1240.2 L1632.8,1240.2 L1636.5,1240.2 L1640.2,1240.2 L1643.9,1240.2 L1647.5,1208.1 L1651.2,1208.1 L1654.9,1240.2 L1658.6,1240.2 L1662.3,1171.3 L1666.0,1171.3 L1669.7,1178.1 L1673.3,1178.1 L1677.0,1208.9 L1680.7,1208.9 L1684.4,1163.1 L1688.1,1163.1 L1691.8,1240.2 L1695.5,1240.2 L1699.1,1185.4 L1702.8,1185.4 L1706.5,1218.4 L1710.2,1218.4 L1713.9,1240.2 L1717.6,1240.2 L1721.3,1129.0 L1725.0,1129.0 L1728.6,985.0 L1732.3,985.0 L1736.0,1240.2 L1739.7,1240.2 L1743.4,1240.2 L1747.1,1240.2 L1750.8,1240.2 L1754.4,1240.2 L1758.1,1034.1 L1761.8,1034.1 L1765.5,1196.6 L1769.2,1196.6 L1772.9,1240.2 L1776.6,1240.2 L1780.2,1120.8 L1783.9,1120.8 L1787.6,1240.2 L1791.3,1240.2 L1795.0,1240.2 L1798.7,1240.2 L1802.4,1240.2 L1806.0,1240.2 L1809.7,1240.2 L1813.4,1240.2 L1817.1,1240.2 L1820.8,1240.2 L1824.5,1092.2 L1828.2,1092.2 L1831.9,1240.2 L1835.5,1240.2 L1839.2,1240.2 L1842.9,1240.2 L1846.6,1130.9 L1850.3,1130.9 L1854.0,1240.2 L1857.7,1240.2 L1861.3,1240.2 L1865.0,1240.2 L1868.7,1240.2 L1872.4,1240.2 L1876.1,1240.2 L1879.8,1240.2 L1883.5,1240.2 L1887.1,1240.2 L1890.8,1240.2 L1894.5,1240.2 L1898.2,1240.2 L1901.9,1240.2 L1905.6,1169.1 L1909.3,1169.1 L1912.9,1240.2 L1916.6,1240.2 L1920.3,1184.9 L1924.0,1184.9 L1927.7,1176.2 L1931.4,1176.2 L1935.1,1240.2 L1938.8,1240.2 L1942.4,1240.2 L1946.1,1240.2 L1949.8,1240.2 L1953.5,1240.2 L1957.2,1190.9 L1960.9,1190.9 L1964.6,1226.6 L1968.2,1226.6 L1971.9,1200.4 L1975.6,1200.4 L1979.3,1133.1 L1983.0,1133.1 L1986.7,1240.2 L1990.4,1240.2 L1994.0,1240.2 L1997.7,1240.2 L2001.4,1240.2 L2005.1,1240.2 L2008.8,1240.2 L2012.5,1240.2 L2016.2,1240.2 L2019.9,1240.2 L2023.5,1240.2 L2027.2,1240.2 L2030.9,1240.2 L2034.6,1240.2 L2038.3,1195.8 L2042.0,1195.8 L2045.7,1240.2 L2049.3,1240.2 L2053.0,1223.1 L2056.7,1223.1 L2060.4,1240.2 L2064.1,1240.2 L2067.8,1223.1 L2071.5,1223.1 L2075.1,1240.2 L2078.8,1240.2 L2082.5,1216.2 L2086.2,1216.2 L2089.9,1240.2 L2093.6,1240.2 L2097.3,1083.2 L2100.9,1083.2 L2104.6,943.1 L2108.3,943.1 L2112.0,1240.2 L2115.7,1240.2 L2119.4,1240.2 L2123.1,1240.2 L2126.8,1240.2 L2130.4,1240.2 L2134.1,1240.2 L2137.8,1240.2 L2141.5,1240.2 L2145.2,1240.2 L2148.9,1240.2 L2152.6,1240.2 L2156.2,1110.7 L2159.9,1110.7 L2163.6,1153.5 L2167.3,1153.5 L2171.0,1240.2 L2174.7,1240.2 L2174.7,1240 L1290.0,1240 Z" fill="#EF843C" fill-opacity="0.1" stroke="none"/>
<path d="M1290.0,1240.2 L1293.7,1240.2 L1297.3,1240.2 L1301.0,1240.2 L1304.7,1240.2 L1308.4,1240.2 L1312.1,1240.2 L1315.8,1240.2 L1319.5,1240.2 L1323.1,1083.2 L1326.8,1083.2 L1330.5,1112.1 L1334.2,1112.1 L1337.9,1240.2 L1341.6,1240.2 L1345.3,1240.2 L1349.0,1240.2 L1352.6,1240.2 L1356.3,1240.2 L1360.0,1160.9 L1363.7,1160.9 L1367.4,1240.2 L1371.1,1240.2 L1374.8,1240.2 L1378.4,1240.2 L1382.1,1240.2 L1385.8,1240.2 L1389.5,1185.7 L1393.2,1185.7 L1396.9,1240.2 L1400.6,1240.2 L1404.2,1240.2 L1407.9,1240.2 L1411.6,1213.0 L1415.3,1213.0 L1419.0,1240.2 L1422.7,1240.2 L1426.4,1240.2 L1430.1,1240.2 L1433.7,1101.7 L1437.4,1101.7 L1441.1,1096.8 L1444.8,1096.8 L1448.5,1216.2 L1452.2,1216.2 L1455.9,1240.2 L1459.5,1240.2 L1463.2,1240.2 L1466.9,1240.2 L1470.6,1193.9 L1474.3,1193.9 L1478.0,1240.2 L1481.7,1240.2 L1485.3,1238.0 L1489.0,1238.0 L1492.7,1240.2 L1496.4,1240.2 L1500.1,1240.2 L1503.8,1240.2 L1507.5,1152.2 L1511.1,1152.2 L1514.8,1240.2 L1518.5,1240.2 L1522.2,1015.9 L1525.9,1015.9 L1529.6,1240.2 L1533.3,1240.2 L1537.0,974.4 L1540.6,974.4 L1544.3,1240.2 L1548.0,1240.2 L1551.7,1240.2 L1555.4,1240.2 L1559.1,1154.1 L1562.8,1154.1 L1566.4,1225.8 L1570.1,1225.8 L1573.8,1240.2 L1577.5,1240.2 L1581.2,1194.4 L1584.9,1194.4 L1588.6,1187.6 L1592.2,1187.6 L1595.9,1240.2 L1599.6,1240.2 L1603.3,1200.4 L1607.0,1200.4 L1610.7,1240.2 L1614.4,1240.2 L1618.0,1240.2 L1621.7,1240.2 L1625.4,1240.2 L1629.1,1240.2 L1632.8,1240.2 L1636.5,1240.2 L1640.2,1240.2 L1643.9,1240.2 L1647.5,1208.1 L1651.2,1208.1 L1654.9,1240.2 L1658.6,1240.2 L1662.3,1171.3 L1666.0,1171.3 L1669.7,1178.1 L1673.3,1178.1 L1677.0,1208.9 L1680.7,1208.9 L1684.4,1163.1 L1688.1,1163.1 L1691.8,1240.2 L1695.5,1240.2 L1699.1,1185.4 L1702.8,1185.4 L1706.5,1218.4 L1710.2,1218.4 L1713.9,1240.2 L1717.6,1240.2 L1721.3,1129.0 L1725.0,1129.0 L1728.6,985.0 L1732.3,985.0 L1736.0,1240.2 L1739.7,1240.2 L1743.4,1240.2 L1747.1,1240.2 L1750.8,1240.2 L1754.4,1240.2 L1758.1,1034.1 L1761.8,1034.1 L1765.5,1196.6 L1769.2,1196.6 L1772.9,1240.2 L1776.6,1240.2 L1780.2,1120.8 L1783.9,1120.8 L1787.6,1240.2 L1791.3,1240.2 L1795.0,1240.2 L1798.7,1240.2 L1802.4,1240.2 L1806.0,1240.2 L1809.7,1240.2 L1813.4,1240.2 L1817.1,1240.2 L1820.8,1240.2 L1824.5,1092.2 L1828.2,1092.2 L1831.9,1240.2 L1835.5,1240.2 L1839.2,1240.2 L1842.9,1240.2 L1846.6,1130.9 L1850.3,1130.9 L1854.0,1240.2 L1857.7,1240.2 L1861.3,1240.2 L1865.0,1240.2 L1868.7,1240.2 L1872.4,1240.2 L1876.1,1240.2 L1879.8,1240.2 L1883.5,1240.2 L1887.1,1240.2 L1890.8,1240.2 L1894.5,1240.2 L1898.2,1240.2 L1901.9,1240.2 L1905.6,1169.1 L1909.3,1169.1 L1912.9,1240.2 L1916.6,1240.2 L1920.3,1184.9 L1924.0,1184.9 L1927.7,1176.2 L1931.4,1176.2 L1935.1,1240.2 L1938.8,1240.2 L1942.4,1240.2 L1946.1,1240.2 L1949.8,1240.2 L1953.5,1240.2 L1957.2,1190.9 L1960.9,1190.9 L1964.6,1226.6 L1968.2,1226.6 L1971.9,1200.4 L1975.6,1200.4 L1979.3,1133.1 L1983.0,1133.1 L1986.7,1240.2 L1990.4,1240.2 L1994.0,1240.2 L1997.7,1240.2 L2001.4,1240.2 L2005.1,1240.2 L2008.8,1240.2 L2012.5,1240.2 L2016.2,1240.2 L2019.9,1240.2 L2023.5,1240.2 L2027.2,1240.2 L2030.9,1240.2 L2034.6,1240.2 L2038.3,1195.8 L2042.0,1195.8 L2045.7,1240.2 L2049.3,1240.2 L2053.0,1223.1 L2056.7,1223.1 L2060.4,1240.2 L2064.1,1240.2 L2067.8,1223.1 L2071.5,1223.1 L2075.1,1240.2 L2078.8,1240.2 L2082.5,1216.2 L2086.2,1216.2 L2089.9,1240.2 L2093.6,1240.2 L2097.3,1083.2 L2100.9,1083.2 L2104.6,943.1 L2108.3,943.1 L2112.0,1240.2 L2115.7,1240.2 L2119.4,1240.2 L2123.1,1240.2 L2126.8,1240.2 L2130.4,1240.2 L2134.1,1240.2 L2137.8,1240.2 L2141.5,1240.2 L2145.2,1240.2 L2148.9,1240.2 L2152.6,1240.2 L2156.2,1110.7 L2159.9,1110.7 L2163.6,1153.5 L2167.3,1153.5 L2171.0,1240.2 L2174.7,1240.2" fill="none" stroke="#e1894c" stroke-width="2" stroke-linejoin="round"/>
<path d="M1290.0,1240.2 L1293.7,1240.2 L1297.3,1240.2 L1301.0,1240.2 L1304.7,1240.2 L1308.4,1240.2 L1312.1,1240.2 L1315.8,1240.2 L1319.5,1240.2 L1323.1,1083.2 L1326.8,1083.2 L1330.5,1112.1 L1334.2,1112.1 L1337.9,1240.2 L1341.6,1240.2 L1345.3,1240.2 L1349.0,1240.2 L1352.6,1240.2 L1356.3,1240.2 L1360.0,1160.9 L1363.7,1160.9 L1367.4,1240.2 L1371.1,1240.2 L1374.8,1240.2 L1378.4,1240.2 L1382.1,1240.2 L1385.8,1240.2 L1389.5,1185.7 L1393.2,1185.7 L1396.9,1240.2 L1400.6,1240.2 L1404.2,1240.2 L1407.9,1240.2 L1411.6,1213.0 L1415.3,1213.0 L1419.0,1240.2 L1422.7,1240.2 L1426.4,1240.2 L1430.1,1240.2 L1433.7,1101.7 L1437.4,1101.7 L1441.1,1096.8 L1444.8,1096.8 L1448.5,1216.2 L1452.2,1216.2 L1455.9,1240.2 L1459.5,1240.2 L1463.2,1240.2 L1466.9,1240.2 L1470.6,1193.9 L1474.3,1193.9 L1478.0,1240.2 L1481.7,1240.2 L1485.3,1238.0 L1489.0,1238.0 L1492.7,1240.2 L1496.4,1240.2 L1500.1,1240.2 L1503.8,1240.2 L1507.5,1152.2 L1511.1,1152.2 L1514.8,1240.2 L1518.5,1240.2 L1522.2,1015.9 L1525.9,1015.9 L1529.6,1240.2 L1533.3,1240.2 L1537.0,974.4 L1540.6,974.4 L1544.3,1240.2 L1548.0,1240.2 L1551.7,1240.2 L1555.4,1240.2 L1559.1,1154.1 L1562.8,1154.1 L1566.4,1225.8 L1570.1,1225.8 L1573.8,1240.2 L1577.5,1240.2 L1581.2,1194.4 L1584.9,1194.4 L1588.6,1187.6 L1592.2,1187.6 L1595.9,1240.2 L1599.6,1240.2 L1603.3,1200.4 L1607.0,1200.4 L1610.7,1240.2 L1614.4,1240.2 L1618.0,1240.2 L1621.7,1240.2 L1625.4,1240.2 L1629.1,1240.2 L1632.8,1240.2 L1636.5,1240.2 L1640.2,1240.2 L1643.9,1240.2 L1647.5,1208.1 L1651.2,1208.1 L1654.9,1240.2 L1658.6,1240.2 L1662.3,1171.3 L1666.0,1171.3 L1669.7,1178.1 L1673.3,1178.1 L1677.0,1208.9 L1680.7,1208.9 L1684.4,1163.1 L1688.1,1163.1 L1691.8,1240.2 L1695.5,1240.2 L1699.1,1185.4 L1702.8,1185.4 L1706.5,1218.4 L1710.2,1218.4 L1713.9,1240.2 L1717.6,1240.2 L1721.3,1129.0 L1725.0,1129.0 L1728.6,985.0 L1732.3,985.0 L1736.0,1240.2 L1739.7,1240.2 L1743.4,1240.2 L1747.1,1240.2 L1750.8,1240.2 L1754.4,1240.2 L1758.1,1034.1 L1761.8,1034.1 L1765.5,1196.6 L1769.2,1196.6 L1772.9,1240.2 L1776.6,1240.2 L1780.2,1120.8 L1783.9,1120.8 L1787.6,1240.2 L1791.3,1240.2 L1795.0,1240.2 L1798.7,1240.2 L1802.4,1240.2 L1806.0,1240.2 L1809.7,1240.2 L1813.4,1240.2 L1817.1,1240.2 L1820.8,1240.2 L1824.5,1092.2 L1828.2,1092.2 L1831.9,1240.2 L1835.5,1240.2 L1839.2,1240.2 L1842.9,1240.2 L1846.6,1130.9 L1850.3,1130.9 L1854.0,1240.2 L1857.7,1240.2 L1861.3,1240.2 L1865.0,1240.2 L1868.7,1240.2 L1872.4,1240.2 L1876.1,1240.2 L1879.8,1240.2 L1883.5,1240.2 L1887.1,1240.2 L1890.8,1240.2 L1894.5,1240.2 L1898.2,1240.2 L1901.9,1240.2 L1905.6,1169.1 L1909.3,1169.1 L1912.9,1240.2 L1916.6,1240.2 L1920.3,1184.9 L1924.0,1184.9 L1927.7,1176.2 L1931.4,1176.2 L1935.1,1240.2 L1938.8,1240.2 L1942.4,1240.2 L1946.1,1240.2 L1949.8,1240.2 L1953.5,1240.2 L1957.2,1190.9 L1960.9,1190.9 L1964.6,1226.6 L1968.2,1226.6 L1971.9,1200.4 L1975.6,1200.4 L1979.3,1133.1 L1983.0,1133.1 L1986.7,1240.2 L1990.4,1240.2 L1994.0,1240.2 L1997.7,1240.2 L2001.4,1240.2 L2005.1,1240.2 L2008.8,1240.2 L2012.5,1240.2 L2016.2,1240.2 L2019.9,1240.2 L2023.5,1240.2 L2027.2,1240.2 L2030.9,1240.2 L2034.6,1240.2 L2038.3,1195.8 L2042.0,1195.8 L2045.7,1240.2 L2049.3,1240.2 L2053.0,1223.1 L2056.7,1223.1 L2060.4,1240.2 L2064.1,1240.2 L2067.8,1223.1 L2071.5,1223.1 L2075.1,1240.2 L2078.8,1240.2 L2082.5,1216.2 L2086.2,1216.2 L2089.9,1240.2 L2093.6,1240.2 L2097.3,1083.2 L2100.9,1083.2 L2104.6,943.1 L2108.3,943.1 L2112.0,1240.2 L2115.7,1240.2 L2119.4,1240.2 L2123.1,1240.2 L2126.8,1240.2 L2130.4,1240.2 L2134.1,1240.2 L2137.8,1240.2 L2141.5,1240.2 L2145.2,1240.2 L2148.9,1240.2 L2152.6,1240.2 L2156.2,1110.7 L2159.9,1110.7 L2163.6,1153.5 L2167.3,1153.5 L2171.0,1240.2 L2174.7,1240.2 L2174.7,1240 L1290.0,1240 Z" fill="#E24D42" fill-opacity="0.1" stroke="none"/>
<path d="M1290.0,1240.2 L1293.7,1240.2 L1297.3,1240.2 L1301.0,1240.2 L1304.7,1240.2 L1308.4,1240.2 L1312.1,1240.2 L1315.8,1240.2 L1319.5,1240.2 L1323.1,1083.2 L1326.8,1083.2 L1330.5,1112.1 L1334.2,1112.1 L1337.9,1240.2 L1341.6,1240.2 L1345.3,1240.2 L1349.0,1240.2 L1352.6,1240.2 L1356.3,1240.2 L1360.0,1160.9 L1363.7,1160.9 L1367.4,1240.2 L1371.1,1240.2 L1374.8,1240.2 L1378.4,1240.2 L1382.1,1240.2 L1385.8,1240.2 L1389.5,1185.7 L1393.2,1185.7 L1396.9,1240.2 L1400.6,1240.2 L1404.2,1240.2 L1407.9,1240.2 L1411.6,1213.0 L1415.3,1213.0 L1419.0,1240.2 L1422.7,1240.2 L1426.4,1240.2 L1430.1,1240.2 L1433.7,1101.7 L1437.4,1101.7 L1441.1,1096.8 L1444.8,1096.8 L1448.5,1216.2 L1452.2,1216.2 L1455.9,1240.2 L1459.5,1240.2 L1463.2,1240.2 L1466.9,1240.2 L1470.6,1193.9 L1474.3,1193.9 L1478.0,1240.2 L1481.7,1240.2 L1485.3,1238.0 L1489.0,1238.0 L1492.7,1240.2 L1496.4,1240.2 L1500.1,1240.2 L1503.8,1240.2 L1507.5,1152.2 L1511.1,1152.2 L1514.8,1240.2 L1518.5,1240.2 L1522.2,1015.9 L1525.9,1015.9 L1529.6,1240.2 L1533.3,1240.2 L1537.0,974.4 L1540.6,974.4 L1544.3,1240.2 L1548.0,1240.2 L1551.7,1240.2 L1555.4,1240.2 L1559.1,1154.1 L1562.8,1154.1 L1566.4,1225.8 L1570.1,1225.8 L1573.8,1240.2 L1577.5,1240.2 L1581.2,1194.4 L1584.9,1194.4 L1588.6,1187.6 L1592.2,1187.6 L1595.9,1240.2 L1599.6,1240.2 L1603.3,1200.4 L1607.0,1200.4 L1610.7,1240.2 L1614.4,1240.2 L1618.0,1240.2 L1621.7,1240.2 L1625.4,1240.2 L1629.1,1240.2 L1632.8,1240.2 L1636.5,1240.2 L1640.2,1240.2 L1643.9,1240.2 L1647.5,1208.1 L1651.2,1208.1 L1654.9,1240.2 L1658.6,1240.2 L1662.3,1171.3 L1666.0,1171.3 L1669.7,1178.1 L1673.3,1178.1 L1677.0,1208.9 L1680.7,1208.9 L1684.4,1163.1 L1688.1,1163.1 L1691.8,1240.2 L1695.5,1240.2 L1699.1,1185.4 L1702.8,1185.4 L1706.5,1218.4 L1710.2,1218.4 L1713.9,1240.2 L1717.6,1240.2 L1721.3,1129.0 L1725.0,1129.0 L1728.6,985.0 L1732.3,985.0 L1736.0,1240.2 L1739.7,1240.2 L1743.4,1240.2 L1747.1,1240.2 L1750.8,1240.2 L1754.4,1240.2 L1758.1,1034.1 L1761.8,1034.1 L1765.5,1196.6 L1769.2,1196.6 L1772.9,1240.2 L1776.6,1240.2 L1780.2,1120.8 L1783.9,1120.8 L1787.6,1240.2 L1791.3,1240.2 L1795.0,1240.2 L1798.7,1240.2 L1802.4,1240.2 L1806.0,1240.2 L1809.7,1240.2 L1813.4,1240.2 L1817.1,1240.2 L1820.8,1240.2 L1824.5,1092.2 L1828.2,1092.2 L1831.9,1240.2 L1835.5,1240.2 L1839.2,1240.2 L1842.9,1240.2 L1846.6,1130.9 L1850.3,1130.9 L1854.0,1240.2 L1857.7,1240.2 L1861.3,1240.2 L1865.0,1240.2 L1868.7,1240.2 L1872.4,1240.2 L1876.1,1240.2 L1879.8,1240.2 L1883.5,1240.2 L1887.1,1240.2 L1890.8,1240.2 L1894.5,1240.2 L1898.2,1240.2 L1901.9,1240.2 L1905.6,1169.1 L1909.3,1169.1 L1912.9,1240.2 L1916.6,1240.2 L1920.3,1184.9 L1924.0,1184.9 L1927.7,1176.2 L1931.4,1176.2 L1935.1,1240.2 L1938.8,1240.2 L1942.4,1240.2 L1946.1,1240.2 L1949.8,1240.2 L1953.5,1240.2 L1957.2,1190.9 L1960.9,1190.9 L1964.6,1226.6 L1968.2,1226.6 L1971.9,1200.4 L1975.6,1200.4 L1979.3,1133.1 L1983.0,1133.1 L1986.7,1240.2 L1990.4,1240.2 L1994.0,1240.2 L1997.7,1240.2 L2001.4,1240.2 L2005.1,1240.2 L2008.8,1240.2 L2012.5,1240.2 L2016.2,1240.2 L2019.9,1240.2 L2023.5,1240.2 L2027.2,1240.2 L2030.9,1240.2 L2034.6,1240.2 L2038.3,1195.8 L2042.0,1195.8 L2045.7,1240.2 L2049.3,1240.2 L2053.0,1223.1 L2056.7,1223.1 L2060.4,1240.2 L2064.1,1240.2 L2067.8,1223.1 L2071.5,1223.1 L2075.1,1240.2 L2078.8,1240.2 L2082.5,1216.2 L2086.2,1216.2 L2089.9,1240.2 L2093.6,1240.2 L2097.3,1083.2 L2100.9,1083.2 L2104.6,943.1 L2108.3,943.1 L2112.0,1240.2 L2115.7,1240.2 L2119.4,1240.2 L2123.1,1240.2 L2126.8,1240.2 L2130.4,1240.2 L2134.1,1240.2 L2137.8,1240.2 L2141.5,1240.2 L2145.2,1240.2 L2148.9,1240.2 L2152.6,1240.2 L2156.2,1110.7 L2159.9,1110.7 L2163.6,1153.5 L2167.3,1153.5 L2171.0,1240.2 L2174.7,1240.2" fill="none" stroke="#d1584a" stroke-width="2" stroke-linejoin="round"/>
<path d="M1290.0,1240.2 L1293.7,1240.2 L1297.3,1240.2 L1301.0,1240.2 L1304.7,1240.2 L1308.4,1240.2 L1312.1,1240.2 L1315.8,1240.2 L1319.5,1240.2 L1323.1,1083.2 L1326.8,1083.2 L1330.5,1112.1 L1334.2,1112.1 L1337.9,1240.2 L1341.6,1240.2 L1345.3,1240.2 L1349.0,1240.2 L1352.6,1240.2 L1356.3,1240.2 L1360.0,1160.9 L1363.7,1160.9 L1367.4,1240.2 L1371.1,1240.2 L1374.8,1240.2 L1378.4,1240.2 L1382.1,1240.2 L1385.8,1240.2 L1389.5,1185.7 L1393.2,1185.7 L1396.9,1240.2 L1400.6,1240.2 L1404.2,1240.2 L1407.9,1240.2 L1411.6,1213.0 L1415.3,1213.0 L1419.0,1240.2 L1422.7,1240.2 L1426.4,1240.2 L1430.1,1240.2 L1433.7,1101.7 L1437.4,1101.7 L1441.1,1096.8 L1444.8,1096.8 L1448.5,1216.2 L1452.2,1216.2 L1455.9,1240.2 L1459.5,1240.2 L1463.2,1240.2 L1466.9,1240.2 L1470.6,1193.9 L1474.3,1193.9 L1478.0,1240.2 L1481.7,1240.2 L1485.3,1238.0 L1489.0,1238.0 L1492.7,1240.2 L1496.4,1240.2 L1500.1,1240.2 L1503.8,1240.2 L1507.5,1152.2 L1511.1,1152.2 L1514.8,1240.2 L1518.5,1240.2 L1522.2,1015.9 L1525.9,1015.9 L1529.6,1240.2 L1533.3,1240.2 L1537.0,974.4 L1540.6,974.4 L1544.3,1240.2 L1548.0,1240.2 L1551.7,1240.2 L1555.4,1240.2 L1559.1,1154.1 L1562.8,1154.1 L1566.4,1225.8 L1570.1,1225.8 L1573.8,1240.2 L1577.5,1240.2 L1581.2,1194.4 L1584.9,1194.4 L1588.6,1187.6 L1592.2,1187.6 L1595.9,1240.2 L1599.6,1240.2 L1603.3,1200.4 L1607.0,1200.4 L1610.7,1240.2 L1614.4,1240.2 L1618.0,1240.2 L1621.7,1240.2 L1625.4,1240.2 L1629.1,1240.2 L1632.8,1240.2 L1636.5,1240.2 L1640.2,1240.2 L1643.9,1240.2 L1647.5,1208.1 L1651.2,1208.1 L1654.9,1240.2 L1658.6,1240.2 L1662.3,1171.3 L1666.0,1171.3 L1669.7,1178.1 L1673.3,1178.1 L1677.0,1208.9 L1680.7,1208.9 L1684.4,1163.1 L1688.1,1163.1 L1691.8,1240.2 L1695.5,1240.2 L1699.1,1185.4 L1702.8,1185.4 L1706.5,1218.4 L1710.2,1218.4 L1713.9,1240.2 L1717.6,1240.2 L1721.3,1129.0 L1725.0,1129.0 L1728.6,985.0 L1732.3,985.0 L1736.0,1240.2 L1739.7,1240.2 L1743.4,1240.2 L1747.1,1240.2 L1750.8,1240.2 L1754.4,1240.2 L1758.1,1034.1 L1761.8,1034.1 L1765.5,1196.6 L1769.2,1196.6 L1772.9,1240.2 L1776.6,1240.2 L1780.2,1120.8 L1783.9,1120.8 L1787.6,1240.2 L1791.3,1240.2 L1795.0,1240.2 L1798.7,1240.2 L1802.4,1240.2 L1806.0,1240.2 L1809.7,1240.2 L1813.4,1240.2 L1817.1,1240.2 L1820.8,1240.2 L1824.5,1092.2 L1828.2,1092.2 L1831.9,1240.2 L1835.5,1240.2 L1839.2,1240.2 L1842.9,1240.2 L1846.6,1130.9 L1850.3,1130.9 L1854.0,1240.2 L1857.7,1240.2 L1861.3,1240.2 L1865.0,1240.2 L1868.7,1240.2 L1872.4,1240.2 L1876.1,1240.2 L1879.8,1240.2 L1883.5,1240.2 L1887.1,1240.2 L1890.8,1240.2 L1894.5,1240.2 L1898.2,1240.2 L1901.9,1240.2 L1905.6,1169.1 L1909.3,1169.1 L1912.9,1240.2 L1916.6,1240.2 L1920.3,1184.9 L1924.0,1184.9 L1927.7,1176.2 L1931.4,1176.2 L1935.1,1240.2 L1938.8,1240.2 L1942.4,1240.2 L1946.1,1240.2 L1949.8,1240.2 L1953.5,1240.2 L1957.2,1190.9 L1960.9,1190.9 L1964.6,1226.6 L1968.2,1226.6 L1971.9,1200.4 L1975.6,1200.4 L1979.3,1133.1 L1983.0,1133.1 L1986.7,1240.2 L1990.4,1240.2 L1994.0,1240.2 L1997.7,1240.2 L2001.4,1240.2 L2005.1,1240.2 L2008.8,1240.2 L2012.5,1240.2 L2016.2,1240.2 L2019.9,1240.2 L2023.5,1240.2 L2027.2,1240.2 L2030.9,1240.2 L2034.6,1240.2 L2038.3,1195.8 L2042.0,1195.8 L2045.7,1240.2 L2049.3,1240.2 L2053.0,1223.1 L2056.7,1223.1 L2060.4,1240.2 L2064.1,1240.2 L2067.8,1223.1 L2071.5,1223.1 L2075.1,1240.2 L2078.8,1240.2 L2082.5,1216.2 L2086.2,1216.2 L2089.9,1240.2 L2093.6,1240.2 L2097.3,1083.2 L2100.9,1083.2 L2104.6,943.1 L2108.3,943.1 L2112.0,1240.2 L2115.7,1240.2 L2119.4,1240.2 L2123.1,1240.2 L2126.8,1240.2 L2130.4,1240.2 L2134.1,1240.2 L2137.8,1240.2 L2141.5,1240.2 L2145.2,1240.2 L2148.9,1240.2 L2152.6,1240.2 L2156.2,1110.7 L2159.9,1110.7 L2163.6,1153.5 L2167.3,1153.5 L2171.0,1240.2 L2174.7,1240.2 L2174.7,1240 L1290.0,1240 Z" fill="#1F78C1" fill-opacity="0.1" stroke="none"/>
<path d="M1290.0,1240.2 L1293.7,1240.2 L1297.3,1240.2 L1301.0,1240.2 L1304.7,1240.2 L1308.4,1240.2 L1312.1,1240.2 L1315.8,1240.2 L1319.5,1240.2 L1323.1,1083.2 L1326.8,1083.2 L1330.5,1112.1 L1334.2,1112.1 L1337.9,1240.2 L1341.6,1240.2 L1345.3,1240.2 L1349.0,1240.2 L1352.6,1240.2 L1356.3,1240.2 L1360.0,1160.9 L1363.7,1160.9 L1367.4,1240.2 L1371.1,1240.2 L1374.8,1240.2 L1378.4,1240.2 L1382.1,1240.2 L1385.8,1240.2 L1389.5,1185.7 L1393.2,1185.7 L1396.9,1240.2 L1400.6,1240.2 L1404.2,1240.2 L1407.9,1240.2 L1411.6,1213.0 L1415.3,1213.0 L1419.0,1240.2 L1422.7,1240.2 L1426.4,1240.2 L1430.1,1240.2 L1433.7,1101.7 L1437.4,1101.7 L1441.1,1096.8 L1444.8,1096.8 L1448.5,1216.2 L1452.2,1216.2 L1455.9,1240.2 L1459.5,1240.2 L1463.2,1240.2 L1466.9,1240.2 L1470.6,1193.9 L1474.3,1193.9 L1478.0,1240.2 L1481.7,1240.2 L1485.3,1238.0 L1489.0,1238.0 L1492.7,1240.2 L1496.4,1240.2 L1500.1,1240.2 L1503.8,1240.2 L1507.5,1152.2 L1511.1,1152.2 L1514.8,1240.2 L1518.5,1240.2 L1522.2,1015.9 L1525.9,1015.9 L1529.6,1240.2 L1533.3,1240.2 L1537.0,974.4 L1540.6,974.4 L1544.3,1240.2 L1548.0,1240.2 L1551.7,1240.2 L1555.4,1240.2 L1559.1,1154.1 L1562.8,1154.1 L1566.4,1225.8 L1570.1,1225.8 L1573.8,1240.2 L1577.5,1240.2 L1581.2,1194.4 L1584.9,1194.4 L1588.6,1187.6 L1592.2,1187.6 L1595.9,1240.2 L1599.6,1240.2 L1603.3,1200.4 L1607.0,1200.4 L1610.7,1240.2 L1614.4,1240.2 L1618.0,1240.2 L1621.7,1240.2 L1625.4,1240.2 L1629.1,1240.2 L1632.8,1240.2 L1636.5,1240.2 L1640.2,1240.2 L1643.9,1240.2 L1647.5,1208.1 L1651.2,1208.1 L1654.9,1240.2 L1658.6,1240.2 L1662.3,1171.3 L1666.0,1171.3 L1669.7,1178.1 L1673.3,1178.1 L1677.0,1208.9 L1680.7,1208.9 L1684.4,1163.1 L1688.1,1163.1 L1691.8,1240.2 L1695.5,1240.2 L1699.1,1185.4 L1702.8,1185.4 L1706.5,1218.4 L1710.2,1218.4 L1713.9,1240.2 L1717.6,1240.2 L1721.3,1129.0 L1725.0,1129.0 L1728.6,985.0 L1732.3,985.0 L1736.0,1240.2 L1739.7,1240.2 L1743.4,1240.2 L1747.1,1240.2 L1750.8,1240.2 L1754.4,1240.2 L1758.1,1034.1 L1761.8,1034.1 L1765.5,1196.6 L1769.2,1196.6 L1772.9,1240.2 L1776.6,1240.2 L1780.2,1120.8 L1783.9,1120.8 L1787.6,1240.2 L1791.3,1240.2 L1795.0,1240.2 L1798.7,1240.2 L1802.4,1240.2 L1806.0,1240.2 L1809.7,1240.2 L1813.4,1240.2 L1817.1,1240.2 L1820.8,1240.2 L1824.5,1092.2 L1828.2,1092.2 L1831.9,1240.2 L1835.5,1240.2 L1839.2,1240.2 L1842.9,1240.2 L1846.6,1130.9 L1850.3,1130.9 L1854.0,1240.2 L1857.7,1240.2 L1861.3,1240.2 L1865.0,1240.2 L1868.7,1240.2 L1872.4,1240.2 L1876.1,1240.2 L1879.8,1240.2 L1883.5,1240.2 L1887.1,1240.2 L1890.8,1240.2 L1894.5,1240.2 L1898.2,1240.2 L1901.9,1240.2 L1905.6,1169.1 L1909.3,1169.1 L1912.9,1240.2 L1916.6,1240.2 L1920.3,1184.9 L1924.0,1184.9 L1927.7,1176.2 L1931.4,1176.2 L1935.1,1240.2 L1938.8,1240.2 L1942.4,1240.2 L1946.1,1240.2 L1949.8,1240.2 L1953.5,1240.2 L1957.2,1190.9 L1960.9,1190.9 L1964.6,1226.6 L1968.2,1226.6 L1971.9,1200.4 L1975.6,1200.4 L1979.3,1133.1 L1983.0,1133.1 L1986.7,1240.2 L1990.4,1240.2 L1994.0,1240.2 L1997.7,1240.2 L2001.4,1240.2 L2005.1,1240.2 L2008.8,1240.2 L2012.5,1240.2 L2016.2,1240.2 L2019.9,1240.2 L2023.5,1240.2 L2027.2,1240.2 L2030.9,1240.2 L2034.6,1240.2 L2038.3,1195.8 L2042.0,1195.8 L2045.7,1240.2 L2049.3,1240.2 L2053.0,1223.1 L2056.7,1223.1 L2060.4,1240.2 L2064.1,1240.2 L2067.8,1223.1 L2071.5,1223.1 L2075.1,1240.2 L2078.8,1240.2 L2082.5,1216.2 L2086.2,1216.2 L2089.9,1240.2 L2093.6,1240.2 L2097.3,1083.2 L2100.9,1083.2 L2104.6,943.1 L2108.3,943.1 L2112.0,1240.2 L2115.7,1240.2 L2119.4,1240.2 L2123.1,1240.2 L2126.8,1240.2 L2130.4,1240.2 L2134.1,1240.2 L2137.8,1240.2 L2141.5,1240.2 L2145.2,1240.2 L2148.9,1240.2 L2152.6,1240.2 L2156.2,1110.7 L2159.9,1110.7 L2163.6,1153.5 L2167.3,1153.5 L2171.0,1240.2 L2174.7,1240.2" fill="none" stroke="#3c76bb" stroke-width="2" stroke-linejoin="round"/>
<path d="M1290.0,1240.2 L1293.7,1240.2 L1297.3,1240.2 L1301.0,1240.2 L1304.7,1240.2 L1308.4,1240.2 L1312.1,1240.2 L1315.8,1240.2 L1319.5,1240.2 L1323.1,1083.2 L1326.8,1083.2 L1330.5,1112.1 L1334.2,1112.1 L1337.9,1240.2 L1341.6,1240.2 L1345.3,1240.2 L1349.0,1240.2 L1352.6,1240.2 L1356.3,1240.2 L1360.0,1160.9 L1363.7,1160.9 L1367.4,1240.2 L1371.1,1240.2 L1374.8,1240.2 L1378.4,1240.2 L1382.1,1240.2 L1385.8,1240.2 L1389.5,1185.7 L1393.2,1185.7 L1396.9,1240.2 L1400.6,1240.2 L1404.2,1240.2 L1407.9,1240.2 L1411.6,1213.0 L1415.3,1213.0 L1419.0,1240.2 L1422.7,1240.2 L1426.4,1240.2 L1430.1,1240.2 L1433.7,1101.7 L1437.4,1101.7 L1441.1,1096.8 L1444.8,1096.8 L1448.5,1216.2 L1452.2,1216.2 L1455.9,1240.2 L1459.5,1240.2 L1463.2,1240.2 L1466.9,1240.2 L1470.6,1193.9 L1474.3,1193.9 L1478.0,1240.2 L1481.7,1240.2 L1485.3,1238.0 L1489.0,1238.0 L1492.7,1240.2 L1496.4,1240.2 L1500.1,1240.2 L1503.8,1240.2 L1507.5,1152.2 L1511.1,1152.2 L1514.8,1240.2 L1518.5,1240.2 L1522.2,1015.9 L1525.9,1015.9 L1529.6,1240.2 L1533.3,1240.2 L1537.0,974.4 L1540.6,974.4 L1544.3,1240.2 L1548.0,1240.2 L1551.7,1240.2 L1555.4,1240.2 L1559.1,1154.1 L1562.8,1154.1 L1566.4,1225.8 L1570.1,1225.8 L1573.8,1240.2 L1577.5,1240.2 L1581.2,1194.4 L1584.9,1194.4 L1588.6,1187.6 L1592.2,1187.6 L1595.9,1240.2 L1599.6,1240.2 L1603.3,1200.4 L1607.0,1200.4 L1610.7,1240.2 L1614.4,1240.2 L1618.0,1240.2 L1621.7,1240.2 L1625.4,1240.2 L1629.1,1240.2 L1632.8,1240.2 L1636.5,1240.2 L1640.2,1240.2 L1643.9,1240.2 L1647.5,1208.1 L1651.2,1208.1 L1654.9,1240.2 L1658.6,1240.2 L1662.3,1171.3 L1666.0,1171.3 L1669.7,1178.1 L1673.3,1178.1 L1677.0,1208.9 L1680.7,1208.9 L1684.4,1163.1 L1688.1,1163.1 L1691.8,1240.2 L1695.5,1240.2 L1699.1,1185.4 L1702.8,1185.4 L1706.5,1218.4 L1710.2,1218.4 L1713.9,1240.2 L1717.6,1240.2 L1721.3,1129.0 L1725.0,1129.0 L1728.6,985.0 L1732.3,985.0 L1736.0,1240.2 L1739.7,1240.2 L1743.4,1240.2 L1747.1,1240.2 L1750.8,1240.2 L1754.4,1240.2 L1758.1,1034.1 L1761.8,1034.1 L1765.5,1196.6 L1769.2,1196.6 L1772.9,1240.2 L1776.6,1240.2 L1780.2,1120.8 L1783.9,1120.8 L1787.6,1240.2 L1791.3,1240.2 L1795.0,1240.2 L1798.7,1240.2 L1802.4,1240.2 L1806.0,1240.2 L1809.7,1240.2 L1813.4,1240.2 L1817.1,1240.2 L1820.8,1240.2 L1824.5,1092.2 L1828.2,1092.2 L1831.9,1240.2 L1835.5,1240.2 L1839.2,1240.2 L1842.9,1240.2 L1846.6,1130.9 L1850.3,1130.9 L1854.0,1240.2 L1857.7,1240.2 L1861.3,1240.2 L1865.0,1240.2 L1868.7,1240.2 L1872.4,1240.2 L1876.1,1240.2 L1879.8,1240.2 L1883.5,1240.2 L1887.1,1240.2 L1890.8,1240.2 L1894.5,1240.2 L1898.2,1240.2 L1901.9,1240.2 L1905.6,1169.1 L1909.3,1169.1 L1912.9,1240.2 L1916.6,1240.2 L1920.3,1184.9 L1924.0,1184.9 L1927.7,1176.2 L1931.4,1176.2 L1935.1,1240.2 L1938.8,1240.2 L1942.4,1240.2 L1946.1,1240.2 L1949.8,1240.2 L1953.5,1240.2 L1957.2,1190.9 L1960.9,1190.9 L1964.6,1226.6 L1968.2,1226.6 L1971.9,1200.4 L1975.6,1200.4 L1979.3,1133.1 L1983.0,1133.1 L1986.7,1240.2 L1990.4,1240.2 L1994.0,1240.2 L1997.7,1240.2 L2001.4,1240.2 L2005.1,1240.2 L2008.8,1240.2 L2012.5,1240.2 L2016.2,1240.2 L2019.9,1240.2 L2023.5,1240.2 L2027.2,1240.2 L2030.9,1240.2 L2034.6,1240.2 L2038.3,1195.8 L2042.0,1195.8 L2045.7,1240.2 L2049.3,1240.2 L2053.0,1223.1 L2056.7,1223.1 L2060.4,1240.2 L2064.1,1240.2 L2067.8,1223.1 L2071.5,1223.1 L2075.1,1240.2 L2078.8,1240.2 L2082.5,1216.2 L2086.2,1216.2 L2089.9,1240.2 L2093.6,1240.2 L2097.3,1083.2 L2100.9,1083.2 L2104.6,943.1 L2108.3,943.1 L2112.0,1240.2 L2115.7,1240.2 L2119.4,1240.2 L2123.1,1240.2 L2126.8,1240.2 L2130.4,1240.2 L2134.1,1240.2 L2137.8,1240.2 L2141.5,1240.2 L2145.2,1240.2 L2148.9,1240.2 L2152.6,1240.2 L2156.2,1110.7 L2159.9,1110.7 L2163.6,1153.5 L2167.3,1153.5 L2171.0,1240.2 L2174.7,1240.2 L2174.7,1240 L1290.0,1240 Z" fill="#BA43A9" fill-opacity="0.1" stroke="none"/>
<path d="M1290.0,1240.2 L1293.7,1240.2 L1297.3,1240.2 L1301.0,1240.2 L1304.7,1240.2 L1308.4,1240.2 L1312.1,1240.2 L1315.8,1240.2 L1319.5,1240.2 L1323.1,1083.2 L1326.8,1083.2 L1330.5,1112.1 L1334.2,1112.1 L1337.9,1240.2 L1341.6,1240.2 L1345.3,1240.2 L1349.0,1240.2 L1352.6,1240.2 L1356.3,1240.2 L1360.0,1160.9 L1363.7,1160.9 L1367.4,1240.2 L1371.1,1240.2 L1374.8,1240.2 L1378.4,1240.2 L1382.1,1240.2 L1385.8,1240.2 L1389.5,1185.7 L1393.2,1185.7 L1396.9,1240.2 L1400.6,1240.2 L1404.2,1240.2 L1407.9,1240.2 L1411.6,1213.0 L1415.3,1213.0 L1419.0,1240.2 L1422.7,1240.2 L1426.4,1240.2 L1430.1,1240.2 L1433.7,1101.7 L1437.4,1101.7 L1441.1,1096.8 L1444.8,1096.8 L1448.5,1216.2 L1452.2,1216.2 L1455.9,1240.2 L1459.5,1240.2 L1463.2,1240.2 L1466.9,1240.2 L1470.6,1193.9 L1474.3,1193.9 L1478.0,1240.2 L1481.7,1240.2 L1485.3,1238.0 L1489.0,1238.0 L1492.7,1240.2 L1496.4,1240.2 L1500.1,1240.2 L1503.8,1240.2 L1507.5,1152.2 L1511.1,1152.2 L1514.8,1240.2 L1518.5,1240.2 L1522.2,1015.9 L1525.9,1015.9 L1529.6,1240.2 L1533.3,1240.2 L1537.0,974.4 L1540.6,974.4 L1544.3,1240.2 L1548.0,1240.2 L1551.7,1240.2 L1555.4,1240.2 L1559.1,1154.1 L1562.8,1154.1 L1566.4,1225.8 L1570.1,1225.8 L1573.8,1240.2 L1577.5,1240.2 L1581.2,1194.4 L1584.9,1194.4 L1588.6,1187.6 L1592.2,1187.6 L1595.9,1240.2 L1599.6,1240.2 L1603.3,1200.4 L1607.0,1200.4 L1610.7,1240.2 L1614.4,1240.2 L1618.0,1240.2 L1621.7,1240.2 L1625.4,1240.2 L1629.1,1240.2 L1632.8,1240.2 L1636.5,1240.2 L1640.2,1240.2 L1643.9,1240.2 L1647.5,1208.1 L1651.2,1208.1 L1654.9,1240.2 L1658.6,1240.2 L1662.3,1171.3 L1666.0,1171.3 L1669.7,1178.1 L1673.3,1178.1 L1677.0,1208.9 L1680.7,1208.9 L1684.4,1163.1 L1688.1,1163.1 L1691.8,1240.2 L1695.5,1240.2 L1699.1,1185.4 L1702.8,1185.4 L1706.5,1218.4 L1710.2,1218.4 L1713.9,1240.2 L1717.6,1240.2 L1721.3,1129.0 L1725.0,1129.0 L1728.6,985.0 L1732.3,985.0 L1736.0,1240.2 L1739.7,1240.2 L1743.4,1240.2 L1747.1,1240.2 L1750.8,1240.2 L1754.4,1240.2 L1758.1,1034.1 L1761.8,1034.1 L1765.5,1196.6 L1769.2,1196.6 L1772.9,1240.2 L1776.6,1240.2 L1780.2,1120.8 L1783.9,1120.8 L1787.6,1240.2 L1791.3,1240.2 L1795.0,1240.2 L1798.7,1240.2 L1802.4,1240.2 L1806.0,1240.2 L1809.7,1240.2 L1813.4,1240.2 L1817.1,1240.2 L1820.8,1240.2 L1824.5,1092.2 L1828.2,1092.2 L1831.9,1240.2 L1835.5,1240.2 L1839.2,1240.2 L1842.9,1240.2 L1846.6,1130.9 L1850.3,1130.9 L1854.0,1240.2 L1857.7,1240.2 L1861.3,1240.2 L1865.0,1240.2 L1868.7,1240.2 L1872.4,1240.2 L1876.1,1240.2 L1879.8,1240.2 L1883.5,1240.2 L1887.1,1240.2 L1890.8,1240.2 L1894.5,1240.2 L1898.2,1240.2 L1901.9,1240.2 L1905.6,1169.1 L1909.3,1169.1 L1912.9,1240.2 L1916.6,1240.2 L1920.3,1184.9 L1924.0,1184.9 L1927.7,1176.2 L1931.4,1176.2 L1935.1,1240.2 L1938.8,1240.2 L1942.4,1240.2 L1946.1,1240.2 L1949.8,1240.2 L1953.5,1240.2 L1957.2,1190.9 L1960.9,1190.9 L1964.6,1226.6 L1968.2,1226.6 L1971.9,1200.4 L1975.6,1200.4 L1979.3,1133.1 L1983.0,1133.1 L1986.7,1240.2 L1990.4,1240.2 L1994.0,1240.2 L1997.7,1240.2 L2001.4,1240.2 L2005.1,1240.2 L2008.8,1240.2 L2012.5,1240.2 L2016.2,1240.2 L2019.9,1240.2 L2023.5,1240.2 L2027.2,1240.2 L2030.9,1240.2 L2034.6,1240.2 L2038.3,1195.8 L2042.0,1195.8 L2045.7,1240.2 L2049.3,1240.2 L2053.0,1223.1 L2056.7,1223.1 L2060.4,1240.2 L2064.1,1240.2 L2067.8,1223.1 L2071.5,1223.1 L2075.1,1240.2 L2078.8,1240.2 L2082.5,1216.2 L2086.2,1216.2 L2089.9,1240.2 L2093.6,1240.2 L2097.3,1083.2 L2100.9,1083.2 L2104.6,943.1 L2108.3,943.1 L2112.0,1240.2 L2115.7,1240.2 L2119.4,1240.2 L2123.1,1240.2 L2126.8,1240.2 L2130.4,1240.2 L2134.1,1240.2 L2137.8,1240.2 L2141.5,1240.2 L2145.2,1240.2 L2148.9,1240.2 L2152.6,1240.2 L2156.2,1110.7 L2159.9,1110.7 L2163.6,1153.5 L2167.3,1153.5 L2171.0,1240.2 L2174.7,1240.2" fill="none" stroke="#ac4ba4" stroke-width="2" stroke-linejoin="round"/>
<path d="M1290.0,1240.2 L1293.7,1240.2 L1297.3,1240.2 L1301.0,1240.2 L1304.7,1240.2 L1308.4,1240.2 L1312.1,1240.2 L1315.8,1240.2 L1319.5,1240.2 L1323.1,1083.2 L1326.8,1083.2 L1330.5,1112.1 L1334.2,1112.1 L1337.9,1240.2 L1341.6,1240.2 L1345.3,1240.2 L1349.0,1240.2 L1352.6,1240.2 L1356.3,1240.2 L1360.0,1160.9 L1363.7,1160.9 L1367.4,1240.2 L1371.1,1240.2 L1374.8,1240.2 L1378.4,1240.2 L1382.1,1240.2 L1385.8,1240.2 L1389.5,1185.7 L1393.2,1185.7 L1396.9,1240.2 L1400.6,1240.2 L1404.2,1240.2 L1407.9,1240.2 L1411.6,1213.0 L1415.3,1213.0 L1419.0,1240.2 L1422.7,1240.2 L1426.4,1240.2 L1430.1,1240.2 L1433.7,1101.7 L1437.4,1101.7 L1441.1,1096.8 L1444.8,1096.8 L1448.5,1216.2 L1452.2,1216.2 L1455.9,1240.2 L1459.5,1240.2 L1463.2,1240.2 L1466.9,1240.2 L1470.6,1193.9 L1474.3,1193.9 L1478.0,1240.2 L1481.7,1240.2 L1485.3,1238.0 L1489.0,1238.0 L1492.7,1240.2 L1496.4,1240.2 L1500.1,1240.2 L1503.8,1240.2 L1507.5,1152.2 L1511.1,1152.2 L1514.8,1240.2 L1518.5,1240.2 L1522.2,1015.9 L1525.9,1015.9 L1529.6,1240.2 L1533.3,1240.2 L1537.0,974.4 L1540.6,974.4 L1544.3,1240.2 L1548.0,1240.2 L1551.7,1240.2 L1555.4,1240.2 L1559.1,1154.1 L1562.8,1154.1 L1566.4,1225.8 L1570.1,1225.8 L1573.8,1240.2 L1577.5,1240.2 L1581.2,1194.4 L1584.9,1194.4 L1588.6,1187.6 L1592.2,1187.6 L1595.9,1240.2 L1599.6,1240.2 L1603.3,1200.4 L1607.0,1200.4 L1610.7,1240.2 L1614.4,1240.2 L1618.0,1240.2 L1621.7,1240.2 L1625.4,1240.2 L1629.1,1240.2 L1632.8,1240.2 L1636.5,1240.2 L1640.2,1240.2 L1643.9,1240.2 L1647.5,1208.1 L1651.2,1208.1 L1654.9,1240.2 L1658.6,1240.2 L1662.3,1171.3 L1666.0,1171.3 L1669.7,1178.1 L1673.3,1178.1 L1677.0,1208.9 L1680.7,1208.9 L1684.4,1163.1 L1688.1,1163.1 L1691.8,1240.2 L1695.5,1240.2 L1699.1,1185.4 L1702.8,1185.4 L1706.5,1218.4 L1710.2,1218.4 L1713.9,1240.2 L1717.6,1240.2 L1721.3,1129.0 L1725.0,1129.0 L1728.6,985.0 L1732.3,985.0 L1736.0,1240.2 L1739.7,1240.2 L1743.4,1240.2 L1747.1,1240.2 L1750.8,1240.2 L1754.4,1240.2 L1758.1,1034.1 L1761.8,1034.1 L1765.5,1196.6 L1769.2,1196.6 L1772.9,1240.2 L1776.6,1240.2 L1780.2,1120.8 L1783.9,1120.8 L1787.6,1240.2 L1791.3,1240.2 L1795.0,1240.2 L1798.7,1240.2 L1802.4,1240.2 L1806.0,1240.2 L1809.7,1240.2 L1813.4,1240.2 L1817.1,1240.2 L1820.8,1240.2 L1824.5,1092.2 L1828.2,1092.2 L1831.9,1240.2 L1835.5,1240.2 L1839.2,1240.2 L1842.9,1240.2 L1846.6,1130.9 L1850.3,1130.9 L1854.0,1240.2 L1857.7,1240.2 L1861.3,1240.2 L1865.0,1240.2 L1868.7,1240.2 L1872.4,1240.2 L1876.1,1240.2 L1879.8,1240.2 L1883.5,1240.2 L1887.1,1240.2 L1890.8,1240.2 L1894.5,1240.2 L1898.2,1240.2 L1901.9,1240.2 L1905.6,1169.1 L1909.3,1169.1 L1912.9,1240.2 L1916.6,1240.2 L1920.3,1184.9 L1924.0,1184.9 L1927.7,1176.2 L1931.4,1176.2 L1935.1,1240.2 L1938.8,1240.2 L1942.4,1240.2 L1946.1,1240.2 L1949.8,1240.2 L1953.5,1240.2 L1957.2,1190.9 L1960.9,1190.9 L1964.6,1226.6 L1968.2,1226.6 L1971.9,1200.4 L1975.6,1200.4 L1979.3,1133.1 L1983.0,1133.1 L1986.7,1240.2 L1990.4,1240.2 L1994.0,1240.2 L1997.7,1240.2 L2001.4,1240.2 L2005.1,1240.2 L2008.8,1240.2 L2012.5,1240.2 L2016.2,1240.2 L2019.9,1240.2 L2023.5,1240.2 L2027.2,1240.2 L2030.9,1240.2 L2034.6,1240.2 L2038.3,1195.8 L2042.0,1195.8 L2045.7,1240.2 L2049.3,1240.2 L2053.0,1223.1 L2056.7,1223.1 L2060.4,1240.2 L2064.1,1240.2 L2067.8,1223.1 L2071.5,1223.1 L2075.1,1240.2 L2078.8,1240.2 L2082.5,1216.2 L2086.2,1216.2 L2089.9,1240.2 L2093.6,1240.2 L2097.3,1083.2 L2100.9,1083.2 L2104.6,943.1 L2108.3,943.1 L2112.0,1240.2 L2115.7,1240.2 L2119.4,1240.2 L2123.1,1240.2 L2126.8,1240.2 L2130.4,1240.2 L2134.1,1240.2 L2137.8,1240.2 L2141.5,1240.2 L2145.2,1240.2 L2148.9,1240.2 L2152.6,1240.2 L2156.2,1110.7 L2159.9,1110.7 L2163.6,1153.5 L2167.3,1153.5 L2171.0,1240.2 L2174.7,1240.2 L2174.7,1240 L1290.0,1240 Z" fill="#705DA0" fill-opacity="0.1" stroke="none"/>
<path d="M1290.0,1240.2 L1293.7,1240.2 L1297.3,1240.2 L1301.0,1240.2 L1304.7,1240.2 L1308.4,1240.2 L1312.1,1240.2 L1315.8,1240.2 L1319.5,1240.2 L1323.1,1083.2 L1326.8,1083.2 L1330.5,1112.1 L1334.2,1112.1 L1337.9,1240.2 L1341.6,1240.2 L1345.3,1240.2 L1349.0,1240.2 L1352.6,1240.2 L1356.3,1240.2 L1360.0,1160.9 L1363.7,1160.9 L1367.4,1240.2 L1371.1,1240.2 L1374.8,1240.2 L1378.4,1240.2 L1382.1,1240.2 L1385.8,1240.2 L1389.5,1185.7 L1393.2,1185.7 L1396.9,1240.2 L1400.6,1240.2 L1404.2,1240.2 L1407.9,1240.2 L1411.6,1213.0 L1415.3,1213.0 L1419.0,1240.2 L1422.7,1240.2 L1426.4,1240.2 L1430.1,1240.2 L1433.7,1101.7 L1437.4,1101.7 L1441.1,1096.8 L1444.8,1096.8 L1448.5,1216.2 L1452.2,1216.2 L1455.9,1240.2 L1459.5,1240.2 L1463.2,1240.2 L1466.9,1240.2 L1470.6,1193.9 L1474.3,1193.9 L1478.0,1240.2 L1481.7,1240.2 L1485.3,1238.0 L1489.0,1238.0 L1492.7,1240.2 L1496.4,1240.2 L1500.1,1240.2 L1503.8,1240.2 L1507.5,1152.2 L1511.1,1152.2 L1514.8,1240.2 L1518.5,1240.2 L1522.2,1015.9 L1525.9,1015.9 L1529.6,1240.2 L1533.3,1240.2 L1537.0,974.4 L1540.6,974.4 L1544.3,1240.2 L1548.0,1240.2 L1551.7,1240.2 L1555.4,1240.2 L1559.1,1154.1 L1562.8,1154.1 L1566.4,1225.8 L1570.1,1225.8 L1573.8,1240.2 L1577.5,1240.2 L1581.2,1194.4 L1584.9,1194.4 L1588.6,1187.6 L1592.2,1187.6 L1595.9,1240.2 L1599.6,1240.2 L1603.3,1200.4 L1607.0,1200.4 L1610.7,1240.2 L1614.4,1240.2 L1618.0,1240.2 L1621.7,1240.2 L1625.4,1240.2 L1629.1,1240.2 L1632.8,1240.2 L1636.5,1240.2 L1640.2,1240.2 L1643.9,1240.2 L1647.5,1208.1 L1651.2,1208.1 L1654.9,1240.2 L1658.6,1240.2 L1662.3,1171.3 L1666.0,1171.3 L1669.7,1178.1 L1673.3,1178.1 L1677.0,1208.9 L1680.7,1208.9 L1684.4,1163.1 L1688.1,1163.1 L1691.8,1240.2 L1695.5,1240.2 L1699.1,1185.4 L1702.8,1185.4 L1706.5,1218.4 L1710.2,1218.4 L1713.9,1240.2 L1717.6,1240.2 L1721.3,1129.0 L1725.0,1129.0 L1728.6,985.0 L1732.3,985.0 L1736.0,1240.2 L1739.7,1240.2 L1743.4,1240.2 L1747.1,1240.2 L1750.8,1240.2 L1754.4,1240.2 L1758.1,1034.1 L1761.8,1034.1 L1765.5,1196.6 L1769.2,1196.6 L1772.9,1240.2 L1776.6,1240.2 L1780.2,1120.8 L1783.9,1120.8 L1787.6,1240.2 L1791.3,1240.2 L1795.0,1240.2 L1798.7,1240.2 L1802.4,1240.2 L1806.0,1240.2 L1809.7,1240.2 L1813.4,1240.2 L1817.1,1240.2 L1820.8,1240.2 L1824.5,1092.2 L1828.2,1092.2 L1831.9,1240.2 L1835.5,1240.2 L1839.2,1240.2 L1842.9,1240.2 L1846.6,1130.9 L1850.3,1130.9 L1854.0,1240.2 L1857.7,1240.2 L1861.3,1240.2 L1865.0,1240.2 L1868.7,1240.2 L1872.4,1240.2 L1876.1,1240.2 L1879.8,1240.2 L1883.5,1240.2 L1887.1,1240.2 L1890.8,1240.2 L1894.5,1240.2 L1898.2,1240.2 L1901.9,1240.2 L1905.6,1169.1 L1909.3,1169.1 L1912.9,1240.2 L1916.6,1240.2 L1920.3,1184.9 L1924.0,1184.9 L1927.7,1176.2 L1931.4,1176.2 L1935.1,1240.2 L1938.8,1240.2 L1942.4,1240.2 L1946.1,1240.2 L1949.8,1240.2 L1953.5,1240.2 L1957.2,1190.9 L1960.9,1190.9 L1964.6,1226.6 L1968.2,1226.6 L1971.9,1200.4 L1975.6,1200.4 L1979.3,1133.1 L1983.0,1133.1 L1986.7,1240.2 L1990.4,1240.2 L1994.0,1240.2 L1997.7,1240.2 L2001.4,1240.2 L2005.1,1240.2 L2008.8,1240.2 L2012.5,1240.2 L2016.2,1240.2 L2019.9,1240.2 L2023.5,1240.2 L2027.2,1240.2 L2030.9,1240.2 L2034.6,1240.2 L2038.3,1195.8 L2042.0,1195.8 L2045.7,1240.2 L2049.3,1240.2 L2053.0,1223.1 L2056.7,1223.1 L2060.4,1240.2 L2064.1,1240.2 L2067.8,1223.1 L2071.5,1223.1 L2075.1,1240.2 L2078.8,1240.2 L2082.5,1216.2 L2086.2,1216.2 L2089.9,1240.2 L2093.6,1240.2 L2097.3,1083.2 L2100.9,1083.2 L2104.6,943.1 L2108.3,943.1 L2112.0,1240.2 L2115.7,1240.2 L2119.4,1240.2 L2123.1,1240.2 L2126.8,1240.2 L2130.4,1240.2 L2134.1,1240.2 L2137.8,1240.2 L2141.5,1240.2 L2145.2,1240.2 L2148.9,1240.2 L2152.6,1240.2 L2156.2,1110.7 L2159.9,1110.7 L2163.6,1153.5 L2167.3,1153.5 L2171.0,1240.2 L2174.7,1240.2" fill="none" stroke="#6d5e9c" stroke-width="2" stroke-linejoin="round"/>
<path d="M1290.0,1240.2 L1293.7,1240.2 L1297.3,1240.2 L1301.0,1240.2 L1304.7,1240.2 L1308.4,1240.2 L1312.1,1240.2 L1315.8,1240.2 L1319.5,1240.2 L1323.1,1083.2 L1326.8,1083.2 L1330.5,1112.1 L1334.2,1112.1 L1337.9,1240.2 L1341.6,1240.2 L1345.3,1240.2 L1349.0,1240.2 L1352.6,1240.2 L1356.3,1240.2 L1360.0,1160.9 L1363.7,1160.9 L1367.4,1240.2 L1371.1,1240.2 L1374.8,1240.2 L1378.4,1240.2 L1382.1,1240.2 L1385.8,1240.2 L1389.5,1185.7 L1393.2,1185.7 L1396.9,1240.2 L1400.6,1240.2 L1404.2,1240.2 L1407.9,1240.2 L1411.6,1213.0 L1415.3,1213.0 L1419.0,1240.2 L1422.7,1240.2 L1426.4,1240.2 L1430.1,1240.2 L1433.7,1101.7 L1437.4,1101.7 L1441.1,1096.8 L1444.8,1096.8 L1448.5,1216.2 L1452.2,1216.2 L1455.9,1240.2 L1459.5,1240.2 L1463.2,1240.2 L1466.9,1240.2 L1470.6,1193.9 L1474.3,1193.9 L1478.0,1240.2 L1481.7,1240.2 L1485.3,1238.0 L1489.0,1238.0 L1492.7,1240.2 L1496.4,1240.2 L1500.1,1240.2 L1503.8,1240.2 L1507.5,1152.2 L1511.1,1152.2 L1514.8,1240.2 L1518.5,1240.2 L1522.2,1015.9 L1525.9,1015.9 L1529.6,1240.2 L1533.3,1240.2 L1537.0,974.4 L1540.6,974.4 L1544.3,1240.2 L1548.0,1240.2 L1551.7,1240.2 L1555.4,1240.2 L1559.1,1154.1 L1562.8,1154.1 L1566.4,1225.8 L1570.1,1225.8 L1573.8,1240.2 L1577.5,1240.2 L1581.2,1194.4 L1584.9,1194.4 L1588.6,1187.6 L1592.2,1187.6 L1595.9,1240.2 L1599.6,1240.2 L1603.3,1200.4 L1607.0,1200.4 L1610.7,1240.2 L1614.4,1240.2 L1618.0,1240.2 L1621.7,1240.2 L1625.4,1240.2 L1629.1,1240.2 L1632.8,1240.2 L1636.5,1240.2 L1640.2,1240.2 L1643.9,1240.2 L1647.5,1208.1 L1651.2,1208.1 L1654.9,1240.2 L1658.6,1240.2 L1662.3,1171.3 L1666.0,1171.3 L1669.7,1178.1 L1673.3,1178.1 L1677.0,1208.9 L1680.7,1208.9 L1684.4,1163.1 L1688.1,1163.1 L1691.8,1240.2 L1695.5,1240.2 L1699.1,1185.4 L1702.8,1185.4 L1706.5,1218.4 L1710.2,1218.4 L1713.9,1240.2 L1717.6,1240.2 L1721.3,1129.0 L1725.0,1129.0 L1728.6,985.0 L1732.3,985.0 L1736.0,1240.2 L1739.7,1240.2 L1743.4,1240.2 L1747.1,1240.2 L1750.8,1240.2 L1754.4,1240.2 L1758.1,1034.1 L1761.8,1034.1 L1765.5,1196.6 L1769.2,1196.6 L1772.9,1240.2 L1776.6,1240.2 L1780.2,1120.8 L1783.9,1120.8 L1787.6,1240.2 L1791.3,1240.2 L1795.0,1240.2 L1798.7,1240.2 L1802.4,1240.2 L1806.0,1240.2 L1809.7,1240.2 L1813.4,1240.2 L1817.1,1240.2 L1820.8,1240.2 L1824.5,1092.2 L1828.2,1092.2 L1831.9,1240.2 L1835.5,1240.2 L1839.2,1240.2 L1842.9,1240.2 L1846.6,1130.9 L1850.3,1130.9 L1854.0,1240.2 L1857.7,1240.2 L1861.3,1240.2 L1865.0,1240.2 L1868.7,1240.2 L1872.4,1240.2 L1876.1,1240.2 L1879.8,1240.2 L1883.5,1240.2 L1887.1,1240.2 L1890.8,1240.2 L1894.5,1240.2 L1898.2,1240.2 L1901.9,1240.2 L1905.6,1169.1 L1909.3,1169.1 L1912.9,1240.2 L1916.6,1240.2 L1920.3,1184.9 L1924.0,1184.9 L1927.7,1176.2 L1931.4,1176.2 L1935.1,1240.2 L1938.8,1240.2 L1942.4,1240.2 L1946.1,1240.2 L1949.8,1240.2 L1953.5,1240.2 L1957.2,1190.9 L1960.9,1190.9 L1964.6,1226.6 L1968.2,1226.6 L1971.9,1200.4 L1975.6,1200.4 L1979.3,1133.1 L1983.0,1133.1 L1986.7,1240.2 L1990.4,1240.2 L1994.0,1240.2 L1997.7,1240.2 L2001.4,1240.2 L2005.1,1240.2 L2008.8,1240.2 L2012.5,1240.2 L2016.2,1240.2 L2019.9,1240.2 L2023.5,1240.2 L2027.2,1240.2 L2030.9,1240.2 L2034.6,1240.2 L2038.3,1195.8 L2042.0,1195.8 L2045.7,1240.2 L2049.3,1240.2 L2053.0,1223.1 L2056.7,1223.1 L2060.4,1240.2 L2064.1,1240.2 L2067.8,1223.1 L2071.5,1223.1 L2075.1,1240.2 L2078.8,1240.2 L2082.5,1216.2 L2086.2,1216.2 L2089.9,1240.2 L2093.6,1240.2 L2097.3,1083.2 L2100.9,1083.2 L2104.6,943.1 L2108.3,943.1 L2112.0,1240.2 L2115.7,1240.2 L2119.4,1240.2 L2123.1,1240.2 L2126.8,1240.2 L2130.4,1240.2 L2134.1,1240.2 L2137.8,1240.2 L2141.5,1240.2 L2145.2,1240.2 L2148.9,1240.2 L2152.6,1240.2 L2156.2,1110.7 L2159.9,1110.7 L2163.6,1153.5 L2167.3,1153.5 L2171.0,1240.2 L2174.7,1240.2 L2174.7,1240 L1290.0,1240 Z" fill="#508642" fill-opacity="0.1" stroke="none"/>
<path d="M1290.0,1240.2 L1293.7,1240.2 L1297.3,1240.2 L1301.0,1240.2 L1304.7,1240.2 L1308.4,1240.2 L1312.1,1240.2 L1315.8,1240.2 L1319.5,1240.2 L1323.1,1083.2 L1326.8,1083.2 L1330.5,1112.1 L1334.2,1112.1 L1337.9,1240.2 L1341.6,1240.2 L1345.3,1240.2 L1349.0,1240.2 L1352.6,1240.2 L1356.3,1240.2 L1360.0,1160.9 L1363.7,1160.9 L1367.4,1240.2 L1371.1,1240.2 L1374.8,1240.2 L1378.4,1240.2 L1382.1,1240.2 L1385.8,1240.2 L1389.5,1185.7 L1393.2,1185.7 L1396.9,1240.2 L1400.6,1240.2 L1404.2,1240.2 L1407.9,1240.2 L1411.6,1213.0 L1415.3,1213.0 L1419.0,1240.2 L1422.7,1240.2 L1426.4,1240.2 L1430.1,1240.2 L1433.7,1101.7 L1437.4,1101.7 L1441.1,1096.8 L1444.8,1096.8 L1448.5,1216.2 L1452.2,1216.2 L1455.9,1240.2 L1459.5,1240.2 L1463.2,1240.2 L1466.9,1240.2 L1470.6,1193.9 L1474.3,1193.9 L1478.0,1240.2 L1481.7,1240.2 L1485.3,1238.0 L1489.0,1238.0 L1492.7,1240.2 L1496.4,1240.2 L1500.1,1240.2 L1503.8,1240.2 L1507.5,1152.2 L1511.1,1152.2 L1514.8,1240.2 L1518.5,1240.2 L1522.2,1015.9 L1525.9,1015.9 L1529.6,1240.2 L1533.3,1240.2 L1537.0,974.4 L1540.6,974.4 L1544.3,1240.2 L1548.0,1240.2 L1551.7,1240.2 L1555.4,1240.2 L1559.1,1154.1 L1562.8,1154.1 L1566.4,1225.8 L1570.1,1225.8 L1573.8,1240.2 L1577.5,1240.2 L1581.2,1194.4 L1584.9,1194.4 L1588.6,1187.6 L1592.2,1187.6 L1595.9,1240.2 L1599.6,1240.2 L1603.3,1200.4 L1607.0,1200.4 L1610.7,1240.2 L1614.4,1240.2 L1618.0,1240.2 L1621.7,1240.2 L1625.4,1240.2 L1629.1,1240.2 L1632.8,1240.2 L1636.5,1240.2 L1640.2,1240.2 L1643.9,1240.2 L1647.5,1208.1 L1651.2,1208.1 L1654.9,1240.2 L1658.6,1240.2 L1662.3,1171.3 L1666.0,1171.3 L1669.7,1178.1 L1673.3,1178.1 L1677.0,1208.9 L1680.7,1208.9 L1684.4,1163.1 L1688.1,1163.1 L1691.8,1240.2 L1695.5,1240.2 L1699.1,1185.4 L1702.8,1185.4 L1706.5,1218.4 L1710.2,1218.4 L1713.9,1240.2 L1717.6,1240.2 L1721.3,1129.0 L1725.0,1129.0 L1728.6,985.0 L1732.3,985.0 L1736.0,1240.2 L1739.7,1240.2 L1743.4,1240.2 L1747.1,1240.2 L1750.8,1240.2 L1754.4,1240.2 L1758.1,1034.1 L1761.8,1034.1 L1765.5,1196.6 L1769.2,1196.6 L1772.9,1240.2 L1776.6,1240.2 L1780.2,1120.8 L1783.9,1120.8 L1787.6,1240.2 L1791.3,1240.2 L1795.0,1240.2 L1798.7,1240.2 L1802.4,1240.2 L1806.0,1240.2 L1809.7,1240.2 L1813.4,1240.2 L1817.1,1240.2 L1820.8,1240.2 L1824.5,1092.2 L1828.2,1092.2 L1831.9,1240.2 L1835.5,1240.2 L1839.2,1240.2 L1842.9,1240.2 L1846.6,1130.9 L1850.3,1130.9 L1854.0,1240.2 L1857.7,1240.2 L1861.3,1240.2 L1865.0,1240.2 L1868.7,1240.2 L1872.4,1240.2 L1876.1,1240.2 L1879.8,1240.2 L1883.5,1240.2 L1887.1,1240.2 L1890.8,1240.2 L1894.5,1240.2 L1898.2,1240.2 L1901.9,1240.2 L1905.6,1169.1 L1909.3,1169.1 L1912.9,1240.2 L1916.6,1240.2 L1920.3,1184.9 L1924.0,1184.9 L1927.7,1176.2 L1931.4,1176.2 L1935.1,1240.2 L1938.8,1240.2 L1942.4,1240.2 L1946.1,1240.2 L1949.8,1240.2 L1953.5,1240.2 L1957.2,1190.9 L1960.9,1190.9 L1964.6,1226.6 L1968.2,1226.6 L1971.9,1200.4 L1975.6,1200.4 L1979.3,1133.1 L1983.0,1133.1 L1986.7,1240.2 L1990.4,1240.2 L1994.0,1240.2 L1997.7,1240.2 L2001.4,1240.2 L2005.1,1240.2 L2008.8,1240.2 L2012.5,1240.2 L2016.2,1240.2 L2019.9,1240.2 L2023.5,1240.2 L2027.2,1240.2 L2030.9,1240.2 L2034.6,1240.2 L2038.3,1195.8 L2042.0,1195.8 L2045.7,1240.2 L2049.3,1240.2 L2053.0,1223.1 L2056.7,1223.1 L2060.4,1240.2 L2064.1,1240.2 L2067.8,1223.1 L2071.5,1223.1 L2075.1,1240.2 L2078.8,1240.2 L2082.5,1216.2 L2086.2,1216.2 L2089.9,1240.2 L2093.6,1240.2 L2097.3,1083.2 L2100.9,1083.2 L2104.6,943.1 L2108.3,943.1 L2112.0,1240.2 L2115.7,1240.2 L2119.4,1240.2 L2123.1,1240.2 L2126.8,1240.2 L2130.4,1240.2 L2134.1,1240.2 L2137.8,1240.2 L2141.5,1240.2 L2145.2,1240.2 L2148.9,1240.2 L2152.6,1240.2 L2156.2,1110.7 L2159.9,1110.7 L2163.6,1153.5 L2167.3,1153.5 L2171.0,1240.2 L2174.7,1240.2" fill="none" stroke="#5d854a" stroke-width="2" stroke-linejoin="round"/>
<path d="M1290.0,1240.2 L1293.7,1240.2 L1297.3,1240.2 L1301.0,1240.2 L1304.7,1240.2 L1308.4,1240.2 L1312.1,1240.2 L1315.8,1240.2 L1319.5,1240.2 L1323.1,1083.2 L1326.8,1083.2 L1330.5,1112.1 L1334.2,1112.1 L1337.9,1240.2 L1341.6,1240.2 L1345.3,1240.2 L1349.0,1240.2 L1352.6,1240.2 L1356.3,1240.2 L1360.0,1160.9 L1363.7,1160.9 L1367.4,1240.2 L1371.1,1240.2 L1374.8,1240.2 L1378.4,1240.2 L1382.1,1240.2 L1385.8,1240.2 L1389.5,1185.7 L1393.2,1185.7 L1396.9,1240.2 L1400.6,1240.2 L1404.2,1240.2 L1407.9,1240.2 L1411.6,1213.0 L1415.3,1213.0 L1419.0,1240.2 L1422.7,1240.2 L1426.4,1240.2 L1430.1,1240.2 L1433.7,1101.7 L1437.4,1101.7 L1441.1,1096.8 L1444.8,1096.8 L1448.5,1216.2 L1452.2,1216.2 L1455.9,1240.2 L1459.5,1240.2 L1463.2,1240.2 L1466.9,1240.2 L1470.6,1193.9 L1474.3,1193.9 L1478.0,1240.2 L1481.7,1240.2 L1485.3,1238.0 L1489.0,1238.0 L1492.7,1240.2 L1496.4,1240.2 L1500.1,1240.2 L1503.8,1240.2 L1507.5,1152.2 L1511.1,1152.2 L1514.8,1240.2 L1518.5,1240.2 L1522.2,1015.9 L1525.9,1015.9 L1529.6,1240.2 L1533.3,1240.2 L1537.0,974.4 L1540.6,974.4 L1544.3,1240.2 L1548.0,1240.2 L1551.7,1240.2 L1555.4,1240.2 L1559.1,1154.1 L1562.8,1154.1 L1566.4,1225.8 L1570.1,1225.8 L1573.8,1240.2 L1577.5,1240.2 L1581.2,1194.4 L1584.9,1194.4 L1588.6,1187.6 L1592.2,1187.6 L1595.9,1240.2 L1599.6,1240.2 L1603.3,1200.4 L1607.0,1200.4 L1610.7,1240.2 L1614.4,1240.2 L1618.0,1240.2 L1621.7,1240.2 L1625.4,1240.2 L1629.1,1240.2 L1632.8,1240.2 L1636.5,1240.2 L1640.2,1240.2 L1643.9,1240.2 L1647.5,1208.1 L1651.2,1208.1 L1654.9,1240.2 L1658.6,1240.2 L1662.3,1171.3 L1666.0,1171.3 L1669.7,1178.1 L1673.3,1178.1 L1677.0,1208.9 L1680.7,1208.9 L1684.4,1163.1 L1688.1,1163.1 L1691.8,1240.2 L1695.5,1240.2 L1699.1,1185.4 L1702.8,1185.4 L1706.5,1218.4 L1710.2,1218.4 L1713.9,1240.2 L1717.6,1240.2 L1721.3,1129.0 L1725.0,1129.0 L1728.6,985.0 L1732.3,985.0 L1736.0,1240.2 L1739.7,1240.2 L1743.4,1240.2 L1747.1,1240.2 L1750.8,1240.2 L1754.4,1240.2 L1758.1,1034.1 L1761.8,1034.1 L1765.5,1196.6 L1769.2,1196.6 L1772.9,1240.2 L1776.6,1240.2 L1780.2,1120.8 L1783.9,1120.8 L1787.6,1240.2 L1791.3,1240.2 L1795.0,1240.2 L1798.7,1240.2 L1802.4,1240.2 L1806.0,1240.2 L1809.7,1240.2 L1813.4,1240.2 L1817.1,1240.2 L1820.8,1240.2 L1824.5,1092.2 L1828.2,1092.2 L1831.9,1240.2 L1835.5,1240.2 L1839.2,1240.2 L1842.9,1240.2 L1846.6,1130.9 L1850.3,1130.9 L1854.0,1240.2 L1857.7,1240.2 L1861.3,1240.2 L1865.0,1240.2 L1868.7,1240.2 L1872.4,1240.2 L1876.1,1240.2 L1879.8,1240.2 L1883.5,1240.2 L1887.1,1240.2 L1890.8,1240.2 L1894.5,1240.2 L1898.2,1240.2 L1901.9,1240.2 L1905.6,1169.1 L1909.3,1169.1 L1912.9,1240.2 L1916.6,1240.2 L1920.3,1184.9 L1924.0,1184.9 L1927.7,1176.2 L1931.4,1176.2 L1935.1,1240.2 L1938.8,1240.2 L1942.4,1240.2 L1946.1,1240.2 L1949.8,1240.2 L1953.5,1240.2 L1957.2,1190.9 L1960.9,1190.9 L1964.6,1226.6 L1968.2,1226.6 L1971.9,1200.4 L1975.6,1200.4 L1979.3,1133.1 L1983.0,1133.1 L1986.7,1240.2 L1990.4,1240.2 L1994.0,1240.2 L1997.7,1240.2 L2001.4,1240.2 L2005.1,1240.2 L2008.8,1240.2 L2012.5,1240.2 L2016.2,1240.2 L2019.9,1240.2 L2023.5,1240.2 L2027.2,1240.2 L2030.9,1240.2 L2034.6,1240.2 L2038.3,1195.8 L2042.0,1195.8 L2045.7,1240.2 L2049.3,1240.2 L2053.0,1223.1 L2056.7,1223.1 L2060.4,1240.2 L2064.1,1240.2 L2067.8,1223.1 L2071.5,1223.1 L2075.1,1240.2 L2078.8,1240.2 L2082.5,1216.2 L2086.2,1216.2 L2089.9,1240.2 L2093.6,1240.2 L2097.3,1083.2 L2100.9,1083.2 L2104.6,943.1 L2108.3,943.1 L2112.0,1240.2 L2115.7,1240.2 L2119.4,1240.2 L2123.1,1240.2 L2126.8,1240.2 L2130.4,1240.2 L2134.1,1240.2 L2137.8,1240.2 L2141.5,1240.2 L2145.2,1240.2 L2148.9,1240.2 L2152.6,1240.2 L2156.2,1110.7 L2159.9,1110.7 L2163.6,1153.5 L2167.3,1153.5 L2171.0,1240.2 L2174.7,1240.2 L2174.7,1240 L1290.0,1240 Z" fill="#CCA300" fill-opacity="0.1" stroke="none"/>
<path d="M1290.0,1240.2 L1293.7,1240.2 L1297.3,1240.2 L1301.0,1240.2 L1304.7,1240.2 L1308.4,1240.2 L1312.1,1240.2 L1315.8,1240.2 L1319.5,1240.2 L1323.1,1083.2 L1326.8,1083.2 L1330.5,1112.1 L1334.2,1112.1 L1337.9,1240.2 L1341.6,1240.2 L1345.3,1240.2 L1349.0,1240.2 L1352.6,1240.2 L1356.3,1240.2 L1360.0,1160.9 L1363.7,1160.9 L1367.4,1240.2 L1371.1,1240.2 L1374.8,1240.2 L1378.4,1240.2 L1382.1,1240.2 L1385.8,1240.2 L1389.5,1185.7 L1393.2,1185.7 L1396.9,1240.2 L1400.6,1240.2 L1404.2,1240.2 L1407.9,1240.2 L1411.6,1213.0 L1415.3,1213.0 L1419.0,1240.2 L1422.7,1240.2 L1426.4,1240.2 L1430.1,1240.2 L1433.7,1101.7 L1437.4,1101.7 L1441.1,1096.8 L1444.8,1096.8 L1448.5,1216.2 L1452.2,1216.2 L1455.9,1240.2 L1459.5,1240.2 L1463.2,1240.2 L1466.9,1240.2 L1470.6,1193.9 L1474.3,1193.9 L1478.0,1240.2 L1481.7,1240.2 L1485.3,1238.0 L1489.0,1238.0 L1492.7,1240.2 L1496.4,1240.2 L1500.1,1240.2 L1503.8,1240.2 L1507.5,1152.2 L1511.1,1152.2 L1514.8,1240.2 L1518.5,1240.2 L1522.2,1015.9 L1525.9,1015.9 L1529.6,1240.2 L1533.3,1240.2 L1537.0,974.4 L1540.6,974.4 L1544.3,1240.2 L1548.0,1240.2 L1551.7,1240.2 L1555.4,1240.2 L1559.1,1154.1 L1562.8,1154.1 L1566.4,1225.8 L1570.1,1225.8 L1573.8,1240.2 L1577.5,1240.2 L1581.2,1194.4 L1584.9,1194.4 L1588.6,1187.6 L1592.2,1187.6 L1595.9,1240.2 L1599.6,1240.2 L1603.3,1200.4 L1607.0,1200.4 L1610.7,1240.2 L1614.4,1240.2 L1618.0,1240.2 L1621.7,1240.2 L1625.4,1240.2 L1629.1,1240.2 L1632.8,1240.2 L1636.5,1240.2 L1640.2,1240.2 L1643.9,1240.2 L1647.5,1208.1 L1651.2,1208.1 L1654.9,1240.2 L1658.6,1240.2 L1662.3,1171.3 L1666.0,1171.3 L1669.7,1178.1 L1673.3,1178.1 L1677.0,1208.9 L1680.7,1208.9 L1684.4,1163.1 L1688.1,1163.1 L1691.8,1240.2 L1695.5,1240.2 L1699.1,1185.4 L1702.8,1185.4 L1706.5,1218.4 L1710.2,1218.4 L1713.9,1240.2 L1717.6,1240.2 L1721.3,1129.0 L1725.0,1129.0 L1728.6,985.0 L1732.3,985.0 L1736.0,1240.2 L1739.7,1240.2 L1743.4,1240.2 L1747.1,1240.2 L1750.8,1240.2 L1754.4,1240.2 L1758.1,1034.1 L1761.8,1034.1 L1765.5,1196.6 L1769.2,1196.6 L1772.9,1240.2 L1776.6,1240.2 L1780.2,1120.8 L1783.9,1120.8 L1787.6,1240.2 L1791.3,1240.2 L1795.0,1240.2 L1798.7,1240.2 L1802.4,1240.2 L1806.0,1240.2 L1809.7,1240.2 L1813.4,1240.2 L1817.1,1240.2 L1820.8,1240.2 L1824.5,1092.2 L1828.2,1092.2 L1831.9,1240.2 L1835.5,1240.2 L1839.2,1240.2 L1842.9,1240.2 L1846.6,1130.9 L1850.3,1130.9 L1854.0,1240.2 L1857.7,1240.2 L1861.3,1240.2 L1865.0,1240.2 L1868.7,1240.2 L1872.4,1240.2 L1876.1,1240.2 L1879.8,1240.2 L1883.5,1240.2 L1887.1,1240.2 L1890.8,1240.2 L1894.5,1240.2 L1898.2,1240.2 L1901.9,1240.2 L1905.6,1169.1 L1909.3,1169.1 L1912.9,1240.2 L1916.6,1240.2 L1920.3,1184.9 L1924.0,1184.9 L1927.7,1176.2 L1931.4,1176.2 L1935.1,1240.2 L1938.8,1240.2 L1942.4,1240.2 L1946.1,1240.2 L1949.8,1240.2 L1953.5,1240.2 L1957.2,1190.9 L1960.9,1190.9 L1964.6,1226.6 L1968.2,1226.6 L1971.9,1200.4 L1975.6,1200.4 L1979.3,1133.1 L1983.0,1133.1 L1986.7,1240.2 L1990.4,1240.2 L1994.0,1240.2 L1997.7,1240.2 L2001.4,1240.2 L2005.1,1240.2 L2008.8,1240.2 L2012.5,1240.2 L2016.2,1240.2 L2019.9,1240.2 L2023.5,1240.2 L2027.2,1240.2 L2030.9,1240.2 L2034.6,1240.2 L2038.3,1195.8 L2042.0,1195.8 L2045.7,1240.2 L2049.3,1240.2 L2053.0,1223.1 L2056.7,1223.1 L2060.4,1240.2 L2064.1,1240.2 L2067.8,1223.1 L2071.5,1223.1 L2075.1,1240.2 L2078.8,1240.2 L2082.5,1216.2 L2086.2,1216.2 L2089.9,1240.2 L2093.6,1240.2 L2097.3,1083.2 L2100.9,1083.2 L2104.6,943.1 L2108.3,943.1 L2112.0,1240.2 L2115.7,1240.2 L2119.4,1240.2 L2123.1,1240.2 L2126.8,1240.2 L2130.4,1240.2 L2134.1,1240.2 L2137.8,1240.2 L2141.5,1240.2 L2145.2,1240.2 L2148.9,1240.2 L2152.6,1240.2 L2156.2,1110.7 L2159.9,1110.7 L2163.6,1153.5 L2167.3,1153.5 L2171.0,1240.2 L2174.7,1240.2" fill="none" stroke="#c6a536" stroke-width="2" stroke-linejoin="round"/>
</g>
</svg>
<div class="ptitle" style="left:26px;top:188px"><span class="w"><span class="s" style="transform:scaleX(0.908)">Latency by percentile : Access</span></span></div>
<div class="yl" style="left:16px;top:255px">100 µs</div>
<div class="yl" style="left:16px;top:345px">75 µs</div>
<div class="yl" style="left:16px;top:435px">50 µs</div>
<div class="yl" style="left:16px;top:525px">25 µs</div>
<div class="yl" style="left:16px;top:617px">0 ns</div>
<div class="xl" style="left:199px;top:644px">12:50</div>
<div class="xl" style="left:345px;top:644px">13:00</div>
<div class="xl" style="left:489px;top:644px">13:10</div>
<div class="xl" style="left:635px;top:644px">13:20</div>
<div class="xl" style="left:781px;top:644px">13:30</div>
<div class="xl" style="left:925px;top:644px">13:40</div>
<div class="sw" style="left:1038px;top:288px;background:#89b174"></div>
<div class="lt" style="left:1083px;top:271px">100</div>
<div class="sw" style="left:1038px;top:330px;background:#e2ba53"></div>
<div class="lt" style="left:1083px;top:313px">50</div>
<div class="sw" style="left:1038px;top:372px;background:#86cede"></div>
<div class="lt" style="left:1083px;top:355px">75</div>
<div class="sw" style="left:1038px;top:414px;background:#e1894c"></div>
<div class="lt" style="left:1083px;top:397px">90</div>
<div class="sw" style="left:1038px;top:456px;background:#d1584a"></div>
<div class="lt" style="left:1083px;top:439px">95</div>
<div class="sw" style="left:1038px;top:498px;background:#3c76bb"></div>
<div class="lt" style="left:1083px;top:481px">99</div>
<div class="sw" style="left:1038px;top:540px;background:#ac4ba4"></div>
<div class="lt" style="left:1083px;top:523px">99.9</div>
<div class="sw" style="left:1038px;top:582px;background:#6d5e9c"></div>
<div class="lt" style="left:1083px;top:565px">99.99</div>
<div class="sw" style="left:1038px;top:624px;background:#5d854a"></div>
<div class="lt" style="left:1083px;top:607px">99.999</div>
<div class="sw" style="left:1038px;top:666px;background:#c6a536"></div>
<div class="lt" style="left:1083px;top:649px">99.999<span class="dim">9</span></div>
<div class="sbar" style="left:1152px;top:268px"></div>
<div class="ptitle" style="left:1204px;top:188px"><span class="w"><span class="s" style="transform:scaleX(0.907)">Latency by percentile : Core</span></span></div>
<div class="yl" style="left:1194px;top:255px">125 µs</div>
<div class="yl" style="left:1194px;top:327px">100 µs</div>
<div class="yl" style="left:1194px;top:399px">75 µs</div>
<div class="yl" style="left:1194px;top:471px">50 µs</div>
<div class="yl" style="left:1194px;top:543px">25 µs</div>
<div class="yl" style="left:1194px;top:617px">0 ns</div>
<div class="xl" style="left:1377px;top:644px">12:50</div>
<div class="xl" style="left:1523px;top:644px">13:00</div>
<div class="xl" style="left:1667px;top:644px">13:10</div>
<div class="xl" style="left:1813px;top:644px">13:20</div>
<div class="xl" style="left:1959px;top:644px">13:30</div>
<div class="xl" style="left:2103px;top:644px">13:40</div>
<div class="sw" style="left:2216px;top:288px;background:#89b174"></div>
<div class="lt" style="left:2261px;top:271px">100</div>
<div class="sw" style="left:2216px;top:330px;background:#e2ba53"></div>
<div class="lt" style="left:2261px;top:313px">50</div>
<div class="sw" style="left:2216px;top:372px;background:#86cede"></div>
<div class="lt" style="left:2261px;top:355px">75</div>
<div class="sw" style="left:2216px;top:414px;background:#e1894c"></div>
<div class="lt" style="left:2261px;top:397px">90</div>
<div class="sw" style="left:2216px;top:456px;background:#d1584a"></div>
<div class="lt" style="left:2261px;top:439px">95</div>
<div class="sw" style="left:2216px;top:498px;background:#3c76bb"></div>
<div class="lt" style="left:2261px;top:481px">99</div>
<div class="sw" style="left:2216px;top:540px;background:#ac4ba4"></div>
<div class="lt" style="left:2261px;top:523px">99.9</div>
<div class="sw" style="left:2216px;top:582px;background:#6d5e9c"></div>
<div class="lt" style="left:2261px;top:565px">99.99</div>
<div class="sw" style="left:2216px;top:624px;background:#5d854a"></div>
<div class="lt" style="left:2261px;top:607px">99.999</div>
<div class="sw" style="left:2216px;top:666px;background:#c6a536"></div>
<div class="lt" style="left:2261px;top:649px">99.999<span class="dim">9</span></div>
<div class="sbar" style="left:2330px;top:268px"></div>
<div class="ptitle" style="left:26px;top:796px"><span class="w"><span class="s" style="transform:scaleX(0.917)">Jitter by percentile : Access</span><svg class="caret" width="14" height="10" viewBox="0 0 14 10"><path d="M1.4 1.5 L7 7.2 L12.6 1.5" fill="none" stroke="#7b8087" stroke-width="2.4" stroke-linecap="round" stroke-linejoin="round"/></svg></span></div>
<div class="yl" style="left:2px;top:863px">60 µs</div>
<div class="yl" style="left:2px;top:923px">50 µs</div>
<div class="yl" style="left:2px;top:983px">40 µs</div>
<div class="yl" style="left:2px;top:1043px">30 µs</div>
<div class="yl" style="left:2px;top:1103px">20 µs</div>
<div class="yl" style="left:2px;top:1163px">10 µs</div>
<div class="yl" style="left:2px;top:1225px">0 ns</div>
<div class="xl" style="left:187px;top:1252px">12:50</div>
<div class="xl" style="left:335px;top:1252px">13:00</div>
<div class="xl" style="left:483px;top:1252px">13:10</div>
<div class="xl" style="left:629px;top:1252px">13:20</div>
<div class="xl" style="left:777px;top:1252px">13:30</div>
<div class="xl" style="left:925px;top:1252px">13:40</div>
<div class="sw" style="left:1038px;top:896px;background:#89b174"></div>
<div class="lt" style="left:1083px;top:879px">100</div>
<div class="sw" style="left:1038px;top:938px;background:#e2ba53"></div>
<div class="lt" style="left:1083px;top:921px">50</div>
<div class="sw" style="left:1038px;top:980px;background:#86cede"></div>
<div class="lt" style="left:1083px;top:963px">75</div>
<div class="sw" style="left:1038px;top:1022px;background:#e1894c"></div>
<div class="lt" style="left:1083px;top:1005px">90</div>
<div class="sw" style="left:1038px;top:1064px;background:#d1584a"></div>
<div class="lt" style="left:1083px;top:1047px">95</div>
<div class="sw" style="left:1038px;top:1106px;background:#3c76bb"></div>
<div class="lt" style="left:1083px;top:1089px">99</div>
<div class="sw" style="left:1038px;top:1148px;background:#ac4ba4"></div>
<div class="lt" style="left:1083px;top:1131px">99.9</div>
<div class="sw" style="left:1038px;top:1190px;background:#6d5e9c"></div>
<div class="lt" style="left:1083px;top:1173px">99.99</div>
<div class="sw" style="left:1038px;top:1232px;background:#5d854a"></div>
<div class="lt" style="left:1083px;top:1215px">99.999</div>
<div class="sw" style="left:1038px;top:1274px;background:#c6a536"></div>
<div class="lt" style="left:1083px;top:1257px">99.999<span class="dim">9</span></div>
<div class="sbar" style="left:1152px;top:876px"></div>
<div class="ptitle" style="left:1204px;top:796px"><span class="w"><span class="s" style="transform:scaleX(0.914)">Jitter by percentile : Core</span></span></div>
<div class="yl" style="left:1180px;top:863px">60 µs</div>
<div class="yl" style="left:1180px;top:923px">50 µs</div>
<div class="yl" style="left:1180px;top:983px">40 µs</div>
<div class="yl" style="left:1180px;top:1043px">30 µs</div>
<div class="yl" style="left:1180px;top:1103px">20 µs</div>
<div class="yl" style="left:1180px;top:1163px">10 µs</div>
<div class="yl" style="left:1180px;top:1225px">0 ns</div>
<div class="xl" style="left:1365px;top:1252px">12:50</div>
<div class="xl" style="left:1513px;top:1252px">13:00</div>
<div class="xl" style="left:1661px;top:1252px">13:10</div>
<div class="xl" style="left:1807px;top:1252px">13:20</div>
<div class="xl" style="left:1955px;top:1252px">13:30</div>
<div class="xl" style="left:2103px;top:1252px">13:40</div>
<div class="sw" style="left:2216px;top:896px;background:#89b174"></div>
<div class="lt" style="left:2261px;top:879px">100</div>
<div class="sw" style="left:2216px;top:938px;background:#e2ba53"></div>
<div class="lt" style="left:2261px;top:921px">50</div>
<div class="sw" style="left:2216px;top:980px;background:#86cede"></div>
<div class="lt" style="left:2261px;top:963px">75</div>
<div class="sw" style="left:2216px;top:1022px;background:#e1894c"></div>
<div class="lt" style="left:2261px;top:1005px">90</div>
<div class="sw" style="left:2216px;top:1064px;background:#d1584a"></div>
<div class="lt" style="left:2261px;top:1047px">95</div>
<div class="sw" style="left:2216px;top:1106px;background:#3c76bb"></div>
<div class="lt" style="left:2261px;top:1089px">99</div>
<div class="sw" style="left:2216px;top:1148px;background:#ac4ba4"></div>
<div class="lt" style="left:2261px;top:1131px">99.9</div>
<div class="sw" style="left:2216px;top:1190px;background:#6d5e9c"></div>
<div class="lt" style="left:2261px;top:1173px">99.99</div>
<div class="sw" style="left:2216px;top:1232px;background:#5d854a"></div>
<div class="lt" style="left:2261px;top:1215px">99.999</div>
<div class="sw" style="left:2216px;top:1274px;background:#c6a536"></div>
<div class="lt" style="left:2261px;top:1257px">99.999<span class="dim">9</span></div>
<div class="sbar" style="left:2330px;top:876px"></div>
</div>
</body></html>
